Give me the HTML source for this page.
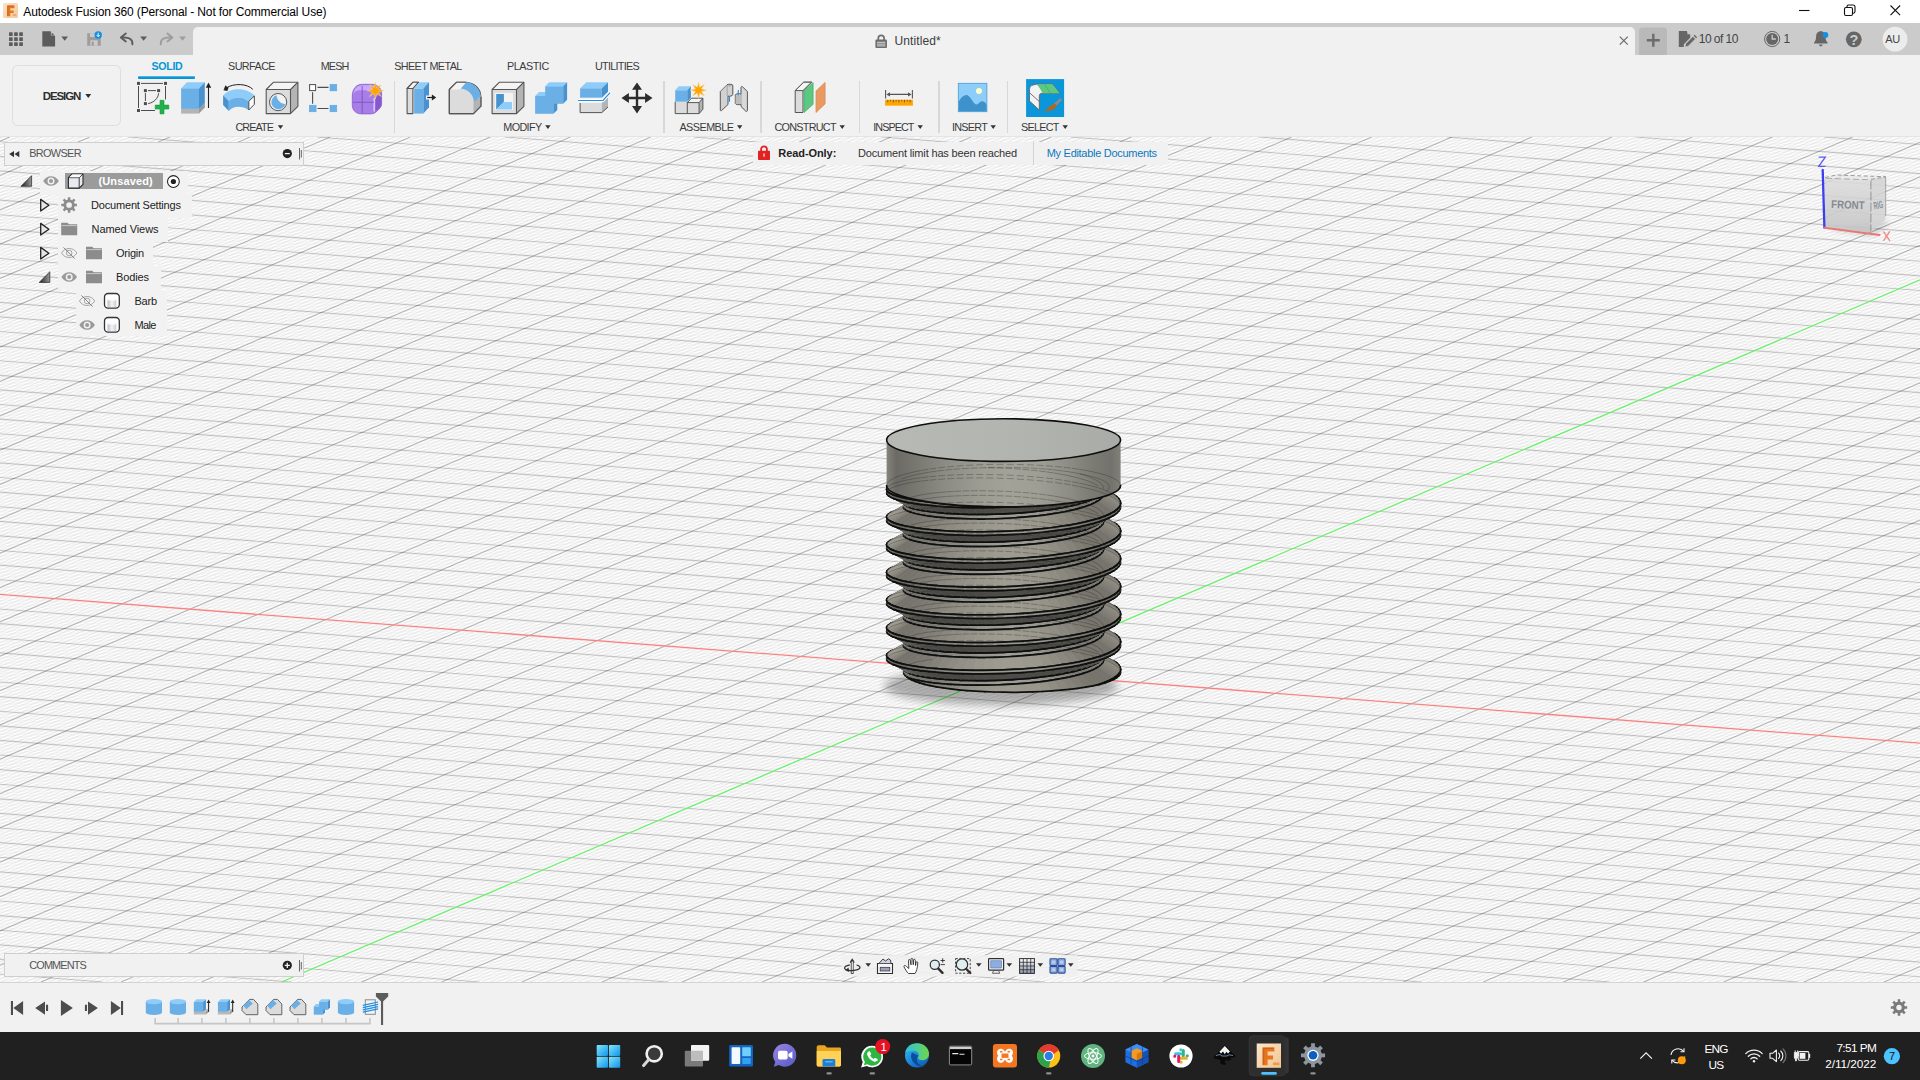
<!DOCTYPE html>
<html><head><meta charset="utf-8"><title>Autodesk Fusion 360</title>
<style>
*{box-sizing:border-box;margin:0;padding:0}
html,body{width:1920px;height:1080px;overflow:hidden;background:#f0f0f0}
body{font-family:"Liberation Sans",sans-serif;position:relative}
.abs,.t{position:absolute}
.t{white-space:nowrap}
svg{position:absolute;overflow:visible}
#titlebar{left:0;top:0;width:1920px;height:23px;background:#fff}
#appbar{left:0;top:23px;width:1920px;height:32px;background:#cbcbcb}
#doctab{left:193px;top:27px;width:1442px;height:28px;background:#f1f1f1;border-radius:5px 5px 0 0}
#toolbar{left:0;top:55px;width:1920px;height:82px;background:#f1f1f1;border-bottom:1px solid #e4e4e4}
#viewport{left:0;top:137px;width:1920px;height:845px;background:#fefefe;overflow:hidden}
#timeline{left:0;top:982px;width:1920px;height:50px;background:#f1f1f1;border-top:1px solid #d4d4d4}
#taskbar{left:0;top:1032px;width:1920px;height:48px;background:#202020}
.sep{position:absolute;width:1.600px;background:#d8d8d8;top:81px;height:51.500px}

.panel{position:absolute;background:#f1f1f1;border:1px solid #cfcfcf}
.rowbg{position:absolute;background:rgba(240,240,240,.82);height:24px}
</style></head><body>
<div id="titlebar" class="abs"><svg width="15" height="15" viewBox="0 0 15 15" style="left:3px;top:3px" ><defs><linearGradient id="flg" x1="0" y1="0" x2="1" y2="1"><stop offset="0" stop-color="#f9e3c8"/><stop offset="1" stop-color="#f3c999"/></linearGradient></defs>
<rect x="0" y="0" width="15" height="15" rx="1.5" fill="url(#flg)"/>
<path d="M4.2 2.6h7.2v2.6H7.3v2.2h3.3v2.5H7.3v3.4H4.2z" fill="#e8741e"/>
<path d="M4.2 2.6h7.2l-.9.9H5.2v9l-1 .8z" fill="#b4500f" opacity=".55"/>
<path d="M9.6 11.2h3.6v1.6H9.6z" fill="#e89a58" opacity=".8"/></svg><span class="t" style="left:23.30px;top:3.50px;font-size:12px;line-height:17px;color:#000;letter-spacing:-0.127px;">Autodesk Fusion 360 (Personal - Not for Commercial Use)</span><svg width="120" height="23" style="left:1790px;top:0" viewBox="0 0 120 23" fill="none" stroke="#111" stroke-width="1.1">
<path d="M9 10.5H19.5"/>
<rect x="54.5" y="7.5" width="8" height="8" rx="1.5"/><path d="M57 7.3V6.6a1.6 1.6 0 0 1 1.6-1.6H63a2 2 0 0 1 2 2v4.6a1.6 1.6 0 0 1-1.6 1.6H62.8"/>
<path d="M100.5 5.5l9.6 9.6M110.1 5.5l-9.6 9.6"/></svg></div>
<div id="appbar" class="abs"></div>
<div id="doctab" class="abs"></div>
<svg width="200" height="56" viewBox="0 0 200 56" style="left:0px;top:0px" ><rect x="9" y="32.3" width="3.7" height="3.7" rx=".6" fill="#5c5c5c"/><rect x="9" y="37.3" width="3.7" height="3.7" rx=".6" fill="#5c5c5c"/><rect x="9" y="42.3" width="3.7" height="3.7" rx=".6" fill="#5c5c5c"/><rect x="14.1" y="32.3" width="3.7" height="3.7" rx=".6" fill="#5c5c5c"/><rect x="14.1" y="37.3" width="3.7" height="3.7" rx=".6" fill="#5c5c5c"/><rect x="14.1" y="42.3" width="3.7" height="3.7" rx=".6" fill="#5c5c5c"/><rect x="19.2" y="32.3" width="3.7" height="3.7" rx=".6" fill="#5c5c5c"/><rect x="19.2" y="37.3" width="3.7" height="3.7" rx=".6" fill="#5c5c5c"/><rect x="19.2" y="42.3" width="3.7" height="3.7" rx=".6" fill="#5c5c5c"/><path d="M42.3 31.3h8.2l4.6 4.6v10.6H42.3z" fill="#5c5c5c"/><path d="M50.9 31.1v4.5h4.5z" fill="#cbcbcb"/><path d="M51.6 32.4v2.8h2.8z" fill="#5c5c5c"/><path d="M61.3 36.4h6.8l-3.4 4.4z" fill="#5c5c5c"/><path d="M87.2 33.2h10.6l3 3v9.5H87.2z" fill="#9d9d9d"/><rect x="90" y="33.2" width="6.2" height="3.8" fill="#cbcbcb"/><rect x="90.3" y="40.3" width="7.4" height="5.4" fill="#cbcbcb"/><rect x="91.6" y="41.6" width="2.2" height="4.1" fill="#9d9d9d"/><circle cx="98.2" cy="35" r="3.7" fill="#1390e0"/><path d="M98.2 32.8v3.6M96.6 35l1.6 1.7 1.6-1.7" stroke="#fff" stroke-width=".9" fill="none"/><path d="M132.4 44.4c.4-4.6-2.6-7.3-9.6-6.9" fill="none" stroke="#5c5c5c" stroke-width="1.9" stroke-linecap="round"/><path d="M125.8 33.6l-5 3.9 5 3.9" fill="none" stroke="#5c5c5c" stroke-width="1.9" stroke-linecap="round" stroke-linejoin="round"/><path d="M140.2 36.4h6.8l-3.4 4.4z" fill="#5c5c5c"/><path d="M160.8 44.4c-.4-4.6 2.6-7.3 9.6-6.9" fill="none" stroke="#9d9d9d" stroke-width="1.9" stroke-linecap="round"/><path d="M167.4 33.6l5 3.9-5 3.9" fill="none" stroke="#9d9d9d" stroke-width="1.9" stroke-linecap="round" stroke-linejoin="round"/><path d="M179.2 36.4h6.8l-3.4 4.4z" fill="#9d9d9d"/></svg><svg width="12.4" height="14" viewBox="0 0 12.4 14" style="left:875px;top:34px" ><path d="M3.3 6V4.3a2.9 2.9 0 0 1 5.8 0V6" fill="none" stroke="#6e6e6e" stroke-width="1.7"/>
<rect x=".4" y="5.6" width="11.6" height="8.4" rx="1" fill="#6e6e6e"/>
<path d="M2 8.3h8.4M2 10.1h8.4M2 11.9h8.4" stroke="#f1f1f1" stroke-width=".8"/></svg><span class="t" style="left:894.60px;top:32.80px;font-size:12px;line-height:17px;color:#3c3c3c;letter-spacing:0.092px;">Untitled*</span><svg width="1920" height="56" viewBox="0 0 1920 56" style="left:0px;top:0px" ><path d="M1619.8 36.6l8 8M1627.8 36.6l-8 8" stroke="#6a6a6a" stroke-width="1.2"/><path d="M1639 55V31a3.5 3.5 0 0 1 3.5-3.5h21A3.5 3.5 0 0 1 1667 31V55z" fill="#b9b9b9"/><path d="M1646.8 40.2h13M1653.3 33.7v13" stroke="#6c6c6c" stroke-width="2.4"/><path d="M1678.8 30.9h7.8l3.6 3.6v3.2l-6.4 6.6v2.6h-5z" fill="#666"/><path d="M1687.3 30.6v3.7h3.7z" fill="#cbcbcb"/><path d="M1685 46.9l.7-3.2 7.2-7.3 2.5 2.5-7.2 7.3z" fill="#666" stroke="#cbcbcb" stroke-width=".7"/><path d="M1693.6 35.7l1-1 2.5 2.5-1 1z" fill="#666"/><circle cx="1772.2" cy="39" r="7.6" fill="none" stroke="#666" stroke-width="1"/><circle cx="1772.2" cy="39" r="6" fill="#666"/><path d="M1772.2 34.8V39h3.6" stroke="#cbcbcb" stroke-width="1.3" fill="none"/><path d="M1820.8 31.2c-3.2 0-4.7 2.4-4.7 5.4 0 3.8-1.3 5-2 5.9v.9h13.4v-.9c-.7-.9-2-2.100-2-5.900 0-3-1.500-5.400-4.700-5.400z" fill="#666"/><path d="M1819 44.600a1.800 1.800 0 0 0 3.600 0z" fill="#666"/><circle cx="1825.4" cy="35" r="2.9" fill="#1390e0"/><circle cx="1853.8" cy="39.300" r="7.900" fill="#666"/><circle cx="1895" cy="39.200" r="12.400" fill="#ececec"/></svg><span class="t" style="left:1698.80px;top:30.50px;font-size:12px;line-height:17px;color:#444;letter-spacing:-0.548px;">10 of 10</span><span class="t" style="left:1783.60px;top:30.50px;font-size:12px;line-height:17px;color:#444;letter-spacing:-1.776px;">1</span><span class="t" style="left:1849.60px;top:29.60px;font-size:14.5px;line-height:20px;color:#cbcbcb;letter-spacing:-0.455px;font-weight:bold;">?</span><span class="t" style="left:1885.30px;top:31.80px;font-size:11px;line-height:15px;color:#444;letter-spacing:-0.441px;">AU</span>
<div id="toolbar" class="abs"></div>
<div class="abs" style="left:11.600px;top:65.200px;width:109.600px;height:61.200px;border:1.500px solid #dedede;border-radius:5.500px"></div><span class="t" style="left:42.70px;top:87.80px;font-size:11.5px;line-height:16px;color:#2f2f2f;letter-spacing:-1.099px;font-weight:bold;">DESIGN</span><span class="t" style="left:151.50px;top:58.80px;font-size:10.6px;line-height:15px;color:#0696d7;letter-spacing:-0.278px;font-weight:bold;">SOLID</span><span class="t" style="left:228.00px;top:58.80px;font-size:10.8px;line-height:15px;color:#3c3c3c;letter-spacing:-0.573px;">SURFACE</span><span class="t" style="left:320.80px;top:58.80px;font-size:10.8px;line-height:15px;color:#3c3c3c;letter-spacing:-0.926px;">MESH</span><span class="t" style="left:394.20px;top:58.80px;font-size:10.8px;line-height:15px;color:#3c3c3c;letter-spacing:-0.593px;">SHEET METAL</span><span class="t" style="left:507.00px;top:58.80px;font-size:10.8px;line-height:15px;color:#3c3c3c;letter-spacing:-0.467px;">PLASTIC</span><span class="t" style="left:595.00px;top:58.80px;font-size:10.8px;line-height:15px;color:#3c3c3c;letter-spacing:-0.713px;">UTILITIES</span><div class="abs" style="left:138.200px;top:76.200px;width:56.500px;height:3.200px;border-radius:1px;background:linear-gradient(#7cc6ee,#0696d7 45%)"></div><div class="sep" style="left:393.7px"></div><div class="sep" style="left:663px"></div><div class="sep" style="left:760px"></div><div class="sep" style="left:858.7px"></div><div class="sep" style="left:938px"></div><div class="sep" style="left:1006.8px"></div><span class="t" style="left:235.40px;top:119.70px;font-size:10.8px;line-height:15px;color:#3a3a3a;letter-spacing:-0.901px;">CREATE</span><span class="t" style="left:503.30px;top:119.70px;font-size:10.8px;line-height:15px;color:#3a3a3a;letter-spacing:-0.633px;">MODIFY</span><span class="t" style="left:679.40px;top:119.70px;font-size:10.8px;line-height:15px;color:#3a3a3a;letter-spacing:-0.517px;">ASSEMBLE</span><span class="t" style="left:774.40px;top:119.70px;font-size:10.8px;line-height:15px;color:#3a3a3a;letter-spacing:-0.710px;">CONSTRUCT</span><span class="t" style="left:873.30px;top:119.70px;font-size:10.8px;line-height:15px;color:#3a3a3a;letter-spacing:-0.944px;">INSPECT</span><span class="t" style="left:952.00px;top:119.70px;font-size:10.8px;line-height:15px;color:#3a3a3a;letter-spacing:-0.735px;">INSERT</span><span class="t" style="left:1021.00px;top:119.70px;font-size:10.8px;line-height:15px;color:#3a3a3a;letter-spacing:-0.711px;">SELECT</span><svg width="1920" height="137" viewBox="0 0 1920 137" style="left:0px;top:0px" ><g stroke="#4d4d4d" stroke-width="1" fill="none"><path d="M141 83.400H163M138.500 86V108M141 110.500H155M165.500 86V99.500"/><path d="M148 90.600H156M145.400 93V101M158.600 93.300C158 98.500 154 102.500 148.200 103.600"/></g><rect x="137" y="81.9" width="3" height="3" fill="#4d4d4d"/><rect x="164" y="81.9" width="3" height="3" fill="#4d4d4d"/><rect x="137" y="109" width="3" height="3" fill="#4d4d4d"/><rect x="143.9" y="89.1" width="3" height="3" fill="#4d4d4d"/><rect x="157.1" y="89.1" width="3" height="3" fill="#4d4d4d"/><rect x="143.9" y="102.1" width="3" height="3" fill="#4d4d4d"/><path d="M160 100.300h4v4.800h4.800v4h-4.800v4.800h-4v-4.800h-4.800v-4h4.800z" fill="#22b14c" stroke="#189a3e" stroke-width=".6"/><path d="M181.1 108.8H199V113.6H181.1z" fill="#b4b4b4"/><path d="M181.1 108.8l5.8 -6H204.8L199 108.8z" fill="#b4b4b4"/><path d="M199 108.8l5.8 -6V107.6L199 113.6z" fill="#9a9a9a"/><path d="M181.1 88.2H199V108.8H181.1z" fill="#6ab0e6"/><path d="M181.1 88.2l5.8 -6H204.8L199 88.2z" fill="#8ecdfa"/><path d="M199 88.2l5.8 -6V102.8L199 108.8z" fill="#4792cf"/><path d="M208.500 108V86" stroke="#222" stroke-width="1.100"/><path d="M208.500 82.600l2.700 5.200h-5.400z" fill="#222"/><path d="M223.100 95.300C228 90.500 233 89.200 238.300 89.200S249.500 90.800 254.600 95.300L248.500 101.200C245 98.600 241.500 97.600 238.300 97.600S231 98.800 228.800 101z" fill="#8ecdfa"/><path d="M223.100 95.300L228.800 101V110.900L223.100 105.100z" fill="#4792cf"/><path d="M228.800 101C231 98.800 235 97.600 238.300 97.600S245 98.600 248.500 101.200V110C245.500 107.800 241.800 106.800 238.300 106.800S231.500 108.200 228.800 110.900z" fill="#6ab0e6"/><path d="M248.800 101.300L254.300 96V104.400L248.800 110z" fill="#fff" stroke="#444" stroke-width="1"/><path d="M252.800 89.300C247 83.500 234 83 226 88" fill="none" stroke="#222" stroke-width="1"/><path d="M223.400 90.200l5.200-3.600-1.200 4.300z" fill="#222"/><path d="M223.600 90l1.800-4.700 3.200 3.200z" fill="#222"/><path d="M266.2 89.5H290.5V113.6H266.2z" fill="#dcdcdc"/><path d="M266.2 89.5l7.4 -7.3H297.9L290.5 89.5z" fill="#f4f4f4"/><path d="M290.5 89.5l7.4 -7.3V106.3L290.5 113.6z" fill="#b4b4b4"/><path d="M266.2 113.6V89.5L273.6 82.2H297.9V106.3L290.5 113.6z" fill="none" stroke="#555" stroke-width="1.1" stroke-linejoin="round"/><path d="M266.2 89.5H290.5V113.6M290.5 89.5L297.9 82.2" fill="none" stroke="#555" stroke-width="1.1" stroke-linejoin="round"/><circle cx="278.100" cy="102.100" r="8.600" fill="#f2f2f2" stroke="#555" stroke-width="1"/><path d="M276.500 95.300A7.100 7.100 0 1 0 285.300 104.200C280.500 103.600 277 100.300 276.500 95.300z" fill="#6ab0e6"/><path d="M317.500 87.400H328.500M312.600 92.300V103.700M317.500 108.500H328.500" stroke="#4d4d4d" stroke-width="1.100"/><rect x="309.600" y="84.600" width="6" height="6" fill="#fff" stroke="#4d4d4d" stroke-width="1"/><rect x="330" y="84.3" width="6.800" height="6.600" fill="#6ab0e6" stroke="#5aa4de" stroke-width=".5"/><rect x="309.3" y="105.2" width="6.800" height="6.600" fill="#6ab0e6" stroke="#5aa4de" stroke-width=".5"/><rect x="330" y="105.2" width="6.800" height="6.600" fill="#6ab0e6" stroke="#5aa4de" stroke-width=".5"/><path d="M352.300 96c0-7 4-11.700 10-11.700h9c6 0 10.300 4 10.300 9.500v9.500c0 2.500-.8 4-2.500 5.700l-2.500 2.500c-1.700 1.700-3.500 2.400-6 2.400h-9c-5.500 0-9.300-3.500-9.300-9z" fill="#a77de8" stroke="#8a5ccc" stroke-width=".8"/><path d="M353.500 94c.5-5.500 4-8.700 9-8.700h8.500c3 0 5 .8 6.500 2.300l-3.500 4c-1.500-1-3-1.400-5-1.400h-9c-3.500 0-5.500 1.500-6.500 3.800z" fill="#caa8ff"/><path d="M375.500 97.500l5.800-4.500v10.500c0 2-1 3.500-2.300 4.800l-3.500 3.500z" fill="#8459cf"/><path d="M374.200 98v13.500" stroke="#d9c4ff" stroke-width="1.600"/><path d="M362.200 86V113.500M353 102.300H374" stroke="#7d55c2" stroke-width=".9" fill="none"/><path d="M375.4 82.2L376.7 87.6L381.3 84.7L378.4 89.3L383.8 90.6L378.4 91.9L381.3 96.5L376.7 93.6L375.4 99.0L374.1 93.6L369.5 96.5L372.4 91.9L367.0 90.6L372.4 89.3L369.5 84.7L374.1 87.6z" fill="#ffa500" stroke="#f6d9a0" stroke-width=".5"/><path d="M407.100 113.600V88.500L413.100 82.200H418.500L412.900 88.500V113.600z" fill="#dcdcdc" stroke="#555" stroke-width="1.100" stroke-linejoin="round"/><path d="M407.100 88.500L413.100 82.200H418.500L412.900 88.500z" fill="#f4f4f4" stroke="#555" stroke-width="1.100" stroke-linejoin="round"/><path d="M414.1 88.5H423.4V113.6H414.1z" fill="#6ab0e6"/><path d="M414.1 88.5l5.6 -6.3H429L423.4 88.5z" fill="#8ecdfa"/><path d="M423.4 88.5l5.6 -6.3V107.3L423.4 113.6z" fill="#4792cf"/><rect x="426" y="95.500" width="5" height="4" fill="#f1f1f1"/><path d="M427.200 97.500H433" stroke="#222" stroke-width="1.200"/><path d="M436.200 97.500l-4.300-2.900v5.800z" fill="#222"/><path d="M449.300 113.600V89.500L456.700 82.200H466C474 82.600 480.500 88.500 480.900 96.500V106.200L473.500 113.600z" fill="#dcdcdc" stroke="#555" stroke-width="1.100" stroke-linejoin="round"/><path d="M449.300 89.500L456.700 82.200H466L460.500 88.700C459 89.300 457 89.500 455 89.500z" fill="#f4f4f4"/><path d="M473.500 101.500L480.900 96.500V106.200L473.500 113.600z" fill="#b4b4b4"/><path d="M460.800 88.600L466.500 82.200C474.500 83 480.300 89 480.900 96.300L474 102C473.500 95 468.500 89.500 460.800 88.600z" fill="#6ab0e6"/><path d="M449.300 113.600V89.500L456.700 82.200H466M480.900 97V106.200L473.500 113.600H449.300" fill="none" stroke="#555" stroke-width="1.100" stroke-linejoin="round"/><path d="M492.1 89.5H516.5V113.6H492.1z" fill="#dcdcdc"/><path d="M492.1 89.5l7.4 -7.3H523.9L516.5 89.5z" fill="#f4f4f4"/><path d="M516.5 89.5l7.4 -7.3V106.3L516.5 113.6z" fill="#b4b4b4"/><path d="M492.1 113.6V89.5L499.5 82.2H523.9V106.3L516.5 113.6z" fill="none" stroke="#555" stroke-width="1.1" stroke-linejoin="round"/><path d="M492.1 89.5H516.5V113.6M516.5 89.5L523.9 82.2" fill="none" stroke="#555" stroke-width="1.1" stroke-linejoin="round"/><rect x="494.800" y="92.900" width="18.200" height="17" fill="#f3f3f3"/><path d="M496.200 93.900H503.900V102.100L496.200 109.400z" fill="#4792cf"/><path d="M503.900 102.100H512V109.400H496.200z" fill="#8ecdfa"/><path d="M535.1 96H553.4V113.8H535.1z" fill="#6ab0e6"/><path d="M535.1 96l3.9 -3.9H557.3L553.4 96z" fill="#8ecdfa"/><path d="M553.4 96l3.9 -3.9V109.9L553.4 113.8z" fill="#4792cf"/><path d="M545.2 86.2H563.2V103.8H545.2z" fill="#6ab0e6"/><path d="M545.2 86.2l3.9 -4H567.1L563.2 86.2z" fill="#8ecdfa"/><path d="M563.2 86.2l3.9 -4V99.8L563.2 103.8z" fill="#4792cf"/><rect x="545" y="96" width="8.400" height="10" fill="#6ab0e6"/><path d="M580.1 103H601.8V112.6H580.1z" fill="#dcdcdc"/><path d="M580.1 103l6.2 -5.6H608L601.8 103z" fill="#f4f4f4"/><path d="M601.8 103l6.2 -5.6V107L601.8 112.6z" fill="#b4b4b4"/><path d="M580.100 103V112.600H601.800L608 107" fill="none" stroke="#555" stroke-width="1"/><path d="M580.1 88.2H601.8V97.7H580.1z" fill="#6ab0e6"/><path d="M580.1 88.2l6.2 -6H608L601.8 88.2z" fill="#8ecdfa"/><path d="M601.8 88.2l6.2 -6V91.7L601.8 97.7z" fill="#4792cf"/><path d="M578 100.500H603L609.900 92.800" fill="none" stroke="#fff" stroke-width="3"/><path d="M578 100.500H603L609.900 92.800" fill="none" stroke="#1e8fe6" stroke-width="1.200"/><path d="M627 98H647M637 88V108" stroke="#2d2d2d" stroke-width="2.400"/><path d="M637 82.400l5 7.400h-10zM637 113.400l5-7.400h-10zM621.500 98l7.400-5v10zM652.500 98l-7.400-5v10z" fill="#2d2d2d"/><path d="M675.2 101.7H687.3V113.6H675.2z" fill="#dcdcdc"/><path d="M675.2 101.7l0 0H687.3L687.3 101.7z" fill="#dcdcdc"/><path d="M687.3 101.7l0 0V113.6L687.3 113.6z" fill="#dcdcdc"/><path d="M687.3 102.6H699.1V113.6H687.3z" fill="#dcdcdc"/><path d="M687.3 102.6l3.8 -4.4H702.9L699.1 102.6z" fill="#f4f4f4"/><path d="M699.1 102.6l3.8 -4.4V109.2L699.1 113.6z" fill="#b4b4b4"/><path d="M675.200 101.700V113.600H699.100L702.900 109.200V98.200H691.500L687.300 102.600M687.300 102V113.600M687.300 102.600H699.100V113.600M699.100 102.600L702.900 98.200" fill="none" stroke="#555" stroke-width="1" stroke-linejoin="round"/><path d="M675.2 90.2H687.3V101.7H675.2z" fill="#6ab0e6"/><path d="M675.2 90.2l3.6 -4H690.9L687.3 90.2z" fill="#8ecdfa"/><path d="M687.3 90.2l3.6 -4V97.7L687.3 101.7z" fill="#4792cf"/><path d="M698.5 81.9L699.7 87.2L704.4 84.3L701.5 89.0L706.8 90.2L701.5 91.4L704.4 96.1L699.7 93.2L698.5 98.5L697.3 93.2L692.6 96.1L695.5 91.4L690.2 90.2L695.5 89.0L692.6 84.3L697.3 87.2z" fill="#ffa500" stroke="#f6d9a0" stroke-width=".5"/><path d="M720.300 91.500L727 84.800C728 84 732.500 84 732.800 85.200V94.500C732.800 96 729.500 96.500 728 96.200V104.500L721.500 110.600C720.800 111 720.300 110.800 720.300 110z" fill="#d2d2d2" stroke="#555" stroke-width="1" stroke-linejoin="round"/><path d="M727.200 85.200V96M720.600 91.600L727 85" fill="none" stroke="#999" stroke-width=".8"/><ellipse cx="729.800" cy="85.800" rx="1.800" ry=".7" fill="#aaa"/><path d="M741 87.500C741 86.500 741.800 86.200 742.500 86.800L747.400 91.500V110.500C747.400 111.500 746.500 111.800 745.800 111.200L741 106.500V104.200C739.500 105 735.500 104.800 735.300 103.400V95C735.500 93.600 739.500 93.300 741 94.200z" fill="#d8d8d8" stroke="#555" stroke-width="1" stroke-linejoin="round"/><path d="M741 94.200V104.200" stroke="#999" stroke-width=".8"/><path d="M735.600 95.500H740.800V103.800H735.600z" fill="#bcbcbc"/><path d="M729.500 96.800V101.800M738.300 90V95.500" stroke="#1e8fe6" stroke-width="1.100"/><path d="M795.200 112.500V90.600L803.700 82.200H811.500L803 90.600V112.500z" fill="#dcdcdc" stroke="#555" stroke-width="1" stroke-linejoin="round"/><path d="M795.200 90.600L803.700 82.200H811.500L803 90.600z" fill="#f4f4f4" stroke="#555" stroke-width="1" stroke-linejoin="round"/><path d="M804 90.800L813.100 82.600V104.300L804 112.500z" fill="#5cc882" stroke="#3fae68" stroke-width=".7"/><path d="M816 91L825.100 82.400V103.900L816 112.500z" fill="#e89a62" stroke="#d98850" stroke-width=".7"/><rect x="885.100" y="99.800" width="27.800" height="5.900" fill="#ffa500"/><path d="M887.8 99.800v2.6M890.58 99.800v1.6M893.36 99.800v2.6M896.14 99.800v1.6M898.92 99.800v2.6M901.7 99.800v1.6M904.48 99.800v2.6M907.26 99.800v1.6M910.04 99.800v2.6" stroke="#5a4a20" stroke-width=".8"/><path d="M885.600 90V98.400M912.400 90V98.400M888 94.400H910" stroke="#555" stroke-width="1.100"/><path d="M886.400 94.400l3.600-2.200v4.400zM911.600 94.400l-3.600-2.200v4.400z" fill="#555"/><rect x="958.300" y="83.300" width="28.600" height="28.400" fill="#8ccdfa" stroke="#4a9ad4" stroke-width=".8"/><path d="M958.700 101.500C962 96 965 94.200 967.500 95.200C970.500 96.500 973 103 976 104.500C978 105.300 979.500 101.500 982 101.300C984 101.200 985.500 103 986.500 104.500V111.300H958.700z" fill="#3e92cc"/><circle cx="979" cy="91" r="3" fill="#ffffc8"/><rect x="1026.100" y="79.100" width="38" height="37.900" fill="#0a96d8"/><path d="M1033 85L1036.500 84.200H1052.500L1059.500 93.300H1042C1040 93.300 1039.300 94.500 1039.300 96.500V110L1029.500 101V89.500C1029.500 87 1030.800 85.500 1033 85z" fill="#f2f2f2" stroke="#666" stroke-width=".9" stroke-linejoin="round"/><path d="M1036.500 84.200H1052.500L1059.500 93.300H1042.500C1041 90 1039 86.500 1036.500 84.200z" fill="#5cc882"/><path d="M1044.500 84.300L1050.500 93.200" stroke="#3fae68" stroke-width=".8"/><path d="M1029.800 93L1039.300 101.500" stroke="#666" stroke-width=".9"/><path d="M1054 103.500L1060.500 98L1062.300 99.800L1056 106z" fill="#8a8a8a"/><path d="M1054.800 103.500L1056.500 105.500C1056.500 109 1052 111.500 1044 111.300C1047 109.500 1050 105 1054.800 103.500z" fill="#a86a2a"/><path d="M85.300 94.100h5.900l-2.950 3.800z" fill="#2f2f2f"/><path d="M277.8 125.3h5.400l-2.700 3.600z" fill="#333"/><path d="M545.2 125.3h5.400l-2.700 3.600z" fill="#333"/><path d="M737 125.3h5.400l-2.700 3.600z" fill="#333"/><path d="M839.5 125.3h5.400l-2.700 3.600z" fill="#333"/><path d="M917.5 125.3h5.400l-2.700 3.600z" fill="#333"/><path d="M990.5 125.3h5.400l-2.700 3.600z" fill="#333"/><path d="M1062.5 125.3h5.400l-2.700 3.600z" fill="#333"/></svg>
<div id="viewport" class="abs">
<svg id="grid" width="1920" height="845" viewBox="0 0 1920 845" style="left:0;top:0">
<g fill="none" stroke="#000" stroke-width="1">
<path stroke-opacity=".03" stroke-width="1" shape-rendering="crispEdges" d="M0.0 844.3L8.7 845.0M0.0 842.9L27.5 845.0M0.0 841.4L46.3 845.0M0.0 839.9L65.2 845.0M0.0 838.5L84.0 845.0M0.0 835.6L121.7 845.0M0.0 834.1L140.5 845.0M0.0 832.6L159.4 845.0M0.0 831.2L178.2 845.0M0.0 829.7L197.1 845.0M0.0 828.3L215.9 845.0M0.0 826.8L234.7 845.0M0.0 825.3L253.6 845.0M0.0 823.9L272.4 845.0M0.0 821.0L310.1 845.0M0.0 819.5L328.9 845.0M0.0 818.0L347.8 845.0M0.0 816.6L366.6 845.0M0.0 815.1L385.4 845.0M0.0 813.7L404.3 845.0M0.0 812.2L423.1 845.0M0.0 810.7L442.0 845.0M0.0 809.3L460.8 845.0M0.0 806.4L498.5 845.0M0.0 804.9L517.3 845.0M0.0 803.4L536.1 845.0M0.0 802.0L555.0 845.0M0.0 800.5L573.8 845.0M0.0 799.1L592.7 845.0M0.0 797.6L611.5 845.0M0.0 796.1L630.3 845.0M0.0 794.7L649.2 845.0M0.0 791.8L686.9 845.0M0.0 790.3L705.7 845.0M0.0 788.8L724.5 845.0M0.0 787.4L743.4 845.0M0.0 785.9L762.2 845.0M0.0 784.5L781.1 845.0M0.0 783.0L799.9 845.0M0.0 781.5L818.7 845.0M0.0 780.1L837.6 845.0M0.0 777.2L875.2 845.0M0.0 775.7L894.1 845.0M0.0 774.2L912.9 845.0M0.0 772.8L931.8 845.0M0.0 771.3L950.6 845.0M0.0 769.9L969.4 845.0M0.0 768.4L988.3 845.0M0.0 766.9L1007.1 845.0M0.0 765.5L1026.0 845.0M0.0 762.6L1063.6 845.0M0.0 761.1L1082.5 845.0M0.0 759.6L1101.3 845.0M0.0 758.2L1120.2 845.0M0.0 756.7L1139.0 845.0M0.0 755.3L1157.8 845.0M0.0 753.8L1176.7 845.0M0.0 752.3L1195.5 845.0M0.0 750.9L1214.3 845.0M0.0 747.9L1252.0 845.0M0.0 746.5L1270.9 845.0M0.0 745.0L1289.7 845.0M0.0 743.6L1308.5 845.0M0.0 742.1L1327.4 845.0M0.0 740.6L1346.2 845.0M0.0 739.2L1365.1 845.0M0.0 737.7L1383.9 845.0M0.0 736.3L1402.7 845.0M0.0 733.3L1440.4 845.0M0.0 731.9L1459.3 845.0M0.0 730.4L1478.1 845.0M0.0 729.0L1496.9 845.0M0.0 727.5L1515.8 845.0M0.0 726.0L1534.6 845.0M0.0 724.6L1553.4 845.0M0.0 723.1L1572.3 845.0M0.0 721.7L1591.1 845.0M0.0 718.7L1628.8 845.0M0.0 717.3L1647.6 845.0M0.0 715.8L1666.5 845.0M0.0 714.4L1685.3 845.0M0.0 712.9L1704.2 845.0M0.0 711.4L1723.0 845.0M0.0 710.0L1741.8 845.0M0.0 708.5L1760.7 845.0M0.0 707.1L1779.5 845.0M0.0 704.1L1817.2 845.0M0.0 702.7L1836.0 845.0M0.0 701.2L1854.9 845.0M0.0 699.8L1873.7 845.0M0.0 698.3L1892.5 845.0M0.0 696.8L1911.4 845.0M0.0 695.4L1920.0 844.2M0.0 693.9L1920.0 842.7M0.0 692.5L1920.0 841.3M0.0 689.5L1920.0 838.4M0.0 688.1L1920.0 836.9M0.0 686.6L1920.0 835.4M0.0 685.2L1920.0 834.0M0.0 683.7L1920.0 832.5M0.0 682.2L1920.0 831.1M0.0 680.8L1920.0 829.6M0.0 679.3L1920.0 828.1M0.0 677.9L1920.0 826.7M0.0 674.9L1920.0 823.8M0.0 673.5L1920.0 822.3M0.0 672.0L1920.0 820.8M0.0 670.6L1920.0 819.4M0.0 669.1L1920.0 817.9M0.0 667.6L1920.0 816.5M0.0 666.2L1920.0 815.0M0.0 664.7L1920.0 813.5M0.0 663.3L1920.0 812.1M0.0 660.3L1920.0 809.2M0.0 658.9L1920.0 807.7M0.0 657.4L1920.0 806.2M0.0 656.0L1920.0 804.8M0.0 654.5L1920.0 803.3M0.0 653.0L1920.0 801.9M0.0 651.6L1920.0 800.4M0.0 650.1L1920.0 798.9M0.0 648.6L1920.0 797.5M0.0 645.7L1920.0 794.6M0.0 644.3L1920.0 793.1M0.0 642.8L1920.0 791.6M0.0 641.3L1920.0 790.2M0.0 639.9L1920.0 788.7M0.0 638.4L1920.0 787.3M0.0 637.0L1920.0 785.8M0.0 635.5L1920.0 784.3M0.0 634.0L1920.0 782.9M0.0 631.1L1920.0 780.0M0.0 629.7L1920.0 778.5M0.0 628.2L1920.0 777.0M0.0 626.7L1920.0 775.6M0.0 625.3L1920.0 774.1M0.0 623.8L1920.0 772.7M0.0 622.4L1920.0 771.2M0.0 620.9L1920.0 769.7M0.0 619.4L1920.0 768.3M0.0 616.5L1920.0 765.4M0.0 615.1L1920.0 763.9M0.0 613.6L1920.0 762.4M0.0 612.1L1920.0 761.0M0.0 610.7L1920.0 759.5M0.0 609.2L1920.0 758.1M0.0 607.8L1920.0 756.6M0.0 606.3L1920.0 755.1M0.0 604.8L1920.0 753.7M0.0 601.9L1920.0 750.7M0.0 600.5L1920.0 749.3M0.0 599.0L1920.0 747.8M0.0 597.5L1920.0 746.4M0.0 596.1L1920.0 744.9M0.0 594.6L1920.0 743.4M0.0 593.2L1920.0 742.0M0.0 591.7L1920.0 740.5M0.0 590.2L1920.0 739.1M0.0 587.3L1920.0 736.1M0.0 585.9L1920.0 734.7M0.0 584.4L1920.0 733.2M0.0 582.9L1920.0 731.8M0.0 581.5L1920.0 730.3M0.0 580.0L1920.0 728.8M0.0 578.6L1920.0 727.4M0.0 577.1L1920.0 725.9M0.0 575.6L1920.0 724.5M0.0 572.7L1920.0 721.5M0.0 571.3L1920.0 720.1M0.0 569.8L1920.0 718.6M0.0 568.3L1920.0 717.2M0.0 566.9L1920.0 715.7M0.0 565.4L1920.0 714.2M0.0 564.0L1920.0 712.8M0.0 562.5L1920.0 711.3M0.0 561.0L1920.0 709.9M0.0 558.1L1920.0 706.9M0.0 556.7L1920.0 705.5M0.0 555.2L1920.0 704.0M0.0 553.7L1920.0 702.6M0.0 552.3L1920.0 701.1M0.0 550.8L1920.0 699.6M0.0 549.3L1920.0 698.2M0.0 547.9L1920.0 696.7M0.0 546.4L1920.0 695.3M0.0 543.5L1920.0 692.3M0.0 542.0L1920.0 690.9M0.0 540.6L1920.0 689.4M0.0 539.1L1920.0 688.0M0.0 537.7L1920.0 686.5M0.0 536.2L1920.0 685.0M0.0 534.7L1920.0 683.6M0.0 533.3L1920.0 682.1M0.0 531.8L1920.0 680.7M0.0 528.9L1920.0 677.7M0.0 527.4L1920.0 676.3M0.0 526.0L1920.0 674.8M0.0 524.5L1920.0 673.4M0.0 523.1L1920.0 671.9M0.0 521.6L1920.0 670.4M0.0 520.1L1920.0 669.0M0.0 518.7L1920.0 667.5M0.0 517.2L1920.0 666.1M0.0 514.3L1920.0 663.1M0.0 512.8L1920.0 661.7M0.0 511.4L1920.0 660.2M0.0 509.9L1920.0 658.8M0.0 508.5L1920.0 657.3M0.0 507.0L1920.0 655.8M0.0 505.5L1920.0 654.4M0.0 504.1L1920.0 652.9M0.0 502.6L1920.0 651.4M0.0 499.7L1920.0 648.5M0.0 498.2L1920.0 647.1M0.0 496.8L1920.0 645.6M0.0 495.3L1920.0 644.1M0.0 493.9L1920.0 642.7M0.0 492.4L1920.0 641.2M0.0 490.9L1920.0 639.8M0.0 489.5L1920.0 638.3M0.0 488.0L1920.0 636.8M0.0 485.1L1920.0 633.9M0.0 483.6L1920.0 632.5M0.0 482.2L1920.0 631.0M0.0 480.7L1920.0 629.5M0.0 479.3L1920.0 628.1M0.0 477.8L1920.0 626.6M0.0 476.3L1920.0 625.2M0.0 474.9L1920.0 623.7M0.0 473.4L1920.0 622.2M0.0 470.5L1920.0 619.3M0.0 469.0L1920.0 617.9M0.0 467.6L1920.0 616.4M0.0 466.1L1920.0 614.9M0.0 464.7L1920.0 613.5M0.0 463.2L1920.0 612.0M0.0 461.7L1920.0 610.6M0.0 460.3L1920.0 609.1M0.0 458.8L1920.0 607.6M0.0 455.9L1920.0 604.7M0.0 454.4L1920.0 603.3M0.0 453.0L1920.0 601.8M0.0 451.5L1920.0 600.3M0.0 450.1L1920.0 598.9M0.0 448.6L1920.0 597.4M0.0 447.1L1920.0 596.0M0.0 445.7L1920.0 594.5M0.0 444.2L1920.0 593.0M0.0 441.3L1920.0 590.1M0.0 439.8L1920.0 588.7M0.0 438.4L1920.0 587.2M0.0 436.9L1920.0 585.7M0.0 435.4L1920.0 584.3M0.0 434.0L1920.0 582.8M0.0 432.5L1920.0 581.4M0.0 431.1L1920.0 579.9M0.0 429.6L1920.0 578.4M0.0 426.7L1920.0 575.5M0.0 425.2L1920.0 574.1M0.0 423.8L1920.0 572.6M0.0 422.3L1920.0 571.1M0.0 420.8L1920.0 569.7M0.0 419.4L1920.0 568.2M0.0 417.9L1920.0 566.8M0.0 416.5L1920.0 565.3M0.0 415.0L1920.0 563.8M0.0 412.1L1920.0 560.9M0.0 410.6L1920.0 559.5M0.0 409.2L1920.0 558.0M0.0 407.7L1920.0 556.5M0.0 406.2L1920.0 555.1M0.0 404.8L1920.0 553.6M0.0 403.3L1920.0 552.1M0.0 401.9L1920.0 550.7M0.0 400.4L1920.0 549.2M0.0 397.5L1920.0 546.3M0.0 396.0L1920.0 544.8M0.0 394.6L1920.0 543.4M0.0 393.1L1920.0 541.9M0.0 391.6L1920.0 540.5M0.0 390.2L1920.0 539.0M0.0 388.7L1920.0 537.5M0.0 387.3L1920.0 536.1M0.0 385.8L1920.0 534.6M0.0 382.9L1920.0 531.7M0.0 381.4L1920.0 530.2M0.0 380.0L1920.0 528.8M0.0 378.5L1920.0 527.3M0.0 377.0L1920.0 525.9M0.0 375.6L1920.0 524.4M0.0 374.1L1920.0 522.9M0.0 372.7L1920.0 521.5M0.0 371.2L1920.0 520.0M0.0 368.3L1920.0 517.1M0.0 366.8L1920.0 515.6M0.0 365.4L1920.0 514.2M0.0 363.9L1920.0 512.7M0.0 362.4L1920.0 511.3M0.0 361.0L1920.0 509.8M0.0 359.5L1920.0 508.3M0.0 358.1L1920.0 506.9M0.0 356.6L1920.0 505.4M0.0 353.7L1920.0 502.5M0.0 352.2L1920.0 501.0M0.0 350.8L1920.0 499.6M0.0 349.3L1920.0 498.1M0.0 347.8L1920.0 496.7M0.0 346.4L1920.0 495.2M0.0 344.9L1920.0 493.7M0.0 343.4L1920.0 492.3M0.0 342.0L1920.0 490.8M0.0 339.1L1920.0 487.9M0.0 337.6L1920.0 486.4M0.0 336.1L1920.0 485.0M0.0 334.7L1920.0 483.5M0.0 333.2L1920.0 482.1M0.0 331.8L1920.0 480.6M0.0 330.3L1920.0 479.1M0.0 328.8L1920.0 477.7M0.0 327.4L1920.0 476.2M0.0 324.5L1920.0 473.3M0.0 323.0L1920.0 471.8M0.0 321.5L1920.0 470.4M0.0 320.1L1920.0 468.9M0.0 318.6L1920.0 467.5M0.0 317.2L1920.0 466.0M0.0 315.7L1920.0 464.5M0.0 314.2L1920.0 463.1M0.0 312.8L1920.0 461.6M0.0 309.9L1920.0 458.7M0.0 308.4L1920.0 457.2M0.0 306.9L1920.0 455.8M0.0 305.5L1920.0 454.3M0.0 304.0L1920.0 452.9M0.0 302.6L1920.0 451.4M0.0 301.1L1920.0 449.9M0.0 299.6L1920.0 448.5M0.0 298.2L1920.0 447.0M0.0 295.3L1920.0 444.1M0.0 293.8L1920.0 442.6M0.0 292.3L1920.0 441.2M0.0 290.9L1920.0 439.7M0.0 289.4L1920.0 438.2M0.0 288.0L1920.0 436.8M0.0 286.5L1920.0 435.3M0.0 285.0L1920.0 433.9M0.0 283.6L1920.0 432.4M0.0 280.7L1920.0 429.5M0.0 279.2L1920.0 428.0M0.0 277.7L1920.0 426.6M0.0 276.3L1920.0 425.1M0.0 274.8L1920.0 423.6M0.0 273.4L1920.0 422.2M0.0 271.9L1920.0 420.7M0.0 270.4L1920.0 419.3M0.0 269.0L1920.0 417.8M0.0 266.1L1920.0 414.9M0.0 264.6L1920.0 413.4M0.0 263.1L1920.0 412.0M0.0 261.7L1920.0 410.5M0.0 260.2L1920.0 409.0M0.0 258.8L1920.0 407.6M0.0 257.3L1920.0 406.1M0.0 255.8L1920.0 404.7M0.0 254.4L1920.0 403.2M0.0 251.5L1920.0 400.3M0.0 250.0L1920.0 398.8M0.0 248.5L1920.0 397.4M0.0 247.1L1920.0 395.9M0.0 245.6L1920.0 394.4M0.0 244.2L1920.0 393.0M0.0 242.7L1920.0 391.5M0.0 241.2L1920.0 390.1M0.0 239.8L1920.0 388.6M0.0 236.8L1920.0 385.7M0.0 235.4L1920.0 384.2M0.0 233.9L1920.0 382.8M0.0 232.5L1920.0 381.3M0.0 231.0L1920.0 379.8M0.0 229.5L1920.0 378.4M0.0 228.1L1920.0 376.9M0.0 226.6L1920.0 375.5M0.0 225.2L1920.0 374.0M0.0 222.2L1920.0 371.1M0.0 220.8L1920.0 369.6M0.0 219.3L1920.0 368.2M0.0 217.9L1920.0 366.7M0.0 216.4L1920.0 365.2M0.0 214.9L1920.0 363.8M0.0 213.5L1920.0 362.3M0.0 212.0L1920.0 360.9M0.0 210.6L1920.0 359.4M0.0 207.6L1920.0 356.5M0.0 206.2L1920.0 355.0M0.0 204.7L1920.0 353.6M0.0 203.3L1920.0 352.1M0.0 201.8L1920.0 350.6M0.0 200.3L1920.0 349.2M0.0 198.9L1920.0 347.7M0.0 197.4L1920.0 346.2M0.0 196.0L1920.0 344.8M0.0 193.0L1920.0 341.9M0.0 191.6L1920.0 340.4M0.0 190.1L1920.0 338.9M0.0 188.7L1920.0 337.5M0.0 187.2L1920.0 336.0M0.0 185.7L1920.0 334.6M0.0 184.3L1920.0 333.1M0.0 182.8L1920.0 331.6M0.0 181.4L1920.0 330.2M0.0 178.4L1920.0 327.3M0.0 177.0L1920.0 325.8M0.0 175.5L1920.0 324.3M0.0 174.1L1920.0 322.9M0.0 172.6L1920.0 321.4M0.0 171.1L1920.0 320.0M0.0 169.7L1920.0 318.5M0.0 168.2L1920.0 317.0M0.0 166.8L1920.0 315.6M0.0 163.8L1920.0 312.7M0.0 162.4L1920.0 311.2M0.0 160.9L1920.0 309.7M0.0 159.5L1920.0 308.3M0.0 158.0L1920.0 306.8M0.0 156.5L1920.0 305.4M0.0 155.1L1920.0 303.9M0.0 153.6L1920.0 302.4M0.0 152.2L1920.0 301.0M0.0 149.2L1920.0 298.1M0.0 147.8L1920.0 296.6M0.0 146.3L1920.0 295.1M0.0 144.9L1920.0 293.7M0.0 143.4L1920.0 292.2M0.0 141.9L1920.0 290.8M0.0 140.5L1920.0 289.3M0.0 139.0L1920.0 287.8M0.0 137.5L1920.0 286.4M0.0 134.6L1920.0 283.5M0.0 133.2L1920.0 282.0M0.0 131.7L1920.0 280.5M0.0 130.2L1920.0 279.1M0.0 128.8L1920.0 277.6M0.0 127.3L1920.0 276.2M0.0 125.9L1920.0 274.7M0.0 124.4L1920.0 273.2M0.0 122.9L1920.0 271.8M0.0 120.0L1920.0 268.9M0.0 118.6L1920.0 267.4M0.0 117.1L1920.0 265.9M0.0 115.6L1920.0 264.5M0.0 114.2L1920.0 263.0M0.0 112.7L1920.0 261.6M0.0 111.3L1920.0 260.1M0.0 109.8L1920.0 258.6M0.0 108.3L1920.0 257.2M0.0 105.4L1920.0 254.3M0.0 104.0L1920.0 252.8M0.0 102.5L1920.0 251.3M0.0 101.0L1920.0 249.9M0.0 99.6L1920.0 248.4M0.0 98.1L1920.0 247.0M0.0 96.7L1920.0 245.5M0.0 95.2L1920.0 244.0M0.0 93.7L1920.0 242.6M0.0 90.8L1920.0 239.6M0.0 89.4L1920.0 238.2M0.0 87.9L1920.0 236.7M0.0 86.4L1920.0 235.3M0.0 85.0L1920.0 233.8M0.0 83.5L1920.0 232.3M0.0 82.1L1920.0 230.9M0.0 80.6L1920.0 229.4M0.0 79.1L1920.0 228.0M0.0 76.2L1920.0 225.0M0.0 74.8L1920.0 223.6M0.0 73.3L1920.0 222.1M0.0 71.8L1920.0 220.7M0.0 70.4L1920.0 219.2M0.0 68.9L1920.0 217.7M0.0 67.5L1920.0 216.3M0.0 66.0L1920.0 214.8M0.0 64.5L1920.0 213.4M0.0 61.6L1920.0 210.4M0.0 60.2L1920.0 209.0M0.0 58.7L1920.0 207.5M0.0 57.2L1920.0 206.1M0.0 55.8L1920.0 204.6M0.0 54.3L1920.0 203.1M0.0 52.9L1920.0 201.7M0.0 51.4L1920.0 200.2M0.0 49.9L1920.0 198.8M0.0 47.0L1920.0 195.8M0.0 45.6L1920.0 194.4M0.0 44.1L1920.0 192.9M0.0 42.6L1920.0 191.5M0.0 41.2L1920.0 190.0M0.0 39.7L1920.0 188.5M0.0 38.3L1920.0 187.1M0.0 36.8L1920.0 185.6M0.0 35.3L1920.0 184.2M0.0 32.4L1920.0 181.2M0.0 30.9L1920.0 179.8M0.0 29.5L1920.0 178.3M0.0 28.0L1920.0 176.9M0.0 26.6L1920.0 175.4M0.0 25.1L1920.0 173.9M0.0 23.6L1920.0 172.5M0.0 22.2L1920.0 171.0M0.0 20.7L1920.0 169.6M0.0 17.8L1920.0 166.6M0.0 16.3L1920.0 165.2M0.0 14.9L1920.0 163.7M0.0 13.4L1920.0 162.3M0.0 12.0L1920.0 160.8M0.0 10.5L1920.0 159.3M0.0 9.0L1920.0 157.9M0.0 7.6L1920.0 156.4M0.0 6.1L1920.0 155.0M0.0 3.2L1920.0 152.0M0.0 1.7L1920.0 150.6M0.0 0.3L1920.0 149.1M15.2 0.0L1920.0 147.7M34.0 0.0L1920.0 146.2M52.9 0.0L1920.0 144.7M71.7 0.0L1920.0 143.3M90.5 0.0L1920.0 141.8M109.4 0.0L1920.0 140.3M147.1 0.0L1920.0 137.4M165.9 0.0L1920.0 136.0M184.7 0.0L1920.0 134.5M203.6 0.0L1920.0 133.0M222.4 0.0L1920.0 131.6M241.3 0.0L1920.0 130.1M260.1 0.0L1920.0 128.7M278.9 0.0L1920.0 127.2M297.8 0.0L1920.0 125.7M335.4 0.0L1920.0 122.8M354.3 0.0L1920.0 121.4M373.1 0.0L1920.0 119.9M392.0 0.0L1920.0 118.4M410.8 0.0L1920.0 117.0M429.6 0.0L1920.0 115.5M448.5 0.0L1920.0 114.1M467.3 0.0L1920.0 112.6M486.2 0.0L1920.0 111.1M523.8 0.0L1920.0 108.2M542.7 0.0L1920.0 106.8M561.5 0.0L1920.0 105.3M580.3 0.0L1920.0 103.8M599.2 0.0L1920.0 102.4M618.0 0.0L1920.0 100.9M636.9 0.0L1920.0 99.5M655.7 0.0L1920.0 98.0M674.5 0.0L1920.0 96.5M712.2 0.0L1920.0 93.6M731.1 0.0L1920.0 92.2M749.9 0.0L1920.0 90.7M768.7 0.0L1920.0 89.2M787.6 0.0L1920.0 87.8M806.4 0.0L1920.0 86.3M825.3 0.0L1920.0 84.9M844.1 0.0L1920.0 83.4M862.9 0.0L1920.0 81.9M900.6 0.0L1920.0 79.0M919.4 0.0L1920.0 77.6M938.3 0.0L1920.0 76.1M957.1 0.0L1920.0 74.6M976.0 0.0L1920.0 73.2M994.8 0.0L1920.0 71.7M1013.6 0.0L1920.0 70.3M1032.5 0.0L1920.0 68.8M1051.3 0.0L1920.0 67.3M1089.0 0.0L1920.0 64.4M1107.8 0.0L1920.0 63.0M1126.7 0.0L1920.0 61.5M1145.5 0.0L1920.0 60.0M1164.3 0.0L1920.0 58.6M1183.2 0.0L1920.0 57.1M1202.0 0.0L1920.0 55.7M1220.9 0.0L1920.0 54.2M1239.7 0.0L1920.0 52.7M1277.4 0.0L1920.0 49.8M1296.2 0.0L1920.0 48.4M1315.1 0.0L1920.0 46.9M1333.9 0.0L1920.0 45.4M1352.7 0.0L1920.0 44.0M1371.6 0.0L1920.0 42.5M1390.4 0.0L1920.0 41.1M1409.3 0.0L1920.0 39.6M1428.1 0.0L1920.0 38.1M1465.8 0.0L1920.0 35.2M1484.6 0.0L1920.0 33.7M1503.4 0.0L1920.0 32.3M1522.3 0.0L1920.0 30.8M1541.1 0.0L1920.0 29.4M1560.0 0.0L1920.0 27.9M1578.8 0.0L1920.0 26.4M1597.6 0.0L1920.0 25.0M1616.5 0.0L1920.0 23.5M1654.2 0.0L1920.0 20.6M1673.0 0.0L1920.0 19.1M1691.8 0.0L1920.0 17.7M1710.7 0.0L1920.0 16.2M1729.5 0.0L1920.0 14.8M1748.3 0.0L1920.0 13.3M1767.2 0.0L1920.0 11.8M1786.0 0.0L1920.0 10.4M1804.9 0.0L1920.0 8.9M1842.5 0.0L1920.0 6.0M1861.4 0.0L1920.0 4.5M1880.2 0.0L1920.0 3.1M1899.1 0.0L1920.0 1.6M1917.9 0.0L1920.0 0.2"/>
<path stroke-opacity=".078" stroke-width=".9" d="M0.0 0.8L1.8 0.0M0.0 7.6L17.8 0.0M0.0 11.1L25.8 0.0M-0.0 14.5L33.8 0.0M0.0 17.9L41.8 0.0M0.0 21.4L49.9 0.0M0.0 24.8L57.9 0.0M0.0 28.2L65.9 0.0M0.0 31.7L73.9 0.0M0.0 35.1L81.9 0.0M0.0 42.0L97.9 0.0M0.0 45.4L105.9 0.0M0.0 48.8L113.9 0.0M0.0 52.3L122.0 0.0M0.0 55.7L130.0 0.0M0.0 59.1L138.0 0.0M0.0 62.6L146.0 0.0M0.0 66.0L154.0 0.0M0.0 69.4L162.0 0.0M0.0 76.3L178.0 0.0M0.0 79.7L186.1 0.0M0.0 83.2L194.1 0.0M0.0 86.6L202.1 0.0M0.0 90.0L210.1 0.0M0.0 93.5L218.1 0.0M0.0 96.9L226.1 0.0M0.0 100.3L234.1 0.0M0.0 103.8L242.1 0.0M0.0 110.6L258.2 0.0M0.0 114.1L266.2 0.0M0.0 117.5L274.2 0.0M0.0 120.9L282.2 0.0M0.0 124.4L290.2 0.0M0.0 127.8L298.2 0.0M-0.0 131.2L306.2 0.0M-0.0 134.7L314.2 0.0M-0.0 138.1L322.3 0.0M0.0 145.0L338.3 0.0M0.0 148.4L346.3 0.0M0.0 151.8L354.3 0.0M0.0 155.3L362.3 0.0M0.0 158.7L370.3 0.0M0.0 162.1L378.3 0.0M0.0 165.6L386.4 0.0M0.0 169.0L394.4 0.0M0.0 172.4L402.4 0.0M-0.0 179.3L418.4 0.0M0.0 182.7L426.4 0.0M0.0 186.2L434.4 0.0M0.0 189.6L442.4 0.0M0.0 193.0L450.5 0.0M0.0 196.5L458.5 0.0M0.0 199.9L466.5 0.0M0.0 203.3L474.5 0.0M0.0 206.8L482.5 0.0M0.0 213.6L498.5 0.0M0.0 217.1L506.5 0.0M0.0 220.5L514.6 0.0M0.0 223.9L522.6 0.0M0.0 227.4L530.6 0.0M0.0 230.8L538.6 0.0M0.0 234.2L546.6 0.0M0.0 237.7L554.6 0.0M0.0 241.1L562.6 0.0M0.0 248.0L578.6 0.0M0.0 251.4L586.7 0.0M0.0 254.8L594.7 0.0M0.0 258.3L602.7 0.0M0.0 261.7L610.7 0.0M0.0 265.1L618.7 0.0M0.0 268.6L626.7 0.0M0.0 272.0L634.7 0.0M0.0 275.4L642.7 0.0M0.0 282.3L658.8 0.0M0.0 285.7L666.8 0.0M-0.0 289.2L674.8 0.0M0.0 292.6L682.8 0.0M0.0 296.0L690.8 0.0M0.0 299.5L698.8 0.0M0.0 302.9L706.8 0.0M0.0 306.3L714.9 0.0M0.0 309.8L722.9 0.0M0.0 316.6L738.9 0.0M0.0 320.1L746.9 0.0M0.0 323.5L754.9 0.0M0.0 326.9L762.9 0.0M0.0 330.4L770.9 0.0M0.0 333.8L779.0 0.0M0.0 337.2L787.0 0.0M0.0 340.7L795.0 0.0M0.0 344.1L803.0 0.0M0.0 351.0L819.0 0.0M0.0 354.4L827.0 0.0M0.0 357.8L835.0 0.0M0.0 361.3L843.0 0.0M0.0 364.7L851.1 0.0M0.0 368.2L859.1 0.0M0.0 371.6L867.1 0.0M-0.0 375.0L875.1 0.0M0.0 378.5L883.1 0.0M0.0 385.3L899.1 0.0M-0.0 388.8L907.1 0.0M0.0 392.2L915.2 0.0M0.0 395.6L923.2 0.0M0.0 399.1L931.2 0.0M0.0 402.5L939.2 0.0M0.0 405.9L947.2 0.0M0.0 409.4L955.2 0.0M0.0 412.8L963.2 0.0M0.0 419.7L979.3 0.0M0.0 423.1L987.3 0.0M0.0 426.5L995.3 0.0M0.0 430.0L1003.3 0.0M0.0 433.4L1011.3 0.0M0.0 436.8L1019.3 0.0M0.0 440.3L1027.3 0.0M0.0 443.7L1035.3 0.0M0.0 447.1L1043.3 0.0M0.0 454.0L1059.4 0.0M0.0 457.4L1067.4 0.0M0.0 460.9L1075.4 0.0M0.0 464.3L1083.4 0.0M0.0 467.7L1091.4 0.0M0.0 471.2L1099.4 0.0M0.0 474.6L1107.4 0.0M0.0 478.0L1115.5 0.0M0.0 481.5L1123.5 0.0M0.0 488.3L1139.5 0.0M0.0 491.8L1147.5 0.0M0.0 495.2L1155.5 0.0M0.0 498.6L1163.5 0.0M0.0 502.1L1171.5 0.0M0.0 505.5L1179.6 0.0M0.0 508.9L1187.6 0.0M0.0 512.4L1195.6 0.0M0.0 515.8L1203.6 0.0M0.0 522.7L1219.6 0.0M0.0 526.1L1227.6 0.0M0.0 529.5L1235.6 0.0M0.0 533.0L1243.7 0.0M0.0 536.4L1251.7 0.0M0.0 539.8L1259.7 0.0M0.0 543.3L1267.7 0.0M0.0 546.7L1275.7 0.0M0.0 550.1L1283.7 0.0M0.0 557.0L1299.7 0.0M0.0 560.4L1307.7 0.0M0.0 563.9L1315.8 0.0M0.0 567.3L1323.8 0.0M0.0 570.7L1331.8 0.0M0.0 574.2L1339.8 0.0M-0.0 577.6L1347.8 0.0M0.0 581.0L1355.8 0.0M0.0 584.5L1363.8 0.0M0.0 591.3L1379.9 0.0M0.0 594.8L1387.9 0.0M0.0 598.2L1395.9 0.0M0.0 601.6L1403.9 0.0M0.0 605.1L1411.9 0.0M0.0 608.5L1419.9 0.0M0.0 611.9L1427.9 0.0M0.0 615.4L1435.9 0.0M0.0 618.8L1444.0 0.0M0.0 625.7L1460.0 0.0M0.0 629.1L1468.0 0.0M0.0 632.5L1476.0 0.0M0.0 636.0L1484.0 0.0M0.0 639.4L1492.0 0.0M0.0 642.8L1500.0 0.0M0.0 646.3L1508.1 0.0M0.0 649.7L1516.1 0.0M0.0 653.1L1524.1 0.0M0.0 660.0L1540.1 0.0M0.0 663.4L1548.1 0.0M0.0 666.9L1556.1 0.0M-0.0 670.3L1564.1 0.0M0.0 673.7L1572.1 0.0M0.0 677.2L1580.2 0.0M0.0 680.6L1588.2 0.0M0.0 684.0L1596.2 0.0M0.0 687.5L1604.2 0.0M0.0 694.3L1620.2 0.0M-0.0 697.8L1628.2 0.0M0.0 701.2L1636.2 0.0M0.0 704.6L1644.3 -0.0M0.0 708.1L1652.3 0.0M0.0 711.5L1660.3 0.0M-0.0 714.9L1668.3 0.0M0.0 718.4L1676.3 0.0M0.0 721.8L1684.3 0.0M0.0 728.7L1700.3 0.0M0.0 732.1L1708.4 0.0M-0.0 735.5L1716.4 0.0M0.0 739.0L1724.4 0.0M0.0 742.4L1732.4 -0.0M0.0 745.8L1740.4 -0.0M0.0 749.3L1748.4 -0.0M0.0 752.7L1756.4 0.0M0.0 756.1L1764.4 0.0M0.0 763.0L1780.5 0.0M0.0 766.4L1788.5 0.0M0.0 769.9L1796.5 0.0M0.0 773.3L1804.5 0.0M0.0 776.7L1812.5 0.0M0.0 780.2L1820.5 0.0M0.0 783.6L1828.5 0.0M0.0 787.0L1836.5 -0.0M0.0 790.5L1844.6 0.0M0.0 797.3L1860.6 0.0M0.0 800.8L1868.6 0.0M0.0 804.2L1876.6 0.0M0.0 807.6L1884.6 0.0M-0.0 811.1L1892.6 0.0M0.0 814.5L1900.6 0.0M0.0 817.9L1908.7 0.0M0.0 821.4L1916.7 0.0M0.0 824.8L1920.0 2.0M0.0 831.7L1920.0 8.9M0.0 835.1L1920.0 12.3M0.0 838.5L1920.0 15.7M0.0 842.0L1920.0 19.2M1.0 845.0L1920.0 22.6M9.0 845.0L1920.0 26.0M17.0 845.0L1920.0 29.5M25.0 845.0L1920.0 32.9M33.0 845.0L1920.0 36.3M49.0 845.0L1920.0 43.2M57.1 845.0L1920.0 46.6M65.1 845.0L1920.0 50.1M73.1 845.0L1920.0 53.5M81.1 845.0L1920.0 56.9M89.1 845.0L1920.0 60.4M97.1 845.0L1920.0 63.8M105.1 845.0L1920.0 67.2M113.1 845.0L1920.0 70.7M129.2 845.0L1920.0 77.5M137.2 845.0L1920.0 81.0M145.2 845.0L1920.0 84.4M153.2 845.0L1920.0 87.8M161.2 845.0L1920.0 91.3M169.2 845.0L1920.0 94.7M177.2 845.0L1920.0 98.1M185.2 845.0L1920.0 101.6M193.3 845.0L1920.0 105.0M209.3 845.0L1920.0 111.9M217.3 845.0L1920.0 115.3M225.3 845.0L1920.0 118.7M233.3 845.0L1920.0 122.2M241.3 845.0L1920.0 125.6M249.3 845.0L1920.0 129.0M257.4 845.0L1920.0 132.5M265.4 845.0L1920.0 135.9M273.4 845.0L1920.0 139.3M289.4 845.0L1920.0 146.2M297.4 845.0L1920.0 149.6M305.4 845.0L1920.0 153.1M313.4 845.0L1920.0 156.5M321.5 845.0L1920.0 159.9M329.5 845.0L1920.0 163.4M337.5 845.0L1920.0 166.8M345.5 845.0L1920.0 170.2M353.5 845.0L1920.0 173.7M369.5 845.0L1920.0 180.5M377.5 845.0L1920.0 184.0M385.5 845.0L1920.0 187.4M393.6 845.0L1920.0 190.9M401.6 845.0L1920.0 194.3M409.6 845.0L1920.0 197.7M417.6 845.0L1920.0 201.2M425.6 845.0L1920.0 204.6M433.6 845.0L1920.0 208.0M449.6 845.0L1920.0 214.9M457.7 845.0L1920.0 218.3M465.7 845.0L1920.0 221.8M473.7 845.0L1920.0 225.2M481.7 845.0L1920.0 228.6M489.7 845.0L1920.0 232.1M497.7 845.0L1920.0 235.5M505.7 845.0L1920.0 238.9M513.7 845.0L1920.0 242.4M529.8 845.0L1920.0 249.2M537.8 845.0L1920.0 252.7M545.8 845.0L1920.0 256.1M553.8 845.0L1920.0 259.5M561.8 845.0L1920.0 263.0M569.8 845.0L1920.0 266.4M577.8 845.0L1920.0 269.8M585.9 845.0L1920.0 273.3M593.9 845.0L1920.0 276.7M609.9 845.0L1920.0 283.6M617.9 845.0L1920.0 287.0M625.9 845.0L1920.0 290.4M633.9 845.0L1920.0 293.9M641.9 845.0L1920.0 297.3M649.9 845.0L1920.0 300.7M658.0 845.0L1920.0 304.2M666.0 845.0L1920.0 307.6M674.0 845.0L1920.0 311.0M690.0 845.0L1920.0 317.9M698.0 845.0L1920.0 321.3M706.0 845.0L1920.0 324.8M714.0 845.0L1920.0 328.2M722.1 845.0L1920.0 331.6M730.1 845.0L1920.0 335.1M738.1 845.0L1920.0 338.5M746.1 845.0L1920.0 341.9M754.1 845.0L1920.0 345.4M770.1 845.0L1920.0 352.2M778.1 845.0L1920.0 355.7M786.2 845.0L1920.0 359.1M794.2 845.0L1920.0 362.5M802.2 845.0L1920.0 366.0M810.2 845.0L1920.0 369.4M818.2 845.0L1920.0 372.8M826.2 845.0L1920.0 376.3M834.2 845.0L1920.0 379.7M850.3 845.0L1920.0 386.6M858.3 845.0L1920.0 390.0M866.3 845.0L1920.0 393.4M874.3 845.0L1920.0 396.9M882.3 845.0L1920.0 400.3M890.3 845.0L1920.0 403.7M898.3 845.0L1920.0 407.2M906.3 845.0L1920.0 410.6M914.3 845.0L1920.0 414.0M930.4 845.0L1920.0 420.9M938.4 845.0L1920.0 424.3M946.4 845.0L1920.0 427.8M954.4 845.0L1920.0 431.2M962.4 845.0L1920.0 434.6M970.4 845.0L1920.0 438.1M978.4 845.0L1920.0 441.5M986.5 845.0L1920.0 444.9M994.5 845.0L1920.0 448.4M1010.5 845.0L1920.0 455.2M1018.5 845.0L1920.0 458.7M1026.5 845.0L1920.0 462.1M1034.5 845.0L1920.0 465.5M1042.5 845.0L1920.0 469.0M1050.6 845.0L1920.0 472.4M1058.6 845.0L1920.0 475.8M1066.6 845.0L1920.0 479.3M1074.6 845.0L1920.0 482.7M1090.6 845.0L1920.0 489.6M1098.6 845.0L1920.0 493.0M1106.6 845.0L1920.0 496.4M1114.7 845.0L1920.0 499.9M1122.7 845.0L1920.0 503.3M1130.7 845.0L1920.0 506.7M1138.7 845.0L1920.0 510.2M1146.7 845.0L1920.0 513.6M1154.7 845.0L1920.0 517.0M1170.7 845.0L1920.0 523.9M1178.7 845.0L1920.0 527.3M1186.8 845.0L1920.0 530.8M1194.8 845.0L1920.0 534.2M1202.8 845.0L1920.0 537.6M1210.8 845.0L1920.0 541.1M1218.8 845.0L1920.0 544.5M1226.8 845.0L1920.0 547.9M1234.8 845.0L1920.0 551.4M1250.9 845.0L1920.0 558.2M1258.9 845.0L1920.0 561.7M1266.9 845.0L1920.0 565.1M1274.9 845.0L1920.0 568.5M1282.9 845.0L1920.0 572.0M1290.9 845.0L1920.0 575.4M1298.9 845.0L1920.0 578.8M1306.9 845.0L1920.0 582.3M1315.0 845.0L1920.0 585.7M1331.0 845.0L1920.0 592.6M1339.0 845.0L1920.0 596.0M1347.0 845.0L1920.0 599.4M1355.0 845.0L1920.0 602.9M1363.0 845.0L1920.0 606.3M1371.0 845.0L1920.0 609.7M1379.1 845.0L1920.0 613.2M1387.1 845.0L1920.0 616.6M1395.1 845.0L1920.0 620.0M1411.1 845.0L1920.0 626.9M1419.1 845.0L1920.0 630.3M1427.1 845.0L1920.0 633.8M1435.1 845.0L1920.0 637.2M1443.1 845.0L1920.0 640.6M1451.2 845.0L1920.0 644.1M1459.2 845.0L1920.0 647.5M1467.2 845.0L1920.0 650.9M1475.2 845.0L1920.0 654.4M1491.2 845.0L1920.0 661.2M1499.2 845.0L1920.0 664.7M1507.2 845.0L1920.0 668.1M1515.3 845.0L1920.0 671.5M1523.3 845.0L1920.0 675.0M1531.3 845.0L1920.0 678.4M1539.3 845.0L1920.0 681.8M1547.3 845.0L1920.0 685.3M1555.3 845.0L1920.0 688.7M1571.3 845.0L1920.0 695.6M1579.4 845.0L1920.0 699.0M1587.4 845.0L1920.0 702.5M1595.4 845.0L1920.0 705.9M1603.4 845.0L1920.0 709.3M1611.4 845.0L1920.0 712.8M1619.4 845.0L1920.0 716.2M1627.4 845.0L1920.0 719.6M1635.4 845.0L1920.0 723.1M1651.5 845.0L1920.0 729.9M1659.5 845.0L1920.0 733.4M1667.5 845.0L1920.0 736.8M1675.5 845.0L1920.0 740.2M1683.5 845.0L1920.0 743.7M1691.5 845.0L1920.0 747.1M1699.5 845.0L1920.0 750.5M1707.5 845.0L1920.0 754.0M1715.6 845.0L1920.0 757.4M1731.6 845.0L1920.0 764.3M1739.6 845.0L1920.0 767.7M1747.6 845.0L1920.0 771.1M1755.6 845.0L1920.0 774.6M1763.6 845.0L1920.0 778.0M1771.6 845.0L1920.0 781.4M1779.7 845.0L1920.0 784.9M1787.7 845.0L1920.0 788.3M1795.7 845.0L1920.0 791.7M1811.7 845.0L1920.0 798.6M1819.7 845.0L1920.0 802.0M1827.7 845.0L1920.0 805.5M1835.7 845.0L1920.0 808.9M1843.8 845.0L1920.0 812.3M1851.8 845.0L1920.0 815.8M1859.8 845.0L1920.0 819.2M1867.8 845.0L1920.0 822.6M1875.8 845.0L1920.0 826.1M1891.8 845.0L1920.0 832.9M1899.8 845.0L1920.0 836.4M1907.9 845.0L1920.0 839.8M1915.9 845.0L1920.0 843.2"/>
<path stroke-opacity=".22" stroke-width="1.15" d="M0.0 837.0L102.9 845.0M0.0 822.4L291.2 845.0M0.0 807.8L479.6 845.0M0.0 793.2L668.0 845.0M0.0 778.6L856.4 845.0M0.0 764.0L1044.8 845.0M0.0 749.4L1233.2 845.0M0.0 734.8L1421.6 845.0M0.0 720.2L1610.0 845.0M0.0 705.6L1798.3 845.0M0.0 691.0L1920.0 839.8M0.0 676.4L1920.0 825.2M0.0 661.8L1920.0 810.6M0.0 647.2L1920.0 796.0M0.0 632.6L1920.0 781.4M0.0 618.0L1920.0 766.8M0.0 603.4L1920.0 752.2M0.0 588.8L1920.0 737.6M0.0 574.2L1920.0 723.0M0.0 559.6L1920.0 708.4M0.0 545.0L1920.0 693.8M0.0 530.4L1920.0 679.2M0.0 515.8L1920.0 664.6M0.0 501.2L1920.0 650.0M0.0 486.6L1920.0 635.4M0.0 472.0L1920.0 620.8M0.0 442.7L1920.0 591.6M0.0 428.1L1920.0 577.0M0.0 413.5L1920.0 562.4M0.0 398.9L1920.0 547.8M0.0 384.3L1920.0 533.2M0.0 369.7L1920.0 518.6M0.0 355.1L1920.0 504.0M0.0 340.5L1920.0 489.4M0.0 325.9L1920.0 474.8M0.0 311.3L1920.0 460.2M0.0 296.7L1920.0 445.5M0.0 282.1L1920.0 430.9M0.0 267.5L1920.0 416.3M0.0 252.9L1920.0 401.7M0.0 238.3L1920.0 387.1M0.0 223.7L1920.0 372.5M0.0 209.1L1920.0 357.9M-0.0 194.5L1920.0 343.3M0.0 179.9L1920.0 328.7M0.0 165.3L1920.0 314.1M0.0 150.7L1920.0 299.5M0.0 136.1L1920.0 284.9M0.0 121.5L1920.0 270.3M0.0 106.9L1920.0 255.7M0.0 92.3L1920.0 241.1M0.0 77.7L1920.0 226.5M0.0 63.1L1920.0 211.9M0.0 48.5L1920.0 197.3M0.0 33.9L1920.0 182.7M0.0 19.3L1920.0 168.1M0.0 4.7L1920.0 153.5M128.2 0.0L1920.0 138.9M316.6 0.0L1920.0 124.3M505.0 0.0L1920.0 109.7M693.4 0.0L1920.0 95.1M881.8 0.0L1920.0 80.5M1070.2 0.0L1920.0 65.9M1258.5 0.0L1920.0 51.3M1446.9 0.0L1920.0 36.7M1635.3 0.0L1920.0 22.1M1823.7 0.0L1920.0 7.5"/>
<path stroke-opacity=".27" stroke-width="1.15" d="M0.0 4.2L9.8 0.0M0.0 38.5L89.9 0.0M0.0 72.9L170.0 0.0M0.0 107.2L250.2 0.0M0.0 141.5L330.3 0.0M0.0 175.9L410.4 0.0M0.0 210.2L490.5 0.0M0.0 244.5L570.6 0.0M0.0 278.9L650.8 0.0M0.0 313.2L730.9 0.0M0.0 347.5L811.0 0.0M0.0 381.9L891.1 0.0M0.0 416.2L971.2 0.0M-0.0 450.6L1051.4 0.0M0.0 484.9L1131.5 0.0M0.0 519.2L1211.6 0.0M0.0 553.6L1291.7 0.0M0.0 587.9L1371.8 0.0M0.0 622.2L1452.0 0.0M0.0 656.6L1532.1 0.0M0.0 690.9L1612.2 0.0M0.0 725.2L1692.3 0.0M0.0 759.6L1772.5 0.0M0.0 793.9L1852.6 0.0M0.0 828.2L1920.0 5.4M41.0 845.0L1920.0 39.8M121.1 845.0L1920.0 74.1M201.3 845.0L1920.0 108.4M361.5 845.0L1920.0 177.1M441.6 845.0L1920.0 211.5M521.8 845.0L1920.0 245.8M601.9 845.0L1920.0 280.1M682.0 845.0L1920.0 314.5M762.1 845.0L1920.0 348.8M842.2 845.0L1920.0 383.1M922.4 845.0L1920.0 417.5M1002.5 845.0L1920.0 451.8M1082.6 845.0L1920.0 486.1M1162.7 845.0L1920.0 520.5M1242.8 845.0L1920.0 554.8M1323.0 845.0L1920.0 589.1M1403.1 845.0L1920.0 623.5M1483.2 845.0L1920.0 657.8M1563.3 845.0L1920.0 692.2M1643.5 845.0L1920.0 726.5M1723.6 845.0L1920.0 760.8M1803.7 845.0L1920.0 795.2M1883.8 845.0L1920.0 829.5"/>
</g>
<path d="M0.0 457.4L1920.0 606.2" stroke="#f98282" stroke-width="1.3" fill="none"/>
<path d="M281.4 845.0L1920.0 142.8" stroke="#6bef6b" stroke-width="1.3" fill="none"/>
</svg>
<svg width="1920" height="982" viewBox="0 0 1920 982" style="left:0;top:-137px"><style>.q{stroke-width:.8;stroke-linejoin:round}.e{fill:none;stroke:#0e0e0d;stroke-width:1.75;stroke-linecap:round}</style><defs><filter id="shb" x="-30%" y="-80%" width="160%" height="260%"><feGaussianBlur stdDeviation="4"/></filter><linearGradient id="hsg" gradientUnits="userSpaceOnUse" x1="886.6" y1="0" x2="1120.6" y2="0"><stop offset="0.000" stop-color="#85847d"/><stop offset="0.040" stop-color="#6b6a64"/><stop offset="0.120" stop-color="#77766f"/><stop offset="0.250" stop-color="#8d8c84"/><stop offset="0.400" stop-color="#9d9c93"/><stop offset="0.520" stop-color="#a3a299"/><stop offset="0.650" stop-color="#9f9e95"/><stop offset="0.780" stop-color="#8e8d85"/><stop offset="0.880" stop-color="#7b7a73"/><stop offset="0.960" stop-color="#73726c"/><stop offset="1.000" stop-color="#807f78"/></linearGradient><linearGradient id="topg" x1="0" y1="0" x2="1" y2="0"><stop offset="0" stop-color="#b6b9b4"/><stop offset=".55" stop-color="#b2b5af"/><stop offset="1" stop-color="#a9aca6"/></linearGradient></defs><ellipse cx="1001.1" cy="686.2" rx="117" ry="19" fill="#000" opacity=".3" filter="url(#shb)"/><g id="body"><path class="q" fill="#737169" stroke="#737169" d="M1100.2 653.7L1098.3 652.3L1114.4 661.1L1116.6 662.7z"/><path class="e" d="M1100.2 653.7L1098.3 652.3M1116.6 662.7L1114.4 661.1"/><path class="q" fill="#79776f" stroke="#79776f" d="M908.9 641.3L907.0 642.1L890.6 651.1L892.8 650.1z"/><path class="e" d="M908.9 641.3L907.0 642.1M892.8 650.1L890.6 651.1"/><path class="q" fill="#737169" stroke="#737169" d="M1100.2 626.0L1098.3 624.6L1114.4 633.4L1116.6 635.0z"/><path class="e" d="M1100.2 626.0L1098.3 624.6M1116.6 635.0L1114.4 633.4"/><path class="q" fill="#79776f" stroke="#79776f" d="M908.9 613.6L907.0 614.4L890.6 623.4L892.8 622.4z"/><path class="e" d="M908.9 613.6L907.0 614.4M892.8 622.4L890.6 623.4"/><path class="q" fill="#7a7870" stroke="#7a7870" d="M1102.1 655.6L1100.2 653.7L1116.6 662.7L1118.8 664.9z"/><path class="e" d="M1102.1 655.6L1100.2 653.7M1118.8 664.9L1116.6 662.7"/><path class="q" fill="#85827a" stroke="#85827a" d="M907.0 642.1L905.1 643.3L888.4 652.6L890.6 651.1z"/><path class="e" d="M907.0 642.1L905.1 643.3M890.6 651.1L888.4 652.6"/><path class="q" fill="#737169" stroke="#737169" d="M1100.2 598.3L1098.3 596.9L1114.4 605.7L1116.6 607.3z"/><path class="e" d="M1100.2 598.3L1098.3 596.9M1116.6 607.3L1114.4 605.7"/><path class="q" fill="#79776f" stroke="#79776f" d="M908.9 585.9L907.0 586.7L890.6 595.7L892.8 594.7z"/><path class="e" d="M908.9 585.9L907.0 586.7M892.8 594.7L890.6 595.7"/><path class="q" fill="#7a7870" stroke="#7a7870" d="M1102.1 627.9L1100.2 626.0L1116.6 635.0L1118.8 637.2z"/><path class="e" d="M1102.1 627.9L1100.2 626.0M1118.8 637.2L1116.6 635.0"/><path class="q" fill="#85827a" stroke="#85827a" d="M907.0 614.4L905.1 615.6L888.4 624.9L890.6 623.4z"/><path class="e" d="M907.0 614.4L905.1 615.6M890.6 623.4L888.4 624.9"/><path class="q" fill="#737169" stroke="#737169" d="M1100.2 570.6L1098.3 569.2L1114.4 578.0L1116.6 579.6z"/><path class="e" d="M1100.2 570.6L1098.3 569.2M1116.6 579.6L1114.4 578.0"/><path class="q" fill="#838077" stroke="#838077" d="M1103.2 657.6L1102.1 655.6L1118.8 664.9L1120.2 667.1z"/><path class="e" d="M1103.2 657.6L1102.1 655.6M1120.2 667.1L1118.8 664.9"/><path class="q" fill="#79776f" stroke="#79776f" d="M908.9 558.2L907.0 559.0L890.6 568.0L892.8 567.0z"/><path class="e" d="M908.9 558.2L907.0 559.0M892.8 567.0L890.6 568.0"/><path class="q" fill="#7a7870" stroke="#7a7870" d="M1102.1 600.2L1100.2 598.3L1116.6 607.3L1118.8 609.5z"/><path class="e" d="M1102.1 600.2L1100.2 598.3M1118.8 609.5L1116.6 607.3"/><path class="q" fill="#918f85" stroke="#918f85" d="M905.1 643.3L904.0 644.5L887.0 654.0L888.4 652.6z"/><path class="e" d="M905.1 643.3L904.0 644.5M888.4 652.6L887.0 654.0"/><path class="q" fill="#85827a" stroke="#85827a" d="M907.0 586.7L905.1 587.9L888.4 597.2L890.6 595.7z"/><path class="e" d="M907.0 586.7L905.1 587.9M890.6 595.7L888.4 597.2"/><path class="q" fill="#737169" stroke="#737169" d="M1100.2 542.9L1098.3 541.5L1114.4 550.3L1116.6 551.9z"/><path class="e" d="M1100.2 542.9L1098.3 541.5M1116.6 551.9L1114.4 550.3"/><path class="q" fill="#838077" stroke="#838077" d="M1103.2 629.9L1102.1 627.9L1118.8 637.2L1120.2 639.4z"/><path class="e" d="M1103.2 629.9L1102.1 627.9M1120.2 639.4L1118.8 637.2"/><path class="q" fill="#79776f" stroke="#79776f" d="M908.9 530.5L907.0 531.3L890.6 540.3L892.8 539.3z"/><path class="e" d="M908.9 530.5L907.0 531.3M892.8 539.3L890.6 540.3"/><path class="q" fill="#7a7870" stroke="#7a7870" d="M1102.1 572.5L1100.2 570.6L1116.6 579.6L1118.8 581.8z"/><path class="e" d="M1102.1 572.5L1100.2 570.6M1118.8 581.8L1116.6 579.6"/><path class="q" fill="#918f85" stroke="#918f85" d="M905.1 615.6L904.0 616.8L887.0 626.3L888.4 624.9z"/><path class="e" d="M905.1 615.6L904.0 616.8M888.4 624.9L887.0 626.3"/><path class="q" fill="#85827a" stroke="#85827a" d="M907.0 559.0L905.1 560.2L888.4 569.5L890.6 568.0z"/><path class="e" d="M907.0 559.0L905.1 560.2M890.6 568.0L888.4 569.5"/><path class="q" fill="#737169" stroke="#737169" d="M1100.2 515.2L1098.3 513.8L1114.4 522.6L1116.6 524.2z"/><path class="e" d="M1100.2 515.2L1098.3 513.8M1116.6 524.2L1114.4 522.6"/><path class="q" fill="#8a887f" stroke="#8a887f" d="M1103.6 659.5L1103.2 657.6L1120.2 667.1L1120.6 669.4z"/><path class="e" d="M1103.6 659.5L1103.2 657.6M1120.6 669.4L1120.2 667.1"/><path class="q" fill="#838077" stroke="#838077" d="M1103.2 602.2L1102.1 600.2L1118.8 609.5L1120.2 611.7z"/><path class="e" d="M1103.2 602.2L1102.1 600.2M1120.2 611.7L1118.8 609.5"/><path class="q" fill="#79776f" stroke="#79776f" d="M908.9 502.8L907.0 503.6L890.6 512.6L892.8 511.6z"/><path class="e" d="M908.9 502.8L907.0 503.6M892.8 511.6L890.6 512.6"/><path class="q" fill="#7a7870" stroke="#7a7870" d="M1102.1 544.8L1100.2 542.9L1116.6 551.9L1118.8 554.1z"/><path class="e" d="M1102.1 544.8L1100.2 542.9M1118.8 554.1L1116.6 551.9"/><path class="q" fill="#9d998f" stroke="#9d998f" d="M904.0 644.5L903.6 645.7L886.6 655.5L887.0 654.0z"/><path class="e" d="M904.0 644.5L903.6 645.7M887.0 654.0L886.6 655.5"/><path class="q" fill="#918f85" stroke="#918f85" d="M905.1 587.9L904.0 589.1L887.0 598.6L888.4 597.2z"/><path class="e" d="M905.1 587.9L904.0 589.1M888.4 597.2L887.0 598.6"/><path class="q" fill="#85827a" stroke="#85827a" d="M907.0 531.3L905.1 532.5L888.4 541.8L890.6 540.3z"/><path class="e" d="M907.0 531.3L905.1 532.5M890.6 540.3L888.4 541.8"/><path class="q" fill="#737169" stroke="#737169" d="M1100.2 487.5L1098.3 486.1L1114.4 494.9L1116.6 496.5z"/><path class="e" d="M1100.2 487.5L1098.3 486.1M1116.6 496.5L1114.4 494.9"/><path class="q" fill="#8a887f" stroke="#8a887f" d="M1103.6 631.8L1103.2 629.9L1120.2 639.4L1120.6 641.7z"/><path class="e" d="M1103.6 631.8L1103.2 629.9M1120.6 641.7L1120.2 639.4"/><path class="q" fill="#79776f" stroke="#79776f" d="M901.2 479.3L898.7 480.5L890.6 484.9L892.8 483.9z"/><path class="e" d="M901.2 479.3L898.7 480.5M892.8 483.9L890.6 484.9"/><path class="q" fill="#838077" stroke="#838077" d="M1103.2 574.5L1102.1 572.5L1118.8 581.8L1120.2 584.0z"/><path class="e" d="M1103.2 574.5L1102.1 572.5M1120.2 584.0L1118.8 581.8"/><path class="q" fill="#7a7870" stroke="#7a7870" d="M1102.1 517.1L1100.2 515.2L1116.6 524.2L1118.8 526.4z"/><path class="e" d="M1102.1 517.1L1100.2 515.2M1118.8 526.4L1116.6 524.2"/><path class="q" fill="#9d998f" stroke="#9d998f" d="M904.0 616.8L903.6 618.0L886.6 627.8L887.0 626.3z"/><path class="e" d="M904.0 616.8L903.6 618.0M887.0 626.3L886.6 627.8"/><path class="q" fill="#848480" stroke="#848480" d="M903.6 668.8L904.0 670.0L904.0 673.8L903.6 672.2z"/><path class="e" d="M903.6 668.8L904.0 670.0M903.6 672.2L904.0 673.8"/><path class="q" fill="#797975" stroke="#797975" d="M1120.2 671.6L1120.6 669.4L1120.6 672.2L1120.2 674.1z"/><path class="e" d="M1120.2 671.6L1120.6 669.4M1120.2 674.1L1120.6 672.2"/><path class="q" fill="#918f85" stroke="#918f85" d="M905.1 560.2L904.0 561.4L887.0 570.9L888.4 569.5z"/><path class="e" d="M905.1 560.2L904.0 561.4M888.4 569.5L887.0 570.9"/><path class="q" fill="#8c8980" stroke="#8c8980" d="M1103.2 661.5L1103.6 659.5L1120.6 669.4L1120.2 671.6z"/><path class="e" d="M1103.2 661.5L1103.6 659.5M1120.2 671.6L1120.6 669.4"/><path class="q" fill="#85827a" stroke="#85827a" d="M907.0 503.6L905.1 504.8L888.4 514.1L890.6 512.6z"/><path class="e" d="M907.0 503.6L905.1 504.8M890.6 512.6L888.4 514.1"/><path class="q" fill="#83837e" stroke="#83837e" d="M1103.2 656.9L1103.6 654.9L1103.6 659.5L1103.2 661.5z"/><path class="e" d="M1103.2 656.9L1103.6 654.9M1103.2 661.5L1103.6 659.5"/><path class="q" fill="#8a887f" stroke="#8a887f" d="M1103.6 604.1L1103.2 602.2L1120.2 611.7L1120.6 614.0z"/><path class="e" d="M1103.6 604.1L1103.2 602.2M1120.6 614.0L1120.2 611.7"/><path class="q" fill="#7e7e79" stroke="#7e7e79" d="M886.6 655.5L887.0 657.0L887.0 660.4L886.6 659.0z"/><path class="e" d="M886.6 655.5L887.0 657.0M886.6 659.0L887.0 660.4"/><path class="q" fill="#838077" stroke="#838077" d="M1103.2 546.8L1102.1 544.8L1118.8 554.1L1120.2 556.3z"/><path class="e" d="M1103.2 546.8L1102.1 544.8M1120.2 556.3L1118.8 554.1"/><path class="q" fill="#9f9c91" stroke="#9f9c91" d="M903.6 645.7L904.0 646.9L887.0 657.0L886.6 655.5z"/><path class="e" d="M903.6 645.7L904.0 646.9M886.6 655.5L887.0 657.0"/><path class="q" fill="#7a7870" stroke="#7a7870" d="M1102.1 489.4L1100.2 487.5L1116.6 496.5L1118.8 498.7z"/><path class="e" d="M1102.1 489.4L1100.2 487.5M1118.8 498.7L1116.6 496.5"/><path class="q" fill="#9d998f" stroke="#9d998f" d="M904.0 589.1L903.6 590.3L886.6 600.1L887.0 598.6z"/><path class="e" d="M904.0 589.1L903.6 590.3M887.0 598.6L886.6 600.1"/><path class="q" fill="#848480" stroke="#848480" d="M903.6 641.1L904.0 642.3L904.0 646.9L903.6 645.7z"/><path class="e" d="M903.6 641.1L904.0 642.3M903.6 645.7L904.0 646.9"/><path class="q" fill="#85827a" stroke="#85827a" d="M898.7 480.5L896.0 482.1L888.4 486.4L890.6 484.9z"/><path class="e" d="M898.7 480.5L896.0 482.1M890.6 484.9L888.4 486.4"/><path class="q" fill="#797975" stroke="#797975" d="M1120.2 643.9L1120.6 641.7L1120.6 645.1L1120.2 647.4z"/><path class="e" d="M1120.2 643.9L1120.6 641.7M1120.2 647.4L1120.6 645.1"/><path class="q" fill="#918f85" stroke="#918f85" d="M905.1 532.5L904.0 533.7L887.0 543.2L888.4 541.8z"/><path class="e" d="M905.1 532.5L904.0 533.7M888.4 541.8L887.0 543.2"/><path class="q" fill="#8c8980" stroke="#8c8980" d="M1103.2 633.8L1103.6 631.8L1120.6 641.7L1120.2 643.9z"/><path class="e" d="M1103.2 633.8L1103.6 631.8M1120.2 643.9L1120.6 641.7"/><path class="q" fill="#83837e" stroke="#83837e" d="M1103.2 629.2L1103.6 627.2L1103.6 631.8L1103.2 633.8z"/><path class="e" d="M1103.2 629.2L1103.6 627.2M1103.2 633.8L1103.6 631.8"/><path class="q" fill="#8a887f" stroke="#8a887f" d="M1103.6 576.4L1103.2 574.5L1120.2 584.0L1120.6 586.3z"/><path class="e" d="M1103.6 576.4L1103.2 574.5M1120.6 586.3L1120.2 584.0"/><path class="q" fill="#7e7e79" stroke="#7e7e79" d="M886.6 627.8L887.0 629.3L887.0 632.7L886.6 631.3z"/><path class="e" d="M886.6 627.8L887.0 629.3M886.6 631.3L887.0 632.7"/><path class="q" fill="#83837f" stroke="#83837f" d="M904.0 670.0L905.1 671.2L905.1 675.4L904.0 673.8z"/><path class="e" d="M904.0 670.0L905.1 671.2M904.0 673.8L905.1 675.4"/><path class="q" fill="#838077" stroke="#838077" d="M1103.2 519.1L1102.1 517.1L1118.8 526.4L1120.2 528.6z"/><path class="e" d="M1103.2 519.1L1102.1 517.1M1120.2 528.6L1118.8 526.4"/><path class="q" fill="#9f9c91" stroke="#9f9c91" d="M903.6 618.0L904.0 619.2L887.0 629.3L886.6 627.8z"/><path class="e" d="M903.6 618.0L904.0 619.2M886.6 627.8L887.0 629.3"/><path class="q" fill="#9d998f" stroke="#9d998f" d="M904.0 561.4L903.6 562.6L886.6 572.4L887.0 570.9z"/><path class="e" d="M904.0 561.4L903.6 562.6M887.0 570.9L886.6 572.4"/><path class="q" fill="#848480" stroke="#848480" d="M903.6 613.4L904.0 614.6L904.0 619.2L903.6 618.0z"/><path class="e" d="M903.6 613.4L904.0 614.6M903.6 618.0L904.0 619.2"/><path class="q" fill="#787874" stroke="#787874" d="M1118.8 673.8L1120.2 671.6L1120.2 674.1L1118.8 675.9z"/><path class="e" d="M1118.8 673.8L1120.2 671.6M1118.8 675.9L1120.2 674.1"/><path class="q" fill="#88857c" stroke="#88857c" d="M1102.1 663.5L1103.2 661.5L1120.2 671.6L1118.8 673.8z"/><path class="e" d="M1102.1 663.5L1103.2 661.5M1118.8 673.8L1120.2 671.6"/><path class="q" fill="#797975" stroke="#797975" d="M1120.2 616.2L1120.6 614.0L1120.6 617.4L1120.2 619.7z"/><path class="e" d="M1120.2 616.2L1120.6 614.0M1120.2 619.7L1120.6 617.4"/><path class="q" fill="#82827e" stroke="#82827e" d="M1102.1 658.9L1103.2 656.9L1103.2 661.5L1102.1 663.5z"/><path class="e" d="M1102.1 658.9L1103.2 656.9M1102.1 663.5L1103.2 661.5"/><path class="q" fill="#918f85" stroke="#918f85" d="M905.1 504.8L904.0 506.0L887.0 515.5L888.4 514.1z"/><path class="e" d="M905.1 504.8L904.0 506.0M888.4 514.1L887.0 515.5"/><path class="q" fill="#8c8980" stroke="#8c8980" d="M1103.2 606.1L1103.6 604.1L1120.6 614.0L1120.2 616.2z"/><path class="e" d="M1103.2 606.1L1103.6 604.1M1120.2 616.2L1120.6 614.0"/><path class="q" fill="#83837e" stroke="#83837e" d="M1103.2 601.5L1103.6 599.5L1103.6 604.1L1103.2 606.1z"/><path class="e" d="M1103.2 601.5L1103.6 599.5M1103.2 606.1L1103.6 604.1"/><path class="q" fill="#8a887f" stroke="#8a887f" d="M1103.6 548.7L1103.2 546.8L1120.2 556.3L1120.6 558.6z"/><path class="e" d="M1103.6 548.7L1103.2 546.8M1120.6 558.6L1120.2 556.3"/><path class="q" fill="#7b7b77" stroke="#7b7b77" d="M887.0 657.0L888.4 658.4L888.4 661.9L887.0 660.4z"/><path class="e" d="M887.0 657.0L888.4 658.4M887.0 660.4L888.4 661.9"/><path class="q" fill="#97948b" stroke="#97948b" d="M904.0 646.9L905.1 648.1L888.4 658.4L887.0 657.0z"/><path class="e" d="M904.0 646.9L905.1 648.1M887.0 657.0L888.4 658.4"/><path class="q" fill="#7e7e79" stroke="#7e7e79" d="M886.6 600.1L887.0 601.6L887.0 605.0L886.6 603.6z"/><path class="e" d="M886.6 600.1L887.0 601.6M886.6 603.6L887.0 605.0"/><path class="q" fill="#83837f" stroke="#83837f" d="M904.0 642.3L905.1 643.5L905.1 648.1L904.0 646.9z"/><path class="e" d="M904.0 642.3L905.1 643.5M904.0 646.9L905.1 648.1"/><path class="q" fill="#838077" stroke="#838077" d="M1103.2 491.4L1102.1 489.4L1118.8 498.7L1120.2 500.9z"/><path class="e" d="M1103.2 491.4L1102.1 489.4M1120.2 500.9L1118.8 498.7"/><path class="q" fill="#9f9c91" stroke="#9f9c91" d="M903.6 590.3L904.0 591.5L887.0 601.6L886.6 600.1z"/><path class="e" d="M903.6 590.3L904.0 591.5M886.6 600.1L887.0 601.6"/><path class="q" fill="#918f85" stroke="#918f85" d="M896.0 482.1L894.1 483.9L887.0 487.8L888.4 486.4z"/><path class="e" d="M896.0 482.1L894.1 483.9M888.4 486.4L887.0 487.8"/><path class="q" fill="#9d998f" stroke="#9d998f" d="M904.0 533.7L903.6 534.9L886.6 544.7L887.0 543.2z"/><path class="e" d="M904.0 533.7L903.6 534.9M887.0 543.2L886.6 544.7"/><path class="q" fill="#848480" stroke="#848480" d="M903.6 585.7L904.0 586.9L904.0 591.5L903.6 590.3z"/><path class="e" d="M903.6 585.7L904.0 586.9M903.6 590.3L904.0 591.5"/><path class="q" fill="#787874" stroke="#787874" d="M1118.8 646.1L1120.2 643.9L1120.2 647.4L1118.8 649.6z"/><path class="e" d="M1118.8 646.1L1120.2 643.9M1118.8 649.6L1120.2 647.4"/><path class="q" fill="#88857c" stroke="#88857c" d="M1102.1 635.8L1103.2 633.8L1120.2 643.9L1118.8 646.1z"/><path class="e" d="M1102.1 635.8L1103.2 633.8M1118.8 646.1L1120.2 643.9"/><path class="q" fill="#797975" stroke="#797975" d="M1120.2 588.5L1120.6 586.3L1120.6 589.7L1120.2 592.0z"/><path class="e" d="M1120.2 588.5L1120.6 586.3M1120.2 592.0L1120.6 589.7"/><path class="q" fill="#82827e" stroke="#82827e" d="M1102.1 631.2L1103.2 629.2L1103.2 633.8L1102.1 635.8z"/><path class="e" d="M1102.1 631.2L1103.2 629.2M1102.1 635.8L1103.2 633.8"/><path class="q" fill="#8c8980" stroke="#8c8980" d="M1103.2 578.4L1103.6 576.4L1120.6 586.3L1120.2 588.5z"/><path class="e" d="M1103.2 578.4L1103.6 576.4M1120.2 588.5L1120.6 586.3"/><path class="q" fill="#82827d" stroke="#82827d" d="M905.1 671.2L907.0 672.3L907.0 676.9L905.1 675.4z"/><path class="e" d="M905.1 671.2L907.0 672.3M905.1 675.4L907.0 676.9"/><path class="q" fill="#83837e" stroke="#83837e" d="M1103.2 573.8L1103.6 571.8L1103.6 576.4L1103.2 578.4z"/><path class="e" d="M1103.2 573.8L1103.6 571.8M1103.2 578.4L1103.6 576.4"/><path class="q" fill="#8a887f" stroke="#8a887f" d="M1103.6 521.0L1103.2 519.1L1120.2 528.6L1120.6 530.9z"/><path class="e" d="M1103.6 521.0L1103.2 519.1M1120.6 530.9L1120.2 528.6"/><path class="q" fill="#7b7b77" stroke="#7b7b77" d="M887.0 629.3L888.4 630.7L888.4 634.2L887.0 632.7z"/><path class="e" d="M887.0 629.3L888.4 630.7M887.0 632.7L888.4 634.2"/><path class="q" fill="#97948b" stroke="#97948b" d="M904.0 619.2L905.1 620.4L888.4 630.7L887.0 629.3z"/><path class="e" d="M904.0 619.2L905.1 620.4M887.0 629.3L888.4 630.7"/><path class="q" fill="#7e7e79" stroke="#7e7e79" d="M886.6 572.4L887.0 573.9L887.0 577.3L886.6 575.9z"/><path class="e" d="M886.6 572.4L887.0 573.9M886.6 575.9L887.0 577.3"/><path class="q" fill="#83837f" stroke="#83837f" d="M904.0 614.6L905.1 615.8L905.1 620.4L904.0 619.2z"/><path class="e" d="M904.0 614.6L905.1 615.8M904.0 619.2L905.1 620.4"/><path class="q" fill="#81817d" stroke="#81817d" d="M1100.2 660.8L1102.1 658.9L1102.1 663.5L1100.2 665.4z"/><path class="e" d="M1100.2 660.8L1102.1 658.9M1100.2 665.4L1102.1 663.5"/><path class="q" fill="#9f9c91" stroke="#9f9c91" d="M903.6 562.6L904.0 563.8L887.0 573.9L886.6 572.4z"/><path class="e" d="M903.6 562.6L904.0 563.8M886.6 572.4L887.0 573.9"/><path class="q" fill="#828077" stroke="#828077" d="M1100.2 665.4L1102.1 663.5L1118.8 673.8L1116.6 676.0z"/><path class="e" d="M1100.2 665.4L1102.1 663.5M1116.6 676.0L1118.8 673.8"/><path class="q" fill="#9d998f" stroke="#9d998f" d="M904.0 506.0L903.6 507.2L886.6 517.0L887.0 515.5z"/><path class="e" d="M904.0 506.0L903.6 507.2M887.0 515.5L886.6 517.0"/><path class="q" fill="#848480" stroke="#848480" d="M903.6 558.0L904.0 559.2L904.0 563.8L903.6 562.6z"/><path class="e" d="M903.6 558.0L904.0 559.2M903.6 562.6L904.0 563.8"/><path class="q" fill="#757571" stroke="#757571" d="M1116.6 676.0L1118.8 673.8L1118.8 675.9L1116.6 677.7z"/><path class="e" d="M1116.6 676.0L1118.8 673.8M1116.6 677.7L1118.8 675.9"/><path class="q" fill="#787874" stroke="#787874" d="M1118.8 618.4L1120.2 616.2L1120.2 619.7L1118.8 621.9z"/><path class="e" d="M1118.8 618.4L1120.2 616.2M1118.8 621.9L1120.2 619.7"/><path class="q" fill="#88857c" stroke="#88857c" d="M1102.1 608.1L1103.2 606.1L1120.2 616.2L1118.8 618.4z"/><path class="e" d="M1102.1 608.1L1103.2 606.1M1118.8 618.4L1120.2 616.2"/><path class="q" fill="#797975" stroke="#797975" d="M1120.2 560.8L1120.6 558.6L1120.6 562.0L1120.2 564.3z"/><path class="e" d="M1120.2 560.8L1120.6 558.6M1120.2 564.3L1120.6 562.0"/><path class="q" fill="#82827e" stroke="#82827e" d="M1102.1 603.5L1103.2 601.5L1103.2 606.1L1102.1 608.1z"/><path class="e" d="M1102.1 603.5L1103.2 601.5M1102.1 608.1L1103.2 606.1"/><path class="q" fill="#8c8980" stroke="#8c8980" d="M1103.2 550.7L1103.6 548.7L1120.6 558.6L1120.2 560.8z"/><path class="e" d="M1103.2 550.7L1103.6 548.7M1120.2 560.8L1120.6 558.6"/><path class="q" fill="#82827d" stroke="#82827d" d="M905.1 643.5L907.0 644.6L907.0 649.3L905.1 648.1z"/><path class="e" d="M905.1 643.5L907.0 644.6M905.1 648.1L907.0 649.3"/><path class="q" fill="#8e8b82" stroke="#8e8b82" d="M905.1 648.1L907.0 649.3L890.6 659.9L888.4 658.4z"/><path class="e" d="M905.1 648.1L907.0 649.3M888.4 658.4L890.6 659.9"/><path class="q" fill="#83837e" stroke="#83837e" d="M1103.2 546.1L1103.6 544.1L1103.6 548.7L1103.2 550.7z"/><path class="e" d="M1103.2 546.1L1103.6 544.1M1103.2 550.7L1103.6 548.7"/><path class="q" fill="#8a887f" stroke="#8a887f" d="M1103.6 493.3L1103.2 491.4L1120.2 500.9L1120.6 503.2z"/><path class="e" d="M1103.6 493.3L1103.2 491.4M1120.6 503.2L1120.2 500.9"/><path class="q" fill="#777772" stroke="#777772" d="M888.4 658.4L890.6 659.9L890.6 663.3L888.4 661.9z"/><path class="e" d="M888.4 658.4L890.6 659.9M888.4 661.9L890.6 663.3"/><path class="q" fill="#7b7b77" stroke="#7b7b77" d="M887.0 601.6L888.4 603.0L888.4 606.5L887.0 605.0z"/><path class="e" d="M887.0 601.6L888.4 603.0M887.0 605.0L888.4 606.5"/><path class="q" fill="#97948b" stroke="#97948b" d="M904.0 591.5L905.1 592.7L888.4 603.0L887.0 601.6z"/><path class="e" d="M904.0 591.5L905.1 592.7M887.0 601.6L888.4 603.0"/><path class="q" fill="#7e7e79" stroke="#7e7e79" d="M886.6 544.7L887.0 546.2L887.0 549.6L886.6 548.2z"/><path class="e" d="M886.6 544.7L887.0 546.2M886.6 548.2L887.0 549.6"/><path class="q" fill="#848279" stroke="#848279" d="M907.2 677.1L908.9 677.8L908.5 678.1L907.2 677.1z"/><path class="e" d="M907.2 677.1L908.9 677.8M907.2 677.1L908.5 678.1"/><path class="q" fill="#83837f" stroke="#83837f" d="M904.0 586.9L905.1 588.1L905.1 592.7L904.0 591.5z"/><path class="e" d="M904.0 586.9L905.1 588.1M904.0 591.5L905.1 592.7"/><path class="q" fill="#7f7f7a" stroke="#7f7f7a" d="M907.0 672.3L908.9 673.2L908.9 677.8L907.0 676.9z"/><path class="e" d="M907.0 672.3L908.9 673.2M907.0 676.9L908.9 677.8"/><path class="q" fill="#81817d" stroke="#81817d" d="M1100.2 633.1L1102.1 631.2L1102.1 635.8L1100.2 637.7z"/><path class="e" d="M1100.2 633.1L1102.1 631.2M1100.2 637.7L1102.1 635.8"/><path class="q" fill="#9f9c91" stroke="#9f9c91" d="M903.6 534.9L904.0 536.1L887.0 546.2L886.6 544.7z"/><path class="e" d="M903.6 534.9L904.0 536.1M886.6 544.7L887.0 546.2"/><path class="q" fill="#9d998f" stroke="#9d998f" d="M894.1 483.9L893.0 485.6L886.6 489.3L887.0 487.8z"/><path class="e" d="M894.1 483.9L893.0 485.6M887.0 487.8L886.6 489.3"/><path class="q" fill="#828077" stroke="#828077" d="M1100.2 637.7L1102.1 635.8L1118.8 646.1L1116.6 648.3z"/><path class="e" d="M1100.2 637.7L1102.1 635.8M1116.6 648.3L1118.8 646.1"/><path class="q" fill="#757571" stroke="#757571" d="M1116.6 648.3L1118.8 646.1L1118.8 649.6L1116.6 651.8z"/><path class="e" d="M1116.6 648.3L1118.8 646.1M1116.6 651.8L1118.8 649.6"/><path class="q" fill="#848480" stroke="#848480" d="M903.6 530.3L904.0 531.5L904.0 536.1L903.6 534.9z"/><path class="e" d="M903.6 530.3L904.0 531.5M903.6 534.9L904.0 536.1"/><path class="q" fill="#787874" stroke="#787874" d="M1118.8 590.7L1120.2 588.5L1120.2 592.0L1118.8 594.2z"/><path class="e" d="M1118.8 590.7L1120.2 588.5M1118.8 594.2L1120.2 592.0"/><path class="q" fill="#88857c" stroke="#88857c" d="M1102.1 580.4L1103.2 578.4L1120.2 588.5L1118.8 590.7z"/><path class="e" d="M1102.1 580.4L1103.2 578.4M1118.8 590.7L1120.2 588.5"/><path class="q" fill="#797975" stroke="#797975" d="M1120.2 533.1L1120.6 530.9L1120.6 534.3L1120.2 536.6z"/><path class="e" d="M1120.2 533.1L1120.6 530.9M1120.2 536.6L1120.6 534.3"/><path class="q" fill="#82827e" stroke="#82827e" d="M1102.1 575.8L1103.2 573.8L1103.2 578.4L1102.1 580.4z"/><path class="e" d="M1102.1 575.8L1103.2 573.8M1102.1 580.4L1103.2 578.4"/><path class="q" fill="#7f7f7b" stroke="#7f7f7b" d="M1098.3 662.2L1100.2 660.8L1100.2 665.4L1098.3 666.8z"/><path class="e" d="M1098.3 662.2L1100.2 660.8M1098.3 666.8L1100.2 665.4"/><path class="q" fill="#8c8980" stroke="#8c8980" d="M1103.2 523.0L1103.6 521.0L1120.6 530.9L1120.2 533.1z"/><path class="e" d="M1103.2 523.0L1103.6 521.0M1120.2 533.1L1120.6 530.9"/><path class="q" fill="#82827d" stroke="#82827d" d="M905.1 615.8L907.0 616.9L907.0 621.6L905.1 620.4z"/><path class="e" d="M905.1 615.8L907.0 616.9M905.1 620.4L907.0 621.6"/><path class="q" fill="#7d7b73" stroke="#7d7b73" d="M1098.3 666.8L1100.2 665.4L1116.6 676.0L1114.4 677.6z"/><path class="e" d="M1098.3 666.8L1100.2 665.4M1114.4 677.6L1116.6 676.0"/><path class="q" fill="#8e8b82" stroke="#8e8b82" d="M905.1 620.4L907.0 621.6L890.6 632.2L888.4 630.7z"/><path class="e" d="M905.1 620.4L907.0 621.6M888.4 630.7L890.6 632.2"/><path class="q" fill="#7e7c73" stroke="#7e7c73" d="M908.9 677.8L909.6 678.1L909.1 678.5L908.5 678.1z"/><path class="e" d="M908.9 677.8L909.6 678.1M908.5 678.1L909.1 678.5"/><path class="q" fill="#83837e" stroke="#83837e" d="M1103.2 518.4L1103.6 516.4L1103.6 521.0L1103.2 523.0z"/><path class="e" d="M1103.2 518.4L1103.6 516.4M1103.2 523.0L1103.6 521.0"/><path class="q" fill="#777772" stroke="#777772" d="M888.4 630.7L890.6 632.2L890.6 635.6L888.4 634.2z"/><path class="e" d="M888.4 630.7L890.6 632.2M888.4 634.2L890.6 635.6"/><path class="q" fill="#7c7c78" stroke="#7c7c78" d="M908.9 673.2L909.6 673.5L909.6 678.1L908.9 677.8z"/><path class="e" d="M908.9 673.2L909.6 673.5M908.9 677.8L909.6 678.1"/><path class="q" fill="#7b7b77" stroke="#7b7b77" d="M887.0 573.9L888.4 575.3L888.4 578.8L887.0 577.3z"/><path class="e" d="M887.0 573.9L888.4 575.3M887.0 577.3L888.4 578.8"/><path class="q" fill="#97948b" stroke="#97948b" d="M904.0 563.8L905.1 565.0L888.4 575.3L887.0 573.9z"/><path class="e" d="M904.0 563.8L905.1 565.0M887.0 573.9L888.4 575.3"/><path class="q" fill="#72726e" stroke="#72726e" d="M1114.4 677.6L1116.6 676.0L1116.6 677.7L1114.4 679.0z"/><path class="e" d="M1114.4 677.6L1116.6 676.0M1114.4 679.0L1116.6 677.7"/><path class="q" fill="#7e7e79" stroke="#7e7e79" d="M886.6 517.0L887.0 518.5L887.0 521.9L886.6 520.5z"/><path class="e" d="M886.6 517.0L887.0 518.5M886.6 520.5L887.0 521.9"/><path class="q" fill="#83837f" stroke="#83837f" d="M904.0 559.2L905.1 560.4L905.1 565.0L904.0 563.8z"/><path class="e" d="M904.0 559.2L905.1 560.4M904.0 563.8L905.1 565.0"/><path class="q" fill="#7f7f7a" stroke="#7f7f7a" d="M907.0 644.6L908.9 645.5L908.9 650.1L907.0 649.3z"/><path class="e" d="M907.0 644.6L908.9 645.5M907.0 649.3L908.9 650.1"/><path class="q" fill="#81817d" stroke="#81817d" d="M1100.2 605.4L1102.1 603.5L1102.1 608.1L1100.2 610.0z"/><path class="e" d="M1100.2 605.4L1102.1 603.5M1100.2 610.0L1102.1 608.1"/><path class="q" fill="#9f9c91" stroke="#9f9c91" d="M903.6 507.2L904.0 508.4L887.0 518.5L886.6 517.0z"/><path class="e" d="M903.6 507.2L904.0 508.4M886.6 517.0L887.0 518.5"/><path class="q" fill="#828077" stroke="#828077" d="M1100.2 610.0L1102.1 608.1L1118.8 618.4L1116.6 620.6z"/><path class="e" d="M1100.2 610.0L1102.1 608.1M1116.6 620.6L1118.8 618.4"/><path class="q" fill="#7e7e79" stroke="#7e7e79" d="M1097.6 662.7L1098.3 662.2L1098.3 666.8L1097.6 667.3z"/><path class="e" d="M1097.6 662.7L1098.3 662.2M1097.6 667.3L1098.3 666.8"/><path class="q" fill="#848279" stroke="#848279" d="M907.0 649.3L908.9 650.1L892.8 660.9L890.6 659.9z"/><path class="e" d="M907.0 649.3L908.9 650.1M890.6 659.9L892.8 660.9"/><path class="q" fill="#757571" stroke="#757571" d="M1116.6 620.6L1118.8 618.4L1118.8 621.9L1116.6 624.1z"/><path class="e" d="M1116.6 620.6L1118.8 618.4M1116.6 624.1L1118.8 621.9"/><path class="q" fill="#848480" stroke="#848480" d="M903.6 502.6L904.0 503.8L904.0 508.4L903.6 507.2z"/><path class="e" d="M903.6 502.6L904.0 503.8M903.6 507.2L904.0 508.4"/><path class="q" fill="#787874" stroke="#787874" d="M1118.8 563.0L1120.2 560.8L1120.2 564.3L1118.8 566.5z"/><path class="e" d="M1118.8 563.0L1120.2 560.8M1118.8 566.5L1120.2 564.3"/><path class="q" fill="#88857c" stroke="#88857c" d="M1102.1 552.7L1103.2 550.7L1120.2 560.8L1118.8 563.0z"/><path class="e" d="M1102.1 552.7L1103.2 550.7M1118.8 563.0L1120.2 560.8"/><path class="q" fill="#797975" stroke="#797975" d="M1120.2 505.4L1120.6 503.2L1120.6 506.6L1120.2 508.9z"/><path class="e" d="M1120.2 505.4L1120.6 503.2M1120.2 508.9L1120.6 506.6"/><path class="q" fill="#82827e" stroke="#82827e" d="M1102.1 548.1L1103.2 546.1L1103.2 550.7L1102.1 552.7z"/><path class="e" d="M1102.1 548.1L1103.2 546.1M1102.1 552.7L1103.2 550.7"/><path class="q" fill="#7f7f7b" stroke="#7f7f7b" d="M1098.3 634.5L1100.2 633.1L1100.2 637.7L1098.3 639.1z"/><path class="e" d="M1098.3 634.5L1100.2 633.1M1098.3 639.1L1100.2 637.7"/><path class="q" fill="#71716d" stroke="#71716d" d="M890.6 659.9L892.8 660.9L892.8 664.4L890.6 663.3z"/><path class="e" d="M890.6 659.9L892.8 660.9M890.6 663.3L892.8 664.4"/><path class="q" fill="#7a7870" stroke="#7a7870" d="M1097.6 667.3L1098.3 666.8L1114.4 677.6L1113.5 678.2z"/><path class="e" d="M1097.6 667.3L1098.3 666.8M1113.5 678.2L1114.4 677.6"/><path class="q" fill="#8c8980" stroke="#8c8980" d="M1103.2 495.3L1103.6 493.3L1120.6 503.2L1120.2 505.4z"/><path class="e" d="M1103.2 495.3L1103.6 493.3M1120.2 505.4L1120.6 503.2"/><path class="q" fill="#82827d" stroke="#82827d" d="M905.1 588.1L907.0 589.2L907.0 593.9L905.1 592.7z"/><path class="e" d="M905.1 588.1L907.0 589.2M905.1 592.7L907.0 593.9"/><path class="q" fill="#6b6a64" stroke="#6b6a64" d="M892.8 664.4L893.7 664.7L909.6 673.5L908.9 673.2z"/><path class="e" d="M892.8 664.4L893.7 664.7M908.9 673.2L909.6 673.5"/><path class="q" fill="#7d7b73" stroke="#7d7b73" d="M1098.3 639.1L1100.2 637.7L1116.6 648.3L1114.4 649.9z"/><path class="e" d="M1098.3 639.1L1100.2 637.7M1114.4 649.9L1116.6 648.3"/><path class="q" fill="#8e8b82" stroke="#8e8b82" d="M905.1 592.7L907.0 593.9L890.6 604.5L888.4 603.0z"/><path class="e" d="M905.1 592.7L907.0 593.9M888.4 603.0L890.6 604.5"/><path class="q" fill="#83837e" stroke="#83837e" d="M1103.2 490.7L1103.6 488.7L1103.6 493.3L1103.2 495.3z"/><path class="e" d="M1103.2 490.7L1103.6 488.7M1103.2 495.3L1103.6 493.3"/><path class="q" fill="#76736c" stroke="#76736c" d="M909.6 678.1L913.0 679.2L911.8 680.0L909.1 678.5z"/><path class="e" d="M909.6 678.1L913.0 679.2M909.1 678.5L911.8 680.0"/><path class="q" fill="#777772" stroke="#777772" d="M888.4 603.0L890.6 604.5L890.6 607.9L888.4 606.5z"/><path class="e" d="M888.4 603.0L890.6 604.5M888.4 606.5L890.6 607.9"/><path class="q" fill="#787874" stroke="#787874" d="M909.6 673.5L913.0 674.5L913.0 679.2L909.6 678.1z"/><path class="e" d="M909.6 673.5L913.0 674.5M909.6 678.1L913.0 679.2"/><path class="q" fill="#7c7c78" stroke="#7c7c78" d="M908.9 645.5L909.6 645.8L909.6 650.4L908.9 650.1z"/><path class="e" d="M908.9 645.5L909.6 645.8M908.9 650.1L909.6 650.4"/><path class="q" fill="#70706c" stroke="#70706c" d="M1113.5 678.2L1114.4 677.6L1114.4 679.0L1113.5 679.5z"/><path class="e" d="M1113.5 678.2L1114.4 677.6M1113.5 679.5L1114.4 679.0"/><path class="q" fill="#7b7b77" stroke="#7b7b77" d="M887.0 546.2L888.4 547.6L888.4 551.1L887.0 549.6z"/><path class="e" d="M887.0 546.2L888.4 547.6M887.0 549.6L888.4 551.1"/><path class="q" fill="#72726e" stroke="#72726e" d="M1114.4 649.9L1116.6 648.3L1116.6 651.8L1114.4 653.4z"/><path class="e" d="M1114.4 649.9L1116.6 648.3M1114.4 653.4L1116.6 651.8"/><path class="q" fill="#97948b" stroke="#97948b" d="M904.0 536.1L905.1 537.3L888.4 547.6L887.0 546.2z"/><path class="e" d="M904.0 536.1L905.1 537.3M887.0 546.2L888.4 547.6"/><path class="q" fill="#7e7e79" stroke="#7e7e79" d="M886.6 489.3L887.0 490.8L887.0 494.2L886.6 492.8z"/><path class="e" d="M886.6 489.3L887.0 490.8M886.6 492.8L887.0 494.2"/><path class="q" fill="#83837f" stroke="#83837f" d="M904.0 531.5L905.1 532.7L905.1 537.3L904.0 536.1z"/><path class="e" d="M904.0 531.5L905.1 532.7M904.0 536.1L905.1 537.3"/><path class="q" fill="#9f9c91" stroke="#9f9c91" d="M893.0 485.6L892.8 487.4L887.0 490.8L886.6 489.3z"/><path class="e" d="M893.0 485.6L892.8 487.4M886.6 489.3L887.0 490.8"/><path class="q" fill="#6c6a64" stroke="#6c6a64" d="M1113.5 653.9L1114.4 653.4L1098.3 662.2L1097.6 662.7z"/><path class="e" d="M1113.5 653.9L1114.4 653.4M1097.6 662.7L1098.3 662.2"/><path class="q" fill="#7f7f7a" stroke="#7f7f7a" d="M907.0 616.9L908.9 617.8L908.9 622.4L907.0 621.6z"/><path class="e" d="M907.0 616.9L908.9 617.8M907.0 621.6L908.9 622.4"/><path class="q" fill="#81817d" stroke="#81817d" d="M1100.2 577.7L1102.1 575.8L1102.1 580.4L1100.2 582.3z"/><path class="e" d="M1100.2 577.7L1102.1 575.8M1100.2 582.3L1102.1 580.4"/><path class="q" fill="#7e7c73" stroke="#7e7c73" d="M908.9 650.1L909.6 650.4L893.7 661.3L892.8 660.9z"/><path class="e" d="M908.9 650.1L909.6 650.4M892.8 660.9L893.7 661.3"/><path class="q" fill="#828077" stroke="#828077" d="M1100.2 582.3L1102.1 580.4L1118.8 590.7L1116.6 592.9z"/><path class="e" d="M1100.2 582.3L1102.1 580.4M1116.6 592.9L1118.8 590.7"/><path class="q" fill="#7c7c77" stroke="#7c7c77" d="M1094.2 664.5L1097.6 662.7L1097.6 667.3L1094.2 669.2z"/><path class="e" d="M1094.2 664.5L1097.6 662.7M1094.2 669.2L1097.6 667.3"/><path class="q" fill="#7e7e79" stroke="#7e7e79" d="M1097.6 635.0L1098.3 634.5L1098.3 639.1L1097.6 639.6z"/><path class="e" d="M1097.6 635.0L1098.3 634.5M1097.6 639.6L1098.3 639.1"/><path class="q" fill="#848279" stroke="#848279" d="M907.0 621.6L908.9 622.4L892.8 633.2L890.6 632.2z"/><path class="e" d="M907.0 621.6L908.9 622.4M890.6 632.2L892.8 633.2"/><path class="q" fill="#757571" stroke="#757571" d="M1116.6 592.9L1118.8 590.7L1118.8 594.2L1116.6 596.4z"/><path class="e" d="M1116.6 592.9L1118.8 590.7M1116.6 596.4L1118.8 594.2"/><path class="q" fill="#787874" stroke="#787874" d="M1118.8 535.3L1120.2 533.1L1120.2 536.6L1118.8 538.8z"/><path class="e" d="M1118.8 535.3L1120.2 533.1M1118.8 538.8L1120.2 536.6"/><path class="q" fill="#88857c" stroke="#88857c" d="M1102.1 525.0L1103.2 523.0L1120.2 533.1L1118.8 535.3z"/><path class="e" d="M1102.1 525.0L1103.2 523.0M1118.8 535.3L1120.2 533.1"/><path class="q" fill="#6c6c69" stroke="#6c6c69" d="M892.8 660.9L893.7 661.3L893.7 664.7L892.8 664.4z"/><path class="e" d="M892.8 660.9L893.7 661.3M892.8 664.4L893.7 664.7"/><path class="q" fill="#82827e" stroke="#82827e" d="M1102.1 520.4L1103.2 518.4L1103.2 523.0L1102.1 525.0z"/><path class="e" d="M1102.1 520.4L1103.2 518.4M1102.1 525.0L1103.2 523.0"/><path class="q" fill="#7f7f7b" stroke="#7f7f7b" d="M1098.3 606.8L1100.2 605.4L1100.2 610.0L1098.3 611.4z"/><path class="e" d="M1098.3 606.8L1100.2 605.4M1098.3 611.4L1100.2 610.0"/><path class="q" fill="#71716d" stroke="#71716d" d="M890.6 632.2L892.8 633.2L892.8 636.7L890.6 635.6z"/><path class="e" d="M890.6 632.2L892.8 633.2M890.6 635.6L892.8 636.7"/><path class="q" fill="#7a7870" stroke="#7a7870" d="M1097.6 639.6L1098.3 639.1L1114.4 649.9L1113.5 650.5z"/><path class="e" d="M1097.6 639.6L1098.3 639.1M1113.5 650.5L1114.4 649.9"/><path class="q" fill="#76736c" stroke="#76736c" d="M1094.2 669.2L1097.6 667.3L1113.5 678.2L1109.6 680.3z"/><path class="e" d="M1094.2 669.2L1097.6 667.3M1109.6 680.3L1113.5 678.2"/><path class="q" fill="#82827d" stroke="#82827d" d="M905.1 560.4L907.0 561.5L907.0 566.2L905.1 565.0z"/><path class="e" d="M905.1 560.4L907.0 561.5M905.1 565.0L907.0 566.2"/><path class="q" fill="#6b6a64" stroke="#6b6a64" d="M892.8 636.7L893.7 637.0L909.6 645.8L908.9 645.5z"/><path class="e" d="M892.8 636.7L893.7 637.0M908.9 645.5L909.6 645.8"/><path class="q" fill="#7d7b73" stroke="#7d7b73" d="M1098.3 611.4L1100.2 610.0L1116.6 620.6L1114.4 622.2z"/><path class="e" d="M1098.3 611.4L1100.2 610.0M1114.4 622.2L1116.6 620.6"/><path class="q" fill="#8e8b82" stroke="#8e8b82" d="M905.1 565.0L907.0 566.2L890.6 576.8L888.4 575.3z"/><path class="e" d="M905.1 565.0L907.0 566.2M888.4 575.3L890.6 576.8"/><path class="q" fill="#676660" stroke="#676660" d="M893.7 664.7L897.6 666.0L913.0 674.5L909.6 673.5z"/><path class="e" d="M893.7 664.7L897.6 666.0M909.6 673.5L913.0 674.5"/><path class="q" fill="#70706c" stroke="#70706c" d="M1113.5 650.5L1114.4 649.9L1114.4 653.4L1113.5 653.9z"/><path class="e" d="M1113.5 650.5L1114.4 649.9M1113.5 653.9L1114.4 653.4"/><path class="q" fill="#777772" stroke="#777772" d="M888.4 575.3L890.6 576.8L890.6 580.2L888.4 578.8z"/><path class="e" d="M888.4 575.3L890.6 576.8M888.4 578.8L890.6 580.2"/><path class="q" fill="#787874" stroke="#787874" d="M909.6 645.8L913.0 646.8L913.0 651.5L909.6 650.4z"/><path class="e" d="M909.6 645.8L913.0 646.8M909.6 650.4L913.0 651.5"/><path class="q" fill="#7c7c78" stroke="#7c7c78" d="M908.9 617.8L909.6 618.1L909.6 622.7L908.9 622.4z"/><path class="e" d="M908.9 617.8L909.6 618.1M908.9 622.4L909.6 622.7"/><path class="q" fill="#7b7b77" stroke="#7b7b77" d="M887.0 518.5L888.4 519.9L888.4 523.4L887.0 521.9z"/><path class="e" d="M887.0 518.5L888.4 519.9M887.0 521.9L888.4 523.4"/><path class="q" fill="#72726e" stroke="#72726e" d="M1114.4 622.2L1116.6 620.6L1116.6 624.1L1114.4 625.7z"/><path class="e" d="M1114.4 622.2L1116.6 620.6M1114.4 625.7L1116.6 624.1"/><path class="q" fill="#97948b" stroke="#97948b" d="M904.0 508.4L905.1 509.6L888.4 519.9L887.0 518.5z"/><path class="e" d="M904.0 508.4L905.1 509.6M887.0 518.5L888.4 519.9"/><path class="q" fill="#83837f" stroke="#83837f" d="M904.0 503.8L905.1 505.0L905.1 509.6L904.0 508.4z"/><path class="e" d="M904.0 503.8L905.1 505.0M904.0 508.4L905.1 509.6"/><path class="q" fill="#6d6d6a" stroke="#6d6d6a" d="M1109.6 680.3L1113.5 678.2L1113.5 679.5L1109.6 681.2z"/><path class="e" d="M1109.6 680.3L1113.5 678.2M1109.6 681.2L1113.5 679.5"/><path class="q" fill="#6c6a64" stroke="#6c6a64" d="M1113.5 626.2L1114.4 625.7L1098.3 634.5L1097.6 635.0z"/><path class="e" d="M1113.5 626.2L1114.4 625.7M1097.6 635.0L1098.3 634.5"/><path class="q" fill="#7f7f7a" stroke="#7f7f7a" d="M907.0 589.2L908.9 590.1L908.9 594.7L907.0 593.9z"/><path class="e" d="M907.0 589.2L908.9 590.1M907.0 593.9L908.9 594.7"/><path class="q" fill="#81817d" stroke="#81817d" d="M1100.2 550.0L1102.1 548.1L1102.1 552.7L1100.2 554.6z"/><path class="e" d="M1100.2 550.0L1102.1 548.1M1100.2 554.6L1102.1 552.7"/><path class="q" fill="#686761" stroke="#686761" d="M1109.6 656.0L1113.5 653.9L1097.6 662.7L1094.2 664.5z"/><path class="e" d="M1109.6 656.0L1113.5 653.9M1094.2 664.5L1097.6 662.7"/><path class="q" fill="#7e7c73" stroke="#7e7c73" d="M908.9 622.4L909.6 622.7L893.7 633.6L892.8 633.2z"/><path class="e" d="M908.9 622.4L909.6 622.7M892.8 633.2L893.7 633.6"/><path class="q" fill="#828077" stroke="#828077" d="M1100.2 554.6L1102.1 552.7L1118.8 563.0L1116.6 565.2z"/><path class="e" d="M1100.2 554.6L1102.1 552.7M1116.6 565.2L1118.8 563.0"/><path class="q" fill="#76736c" stroke="#76736c" d="M909.6 650.4L913.0 651.5L897.6 662.6L893.7 661.3z"/><path class="e" d="M909.6 650.4L913.0 651.5M893.7 661.3L897.6 662.6"/><path class="q" fill="#7c7c77" stroke="#7c7c77" d="M1094.2 636.8L1097.6 635.0L1097.6 639.6L1094.2 641.5z"/><path class="e" d="M1094.2 636.8L1097.6 635.0M1094.2 641.5L1097.6 639.6"/><path class="q" fill="#7e7e79" stroke="#7e7e79" d="M1097.6 607.3L1098.3 606.8L1098.3 611.4L1097.6 611.9z"/><path class="e" d="M1097.6 607.3L1098.3 606.8M1097.6 611.9L1098.3 611.4"/><path class="q" fill="#848279" stroke="#848279" d="M907.0 593.9L908.9 594.7L892.8 605.5L890.6 604.5z"/><path class="e" d="M907.0 593.9L908.9 594.7M890.6 604.5L892.8 605.5"/><path class="q" fill="#757571" stroke="#757571" d="M1116.6 565.2L1118.8 563.0L1118.8 566.5L1116.6 568.7z"/><path class="e" d="M1116.6 565.2L1118.8 563.0M1116.6 568.7L1118.8 566.5"/><path class="q" fill="#75736b" stroke="#75736b" d="M913.0 679.2L917.0 680.2L915.3 681.5L911.8 680.0z"/><path class="e" d="M913.0 679.2L917.0 680.2M911.8 680.0L915.3 681.5"/><path class="q" fill="#787874" stroke="#787874" d="M1118.8 507.6L1120.2 505.4L1120.2 508.9L1118.8 511.1z"/><path class="e" d="M1118.8 507.6L1120.2 505.4M1118.8 511.1L1120.2 508.9"/><path class="q" fill="#777772" stroke="#777772" d="M913.0 674.5L917.0 675.6L917.0 680.2L913.0 679.2z"/><path class="e" d="M913.0 674.5L917.0 675.6M913.0 679.2L917.0 680.2"/><path class="q" fill="#88857c" stroke="#88857c" d="M1102.1 497.3L1103.2 495.3L1120.2 505.4L1118.8 507.6z"/><path class="e" d="M1102.1 497.3L1103.2 495.3M1118.8 507.6L1120.2 505.4"/><path class="q" fill="#6c6c69" stroke="#6c6c69" d="M892.8 633.2L893.7 633.6L893.7 637.0L892.8 636.7z"/><path class="e" d="M892.8 633.2L893.7 633.6M892.8 636.7L893.7 637.0"/><path class="q" fill="#82827e" stroke="#82827e" d="M1102.1 492.7L1103.2 490.7L1103.2 495.3L1102.1 497.3z"/><path class="e" d="M1102.1 492.7L1103.2 490.7M1102.1 497.3L1103.2 495.3"/><path class="q" fill="#7f7f7b" stroke="#7f7f7b" d="M1098.3 579.1L1100.2 577.7L1100.2 582.3L1098.3 583.7z"/><path class="e" d="M1098.3 579.1L1100.2 577.7M1098.3 583.7L1100.2 582.3"/><path class="q" fill="#71716d" stroke="#71716d" d="M890.6 604.5L892.8 605.5L892.8 609.0L890.6 607.9z"/><path class="e" d="M890.6 604.5L892.8 605.5M890.6 607.9L892.8 609.0"/><path class="q" fill="#7a7870" stroke="#7a7870" d="M1097.6 611.9L1098.3 611.4L1114.4 622.2L1113.5 622.8z"/><path class="e" d="M1097.6 611.9L1098.3 611.4M1113.5 622.8L1114.4 622.2"/><path class="q" fill="#76736c" stroke="#76736c" d="M1094.2 641.5L1097.6 639.6L1113.5 650.5L1109.6 652.6z"/><path class="e" d="M1094.2 641.5L1097.6 639.6M1109.6 652.6L1113.5 650.5"/><path class="q" fill="#666663" stroke="#666663" d="M893.7 661.3L897.6 662.6L897.6 666.0L893.7 664.7z"/><path class="e" d="M893.7 661.3L897.6 662.6M893.7 664.7L897.6 666.0"/><path class="q" fill="#82827d" stroke="#82827d" d="M905.1 532.7L907.0 533.8L907.0 538.5L905.1 537.3z"/><path class="e" d="M905.1 532.7L907.0 533.8M905.1 537.3L907.0 538.5"/><path class="q" fill="#6b6a64" stroke="#6b6a64" d="M892.8 609.0L893.7 609.3L909.6 618.1L908.9 617.8z"/><path class="e" d="M892.8 609.0L893.7 609.3M908.9 617.8L909.6 618.1"/><path class="q" fill="#7d7b73" stroke="#7d7b73" d="M1098.3 583.7L1100.2 582.3L1116.6 592.9L1114.4 594.5z"/><path class="e" d="M1098.3 583.7L1100.2 582.3M1114.4 594.5L1116.6 592.9"/><path class="q" fill="#7a7a76" stroke="#7a7a76" d="M1090.2 666.3L1094.2 664.5L1094.2 669.2L1090.2 671.0z"/><path class="e" d="M1090.2 666.3L1094.2 664.5M1090.2 671.0L1094.2 669.2"/><path class="q" fill="#8e8b82" stroke="#8e8b82" d="M905.1 537.3L907.0 538.5L890.6 549.1L888.4 547.6z"/><path class="e" d="M905.1 537.3L907.0 538.5M888.4 547.6L890.6 549.1"/><path class="q" fill="#676660" stroke="#676660" d="M893.7 637.0L897.6 638.3L913.0 646.8L909.6 645.8z"/><path class="e" d="M893.7 637.0L897.6 638.3M909.6 645.8L913.0 646.8"/><path class="q" fill="#70706c" stroke="#70706c" d="M1113.5 622.8L1114.4 622.2L1114.4 625.7L1113.5 626.2z"/><path class="e" d="M1113.5 622.8L1114.4 622.2M1113.5 626.2L1114.4 625.7"/><path class="q" fill="#777772" stroke="#777772" d="M888.4 547.6L890.6 549.1L890.6 552.5L888.4 551.1z"/><path class="e" d="M888.4 547.6L890.6 549.1M888.4 551.1L890.6 552.5"/><path class="q" fill="#787874" stroke="#787874" d="M909.6 618.1L913.0 619.1L913.0 623.8L909.6 622.7z"/><path class="e" d="M909.6 618.1L913.0 619.1M909.6 622.7L913.0 623.8"/><path class="q" fill="#7c7c78" stroke="#7c7c78" d="M908.9 590.1L909.6 590.4L909.6 595.0L908.9 594.7z"/><path class="e" d="M908.9 590.1L909.6 590.4M908.9 594.7L909.6 595.0"/><path class="q" fill="#7b7b77" stroke="#7b7b77" d="M887.0 490.8L888.4 492.2L888.4 495.7L887.0 494.2z"/><path class="e" d="M887.0 490.8L888.4 492.2M887.0 494.2L888.4 495.7"/><path class="q" fill="#72726e" stroke="#72726e" d="M1114.4 594.5L1116.6 592.9L1116.6 596.4L1114.4 598.0z"/><path class="e" d="M1114.4 594.5L1116.6 592.9M1114.4 598.0L1116.6 596.4"/><path class="q" fill="#97948b" stroke="#97948b" d="M892.8 487.4L893.4 489.1L888.4 492.2L887.0 490.8z"/><path class="e" d="M892.8 487.4L893.4 489.1M887.0 490.8L888.4 492.2"/><path class="q" fill="#6d6d6a" stroke="#6d6d6a" d="M1109.6 652.6L1113.5 650.5L1113.5 653.9L1109.6 656.0z"/><path class="e" d="M1109.6 652.6L1113.5 650.5M1109.6 656.0L1113.5 653.9"/><path class="q" fill="#6c6a64" stroke="#6c6a64" d="M1113.5 598.5L1114.4 598.0L1098.3 606.8L1097.6 607.3z"/><path class="e" d="M1113.5 598.5L1114.4 598.0M1097.6 607.3L1098.3 606.8"/><path class="q" fill="#7f7f7a" stroke="#7f7f7a" d="M907.0 561.5L908.9 562.4L908.9 567.0L907.0 566.2z"/><path class="e" d="M907.0 561.5L908.9 562.4M907.0 566.2L908.9 567.0"/><path class="q" fill="#81817d" stroke="#81817d" d="M1100.2 522.3L1102.1 520.4L1102.1 525.0L1100.2 526.9z"/><path class="e" d="M1100.2 522.3L1102.1 520.4M1100.2 526.9L1102.1 525.0"/><path class="q" fill="#686761" stroke="#686761" d="M1109.6 628.3L1113.5 626.2L1097.6 635.0L1094.2 636.8z"/><path class="e" d="M1109.6 628.3L1113.5 626.2M1094.2 636.8L1097.6 635.0"/><path class="q" fill="#7e7c73" stroke="#7e7c73" d="M908.9 594.7L909.6 595.0L893.7 605.9L892.8 605.5z"/><path class="e" d="M908.9 594.7L909.6 595.0M892.8 605.5L893.7 605.9"/><path class="q" fill="#828077" stroke="#828077" d="M1100.2 526.9L1102.1 525.0L1118.8 535.3L1116.6 537.5z"/><path class="e" d="M1100.2 526.9L1102.1 525.0M1116.6 537.5L1118.8 535.3"/><path class="q" fill="#76736c" stroke="#76736c" d="M909.6 622.7L913.0 623.8L897.6 634.9L893.7 633.6z"/><path class="e" d="M909.6 622.7L913.0 623.8M893.7 633.6L897.6 634.9"/><path class="q" fill="#75736b" stroke="#75736b" d="M1090.2 671.0L1094.2 669.2L1109.6 680.3L1104.9 682.3z"/><path class="e" d="M1090.2 671.0L1094.2 669.2M1104.9 682.3L1109.6 680.3"/><path class="q" fill="#7c7c77" stroke="#7c7c77" d="M1094.2 609.1L1097.6 607.3L1097.6 611.9L1094.2 613.8z"/><path class="e" d="M1094.2 609.1L1097.6 607.3M1094.2 613.8L1097.6 611.9"/><path class="q" fill="#7e7e79" stroke="#7e7e79" d="M1097.6 579.6L1098.3 579.1L1098.3 583.7L1097.6 584.2z"/><path class="e" d="M1097.6 579.6L1098.3 579.1M1097.6 584.2L1098.3 583.7"/><path class="q" fill="#848279" stroke="#848279" d="M907.0 566.2L908.9 567.0L892.8 577.8L890.6 576.8z"/><path class="e" d="M907.0 566.2L908.9 567.0M890.6 576.8L892.8 577.8"/><path class="q" fill="#757571" stroke="#757571" d="M1116.6 537.5L1118.8 535.3L1118.8 538.8L1116.6 541.0z"/><path class="e" d="M1116.6 537.5L1118.8 535.3M1116.6 541.0L1118.8 538.8"/><path class="q" fill="#777772" stroke="#777772" d="M913.0 646.8L917.0 647.9L917.0 652.5L913.0 651.5z"/><path class="e" d="M913.0 646.8L917.0 647.9M913.0 651.5L917.0 652.5"/><path class="q" fill="#61605b" stroke="#61605b" d="M897.6 666.0L902.3 667.3L917.0 675.6L913.0 674.5z"/><path class="e" d="M897.6 666.0L902.3 667.3M913.0 674.5L917.0 675.6"/><path class="q" fill="#6c6c69" stroke="#6c6c69" d="M892.8 605.5L893.7 605.9L893.7 609.3L892.8 609.0z"/><path class="e" d="M892.8 605.5L893.7 605.9M892.8 609.0L893.7 609.3"/><path class="q" fill="#7f7f7b" stroke="#7f7f7b" d="M1098.3 551.4L1100.2 550.0L1100.2 554.6L1098.3 556.0z"/><path class="e" d="M1098.3 551.4L1100.2 550.0M1098.3 556.0L1100.2 554.6"/><path class="q" fill="#71716d" stroke="#71716d" d="M890.6 576.8L892.8 577.8L892.8 581.3L890.6 580.2z"/><path class="e" d="M890.6 576.8L892.8 577.8M890.6 580.2L892.8 581.3"/><path class="q" fill="#7a7870" stroke="#7a7870" d="M1097.6 584.2L1098.3 583.7L1114.4 594.5L1113.5 595.1z"/><path class="e" d="M1097.6 584.2L1098.3 583.7M1113.5 595.1L1114.4 594.5"/><path class="q" fill="#76736c" stroke="#76736c" d="M1094.2 613.8L1097.6 611.9L1113.5 622.8L1109.6 624.9z"/><path class="e" d="M1094.2 613.8L1097.6 611.9M1109.6 624.9L1113.5 622.8"/><path class="q" fill="#666663" stroke="#666663" d="M893.7 633.6L897.6 634.9L897.6 638.3L893.7 637.0z"/><path class="e" d="M893.7 633.6L897.6 634.9M893.7 637.0L897.6 638.3"/><path class="q" fill="#82827d" stroke="#82827d" d="M905.1 505.0L907.0 506.1L907.0 510.8L905.1 509.6z"/><path class="e" d="M905.1 505.0L907.0 506.1M905.1 509.6L907.0 510.8"/><path class="q" fill="#6b6a64" stroke="#6b6a64" d="M892.8 581.3L893.7 581.6L909.6 590.4L908.9 590.1z"/><path class="e" d="M892.8 581.3L893.7 581.6M908.9 590.1L909.6 590.4"/><path class="q" fill="#7d7b73" stroke="#7d7b73" d="M1098.3 556.0L1100.2 554.6L1116.6 565.2L1114.4 566.8z"/><path class="e" d="M1098.3 556.0L1100.2 554.6M1114.4 566.8L1116.6 565.2"/><path class="q" fill="#7a7a76" stroke="#7a7a76" d="M1090.2 638.6L1094.2 636.8L1094.2 641.5L1090.2 643.3z"/><path class="e" d="M1090.2 638.6L1094.2 636.8M1090.2 643.3L1094.2 641.5"/><path class="q" fill="#8e8b82" stroke="#8e8b82" d="M905.1 509.6L907.0 510.8L890.6 521.4L888.4 519.9z"/><path class="e" d="M905.1 509.6L907.0 510.8M888.4 519.9L890.6 521.4"/><path class="q" fill="#676660" stroke="#676660" d="M893.7 609.3L897.6 610.6L913.0 619.1L909.6 618.1z"/><path class="e" d="M893.7 609.3L897.6 610.6M909.6 618.1L913.0 619.1"/><path class="q" fill="#62615b" stroke="#62615b" d="M1104.9 658.1L1109.6 656.0L1094.2 664.5L1090.2 666.3z"/><path class="e" d="M1104.9 658.1L1109.6 656.0M1090.2 666.3L1094.2 664.5"/><path class="q" fill="#6e6e6a" stroke="#6e6e6a" d="M1104.9 682.3L1109.6 680.3L1109.6 681.2L1104.9 682.9z"/><path class="e" d="M1104.9 682.3L1109.6 680.3M1104.9 682.9L1109.6 681.2"/><path class="q" fill="#70706c" stroke="#70706c" d="M1113.5 595.1L1114.4 594.5L1114.4 598.0L1113.5 598.5z"/><path class="e" d="M1113.5 595.1L1114.4 594.5M1113.5 598.5L1114.4 598.0"/><path class="q" fill="#767672" stroke="#767672" d="M917.0 675.6L921.7 676.5L921.7 681.2L917.0 680.2z"/><path class="e" d="M917.0 675.6L921.7 676.5M917.0 680.2L921.7 681.2"/><path class="q" fill="#777772" stroke="#777772" d="M888.4 519.9L890.6 521.4L890.6 524.8L888.4 523.4z"/><path class="e" d="M888.4 519.9L890.6 521.4M888.4 523.4L890.6 524.8"/><path class="q" fill="#77746d" stroke="#77746d" d="M917.0 680.2L921.7 681.2L919.6 682.9L915.3 681.5z"/><path class="e" d="M917.0 680.2L921.7 681.2M915.3 681.5L919.6 682.9"/><path class="q" fill="#787874" stroke="#787874" d="M909.6 590.4L913.0 591.4L913.0 596.1L909.6 595.0z"/><path class="e" d="M909.6 590.4L913.0 591.4M909.6 595.0L913.0 596.1"/><path class="q" fill="#7c7c78" stroke="#7c7c78" d="M908.9 562.4L909.6 562.7L909.6 567.3L908.9 567.0z"/><path class="e" d="M908.9 562.4L909.6 562.7M908.9 567.0L909.6 567.3"/><path class="q" fill="#75736b" stroke="#75736b" d="M913.0 651.5L917.0 652.5L902.3 663.9L897.6 662.6z"/><path class="e" d="M913.0 651.5L917.0 652.5M897.6 662.6L902.3 663.9"/><path class="q" fill="#72726e" stroke="#72726e" d="M1114.4 566.8L1116.6 565.2L1116.6 568.7L1114.4 570.3z"/><path class="e" d="M1114.4 566.8L1116.6 565.2M1114.4 570.3L1116.6 568.7"/><path class="q" fill="#6d6d6a" stroke="#6d6d6a" d="M1109.6 624.9L1113.5 622.8L1113.5 626.2L1109.6 628.3z"/><path class="e" d="M1109.6 624.9L1113.5 622.8M1109.6 628.3L1113.5 626.2"/><path class="q" fill="#6c6a64" stroke="#6c6a64" d="M1113.5 570.8L1114.4 570.3L1098.3 579.1L1097.6 579.6z"/><path class="e" d="M1113.5 570.8L1114.4 570.3M1097.6 579.6L1098.3 579.1"/><path class="q" fill="#7f7f7a" stroke="#7f7f7a" d="M907.0 533.8L908.9 534.7L908.9 539.3L907.0 538.5z"/><path class="e" d="M907.0 533.8L908.9 534.7M907.0 538.5L908.9 539.3"/><path class="q" fill="#81817d" stroke="#81817d" d="M1100.2 494.6L1102.1 492.7L1102.1 497.3L1100.2 499.2z"/><path class="e" d="M1100.2 494.6L1102.1 492.7M1100.2 499.2L1102.1 497.3"/><path class="q" fill="#686761" stroke="#686761" d="M1109.6 600.6L1113.5 598.5L1097.6 607.3L1094.2 609.1z"/><path class="e" d="M1109.6 600.6L1113.5 598.5M1094.2 609.1L1097.6 607.3"/><path class="q" fill="#7e7c73" stroke="#7e7c73" d="M908.9 567.0L909.6 567.3L893.7 578.2L892.8 577.8z"/><path class="e" d="M908.9 567.0L909.6 567.3M892.8 577.8L893.7 578.2"/><path class="q" fill="#7a7a76" stroke="#7a7a76" d="M1085.5 668.1L1090.2 666.3L1090.2 671.0L1085.5 672.7z"/><path class="e" d="M1085.5 668.1L1090.2 666.3M1085.5 672.7L1090.2 671.0"/><path class="q" fill="#828077" stroke="#828077" d="M1100.2 499.2L1102.1 497.3L1118.8 507.6L1116.6 509.8z"/><path class="e" d="M1100.2 499.2L1102.1 497.3M1116.6 509.8L1118.8 507.6"/><path class="q" fill="#76736c" stroke="#76736c" d="M909.6 595.0L913.0 596.1L897.6 607.2L893.7 605.9z"/><path class="e" d="M909.6 595.0L913.0 596.1M893.7 605.9L897.6 607.2"/><path class="q" fill="#75736b" stroke="#75736b" d="M1090.2 643.3L1094.2 641.5L1109.6 652.6L1104.9 654.6z"/><path class="e" d="M1090.2 643.3L1094.2 641.5M1104.9 654.6L1109.6 652.6"/><path class="q" fill="#7c7c77" stroke="#7c7c77" d="M1094.2 581.4L1097.6 579.6L1097.6 584.2L1094.2 586.1z"/><path class="e" d="M1094.2 581.4L1097.6 579.6M1094.2 586.1L1097.6 584.2"/><path class="q" fill="#7e7e79" stroke="#7e7e79" d="M1097.6 551.9L1098.3 551.4L1098.3 556.0L1097.6 556.5z"/><path class="e" d="M1097.6 551.9L1098.3 551.4M1097.6 556.5L1098.3 556.0"/><path class="q" fill="#848279" stroke="#848279" d="M907.0 538.5L908.9 539.3L892.8 550.1L890.6 549.1z"/><path class="e" d="M907.0 538.5L908.9 539.3M890.6 549.1L892.8 550.1"/><path class="q" fill="#757571" stroke="#757571" d="M1116.6 509.8L1118.8 507.6L1118.8 511.1L1116.6 513.3z"/><path class="e" d="M1116.6 509.8L1118.8 507.6M1116.6 513.3L1118.8 511.1"/><path class="q" fill="#777772" stroke="#777772" d="M913.0 619.1L917.0 620.2L917.0 624.8L913.0 623.8z"/><path class="e" d="M913.0 619.1L917.0 620.2M913.0 623.8L917.0 624.8"/><path class="q" fill="#686864" stroke="#686864" d="M897.6 662.6L902.3 663.9L902.3 667.3L897.6 666.0z"/><path class="e" d="M897.6 662.6L902.3 663.9M897.6 666.0L902.3 667.3"/><path class="q" fill="#61605b" stroke="#61605b" d="M897.6 638.3L902.3 639.6L917.0 647.9L913.0 646.8z"/><path class="e" d="M897.6 638.3L902.3 639.6M913.0 646.8L917.0 647.9"/><path class="q" fill="#6c6c69" stroke="#6c6c69" d="M892.8 577.8L893.7 578.2L893.7 581.6L892.8 581.3z"/><path class="e" d="M892.8 577.8L893.7 578.2M892.8 581.3L893.7 581.6"/><path class="q" fill="#7f7f7b" stroke="#7f7f7b" d="M1098.3 523.7L1100.2 522.3L1100.2 526.9L1098.3 528.3z"/><path class="e" d="M1098.3 523.7L1100.2 522.3M1098.3 528.3L1100.2 526.9"/><path class="q" fill="#71716d" stroke="#71716d" d="M890.6 549.1L892.8 550.1L892.8 553.6L890.6 552.5z"/><path class="e" d="M890.6 549.1L892.8 550.1M890.6 552.5L892.8 553.6"/><path class="q" fill="#7a7870" stroke="#7a7870" d="M1097.6 556.5L1098.3 556.0L1114.4 566.8L1113.5 567.4z"/><path class="e" d="M1097.6 556.5L1098.3 556.0M1113.5 567.4L1114.4 566.8"/><path class="q" fill="#76736c" stroke="#76736c" d="M1094.2 586.1L1097.6 584.2L1113.5 595.1L1109.6 597.2z"/><path class="e" d="M1094.2 586.1L1097.6 584.2M1109.6 597.2L1113.5 595.1"/><path class="q" fill="#666663" stroke="#666663" d="M893.7 605.9L897.6 607.2L897.6 610.6L893.7 609.3z"/><path class="e" d="M893.7 605.9L897.6 607.2M893.7 609.3L897.6 610.6"/><path class="q" fill="#6b6a64" stroke="#6b6a64" d="M892.8 553.6L893.7 553.9L909.6 562.7L908.9 562.4z"/><path class="e" d="M892.8 553.6L893.7 553.9M908.9 562.4L909.6 562.7"/><path class="q" fill="#7d7b73" stroke="#7d7b73" d="M1098.3 528.3L1100.2 526.9L1116.6 537.5L1114.4 539.1z"/><path class="e" d="M1098.3 528.3L1100.2 526.9M1114.4 539.1L1116.6 537.5"/><path class="q" fill="#7a7a76" stroke="#7a7a76" d="M1090.2 610.9L1094.2 609.1L1094.2 613.8L1090.2 615.6z"/><path class="e" d="M1090.2 610.9L1094.2 609.1M1090.2 615.6L1094.2 613.8"/><path class="q" fill="#6e6e6a" stroke="#6e6e6a" d="M1104.9 654.6L1109.6 652.6L1109.6 656.0L1104.9 658.1z"/><path class="e" d="M1104.9 654.6L1109.6 652.6M1104.9 658.1L1109.6 656.0"/><path class="q" fill="#676660" stroke="#676660" d="M893.7 581.6L897.6 582.9L913.0 591.4L909.6 590.4z"/><path class="e" d="M893.7 581.6L897.6 582.9M909.6 590.4L913.0 591.4"/><path class="q" fill="#62615b" stroke="#62615b" d="M1104.9 630.4L1109.6 628.3L1094.2 636.8L1090.2 638.6z"/><path class="e" d="M1104.9 630.4L1109.6 628.3M1090.2 638.6L1094.2 636.8"/><path class="q" fill="#76746c" stroke="#76746c" d="M1085.5 672.7L1090.2 671.0L1104.9 682.3L1099.4 684.3z"/><path class="e" d="M1085.5 672.7L1090.2 671.0M1099.4 684.3L1104.9 682.3"/><path class="q" fill="#70706c" stroke="#70706c" d="M1113.5 567.4L1114.4 566.8L1114.4 570.3L1113.5 570.8z"/><path class="e" d="M1113.5 567.4L1114.4 566.8M1113.5 570.8L1114.4 570.3"/><path class="q" fill="#767672" stroke="#767672" d="M917.0 647.9L921.7 648.8L921.7 653.5L917.0 652.5z"/><path class="e" d="M917.0 647.9L921.7 648.8M917.0 652.5L921.7 653.5"/><path class="q" fill="#777772" stroke="#777772" d="M888.4 492.2L890.6 493.7L890.6 497.1L888.4 495.7z"/><path class="e" d="M888.4 492.2L890.6 493.7M888.4 495.7L890.6 497.1"/><path class="q" fill="#787874" stroke="#787874" d="M909.6 562.7L913.0 563.7L913.0 568.4L909.6 567.3z"/><path class="e" d="M909.6 562.7L913.0 563.7M909.6 567.3L913.0 568.4"/><path class="q" fill="#8e8b82" stroke="#8e8b82" d="M893.4 489.1L894.8 490.9L890.6 493.7L888.4 492.2z"/><path class="e" d="M893.4 489.1L894.8 490.9M888.4 492.2L890.6 493.7"/><path class="q" fill="#7c7c78" stroke="#7c7c78" d="M908.9 534.7L909.6 535.0L909.6 539.6L908.9 539.3z"/><path class="e" d="M908.9 534.7L909.6 535.0M908.9 539.3L909.6 539.6"/><path class="q" fill="#75736b" stroke="#75736b" d="M913.0 623.8L917.0 624.8L902.3 636.2L897.6 634.9z"/><path class="e" d="M913.0 623.8L917.0 624.8M897.6 634.9L902.3 636.2"/><path class="q" fill="#72726e" stroke="#72726e" d="M1114.4 539.1L1116.6 537.5L1116.6 541.0L1114.4 542.6z"/><path class="e" d="M1114.4 539.1L1116.6 537.5M1114.4 542.6L1116.6 541.0"/><path class="q" fill="#6d6d6a" stroke="#6d6d6a" d="M1109.6 597.2L1113.5 595.1L1113.5 598.5L1109.6 600.6z"/><path class="e" d="M1109.6 597.2L1113.5 595.1M1109.6 600.6L1113.5 598.5"/><path class="q" fill="#5c5a55" stroke="#5c5a55" d="M902.3 667.3L907.8 668.5L921.7 676.5L917.0 675.6z"/><path class="e" d="M902.3 667.3L907.8 668.5M917.0 675.6L921.7 676.5"/><path class="q" fill="#6c6a64" stroke="#6c6a64" d="M1113.5 543.1L1114.4 542.6L1098.3 551.4L1097.6 551.9z"/><path class="e" d="M1113.5 543.1L1114.4 542.6M1097.6 551.9L1098.3 551.4"/><path class="q" fill="#7f7f7a" stroke="#7f7f7a" d="M907.0 506.1L908.9 507.0L908.9 511.6L907.0 510.8z"/><path class="e" d="M907.0 506.1L908.9 507.0M907.0 510.8L908.9 511.6"/><path class="q" fill="#686761" stroke="#686761" d="M1109.6 572.9L1113.5 570.8L1097.6 579.6L1094.2 581.4z"/><path class="e" d="M1109.6 572.9L1113.5 570.8M1094.2 581.4L1097.6 579.6"/><path class="q" fill="#7e7c73" stroke="#7e7c73" d="M908.9 539.3L909.6 539.6L893.7 550.5L892.8 550.1z"/><path class="e" d="M908.9 539.3L909.6 539.6M892.8 550.1L893.7 550.5"/><path class="q" fill="#7a7a76" stroke="#7a7a76" d="M1085.5 640.4L1090.2 638.6L1090.2 643.3L1085.5 645.0z"/><path class="e" d="M1085.5 640.4L1090.2 638.6M1085.5 645.0L1090.2 643.3"/><path class="q" fill="#76736c" stroke="#76736c" d="M909.6 567.3L913.0 568.4L897.6 579.5L893.7 578.2z"/><path class="e" d="M909.6 567.3L913.0 568.4M893.7 578.2L897.6 579.5"/><path class="q" fill="#75736b" stroke="#75736b" d="M1090.2 615.6L1094.2 613.8L1109.6 624.9L1104.9 626.9z"/><path class="e" d="M1090.2 615.6L1094.2 613.8M1104.9 626.9L1109.6 624.9"/><path class="q" fill="#777773" stroke="#777773" d="M921.7 676.5L927.0 677.4L927.0 682.0L921.7 681.2z"/><path class="e" d="M921.7 676.5L927.0 677.4M921.7 681.2L927.0 682.0"/><path class="q" fill="#7c7c77" stroke="#7c7c77" d="M1094.2 553.7L1097.6 551.9L1097.6 556.5L1094.2 558.4z"/><path class="e" d="M1094.2 553.7L1097.6 551.9M1094.2 558.4L1097.6 556.5"/><path class="q" fill="#7e7e79" stroke="#7e7e79" d="M1097.6 524.2L1098.3 523.7L1098.3 528.3L1097.6 528.8z"/><path class="e" d="M1097.6 524.2L1098.3 523.7M1097.6 528.8L1098.3 528.3"/><path class="q" fill="#848279" stroke="#848279" d="M907.0 510.8L908.9 511.6L892.8 522.4L890.6 521.4z"/><path class="e" d="M907.0 510.8L908.9 511.6M890.6 521.4L892.8 522.4"/><path class="q" fill="#79776f" stroke="#79776f" d="M921.7 681.2L927.0 682.0L924.5 684.3L919.6 682.9z"/><path class="e" d="M921.7 681.2L927.0 682.0M919.6 682.9L924.5 684.3"/><path class="q" fill="#5d5b56" stroke="#5d5b56" d="M1099.4 660.0L1104.9 658.1L1090.2 666.3L1085.5 668.1z"/><path class="e" d="M1099.4 660.0L1104.9 658.1M1085.5 668.1L1090.2 666.3"/><path class="q" fill="#777772" stroke="#777772" d="M913.0 591.4L917.0 592.5L917.0 597.1L913.0 596.1z"/><path class="e" d="M913.0 591.4L917.0 592.5M913.0 596.1L917.0 597.1"/><path class="q" fill="#686864" stroke="#686864" d="M897.6 634.9L902.3 636.2L902.3 639.6L897.6 638.3z"/><path class="e" d="M897.6 634.9L902.3 636.2M897.6 638.3L902.3 639.6"/><path class="q" fill="#61605b" stroke="#61605b" d="M897.6 610.6L902.3 611.9L917.0 620.2L913.0 619.1z"/><path class="e" d="M897.6 610.6L902.3 611.9M913.0 619.1L917.0 620.2"/><path class="q" fill="#6c6c69" stroke="#6c6c69" d="M892.8 550.1L893.7 550.5L893.7 553.9L892.8 553.6z"/><path class="e" d="M892.8 550.1L893.7 550.5M892.8 553.6L893.7 553.9"/><path class="q" fill="#77746d" stroke="#77746d" d="M917.0 652.5L921.7 653.5L907.8 665.0L902.3 663.9z"/><path class="e" d="M917.0 652.5L921.7 653.5M902.3 663.9L907.8 665.0"/><path class="q" fill="#7f7f7b" stroke="#7f7f7b" d="M1098.3 496.0L1100.2 494.6L1100.2 499.2L1098.3 500.6z"/><path class="e" d="M1098.3 496.0L1100.2 494.6M1098.3 500.6L1100.2 499.2"/><path class="q" fill="#70706c" stroke="#70706c" d="M1099.4 684.3L1104.9 682.3L1104.9 682.9L1099.4 684.4z"/><path class="e" d="M1099.4 684.3L1104.9 682.3M1099.4 684.4L1104.9 682.9"/><path class="q" fill="#71716d" stroke="#71716d" d="M890.6 521.4L892.8 522.4L892.8 525.9L890.6 524.8z"/><path class="e" d="M890.6 521.4L892.8 522.4M890.6 524.8L892.8 525.9"/><path class="q" fill="#7a7a76" stroke="#7a7a76" d="M1080.2 669.7L1085.5 668.1L1085.5 672.7L1080.2 674.3z"/><path class="e" d="M1080.2 669.7L1085.5 668.1M1080.2 674.3L1085.5 672.7"/><path class="q" fill="#7a7870" stroke="#7a7870" d="M1097.6 528.8L1098.3 528.3L1114.4 539.1L1113.5 539.7z"/><path class="e" d="M1097.6 528.8L1098.3 528.3M1113.5 539.7L1114.4 539.1"/><path class="q" fill="#76736c" stroke="#76736c" d="M1094.2 558.4L1097.6 556.5L1113.5 567.4L1109.6 569.5z"/><path class="e" d="M1094.2 558.4L1097.6 556.5M1109.6 569.5L1113.5 567.4"/><path class="q" fill="#666663" stroke="#666663" d="M893.7 578.2L897.6 579.5L897.6 582.9L893.7 581.6z"/><path class="e" d="M893.7 578.2L897.6 579.5M893.7 581.6L897.6 582.9"/><path class="q" fill="#6b6a64" stroke="#6b6a64" d="M892.8 525.9L893.7 526.2L909.6 535.0L908.9 534.7z"/><path class="e" d="M892.8 525.9L893.7 526.2M908.9 534.7L909.6 535.0"/><path class="q" fill="#7d7b73" stroke="#7d7b73" d="M1098.3 500.6L1100.2 499.2L1116.6 509.8L1114.4 511.4z"/><path class="e" d="M1098.3 500.6L1100.2 499.2M1114.4 511.4L1116.6 509.8"/><path class="q" fill="#7a7a76" stroke="#7a7a76" d="M1090.2 583.2L1094.2 581.4L1094.2 586.1L1090.2 587.9z"/><path class="e" d="M1090.2 583.2L1094.2 581.4M1090.2 587.9L1094.2 586.1"/><path class="q" fill="#6e6e6a" stroke="#6e6e6a" d="M1104.9 626.9L1109.6 624.9L1109.6 628.3L1104.9 630.4z"/><path class="e" d="M1104.9 626.9L1109.6 624.9M1104.9 630.4L1109.6 628.3"/><path class="q" fill="#676660" stroke="#676660" d="M893.7 553.9L897.6 555.2L913.0 563.7L909.6 562.7z"/><path class="e" d="M893.7 553.9L897.6 555.2M909.6 562.7L913.0 563.7"/><path class="q" fill="#62615b" stroke="#62615b" d="M1104.9 602.7L1109.6 600.6L1094.2 609.1L1090.2 610.9z"/><path class="e" d="M1104.9 602.7L1109.6 600.6M1090.2 610.9L1094.2 609.1"/><path class="q" fill="#76746c" stroke="#76746c" d="M1085.5 645.0L1090.2 643.3L1104.9 654.6L1099.4 656.6z"/><path class="e" d="M1085.5 645.0L1090.2 643.3M1099.4 656.6L1104.9 654.6"/><path class="q" fill="#70706c" stroke="#70706c" d="M1113.5 539.7L1114.4 539.1L1114.4 542.6L1113.5 543.1z"/><path class="e" d="M1113.5 539.7L1114.4 539.1M1113.5 543.1L1114.4 542.6"/><path class="q" fill="#767672" stroke="#767672" d="M917.0 620.2L921.7 621.1L921.7 625.8L917.0 624.8z"/><path class="e" d="M917.0 620.2L921.7 621.1M917.0 624.8L921.7 625.8"/><path class="q" fill="#787874" stroke="#787874" d="M909.6 535.0L913.0 536.0L913.0 540.7L909.6 539.6z"/><path class="e" d="M909.6 535.0L913.0 536.0M909.6 539.6L913.0 540.7"/><path class="q" fill="#7c7c78" stroke="#7c7c78" d="M908.9 507.0L909.6 507.3L909.6 511.9L908.9 511.6z"/><path class="e" d="M908.9 507.0L909.6 507.3M908.9 511.6L909.6 511.9"/><path class="q" fill="#75736b" stroke="#75736b" d="M913.0 596.1L917.0 597.1L902.3 608.5L897.6 607.2z"/><path class="e" d="M913.0 596.1L917.0 597.1M897.6 607.2L902.3 608.5"/><path class="q" fill="#72726e" stroke="#72726e" d="M1114.4 511.4L1116.6 509.8L1116.6 513.3L1114.4 514.9z"/><path class="e" d="M1114.4 511.4L1116.6 509.8M1114.4 514.9L1116.6 513.3"/><path class="q" fill="#6d6d6a" stroke="#6d6d6a" d="M1109.6 569.5L1113.5 567.4L1113.5 570.8L1109.6 572.9z"/><path class="e" d="M1109.6 569.5L1113.5 567.4M1109.6 572.9L1113.5 570.8"/><path class="q" fill="#5c5a55" stroke="#5c5a55" d="M902.3 639.6L907.8 640.8L921.7 648.8L917.0 647.9z"/><path class="e" d="M902.3 639.6L907.8 640.8M917.0 647.9L921.7 648.8"/><path class="q" fill="#6c6a64" stroke="#6c6a64" d="M1113.5 515.4L1114.4 514.9L1098.3 523.7L1097.6 524.2z"/><path class="e" d="M1113.5 515.4L1114.4 514.9M1097.6 524.2L1098.3 523.7"/><path class="q" fill="#6b6b67" stroke="#6b6b67" d="M902.3 663.9L907.8 665.0L907.8 668.5L902.3 667.3z"/><path class="e" d="M902.3 663.9L907.8 665.0M902.3 667.3L907.8 668.5"/><path class="q" fill="#686761" stroke="#686761" d="M1109.6 545.2L1113.5 543.1L1097.6 551.9L1094.2 553.7z"/><path class="e" d="M1109.6 545.2L1113.5 543.1M1094.2 553.7L1097.6 551.9"/><path class="q" fill="#7e7c73" stroke="#7e7c73" d="M908.9 511.6L909.6 511.9L893.7 522.8L892.8 522.4z"/><path class="e" d="M908.9 511.6L909.6 511.9M892.8 522.4L893.7 522.8"/><path class="q" fill="#7a7a76" stroke="#7a7a76" d="M1085.5 612.7L1090.2 610.9L1090.2 615.6L1085.5 617.3z"/><path class="e" d="M1085.5 612.7L1090.2 610.9M1085.5 617.3L1090.2 615.6"/><path class="q" fill="#76736c" stroke="#76736c" d="M909.6 539.6L913.0 540.7L897.6 551.8L893.7 550.5z"/><path class="e" d="M909.6 539.6L913.0 540.7M893.7 550.5L897.6 551.8"/><path class="q" fill="#75736b" stroke="#75736b" d="M1090.2 587.9L1094.2 586.1L1109.6 597.2L1104.9 599.2z"/><path class="e" d="M1090.2 587.9L1094.2 586.1M1104.9 599.2L1109.6 597.2"/><path class="q" fill="#777773" stroke="#777773" d="M921.7 648.8L927.0 649.7L927.0 654.3L921.7 653.5z"/><path class="e" d="M921.7 648.8L927.0 649.7M921.7 653.5L927.0 654.3"/><path class="q" fill="#7c7c77" stroke="#7c7c77" d="M1094.2 526.0L1097.6 524.2L1097.6 528.8L1094.2 530.7z"/><path class="e" d="M1094.2 526.0L1097.6 524.2M1094.2 530.7L1097.6 528.8"/><path class="q" fill="#78756d" stroke="#78756d" d="M1080.2 674.3L1085.5 672.7L1099.4 684.3L1092.9 685.9z"/><path class="e" d="M1080.2 674.3L1085.5 672.7M1092.9 685.9L1099.4 684.3"/><path class="q" fill="#7e7e79" stroke="#7e7e79" d="M1097.6 496.5L1098.3 496.0L1098.3 500.6L1097.6 501.1z"/><path class="e" d="M1097.6 496.5L1098.3 496.0M1097.6 501.1L1098.3 500.6"/><path class="q" fill="#5d5b56" stroke="#5d5b56" d="M1099.4 632.3L1104.9 630.4L1090.2 638.6L1085.5 640.4z"/><path class="e" d="M1099.4 632.3L1104.9 630.4M1085.5 640.4L1090.2 638.6"/><path class="q" fill="#777772" stroke="#777772" d="M913.0 563.7L917.0 564.8L917.0 569.4L913.0 568.4z"/><path class="e" d="M913.0 563.7L917.0 564.8M913.0 568.4L917.0 569.4"/><path class="q" fill="#686864" stroke="#686864" d="M897.6 607.2L902.3 608.5L902.3 611.9L897.6 610.6z"/><path class="e" d="M897.6 607.2L902.3 608.5M897.6 610.6L902.3 611.9"/><path class="q" fill="#61605b" stroke="#61605b" d="M897.6 582.9L902.3 584.2L917.0 592.5L913.0 591.4z"/><path class="e" d="M897.6 582.9L902.3 584.2M913.0 591.4L917.0 592.5"/><path class="q" fill="#70706c" stroke="#70706c" d="M1099.4 656.6L1104.9 654.6L1104.9 658.1L1099.4 660.0z"/><path class="e" d="M1099.4 656.6L1104.9 654.6M1099.4 660.0L1104.9 658.1"/><path class="q" fill="#6c6c69" stroke="#6c6c69" d="M892.8 522.4L893.7 522.8L893.7 526.2L892.8 525.9z"/><path class="e" d="M892.8 522.4L893.7 522.8M892.8 525.9L893.7 526.2"/><path class="q" fill="#77746d" stroke="#77746d" d="M917.0 624.8L921.7 625.8L907.8 637.3L902.3 636.2z"/><path class="e" d="M917.0 624.8L921.7 625.8M902.3 636.2L907.8 637.3"/><path class="q" fill="#565550" stroke="#565550" d="M907.8 668.5L914.0 669.6L927.0 677.4L921.7 676.5z"/><path class="e" d="M907.8 668.5L914.0 669.6M921.7 676.5L927.0 677.4"/><path class="q" fill="#848279" stroke="#848279" d="M894.8 490.9L896.5 492.2L892.8 494.7L890.6 493.7z"/><path class="e" d="M894.8 490.9L896.5 492.2M890.6 493.7L892.8 494.7"/><path class="q" fill="#71716d" stroke="#71716d" d="M890.6 493.7L892.8 494.7L892.8 498.2L890.6 497.1z"/><path class="e" d="M890.6 493.7L892.8 494.7M890.6 497.1L892.8 498.2"/><path class="q" fill="#7a7a76" stroke="#7a7a76" d="M1080.2 642.0L1085.5 640.4L1085.5 645.0L1080.2 646.6z"/><path class="e" d="M1080.2 642.0L1085.5 640.4M1080.2 646.6L1085.5 645.0"/><path class="q" fill="#787874" stroke="#787874" d="M927.0 677.4L932.9 678.2L932.9 682.8L927.0 682.0z"/><path class="e" d="M927.0 677.4L932.9 678.2M927.0 682.0L932.9 682.8"/><path class="q" fill="#7a7870" stroke="#7a7870" d="M1097.6 501.1L1098.3 500.6L1114.4 511.4L1113.5 512.0z"/><path class="e" d="M1097.6 501.1L1098.3 500.6M1113.5 512.0L1114.4 511.4"/><path class="q" fill="#76736c" stroke="#76736c" d="M1094.2 530.7L1097.6 528.8L1113.5 539.7L1109.6 541.8z"/><path class="e" d="M1094.2 530.7L1097.6 528.8M1109.6 541.8L1113.5 539.7"/><path class="q" fill="#666663" stroke="#666663" d="M893.7 550.5L897.6 551.8L897.6 555.2L893.7 553.9z"/><path class="e" d="M893.7 550.5L897.6 551.8M893.7 553.9L897.6 555.2"/><path class="q" fill="#7c7a72" stroke="#7c7a72" d="M927.0 682.0L932.9 682.8L930.1 685.6L924.5 684.3z"/><path class="e" d="M927.0 682.0L932.9 682.8M924.5 684.3L930.1 685.6"/><path class="q" fill="#6b6a64" stroke="#6b6a64" d="M892.8 498.2L893.7 498.5L909.6 507.3L908.9 507.0z"/><path class="e" d="M892.8 498.2L893.7 498.5M908.9 507.0L909.6 507.3"/><path class="q" fill="#6c6a64" stroke="#6c6a64" d="M1105.2 492.3L1105.8 491.9L1098.3 496.0L1097.6 496.5z"/><path class="e" d="M1105.2 492.3L1105.8 491.9M1097.6 496.5L1098.3 496.0"/><path class="q" fill="#7a7a76" stroke="#7a7a76" d="M1090.2 555.5L1094.2 553.7L1094.2 558.4L1090.2 560.2z"/><path class="e" d="M1090.2 555.5L1094.2 553.7M1090.2 560.2L1094.2 558.4"/><path class="q" fill="#6e6e6a" stroke="#6e6e6a" d="M1104.9 599.2L1109.6 597.2L1109.6 600.6L1104.9 602.7z"/><path class="e" d="M1104.9 599.2L1109.6 597.2M1104.9 602.7L1109.6 600.6"/><path class="q" fill="#676660" stroke="#676660" d="M893.7 526.2L897.6 527.5L913.0 536.0L909.6 535.0z"/><path class="e" d="M893.7 526.2L897.6 527.5M909.6 535.0L913.0 536.0"/><path class="q" fill="#62615b" stroke="#62615b" d="M1104.9 575.0L1109.6 572.9L1094.2 581.4L1090.2 583.2z"/><path class="e" d="M1104.9 575.0L1109.6 572.9M1090.2 583.2L1094.2 581.4"/><path class="q" fill="#575651" stroke="#575651" d="M1093.2 661.9L1099.4 660.0L1085.5 668.1L1080.2 669.7z"/><path class="e" d="M1093.2 661.9L1099.4 660.0M1080.2 669.7L1085.5 668.1"/><path class="q" fill="#76746c" stroke="#76746c" d="M1085.5 617.3L1090.2 615.6L1104.9 626.9L1099.4 628.9z"/><path class="e" d="M1085.5 617.3L1090.2 615.6M1099.4 628.9L1104.9 626.9"/><path class="q" fill="#7c7c77" stroke="#7c7c77" d="M1074.3 671.3L1080.2 669.7L1080.2 674.3L1074.3 675.9z"/><path class="e" d="M1074.3 671.3L1080.2 669.7M1074.3 675.9L1080.2 674.3"/><path class="q" fill="#70706c" stroke="#70706c" d="M1113.5 512.0L1114.4 511.4L1114.4 514.9L1113.5 515.4z"/><path class="e" d="M1113.5 512.0L1114.4 511.4M1113.5 515.4L1114.4 514.9"/><path class="q" fill="#767672" stroke="#767672" d="M917.0 592.5L921.7 593.4L921.7 598.1L917.0 597.1z"/><path class="e" d="M917.0 592.5L921.7 593.4M917.0 597.1L921.7 598.1"/><path class="q" fill="#787874" stroke="#787874" d="M909.6 507.3L913.0 508.3L913.0 513.0L909.6 511.9z"/><path class="e" d="M909.6 507.3L913.0 508.3M909.6 511.9L913.0 513.0"/><path class="q" fill="#75736b" stroke="#75736b" d="M913.0 568.4L917.0 569.4L902.3 580.8L897.6 579.5z"/><path class="e" d="M913.0 568.4L917.0 569.4M897.6 579.5L902.3 580.8"/><path class="q" fill="#79776f" stroke="#79776f" d="M921.7 653.5L927.0 654.3L914.0 666.1L907.8 665.0z"/><path class="e" d="M921.7 653.5L927.0 654.3M907.8 665.0L914.0 666.1"/><path class="q" fill="#6d6d6a" stroke="#6d6d6a" d="M1109.6 541.8L1113.5 539.7L1113.5 543.1L1109.6 545.2z"/><path class="e" d="M1109.6 541.8L1113.5 539.7M1109.6 545.2L1113.5 543.1"/><path class="q" fill="#5c5a55" stroke="#5c5a55" d="M902.3 611.9L907.8 613.1L921.7 621.1L917.0 620.2z"/><path class="e" d="M902.3 611.9L907.8 613.1M917.0 620.2L921.7 621.1"/><path class="q" fill="#73736f" stroke="#73736f" d="M1097.0 685.0L1099.4 684.3L1099.4 684.4L1097.0 685.0z"/><path class="e" d="M1097.0 685.0L1099.4 684.3M1097.0 685.0L1099.4 684.4"/><path class="q" fill="#6b6b67" stroke="#6b6b67" d="M902.3 636.2L907.8 637.3L907.8 640.8L902.3 639.6z"/><path class="e" d="M902.3 636.2L907.8 637.3M902.3 639.6L907.8 640.8"/><path class="q" fill="#686761" stroke="#686761" d="M1109.6 517.5L1113.5 515.4L1097.6 524.2L1094.2 526.0z"/><path class="e" d="M1109.6 517.5L1113.5 515.4M1094.2 526.0L1097.6 524.2"/><path class="q" fill="#7a7a76" stroke="#7a7a76" d="M1085.5 585.0L1090.2 583.2L1090.2 587.9L1085.5 589.6z"/><path class="e" d="M1085.5 585.0L1090.2 583.2M1085.5 589.6L1090.2 587.9"/><path class="q" fill="#76736c" stroke="#76736c" d="M909.6 511.9L913.0 513.0L897.6 524.1L893.7 522.8z"/><path class="e" d="M909.6 511.9L913.0 513.0M893.7 522.8L897.6 524.1"/><path class="q" fill="#75736b" stroke="#75736b" d="M1090.2 560.2L1094.2 558.4L1109.6 569.5L1104.9 571.5z"/><path class="e" d="M1090.2 560.2L1094.2 558.4M1104.9 571.5L1109.6 569.5"/><path class="q" fill="#777773" stroke="#777773" d="M921.7 621.1L927.0 622.0L927.0 626.6L921.7 625.8z"/><path class="e" d="M921.7 621.1L927.0 622.0M921.7 625.8L927.0 626.6"/><path class="q" fill="#7c7c77" stroke="#7c7c77" d="M1094.2 498.3L1097.6 496.5L1097.6 501.1L1094.2 503.0z"/><path class="e" d="M1094.2 498.3L1097.6 496.5M1094.2 503.0L1097.6 501.1"/><path class="q" fill="#78756d" stroke="#78756d" d="M1080.2 646.6L1085.5 645.0L1099.4 656.6L1093.2 658.4z"/><path class="e" d="M1080.2 646.6L1085.5 645.0M1093.2 658.4L1099.4 656.6"/><path class="q" fill="#5d5b56" stroke="#5d5b56" d="M1099.4 604.6L1104.9 602.7L1090.2 610.9L1085.5 612.7z"/><path class="e" d="M1099.4 604.6L1104.9 602.7M1085.5 612.7L1090.2 610.9"/><path class="q" fill="#777772" stroke="#777772" d="M913.0 536.0L917.0 537.1L917.0 541.7L913.0 540.7z"/><path class="e" d="M913.0 536.0L917.0 537.1M913.0 540.7L917.0 541.7"/><path class="q" fill="#686864" stroke="#686864" d="M897.6 579.5L902.3 580.8L902.3 584.2L897.6 582.9z"/><path class="e" d="M897.6 579.5L902.3 580.8M897.6 582.9L902.3 584.2"/><path class="q" fill="#61605b" stroke="#61605b" d="M897.6 555.2L902.3 556.5L917.0 564.8L913.0 563.7z"/><path class="e" d="M897.6 555.2L902.3 556.5M913.0 563.7L917.0 564.8"/><path class="q" fill="#70706c" stroke="#70706c" d="M1099.4 628.9L1104.9 626.9L1104.9 630.4L1099.4 632.3z"/><path class="e" d="M1099.4 628.9L1104.9 626.9M1099.4 632.3L1104.9 630.4"/><path class="q" fill="#7e7c73" stroke="#7e7c73" d="M896.5 492.2L897.2 492.7L893.7 495.1L892.8 494.7z"/><path class="e" d="M896.5 492.2L897.2 492.7M892.8 494.7L893.7 495.1"/><path class="q" fill="#6c6c69" stroke="#6c6c69" d="M892.8 494.7L893.7 495.1L893.7 498.5L892.8 498.2z"/><path class="e" d="M892.8 494.7L893.7 495.1M892.8 498.2L893.7 498.5"/><path class="q" fill="#77746d" stroke="#77746d" d="M917.0 597.1L921.7 598.1L907.8 609.6L902.3 608.5z"/><path class="e" d="M917.0 597.1L921.7 598.1M902.3 608.5L907.8 609.6"/><path class="q" fill="#565550" stroke="#565550" d="M907.8 640.8L914.0 641.9L927.0 649.7L921.7 648.8z"/><path class="e" d="M907.8 640.8L914.0 641.9M921.7 648.8L927.0 649.7"/><path class="q" fill="#7a7a76" stroke="#7a7a76" d="M1080.2 614.3L1085.5 612.7L1085.5 617.3L1080.2 618.9z"/><path class="e" d="M1080.2 614.3L1085.5 612.7M1080.2 618.9L1085.5 617.3"/><path class="q" fill="#787874" stroke="#787874" d="M927.0 649.7L932.9 650.5L932.9 655.1L927.0 654.3z"/><path class="e" d="M927.0 649.7L932.9 650.5M927.0 654.3L932.9 655.1"/><path class="q" fill="#7b7870" stroke="#7b7870" d="M1074.3 675.9L1080.2 674.3L1092.9 685.9L1085.6 687.1z"/><path class="e" d="M1074.3 675.9L1080.2 674.3M1085.6 687.1L1092.9 685.9"/><path class="q" fill="#76736c" stroke="#76736c" d="M1094.2 503.0L1097.6 501.1L1113.5 512.0L1109.6 514.1z"/><path class="e" d="M1094.2 503.0L1097.6 501.1M1109.6 514.1L1113.5 512.0"/><path class="q" fill="#666663" stroke="#666663" d="M893.7 522.8L897.6 524.1L897.6 527.5L893.7 526.2z"/><path class="e" d="M893.7 522.8L897.6 524.1M893.7 526.2L897.6 527.5"/><path class="q" fill="#6e6e6a" stroke="#6e6e6a" d="M907.8 665.0L914.0 666.1L914.0 669.6L907.8 668.5z"/><path class="e" d="M907.8 665.0L914.0 666.1M907.8 668.5L914.0 669.6"/><path class="q" fill="#686761" stroke="#686761" d="M1102.2 494.0L1105.2 492.3L1097.6 496.5L1094.2 498.3z"/><path class="e" d="M1102.2 494.0L1105.2 492.3M1094.2 498.3L1097.6 496.5"/><path class="q" fill="#7c7c77" stroke="#7c7c77" d="M932.9 678.2L939.3 678.9L939.3 683.5L932.9 682.8z"/><path class="e" d="M932.9 678.2L939.3 678.9M932.9 682.8L939.3 683.5"/><path class="q" fill="#7a7a76" stroke="#7a7a76" d="M1090.2 527.8L1094.2 526.0L1094.2 530.7L1090.2 532.5z"/><path class="e" d="M1090.2 527.8L1094.2 526.0M1090.2 532.5L1094.2 530.7"/><path class="q" fill="#6e6e6a" stroke="#6e6e6a" d="M1104.9 571.5L1109.6 569.5L1109.6 572.9L1104.9 575.0z"/><path class="e" d="M1104.9 571.5L1109.6 569.5M1104.9 575.0L1109.6 572.9"/><path class="q" fill="#676660" stroke="#676660" d="M893.7 498.5L897.6 499.8L913.0 508.3L909.6 507.3z"/><path class="e" d="M893.7 498.5L897.6 499.8M909.6 507.3L913.0 508.3"/><path class="q" fill="#62615b" stroke="#62615b" d="M1104.9 547.3L1109.6 545.2L1094.2 553.7L1090.2 555.5z"/><path class="e" d="M1104.9 547.3L1109.6 545.2M1090.2 555.5L1094.2 553.7"/><path class="q" fill="#575651" stroke="#575651" d="M1093.2 634.2L1099.4 632.3L1085.5 640.4L1080.2 642.0z"/><path class="e" d="M1093.2 634.2L1099.4 632.3M1080.2 642.0L1085.5 640.4"/><path class="q" fill="#76746c" stroke="#76746c" d="M1085.5 589.6L1090.2 587.9L1104.9 599.2L1099.4 601.2z"/><path class="e" d="M1085.5 589.6L1090.2 587.9M1099.4 601.2L1104.9 599.2"/><path class="q" fill="#7c7c77" stroke="#7c7c77" d="M1074.3 643.6L1080.2 642.0L1080.2 646.6L1074.3 648.2z"/><path class="e" d="M1074.3 643.6L1080.2 642.0M1074.3 648.2L1080.2 646.6"/><path class="q" fill="#767672" stroke="#767672" d="M917.0 564.8L921.7 565.7L921.7 570.4L917.0 569.4z"/><path class="e" d="M917.0 564.8L921.7 565.7M917.0 569.4L921.7 570.4"/><path class="q" fill="#75736b" stroke="#75736b" d="M913.0 540.7L917.0 541.7L902.3 553.1L897.6 551.8z"/><path class="e" d="M913.0 540.7L917.0 541.7M897.6 551.8L902.3 553.1"/><path class="q" fill="#51504b" stroke="#51504b" d="M914.0 669.6L920.9 670.6L932.9 678.2L927.0 677.4z"/><path class="e" d="M914.0 669.6L920.9 670.6M927.0 677.4L932.9 678.2"/><path class="q" fill="#807e75" stroke="#807e75" d="M932.9 682.8L939.3 683.5L936.4 686.8L930.1 685.6z"/><path class="e" d="M932.9 682.8L939.3 683.5M930.1 685.6L936.4 686.8"/><path class="q" fill="#80807b" stroke="#80807b" d="M1067.9 672.7L1074.3 671.3L1074.3 675.9L1067.9 677.3z"/><path class="e" d="M1067.9 672.7L1074.3 671.3M1067.9 677.3L1074.3 675.9"/><path class="q" fill="#79776f" stroke="#79776f" d="M921.7 625.8L927.0 626.6L914.0 638.4L907.8 637.3z"/><path class="e" d="M921.7 625.8L927.0 626.6M907.8 637.3L914.0 638.4"/><path class="q" fill="#6d6d6a" stroke="#6d6d6a" d="M1109.6 514.1L1113.5 512.0L1113.5 515.4L1109.6 517.5z"/><path class="e" d="M1109.6 514.1L1113.5 512.0M1109.6 517.5L1113.5 515.4"/><path class="q" fill="#5c5a55" stroke="#5c5a55" d="M902.3 584.2L907.8 585.4L921.7 593.4L917.0 592.5z"/><path class="e" d="M902.3 584.2L907.8 585.4M917.0 592.5L921.7 593.4"/><path class="q" fill="#73736f" stroke="#73736f" d="M1093.2 658.4L1099.4 656.6L1099.4 660.0L1093.2 661.9z"/><path class="e" d="M1093.2 658.4L1099.4 656.6M1093.2 661.9L1099.4 660.0"/><path class="q" fill="#6b6b67" stroke="#6b6b67" d="M902.3 608.5L907.8 609.6L907.8 613.1L902.3 611.9z"/><path class="e" d="M902.3 608.5L907.8 609.6M902.3 611.9L907.8 613.1"/><path class="q" fill="#52514c" stroke="#52514c" d="M1086.3 663.7L1093.2 661.9L1080.2 669.7L1074.3 671.3z"/><path class="e" d="M1086.3 663.7L1093.2 661.9M1074.3 671.3L1080.2 669.7"/><path class="q" fill="#7a7a76" stroke="#7a7a76" d="M1085.5 557.3L1090.2 555.5L1090.2 560.2L1085.5 561.9z"/><path class="e" d="M1085.5 557.3L1090.2 555.5M1085.5 561.9L1090.2 560.2"/><path class="q" fill="#75736b" stroke="#75736b" d="M1090.2 532.5L1094.2 530.7L1109.6 541.8L1104.9 543.8z"/><path class="e" d="M1090.2 532.5L1094.2 530.7M1104.9 543.8L1109.6 541.8"/><path class="q" fill="#777773" stroke="#777773" d="M921.7 593.4L927.0 594.3L927.0 598.9L921.7 598.1z"/><path class="e" d="M921.7 593.4L927.0 594.3M921.7 598.1L927.0 598.9"/><path class="q" fill="#78756d" stroke="#78756d" d="M1080.2 618.9L1085.5 617.3L1099.4 628.9L1093.2 630.7z"/><path class="e" d="M1080.2 618.9L1085.5 617.3M1093.2 630.7L1099.4 628.9"/><path class="q" fill="#5d5b56" stroke="#5d5b56" d="M1099.4 576.9L1104.9 575.0L1090.2 583.2L1085.5 585.0z"/><path class="e" d="M1099.4 576.9L1104.9 575.0M1085.5 585.0L1090.2 583.2"/><path class="q" fill="#7c7a72" stroke="#7c7a72" d="M927.0 654.3L932.9 655.1L920.9 667.1L914.0 666.1z"/><path class="e" d="M927.0 654.3L932.9 655.1M914.0 666.1L920.9 667.1"/><path class="q" fill="#777772" stroke="#777772" d="M913.0 508.3L917.0 509.4L917.0 514.0L913.0 513.0z"/><path class="e" d="M913.0 508.3L917.0 509.4M913.0 513.0L917.0 514.0"/><path class="q" fill="#686864" stroke="#686864" d="M897.6 551.8L902.3 553.1L902.3 556.5L897.6 555.2z"/><path class="e" d="M897.6 551.8L902.3 553.1M897.6 555.2L902.3 556.5"/><path class="q" fill="#61605b" stroke="#61605b" d="M897.6 527.5L902.3 528.8L917.0 537.1L913.0 536.0z"/><path class="e" d="M897.6 527.5L902.3 528.8M913.0 536.0L917.0 537.1"/><path class="q" fill="#70706c" stroke="#70706c" d="M1099.4 601.2L1104.9 599.2L1104.9 602.7L1099.4 604.6z"/><path class="e" d="M1099.4 601.2L1104.9 599.2M1099.4 604.6L1104.9 602.7"/><path class="q" fill="#77746d" stroke="#77746d" d="M917.0 569.4L921.7 570.4L907.8 581.9L902.3 580.8z"/><path class="e" d="M917.0 569.4L921.7 570.4M902.3 580.8L907.8 581.9"/><path class="q" fill="#565550" stroke="#565550" d="M907.8 613.1L914.0 614.2L927.0 622.0L921.7 621.1z"/><path class="e" d="M907.8 613.1L914.0 614.2M921.7 621.1L927.0 622.0"/><path class="q" fill="#7a7a76" stroke="#7a7a76" d="M1080.2 586.6L1085.5 585.0L1085.5 589.6L1080.2 591.2z"/><path class="e" d="M1080.2 586.6L1085.5 585.0M1080.2 591.2L1085.5 589.6"/><path class="q" fill="#787874" stroke="#787874" d="M927.0 622.0L932.9 622.8L932.9 627.4L927.0 626.6z"/><path class="e" d="M927.0 622.0L932.9 622.8M927.0 626.6L932.9 627.4"/><path class="q" fill="#76736c" stroke="#76736c" d="M897.2 492.7L900.4 494.4L897.6 496.4L893.7 495.1z"/><path class="e" d="M897.2 492.7L900.4 494.4M893.7 495.1L897.6 496.4"/><path class="q" fill="#666663" stroke="#666663" d="M893.7 495.1L897.6 496.4L897.6 499.8L893.7 498.5z"/><path class="e" d="M893.7 495.1L897.6 496.4M893.7 498.5L897.6 499.8"/><path class="q" fill="#7b7870" stroke="#7b7870" d="M1074.3 648.2L1080.2 646.6L1093.2 658.4L1086.3 660.2z"/><path class="e" d="M1074.3 648.2L1080.2 646.6M1086.3 660.2L1093.2 658.4"/><path class="q" fill="#6e6e6a" stroke="#6e6e6a" d="M907.8 637.3L914.0 638.4L914.0 641.9L907.8 640.8z"/><path class="e" d="M907.8 637.3L914.0 638.4M907.8 640.8L914.0 641.9"/><path class="q" fill="#7c7c77" stroke="#7c7c77" d="M932.9 650.5L939.3 651.2L939.3 655.8L932.9 655.1z"/><path class="e" d="M932.9 650.5L939.3 651.2M932.9 655.1L939.3 655.8"/><path class="q" fill="#7a7a76" stroke="#7a7a76" d="M1090.2 500.1L1094.2 498.3L1094.2 503.0L1090.2 504.8z"/><path class="e" d="M1090.2 500.1L1094.2 498.3M1090.2 504.8L1094.2 503.0"/><path class="q" fill="#6e6e6a" stroke="#6e6e6a" d="M1104.9 543.8L1109.6 541.8L1109.6 545.2L1104.9 547.3z"/><path class="e" d="M1104.9 543.8L1109.6 541.8M1104.9 547.3L1109.6 545.2"/><path class="q" fill="#62615b" stroke="#62615b" d="M1104.9 519.6L1109.6 517.5L1094.2 526.0L1090.2 527.8z"/><path class="e" d="M1104.9 519.6L1109.6 517.5M1090.2 527.8L1094.2 526.0"/><path class="q" fill="#575651" stroke="#575651" d="M1093.2 606.5L1099.4 604.6L1085.5 612.7L1080.2 614.3z"/><path class="e" d="M1093.2 606.5L1099.4 604.6M1080.2 614.3L1085.5 612.7"/><path class="q" fill="#76746c" stroke="#76746c" d="M1085.5 561.9L1090.2 560.2L1104.9 571.5L1099.4 573.5z"/><path class="e" d="M1085.5 561.9L1090.2 560.2M1099.4 573.5L1104.9 571.5"/><path class="q" fill="#7c7c77" stroke="#7c7c77" d="M1074.3 615.9L1080.2 614.3L1080.2 618.9L1074.3 620.5z"/><path class="e" d="M1074.3 615.9L1080.2 614.3M1074.3 620.5L1080.2 618.9"/><path class="q" fill="#80807b" stroke="#80807b" d="M939.3 678.9L946.2 679.5L946.2 684.1L939.3 683.5z"/><path class="e" d="M939.3 678.9L946.2 679.5M939.3 683.5L946.2 684.1"/><path class="q" fill="#807d75" stroke="#807d75" d="M1067.9 677.3L1074.3 675.9L1085.6 687.1L1077.7 688.3z"/><path class="e" d="M1067.9 677.3L1074.3 675.9M1077.7 688.3L1085.6 687.1"/><path class="q" fill="#767672" stroke="#767672" d="M917.0 537.1L921.7 538.0L921.7 542.7L917.0 541.7z"/><path class="e" d="M917.0 537.1L921.7 538.0M917.0 541.7L921.7 542.7"/><path class="q" fill="#75736b" stroke="#75736b" d="M913.0 513.0L917.0 514.0L902.3 525.4L897.6 524.1z"/><path class="e" d="M913.0 513.0L917.0 514.0M897.6 524.1L902.3 525.4"/><path class="q" fill="#51504b" stroke="#51504b" d="M914.0 641.9L920.9 642.9L932.9 650.5L927.0 649.7z"/><path class="e" d="M914.0 641.9L920.9 642.9M927.0 649.7L932.9 650.5"/><path class="q" fill="#80807b" stroke="#80807b" d="M1067.9 645.0L1074.3 643.6L1074.3 648.2L1067.9 649.6z"/><path class="e" d="M1067.9 645.0L1074.3 643.6M1067.9 649.6L1074.3 648.2"/><path class="q" fill="#79776f" stroke="#79776f" d="M921.7 598.1L927.0 598.9L914.0 610.7L907.8 609.6z"/><path class="e" d="M921.7 598.1L927.0 598.9M907.8 609.6L914.0 610.7"/><path class="q" fill="#5c5a55" stroke="#5c5a55" d="M902.3 556.5L907.8 557.7L921.7 565.7L917.0 564.8z"/><path class="e" d="M902.3 556.5L907.8 557.7M917.0 564.8L921.7 565.7"/><path class="q" fill="#73736f" stroke="#73736f" d="M1093.2 630.7L1099.4 628.9L1099.4 632.3L1093.2 634.2z"/><path class="e" d="M1093.2 630.7L1099.4 628.9M1093.2 634.2L1099.4 632.3"/><path class="q" fill="#858580" stroke="#858580" d="M1061.0 674.1L1067.9 672.7L1067.9 677.3L1061.0 678.7z"/><path class="e" d="M1061.0 674.1L1067.9 672.7M1061.0 678.7L1067.9 677.3"/><path class="q" fill="#85827a" stroke="#85827a" d="M939.3 683.5L946.2 684.1L943.2 687.9L936.4 686.8z"/><path class="e" d="M939.3 683.5L946.2 684.1M936.4 686.8L943.2 687.9"/><path class="q" fill="#6b6b67" stroke="#6b6b67" d="M902.3 580.8L907.8 581.9L907.8 585.4L902.3 584.2z"/><path class="e" d="M902.3 580.8L907.8 581.9M902.3 584.2L907.8 585.4"/><path class="q" fill="#52514c" stroke="#52514c" d="M1086.3 636.0L1093.2 634.2L1080.2 642.0L1074.3 643.6z"/><path class="e" d="M1086.3 636.0L1093.2 634.2M1074.3 643.6L1080.2 642.0"/><path class="q" fill="#7a7a76" stroke="#7a7a76" d="M1085.5 529.6L1090.2 527.8L1090.2 532.5L1085.5 534.2z"/><path class="e" d="M1085.5 529.6L1090.2 527.8M1085.5 534.2L1090.2 532.5"/><path class="q" fill="#4d4c48" stroke="#4d4c48" d="M920.9 670.6L928.4 671.4L939.3 678.9L932.9 678.2z"/><path class="e" d="M920.9 670.6L928.4 671.4M932.9 678.2L939.3 678.9"/><path class="q" fill="#72726e" stroke="#72726e" d="M914.0 666.1L920.9 667.1L920.9 670.6L914.0 669.6z"/><path class="e" d="M914.0 666.1L920.9 667.1M914.0 669.6L920.9 670.6"/><path class="q" fill="#75736b" stroke="#75736b" d="M1090.2 504.8L1094.2 503.0L1109.6 514.1L1104.9 516.1z"/><path class="e" d="M1090.2 504.8L1094.2 503.0M1104.9 516.1L1109.6 514.1"/><path class="q" fill="#777773" stroke="#777773" d="M921.7 565.7L927.0 566.6L927.0 571.2L921.7 570.4z"/><path class="e" d="M921.7 565.7L927.0 566.6M921.7 570.4L927.0 571.2"/><path class="q" fill="#78756d" stroke="#78756d" d="M1080.2 591.2L1085.5 589.6L1099.4 601.2L1093.2 603.0z"/><path class="e" d="M1080.2 591.2L1085.5 589.6M1093.2 603.0L1099.4 601.2"/><path class="q" fill="#5d5b56" stroke="#5d5b56" d="M1099.4 549.2L1104.9 547.3L1090.2 555.5L1085.5 557.3z"/><path class="e" d="M1099.4 549.2L1104.9 547.3M1085.5 557.3L1090.2 555.5"/><path class="q" fill="#62615b" stroke="#62615b" d="M1098.3 495.6L1102.2 494.0L1094.2 498.3L1090.2 500.1z"/><path class="e" d="M1098.3 495.6L1102.2 494.0M1090.2 500.1L1094.2 498.3"/><path class="q" fill="#7c7a72" stroke="#7c7a72" d="M927.0 626.6L932.9 627.4L920.9 639.4L914.0 638.4z"/><path class="e" d="M927.0 626.6L932.9 627.4M914.0 638.4L920.9 639.4"/><path class="q" fill="#686864" stroke="#686864" d="M897.6 524.1L902.3 525.4L902.3 528.8L897.6 527.5z"/><path class="e" d="M897.6 524.1L902.3 525.4M897.6 527.5L902.3 528.8"/><path class="q" fill="#61605b" stroke="#61605b" d="M897.6 499.8L902.3 501.1L917.0 509.4L913.0 508.3z"/><path class="e" d="M897.6 499.8L902.3 501.1M913.0 508.3L917.0 509.4"/><path class="q" fill="#4f4d49" stroke="#4f4d49" d="M1078.8 665.3L1086.3 663.7L1074.3 671.3L1067.9 672.7z"/><path class="e" d="M1078.8 665.3L1086.3 663.7M1067.9 672.7L1074.3 671.3"/><path class="q" fill="#70706c" stroke="#70706c" d="M1099.4 573.5L1104.9 571.5L1104.9 575.0L1099.4 576.9z"/><path class="e" d="M1099.4 573.5L1104.9 571.5M1099.4 576.9L1104.9 575.0"/><path class="q" fill="#77746d" stroke="#77746d" d="M917.0 541.7L921.7 542.7L907.8 554.2L902.3 553.1z"/><path class="e" d="M917.0 541.7L921.7 542.7M902.3 553.1L907.8 554.2"/><path class="q" fill="#565550" stroke="#565550" d="M907.8 585.4L914.0 586.5L927.0 594.3L921.7 593.4z"/><path class="e" d="M907.8 585.4L914.0 586.5M921.7 593.4L927.0 594.3"/><path class="q" fill="#767672" stroke="#767672" d="M1086.3 660.2L1093.2 658.4L1093.2 661.9L1086.3 663.7z"/><path class="e" d="M1086.3 660.2L1093.2 658.4M1086.3 663.7L1093.2 661.9"/><path class="q" fill="#7a7a76" stroke="#7a7a76" d="M1080.2 558.9L1085.5 557.3L1085.5 561.9L1080.2 563.5z"/><path class="e" d="M1080.2 558.9L1085.5 557.3M1080.2 563.5L1085.5 561.9"/><path class="q" fill="#787874" stroke="#787874" d="M927.0 594.3L932.9 595.1L932.9 599.7L927.0 598.9z"/><path class="e" d="M927.0 594.3L932.9 595.1M927.0 598.9L932.9 599.7"/><path class="q" fill="#7b7870" stroke="#7b7870" d="M1074.3 620.5L1080.2 618.9L1093.2 630.7L1086.3 632.5z"/><path class="e" d="M1074.3 620.5L1080.2 618.9M1086.3 632.5L1093.2 630.7"/><path class="q" fill="#807e75" stroke="#807e75" d="M932.9 655.1L939.3 655.8L928.4 668.0L920.9 667.1z"/><path class="e" d="M932.9 655.1L939.3 655.8M920.9 667.1L928.4 668.0"/><path class="q" fill="#6e6e6a" stroke="#6e6e6a" d="M907.8 609.6L914.0 610.7L914.0 614.2L907.8 613.1z"/><path class="e" d="M907.8 609.6L914.0 610.7M907.8 613.1L914.0 614.2"/><path class="q" fill="#7c7c77" stroke="#7c7c77" d="M932.9 622.8L939.3 623.5L939.3 628.1L932.9 627.4z"/><path class="e" d="M932.9 622.8L939.3 623.5M932.9 627.4L939.3 628.1"/><path class="q" fill="#6e6e6a" stroke="#6e6e6a" d="M1104.9 516.1L1109.6 514.1L1109.6 517.5L1104.9 519.6z"/><path class="e" d="M1104.9 516.1L1109.6 514.1M1104.9 519.6L1109.6 517.5"/><path class="q" fill="#575651" stroke="#575651" d="M1093.2 578.8L1099.4 576.9L1085.5 585.0L1080.2 586.6z"/><path class="e" d="M1093.2 578.8L1099.4 576.9M1080.2 586.6L1085.5 585.0"/><path class="q" fill="#858581" stroke="#858581" d="M946.2 679.5L953.6 679.9L953.6 684.6L946.2 684.1z"/><path class="e" d="M946.2 679.5L953.6 679.9M946.2 684.1L953.6 684.6"/><path class="q" fill="#76746c" stroke="#76746c" d="M1085.5 534.2L1090.2 532.5L1104.9 543.8L1099.4 545.8z"/><path class="e" d="M1085.5 534.2L1090.2 532.5M1099.4 545.8L1104.9 543.8"/><path class="q" fill="#7c7c77" stroke="#7c7c77" d="M1074.3 588.2L1080.2 586.6L1080.2 591.2L1074.3 592.8z"/><path class="e" d="M1074.3 588.2L1080.2 586.6M1074.3 592.8L1080.2 591.2"/><path class="q" fill="#80807b" stroke="#80807b" d="M939.3 651.2L946.2 651.8L946.2 656.4L939.3 655.8z"/><path class="e" d="M939.3 651.2L946.2 651.8M939.3 655.8L946.2 656.4"/><path class="q" fill="#767672" stroke="#767672" d="M917.0 509.4L921.7 510.3L921.7 515.0L917.0 514.0z"/><path class="e" d="M917.0 509.4L921.7 510.3M917.0 514.0L921.7 515.0"/><path class="q" fill="#51504b" stroke="#51504b" d="M914.0 614.2L920.9 615.2L932.9 622.8L927.0 622.0z"/><path class="e" d="M914.0 614.2L920.9 615.2M927.0 622.0L932.9 622.8"/><path class="q" fill="#807d75" stroke="#807d75" d="M1067.9 649.6L1074.3 648.2L1086.3 660.2L1078.8 661.8z"/><path class="e" d="M1067.9 649.6L1074.3 648.2M1078.8 661.8L1086.3 660.2"/><path class="q" fill="#85837a" stroke="#85837a" d="M1061.0 678.7L1067.9 677.3L1077.7 688.3L1069.3 689.3z"/><path class="e" d="M1061.0 678.7L1067.9 677.3M1069.3 689.3L1077.7 688.3"/><path class="q" fill="#80807b" stroke="#80807b" d="M1067.9 617.3L1074.3 615.9L1074.3 620.5L1067.9 621.9z"/><path class="e" d="M1067.9 617.3L1074.3 615.9M1067.9 621.9L1074.3 620.5"/><path class="q" fill="#8a8a85" stroke="#8a8a85" d="M1053.6 675.3L1061.0 674.1L1061.0 678.7L1053.6 679.9z"/><path class="e" d="M1053.6 675.3L1061.0 674.1M1053.6 679.9L1061.0 678.7"/><path class="q" fill="#79776f" stroke="#79776f" d="M921.7 570.4L927.0 571.2L914.0 583.0L907.8 581.9z"/><path class="e" d="M921.7 570.4L927.0 571.2M907.8 581.9L914.0 583.0"/><path class="q" fill="#5c5a55" stroke="#5c5a55" d="M902.3 528.8L907.8 530.0L921.7 538.0L917.0 537.1z"/><path class="e" d="M902.3 528.8L907.8 530.0M917.0 537.1L921.7 538.0"/><path class="q" fill="#73736f" stroke="#73736f" d="M1093.2 603.0L1099.4 601.2L1099.4 604.6L1093.2 606.5z"/><path class="e" d="M1093.2 603.0L1099.4 601.2M1093.2 606.5L1099.4 604.6"/><path class="q" fill="#858580" stroke="#858580" d="M1061.0 646.4L1067.9 645.0L1067.9 649.6L1061.0 651.0z"/><path class="e" d="M1061.0 646.4L1067.9 645.0M1061.0 651.0L1067.9 649.6"/><path class="q" fill="#8a877e" stroke="#8a877e" d="M946.2 684.1L953.6 684.6L950.6 688.9L943.2 687.9z"/><path class="e" d="M946.2 684.1L953.6 684.6M943.2 687.9L950.6 688.9"/><path class="q" fill="#6b6b67" stroke="#6b6b67" d="M902.3 553.1L907.8 554.2L907.8 557.7L902.3 556.5z"/><path class="e" d="M902.3 553.1L907.8 554.2M902.3 556.5L907.8 557.7"/><path class="q" fill="#52514c" stroke="#52514c" d="M1086.3 608.3L1093.2 606.5L1080.2 614.3L1074.3 615.9z"/><path class="e" d="M1086.3 608.3L1093.2 606.5M1074.3 615.9L1080.2 614.3"/><path class="q" fill="#7a7a76" stroke="#7a7a76" d="M1085.5 501.9L1090.2 500.1L1090.2 504.8L1085.5 506.5z"/><path class="e" d="M1085.5 501.9L1090.2 500.1M1085.5 506.5L1090.2 504.8"/><path class="q" fill="#4d4c48" stroke="#4d4c48" d="M920.9 642.9L928.4 643.7L939.3 651.2L932.9 650.5z"/><path class="e" d="M920.9 642.9L928.4 643.7M932.9 650.5L939.3 651.2"/><path class="q" fill="#72726e" stroke="#72726e" d="M914.0 638.4L920.9 639.4L920.9 642.9L914.0 641.9z"/><path class="e" d="M914.0 638.4L920.9 639.4M914.0 641.9L920.9 642.9"/><path class="q" fill="#777773" stroke="#777773" d="M921.7 538.0L927.0 538.9L927.0 543.5L921.7 542.7z"/><path class="e" d="M921.7 538.0L927.0 538.9M921.7 542.7L927.0 543.5"/><path class="q" fill="#78756d" stroke="#78756d" d="M1080.2 563.5L1085.5 561.9L1099.4 573.5L1093.2 575.3z"/><path class="e" d="M1080.2 563.5L1085.5 561.9M1093.2 575.3L1099.4 573.5"/><path class="q" fill="#5d5b56" stroke="#5d5b56" d="M1099.4 521.5L1104.9 519.6L1090.2 527.8L1085.5 529.6z"/><path class="e" d="M1099.4 521.5L1104.9 519.6M1085.5 529.6L1090.2 527.8"/><path class="q" fill="#4b4945" stroke="#4b4945" d="M928.4 671.4L936.5 672.2L946.2 679.5L939.3 678.9z"/><path class="e" d="M928.4 671.4L936.5 672.2M939.3 678.9L946.2 679.5"/><path class="q" fill="#75736b" stroke="#75736b" d="M900.4 494.4L904.4 496.0L902.3 497.7L897.6 496.4z"/><path class="e" d="M900.4 494.4L904.4 496.0M897.6 496.4L902.3 497.7"/><path class="q" fill="#7c7a72" stroke="#7c7a72" d="M927.0 598.9L932.9 599.7L920.9 611.7L914.0 610.7z"/><path class="e" d="M927.0 598.9L932.9 599.7M914.0 610.7L920.9 611.7"/><path class="q" fill="#686864" stroke="#686864" d="M897.6 496.4L902.3 497.7L902.3 501.1L897.6 499.8z"/><path class="e" d="M897.6 496.4L902.3 497.7M897.6 499.8L902.3 501.1"/><path class="q" fill="#4f4d49" stroke="#4f4d49" d="M1078.8 637.6L1086.3 636.0L1074.3 643.6L1067.9 645.0z"/><path class="e" d="M1078.8 637.6L1086.3 636.0M1067.9 645.0L1074.3 643.6"/><path class="q" fill="#70706c" stroke="#70706c" d="M1099.4 545.8L1104.9 543.8L1104.9 547.3L1099.4 549.2z"/><path class="e" d="M1099.4 545.8L1104.9 543.8M1099.4 549.2L1104.9 547.3"/><path class="q" fill="#77746d" stroke="#77746d" d="M917.0 514.0L921.7 515.0L907.8 526.5L902.3 525.4z"/><path class="e" d="M917.0 514.0L921.7 515.0M902.3 525.4L907.8 526.5"/><path class="q" fill="#565550" stroke="#565550" d="M907.8 557.7L914.0 558.8L927.0 566.6L921.7 565.7z"/><path class="e" d="M907.8 557.7L914.0 558.8M921.7 565.7L927.0 566.6"/><path class="q" fill="#767672" stroke="#767672" d="M1086.3 632.5L1093.2 630.7L1093.2 634.2L1086.3 636.0z"/><path class="e" d="M1086.3 632.5L1093.2 630.7M1086.3 636.0L1093.2 634.2"/><path class="q" fill="#7a7a76" stroke="#7a7a76" d="M1080.2 531.2L1085.5 529.6L1085.5 534.2L1080.2 535.8z"/><path class="e" d="M1080.2 531.2L1085.5 529.6M1080.2 535.8L1085.5 534.2"/><path class="q" fill="#787874" stroke="#787874" d="M927.0 566.6L932.9 567.4L932.9 572.0L927.0 571.2z"/><path class="e" d="M927.0 566.6L932.9 567.4M927.0 571.2L932.9 572.0"/><path class="q" fill="#4c4b47" stroke="#4c4b47" d="M1070.7 666.8L1078.8 665.3L1067.9 672.7L1061.0 674.1z"/><path class="e" d="M1070.7 666.8L1078.8 665.3M1061.0 674.1L1067.9 672.7"/><path class="q" fill="#777773" stroke="#777773" d="M920.9 667.1L928.4 668.0L928.4 671.4L920.9 670.6z"/><path class="e" d="M920.9 667.1L928.4 668.0M920.9 670.6L928.4 671.4"/><path class="q" fill="#7b7870" stroke="#7b7870" d="M1074.3 592.8L1080.2 591.2L1093.2 603.0L1086.3 604.8z"/><path class="e" d="M1074.3 592.8L1080.2 591.2M1086.3 604.8L1093.2 603.0"/><path class="q" fill="#8a8a85" stroke="#8a8a85" d="M953.6 679.9L961.3 680.3L961.3 684.9L953.6 684.6z"/><path class="e" d="M953.6 679.9L961.3 680.3M953.6 684.6L961.3 684.9"/><path class="q" fill="#807e75" stroke="#807e75" d="M932.9 627.4L939.3 628.1L928.4 640.3L920.9 639.4z"/><path class="e" d="M932.9 627.4L939.3 628.1M920.9 639.4L928.4 640.3"/><path class="q" fill="#6e6e6a" stroke="#6e6e6a" d="M907.8 581.9L914.0 583.0L914.0 586.5L907.8 585.4z"/><path class="e" d="M907.8 581.9L914.0 583.0M907.8 585.4L914.0 586.5"/><path class="q" fill="#7c7c77" stroke="#7c7c77" d="M932.9 595.1L939.3 595.8L939.3 600.4L932.9 599.7z"/><path class="e" d="M932.9 595.1L939.3 595.8M932.9 599.7L939.3 600.4"/><path class="q" fill="#575651" stroke="#575651" d="M1093.2 551.1L1099.4 549.2L1085.5 557.3L1080.2 558.9z"/><path class="e" d="M1093.2 551.1L1099.4 549.2M1080.2 558.9L1085.5 557.3"/><path class="q" fill="#858581" stroke="#858581" d="M946.2 651.8L953.6 652.2L953.6 656.9L946.2 656.4z"/><path class="e" d="M946.2 651.8L953.6 652.2M946.2 656.4L953.6 656.9"/><path class="q" fill="#8f8f8a" stroke="#8f8f8a" d="M1045.9 676.4L1053.6 675.3L1053.6 679.9L1045.9 681.1z"/><path class="e" d="M1045.9 676.4L1053.6 675.3M1045.9 681.1L1053.6 679.9"/><path class="q" fill="#76746c" stroke="#76746c" d="M1085.5 506.5L1090.2 504.8L1104.9 516.1L1099.4 518.1z"/><path class="e" d="M1085.5 506.5L1090.2 504.8M1099.4 518.1L1104.9 516.1"/><path class="q" fill="#7c7c77" stroke="#7c7c77" d="M1074.3 560.5L1080.2 558.9L1080.2 563.5L1074.3 565.1z"/><path class="e" d="M1074.3 560.5L1080.2 558.9M1074.3 565.1L1080.2 563.5"/><path class="q" fill="#80807b" stroke="#80807b" d="M939.3 623.5L946.2 624.1L946.2 628.7L939.3 628.1z"/><path class="e" d="M939.3 623.5L946.2 624.1M939.3 628.1L946.2 628.7"/><path class="q" fill="#85827a" stroke="#85827a" d="M939.3 655.8L946.2 656.4L936.5 668.7L928.4 668.0z"/><path class="e" d="M939.3 655.8L946.2 656.4M928.4 668.0L936.5 668.7"/><path class="q" fill="#5d5b56" stroke="#5d5b56" d="M1093.8 497.1L1098.3 495.6L1090.2 500.1L1085.5 501.9z"/><path class="e" d="M1093.8 497.1L1098.3 495.6M1085.5 501.9L1090.2 500.1"/><path class="q" fill="#7c7c78" stroke="#7c7c78" d="M1078.8 661.8L1086.3 660.2L1086.3 663.7L1078.8 665.3z"/><path class="e" d="M1078.8 661.8L1086.3 660.2M1078.8 665.3L1086.3 663.7"/><path class="q" fill="#8b887f" stroke="#8b887f" d="M1053.6 679.9L1061.0 678.7L1069.3 689.3L1060.6 690.2z"/><path class="e" d="M1053.6 679.9L1061.0 678.7M1060.6 690.2L1069.3 689.3"/><path class="q" fill="#51504b" stroke="#51504b" d="M914.0 586.5L920.9 587.5L932.9 595.1L927.0 594.3z"/><path class="e" d="M914.0 586.5L920.9 587.5M927.0 594.3L932.9 595.1"/><path class="q" fill="#807d75" stroke="#807d75" d="M1067.9 621.9L1074.3 620.5L1086.3 632.5L1078.8 634.1z"/><path class="e" d="M1067.9 621.9L1074.3 620.5M1078.8 634.1L1086.3 632.5"/><path class="q" fill="#80807b" stroke="#80807b" d="M1067.9 589.6L1074.3 588.2L1074.3 592.8L1067.9 594.2z"/><path class="e" d="M1067.9 589.6L1074.3 588.2M1067.9 594.2L1074.3 592.8"/><path class="q" fill="#8a8a85" stroke="#8a8a85" d="M1053.6 647.6L1061.0 646.4L1061.0 651.0L1053.6 652.2z"/><path class="e" d="M1053.6 647.6L1061.0 646.4M1053.6 652.2L1061.0 651.0"/><path class="q" fill="#79776f" stroke="#79776f" d="M921.7 542.7L927.0 543.5L914.0 555.3L907.8 554.2z"/><path class="e" d="M921.7 542.7L927.0 543.5M907.8 554.2L914.0 555.3"/><path class="q" fill="#5c5a55" stroke="#5c5a55" d="M902.3 501.1L907.8 502.3L921.7 510.3L917.0 509.4z"/><path class="e" d="M902.3 501.1L907.8 502.3M917.0 509.4L921.7 510.3"/><path class="q" fill="#73736f" stroke="#73736f" d="M1093.2 575.3L1099.4 573.5L1099.4 576.9L1093.2 578.8z"/><path class="e" d="M1093.2 575.3L1099.4 573.5M1093.2 578.8L1099.4 576.9"/><path class="q" fill="#8e8b82" stroke="#8e8b82" d="M953.6 684.6L961.3 684.9L958.5 689.8L950.6 688.9z"/><path class="e" d="M953.6 684.6L961.3 684.9M950.6 688.9L958.5 689.8"/><path class="q" fill="#858580" stroke="#858580" d="M1061.0 618.7L1067.9 617.3L1067.9 621.9L1061.0 623.3z"/><path class="e" d="M1061.0 618.7L1067.9 617.3M1061.0 623.3L1067.9 621.9"/><path class="q" fill="#85837a" stroke="#85837a" d="M1061.0 651.0L1067.9 649.6L1078.8 661.8L1070.7 663.3z"/><path class="e" d="M1061.0 651.0L1067.9 649.6M1070.7 663.3L1078.8 661.8"/><path class="q" fill="#6b6b67" stroke="#6b6b67" d="M902.3 525.4L907.8 526.5L907.8 530.0L902.3 528.8z"/><path class="e" d="M902.3 525.4L907.8 526.5M902.3 528.8L907.8 530.0"/><path class="q" fill="#52514c" stroke="#52514c" d="M1086.3 580.6L1093.2 578.8L1080.2 586.6L1074.3 588.2z"/><path class="e" d="M1086.3 580.6L1093.2 578.8M1074.3 588.2L1080.2 586.6"/><path class="q" fill="#4d4c48" stroke="#4d4c48" d="M920.9 615.2L928.4 616.0L939.3 623.5L932.9 622.8z"/><path class="e" d="M920.9 615.2L928.4 616.0M932.9 622.8L939.3 623.5"/><path class="q" fill="#72726e" stroke="#72726e" d="M914.0 610.7L920.9 611.7L920.9 615.2L914.0 614.2z"/><path class="e" d="M914.0 610.7L920.9 611.7M914.0 614.2L920.9 615.2"/><path class="q" fill="#777773" stroke="#777773" d="M921.7 510.3L927.0 511.2L927.0 515.8L921.7 515.0z"/><path class="e" d="M921.7 510.3L927.0 511.2M921.7 515.0L927.0 515.8"/><path class="q" fill="#78756d" stroke="#78756d" d="M1080.2 535.8L1085.5 534.2L1099.4 545.8L1093.2 547.6z"/><path class="e" d="M1080.2 535.8L1085.5 534.2M1093.2 547.6L1099.4 545.8"/><path class="q" fill="#8e8e89" stroke="#8e8e89" d="M961.3 680.3L969.4 680.5L969.4 685.1L961.3 684.9z"/><path class="e" d="M961.3 680.3L969.4 680.5M961.3 684.9L969.4 685.1"/><path class="q" fill="#4b4945" stroke="#4b4945" d="M928.4 643.7L936.5 644.5L946.2 651.8L939.3 651.2z"/><path class="e" d="M928.4 643.7L936.5 644.5M939.3 651.2L946.2 651.8"/><path class="q" fill="#7c7a72" stroke="#7c7a72" d="M927.0 571.2L932.9 572.0L920.9 584.0L914.0 583.0z"/><path class="e" d="M927.0 571.2L932.9 572.0M914.0 583.0L920.9 584.0"/><path class="q" fill="#494844" stroke="#494844" d="M936.5 672.2L945.1 672.8L953.6 679.9L946.2 679.5z"/><path class="e" d="M936.5 672.2L945.1 672.8M946.2 679.5L953.6 679.9"/><path class="q" fill="#4f4d49" stroke="#4f4d49" d="M1078.8 609.9L1086.3 608.3L1074.3 615.9L1067.9 617.3z"/><path class="e" d="M1078.8 609.9L1086.3 608.3M1067.9 617.3L1074.3 615.9"/><path class="q" fill="#70706c" stroke="#70706c" d="M1099.4 518.1L1104.9 516.1L1104.9 519.6L1099.4 521.5z"/><path class="e" d="M1099.4 518.1L1104.9 516.1M1099.4 521.5L1104.9 519.6"/><path class="q" fill="#94948f" stroke="#94948f" d="M1037.8 677.4L1045.9 676.4L1045.9 681.1L1037.8 682.1z"/><path class="e" d="M1037.8 677.4L1045.9 676.4M1037.8 682.1L1045.9 681.1"/><path class="q" fill="#565550" stroke="#565550" d="M907.8 530.0L914.0 531.1L927.0 538.9L921.7 538.0z"/><path class="e" d="M907.8 530.0L914.0 531.1M921.7 538.0L927.0 538.9"/><path class="q" fill="#767672" stroke="#767672" d="M1086.3 604.8L1093.2 603.0L1093.2 606.5L1086.3 608.3z"/><path class="e" d="M1086.3 604.8L1093.2 603.0M1086.3 608.3L1093.2 606.5"/><path class="q" fill="#7a7a76" stroke="#7a7a76" d="M1080.2 503.5L1085.5 501.9L1085.5 506.5L1080.2 508.1z"/><path class="e" d="M1080.2 503.5L1085.5 501.9M1080.2 508.1L1085.5 506.5"/><path class="q" fill="#787874" stroke="#787874" d="M927.0 538.9L932.9 539.7L932.9 544.3L927.0 543.5z"/><path class="e" d="M927.0 538.9L932.9 539.7M927.0 543.5L932.9 544.3"/><path class="q" fill="#4c4b47" stroke="#4c4b47" d="M1070.7 639.1L1078.8 637.6L1067.9 645.0L1061.0 646.4z"/><path class="e" d="M1070.7 639.1L1078.8 637.6M1061.0 646.4L1067.9 645.0"/><path class="q" fill="#4b4a46" stroke="#4b4a46" d="M1062.1 668.2L1070.7 666.8L1061.0 674.1L1053.6 675.3z"/><path class="e" d="M1062.1 668.2L1070.7 666.8M1053.6 675.3L1061.0 674.1"/><path class="q" fill="#777773" stroke="#777773" d="M920.9 639.4L928.4 640.3L928.4 643.7L920.9 642.9z"/><path class="e" d="M920.9 639.4L928.4 640.3M920.9 642.9L928.4 643.7"/><path class="q" fill="#7b7870" stroke="#7b7870" d="M1074.3 565.1L1080.2 563.5L1093.2 575.3L1086.3 577.1z"/><path class="e" d="M1074.3 565.1L1080.2 563.5M1086.3 577.1L1093.2 575.3"/><path class="q" fill="#8a8a85" stroke="#8a8a85" d="M953.6 652.2L961.3 652.6L961.3 657.2L953.6 656.9z"/><path class="e" d="M953.6 652.2L961.3 652.6M953.6 656.9L961.3 657.2"/><path class="q" fill="#807e75" stroke="#807e75" d="M932.9 599.7L939.3 600.4L928.4 612.6L920.9 611.7z"/><path class="e" d="M932.9 599.7L939.3 600.4M920.9 611.7L928.4 612.6"/><path class="q" fill="#908d83" stroke="#908d83" d="M1045.9 681.1L1053.6 679.9L1060.6 690.2L1051.5 690.9z"/><path class="e" d="M1045.9 681.1L1053.6 679.9M1051.5 690.9L1060.6 690.2"/><path class="q" fill="#6e6e6a" stroke="#6e6e6a" d="M907.8 554.2L914.0 555.3L914.0 558.8L907.8 557.7z"/><path class="e" d="M907.8 554.2L914.0 555.3M907.8 557.7L914.0 558.8"/><path class="q" fill="#7c7c77" stroke="#7c7c77" d="M932.9 567.4L939.3 568.1L939.3 572.7L932.9 572.0z"/><path class="e" d="M932.9 567.4L939.3 568.1M932.9 572.0L939.3 572.7"/><path class="q" fill="#575651" stroke="#575651" d="M1093.2 523.4L1099.4 521.5L1085.5 529.6L1080.2 531.2z"/><path class="e" d="M1093.2 523.4L1099.4 521.5M1080.2 531.2L1085.5 529.6"/><path class="q" fill="#858581" stroke="#858581" d="M946.2 624.1L953.6 624.5L953.6 629.2L946.2 628.7z"/><path class="e" d="M946.2 624.1L953.6 624.5M946.2 628.7L953.6 629.2"/><path class="q" fill="#8f8f8a" stroke="#8f8f8a" d="M1045.9 648.7L1053.6 647.6L1053.6 652.2L1045.9 653.4z"/><path class="e" d="M1045.9 648.7L1053.6 647.6M1045.9 653.4L1053.6 652.2"/><path class="q" fill="#7c7c77" stroke="#7c7c77" d="M1074.3 532.8L1080.2 531.2L1080.2 535.8L1074.3 537.4z"/><path class="e" d="M1074.3 532.8L1080.2 531.2M1074.3 537.4L1080.2 535.8"/><path class="q" fill="#928f85" stroke="#928f85" d="M961.3 684.9L969.4 685.1L966.9 690.6L958.5 689.8z"/><path class="e" d="M961.3 684.9L969.4 685.1M958.5 689.8L966.9 690.6"/><path class="q" fill="#80807b" stroke="#80807b" d="M939.3 595.8L946.2 596.4L946.2 601.0L939.3 600.4z"/><path class="e" d="M939.3 595.8L946.2 596.4M939.3 600.4L946.2 601.0"/><path class="q" fill="#85827a" stroke="#85827a" d="M939.3 628.1L946.2 628.7L936.5 641.0L928.4 640.3z"/><path class="e" d="M939.3 628.1L946.2 628.7M928.4 640.3L936.5 641.0"/><path class="q" fill="#7c7c78" stroke="#7c7c78" d="M1078.8 634.1L1086.3 632.5L1086.3 636.0L1078.8 637.6z"/><path class="e" d="M1078.8 634.1L1086.3 632.5M1078.8 637.6L1086.3 636.0"/><path class="q" fill="#51504b" stroke="#51504b" d="M914.0 558.8L920.9 559.8L932.9 567.4L927.0 566.6z"/><path class="e" d="M914.0 558.8L920.9 559.8M927.0 566.6L932.9 567.4"/><path class="q" fill="#7d7d78" stroke="#7d7d78" d="M928.4 668.0L936.5 668.7L936.5 672.2L928.4 671.4z"/><path class="e" d="M928.4 668.0L936.5 668.7M928.4 671.4L936.5 672.2"/><path class="q" fill="#8a877e" stroke="#8a877e" d="M946.2 656.4L953.6 656.9L945.1 669.4L936.5 668.7z"/><path class="e" d="M946.2 656.4L953.6 656.9M936.5 668.7L945.1 669.4"/><path class="q" fill="#807d75" stroke="#807d75" d="M1067.9 594.2L1074.3 592.8L1086.3 604.8L1078.8 606.4z"/><path class="e" d="M1067.9 594.2L1074.3 592.8M1078.8 606.4L1086.3 604.8"/><path class="q" fill="#92928d" stroke="#92928d" d="M969.4 680.5L977.7 680.6L977.7 685.2L969.4 685.1z"/><path class="e" d="M969.4 680.5L977.7 680.6M969.4 685.1L977.7 685.2"/><path class="q" fill="#80807b" stroke="#80807b" d="M1067.9 561.9L1074.3 560.5L1074.3 565.1L1067.9 566.5z"/><path class="e" d="M1067.9 561.9L1074.3 560.5M1067.9 566.5L1074.3 565.1"/><path class="q" fill="#8a8a85" stroke="#8a8a85" d="M1053.6 619.9L1061.0 618.7L1061.0 623.3L1053.6 624.5z"/><path class="e" d="M1053.6 619.9L1061.0 618.7M1053.6 624.5L1061.0 623.3"/><path class="q" fill="#79776f" stroke="#79776f" d="M921.7 515.0L927.0 515.8L914.0 527.6L907.8 526.5z"/><path class="e" d="M921.7 515.0L927.0 515.8M907.8 526.5L914.0 527.6"/><path class="q" fill="#73736f" stroke="#73736f" d="M1093.2 547.6L1099.4 545.8L1099.4 549.2L1093.2 551.1z"/><path class="e" d="M1093.2 547.6L1099.4 545.8M1093.2 551.1L1099.4 549.2"/><path class="q" fill="#858580" stroke="#858580" d="M1061.0 591.0L1067.9 589.6L1067.9 594.2L1061.0 595.6z"/><path class="e" d="M1061.0 591.0L1067.9 589.6M1061.0 595.6L1067.9 594.2"/><path class="q" fill="#9a9a94" stroke="#9a9a94" d="M1029.5 678.3L1037.8 677.4L1037.8 682.1L1029.5 682.9z"/><path class="e" d="M1029.5 678.3L1037.8 677.4M1029.5 682.9L1037.8 682.1"/><path class="q" fill="#85837a" stroke="#85837a" d="M1061.0 623.3L1067.9 621.9L1078.8 634.1L1070.7 635.6z"/><path class="e" d="M1061.0 623.3L1067.9 621.9M1070.7 635.6L1078.8 634.1"/><path class="q" fill="#8b887f" stroke="#8b887f" d="M1053.6 652.2L1061.0 651.0L1070.7 663.3L1062.1 664.7z"/><path class="e" d="M1053.6 652.2L1061.0 651.0M1062.1 664.7L1070.7 663.3"/><path class="q" fill="#77746d" stroke="#77746d" d="M904.4 496.0L909.2 497.6L907.8 498.8L902.3 497.7z"/><path class="e" d="M904.4 496.0L909.2 497.6M902.3 497.7L907.8 498.8"/><path class="q" fill="#6b6b67" stroke="#6b6b67" d="M902.3 497.7L907.8 498.8L907.8 502.3L902.3 501.1z"/><path class="e" d="M902.3 497.7L907.8 498.8M902.3 501.1L907.8 502.3"/><path class="q" fill="#82827d" stroke="#82827d" d="M1070.7 663.3L1078.8 661.8L1078.8 665.3L1070.7 666.8z"/><path class="e" d="M1070.7 663.3L1078.8 661.8M1070.7 666.8L1078.8 665.3"/><path class="q" fill="#52514c" stroke="#52514c" d="M1086.3 552.9L1093.2 551.1L1080.2 558.9L1074.3 560.5z"/><path class="e" d="M1086.3 552.9L1093.2 551.1M1074.3 560.5L1080.2 558.9"/><path class="q" fill="#4d4c48" stroke="#4d4c48" d="M920.9 587.5L928.4 588.3L939.3 595.8L932.9 595.1z"/><path class="e" d="M920.9 587.5L928.4 588.3M932.9 595.1L939.3 595.8"/><path class="q" fill="#72726e" stroke="#72726e" d="M914.0 583.0L920.9 584.0L920.9 587.5L914.0 586.5z"/><path class="e" d="M914.0 583.0L920.9 584.0M914.0 586.5L920.9 587.5"/><path class="q" fill="#78756d" stroke="#78756d" d="M1080.2 508.1L1085.5 506.5L1099.4 518.1L1093.2 519.9z"/><path class="e" d="M1080.2 508.1L1085.5 506.5M1093.2 519.9L1099.4 518.1"/><path class="q" fill="#575651" stroke="#575651" d="M1088.4 498.6L1093.8 497.1L1085.5 501.9L1080.2 503.5z"/><path class="e" d="M1088.4 498.6L1093.8 497.1M1080.2 503.5L1085.5 501.9"/><path class="q" fill="#494844" stroke="#494844" d="M945.1 672.8L954.2 673.3L961.3 680.3L953.6 679.9z"/><path class="e" d="M945.1 672.8L954.2 673.3M953.6 679.9L961.3 680.3"/><path class="q" fill="#8e8e89" stroke="#8e8e89" d="M961.3 652.6L969.4 652.8L969.4 657.4L961.3 657.2z"/><path class="e" d="M961.3 652.6L969.4 652.8M961.3 657.2L969.4 657.4"/><path class="q" fill="#4b4945" stroke="#4b4945" d="M928.4 616.0L936.5 616.8L946.2 624.1L939.3 623.5z"/><path class="e" d="M928.4 616.0L936.5 616.8M939.3 623.5L946.2 624.1"/><path class="q" fill="#7c7a72" stroke="#7c7a72" d="M927.0 543.5L932.9 544.3L920.9 556.3L914.0 555.3z"/><path class="e" d="M927.0 543.5L932.9 544.3M914.0 555.3L920.9 556.3"/><path class="q" fill="#979792" stroke="#979792" d="M977.7 680.6L986.2 680.6L986.2 685.2L977.7 685.2z"/><path class="e" d="M977.7 680.6L986.2 680.6M977.7 685.2L986.2 685.2"/><path class="q" fill="#959288" stroke="#959288" d="M1037.8 682.1L1045.9 681.1L1051.5 690.9L1042.1 691.5z"/><path class="e" d="M1037.8 682.1L1045.9 681.1M1042.1 691.5L1051.5 690.9"/><path class="q" fill="#494844" stroke="#494844" d="M936.5 644.5L945.1 645.1L953.6 652.2L946.2 651.8z"/><path class="e" d="M936.5 644.5L945.1 645.1M946.2 651.8L953.6 652.2"/><path class="q" fill="#4f4d49" stroke="#4f4d49" d="M1078.8 582.2L1086.3 580.6L1074.3 588.2L1067.9 589.6z"/><path class="e" d="M1078.8 582.2L1086.3 580.6M1067.9 589.6L1074.3 588.2"/><path class="q" fill="#9b9b96" stroke="#9b9b96" d="M1021.0 679.0L1029.5 678.3L1029.5 682.9L1021.0 683.6z"/><path class="e" d="M1021.0 679.0L1029.5 678.3M1021.0 683.6L1029.5 682.9"/><path class="q" fill="#959289" stroke="#959289" d="M969.4 685.1L977.7 685.2L975.7 691.2L966.9 690.6z"/><path class="e" d="M969.4 685.1L977.7 685.2M966.9 690.6L975.7 691.2"/><path class="q" fill="#94948f" stroke="#94948f" d="M1037.8 649.7L1045.9 648.7L1045.9 653.4L1037.8 654.4z"/><path class="e" d="M1037.8 649.7L1045.9 648.7M1037.8 654.4L1045.9 653.4"/><path class="q" fill="#565550" stroke="#565550" d="M907.8 502.3L914.0 503.4L927.0 511.2L921.7 510.3z"/><path class="e" d="M907.8 502.3L914.0 503.4M921.7 510.3L927.0 511.2"/><path class="q" fill="#4b4a45" stroke="#4b4a45" d="M1053.0 669.4L1062.1 668.2L1053.6 675.3L1045.9 676.4z"/><path class="e" d="M1053.0 669.4L1062.1 668.2M1045.9 676.4L1053.6 675.3"/><path class="q" fill="#767672" stroke="#767672" d="M1086.3 577.1L1093.2 575.3L1093.2 578.8L1086.3 580.6z"/><path class="e" d="M1086.3 577.1L1093.2 575.3M1086.3 580.6L1093.2 578.8"/><path class="q" fill="#787874" stroke="#787874" d="M927.0 511.2L932.9 512.0L932.9 516.6L927.0 515.8z"/><path class="e" d="M927.0 511.2L932.9 512.0M927.0 515.8L932.9 516.6"/><path class="q" fill="#4c4b47" stroke="#4c4b47" d="M1070.7 611.4L1078.8 609.9L1067.9 617.3L1061.0 618.7z"/><path class="e" d="M1070.7 611.4L1078.8 609.9M1061.0 618.7L1067.9 617.3"/><path class="q" fill="#4b4a46" stroke="#4b4a46" d="M1062.1 640.5L1070.7 639.1L1061.0 646.4L1053.6 647.6z"/><path class="e" d="M1062.1 640.5L1070.7 639.1M1053.6 647.6L1061.0 646.4"/><path class="q" fill="#777773" stroke="#777773" d="M920.9 611.7L928.4 612.6L928.4 616.0L920.9 615.2z"/><path class="e" d="M920.9 611.7L928.4 612.6M920.9 615.2L928.4 616.0"/><path class="q" fill="#7b7870" stroke="#7b7870" d="M1074.3 537.4L1080.2 535.8L1093.2 547.6L1086.3 549.4z"/><path class="e" d="M1074.3 537.4L1080.2 535.8M1086.3 549.4L1093.2 547.6"/><path class="q" fill="#8a8a85" stroke="#8a8a85" d="M953.6 624.5L961.3 624.9L961.3 629.5L953.6 629.2z"/><path class="e" d="M953.6 624.5L961.3 624.9M953.6 629.2L961.3 629.5"/><path class="q" fill="#807e75" stroke="#807e75" d="M932.9 572.0L939.3 572.7L928.4 584.9L920.9 584.0z"/><path class="e" d="M932.9 572.0L939.3 572.7M920.9 584.0L928.4 584.9"/><path class="q" fill="#999994" stroke="#999994" d="M986.2 680.6L994.9 680.4L994.9 685.0L986.2 685.2z"/><path class="e" d="M986.2 680.6L994.9 680.4M986.2 685.2L994.9 685.0"/><path class="q" fill="#6e6e6a" stroke="#6e6e6a" d="M907.8 526.5L914.0 527.6L914.0 531.1L907.8 530.0z"/><path class="e" d="M907.8 526.5L914.0 527.6M907.8 530.0L914.0 531.1"/><path class="q" fill="#7c7c77" stroke="#7c7c77" d="M932.9 539.7L939.3 540.4L939.3 545.0L932.9 544.3z"/><path class="e" d="M932.9 539.7L939.3 540.4M932.9 544.3L939.3 545.0"/><path class="q" fill="#9c9c97" stroke="#9c9c97" d="M1012.3 679.6L1021.0 679.0L1021.0 683.6L1012.3 684.2z"/><path class="e" d="M1012.3 679.6L1021.0 679.0M1012.3 684.2L1021.0 683.6"/><path class="q" fill="#858581" stroke="#858581" d="M946.2 596.4L953.6 596.8L953.6 601.5L946.2 601.0z"/><path class="e" d="M946.2 596.4L953.6 596.8M946.2 601.0L953.6 601.5"/><path class="q" fill="#8f8f8a" stroke="#8f8f8a" d="M1045.9 621.0L1053.6 619.9L1053.6 624.5L1045.9 625.7z"/><path class="e" d="M1045.9 621.0L1053.6 619.9M1045.9 625.7L1053.6 624.5"/><path class="q" fill="#7c7c77" stroke="#7c7c77" d="M1074.3 505.1L1080.2 503.5L1080.2 508.1L1074.3 509.7z"/><path class="e" d="M1074.3 505.1L1080.2 503.5M1074.3 509.7L1080.2 508.1"/><path class="q" fill="#80807b" stroke="#80807b" d="M939.3 568.1L946.2 568.7L946.2 573.3L939.3 572.7z"/><path class="e" d="M939.3 568.1L946.2 568.7M939.3 572.7L946.2 573.3"/><path class="q" fill="#8e8b82" stroke="#8e8b82" d="M953.6 656.9L961.3 657.2L954.2 669.8L945.1 669.4z"/><path class="e" d="M953.6 656.9L961.3 657.2M945.1 669.4L954.2 669.8"/><path class="q" fill="#85827a" stroke="#85827a" d="M939.3 600.4L946.2 601.0L936.5 613.3L928.4 612.6z"/><path class="e" d="M939.3 600.4L946.2 601.0M928.4 612.6L936.5 613.3"/><path class="q" fill="#9c9c96" stroke="#9c9c96" d="M994.9 680.4L1003.6 680.1L1003.6 684.7L994.9 685.0z"/><path class="e" d="M994.9 680.4L1003.6 680.1M994.9 685.0L1003.6 684.7"/><path class="q" fill="#7c7c78" stroke="#7c7c78" d="M1078.8 606.4L1086.3 604.8L1086.3 608.3L1078.8 609.9z"/><path class="e" d="M1078.8 606.4L1086.3 604.8M1078.8 609.9L1086.3 608.3"/><path class="q" fill="#9e9e98" stroke="#9e9e98" d="M1003.6 680.1L1012.3 679.6L1012.3 684.2L1003.6 684.7z"/><path class="e" d="M1003.6 680.1L1012.3 679.6M1003.6 684.7L1012.3 684.2"/><path class="q" fill="#51504b" stroke="#51504b" d="M914.0 531.1L920.9 532.1L932.9 539.7L927.0 538.9z"/><path class="e" d="M914.0 531.1L920.9 532.1M927.0 538.9L932.9 539.7"/><path class="q" fill="#7d7d78" stroke="#7d7d78" d="M928.4 640.3L936.5 641.0L936.5 644.5L928.4 643.7z"/><path class="e" d="M928.4 640.3L936.5 641.0M928.4 643.7L936.5 644.5"/><path class="q" fill="#8a877e" stroke="#8a877e" d="M946.2 628.7L953.6 629.2L945.1 641.7L936.5 641.0z"/><path class="e" d="M946.2 628.7L953.6 629.2M936.5 641.0L945.1 641.7"/><path class="q" fill="#807d75" stroke="#807d75" d="M1067.9 566.5L1074.3 565.1L1086.3 577.1L1078.8 578.7z"/><path class="e" d="M1067.9 566.5L1074.3 565.1M1078.8 578.7L1086.3 577.1"/><path class="q" fill="#92928d" stroke="#92928d" d="M969.4 652.8L977.7 652.9L977.7 657.5L969.4 657.4z"/><path class="e" d="M969.4 652.8L977.7 652.9M969.4 657.4L977.7 657.5"/><path class="q" fill="#9a978d" stroke="#9a978d" d="M1029.5 682.9L1037.8 682.1L1042.1 691.5L1032.6 691.9z"/><path class="e" d="M1029.5 682.9L1037.8 682.1M1032.6 691.9L1042.1 691.5"/><path class="q" fill="#80807b" stroke="#80807b" d="M1067.9 534.2L1074.3 532.8L1074.3 537.4L1067.9 538.8z"/><path class="e" d="M1067.9 534.2L1074.3 532.8M1067.9 538.8L1074.3 537.4"/><path class="q" fill="#8a8a85" stroke="#8a8a85" d="M1053.6 592.2L1061.0 591.0L1061.0 595.6L1053.6 596.8z"/><path class="e" d="M1053.6 592.2L1061.0 591.0M1053.6 596.8L1061.0 595.6"/><path class="q" fill="#908d83" stroke="#908d83" d="M1045.9 653.4L1053.6 652.2L1062.1 664.7L1053.0 666.0z"/><path class="e" d="M1045.9 653.4L1053.6 652.2M1053.0 666.0L1062.1 664.7"/><path class="q" fill="#99968c" stroke="#99968c" d="M977.7 685.2L986.2 685.2L984.7 691.7L975.7 691.2z"/><path class="e" d="M977.7 685.2L986.2 685.2M975.7 691.2L984.7 691.7"/><path class="q" fill="#73736f" stroke="#73736f" d="M1093.2 519.9L1099.4 518.1L1099.4 521.5L1093.2 523.4z"/><path class="e" d="M1093.2 519.9L1099.4 518.1M1093.2 523.4L1099.4 521.5"/><path class="q" fill="#858580" stroke="#858580" d="M1061.0 563.3L1067.9 561.9L1067.9 566.5L1061.0 567.9z"/><path class="e" d="M1061.0 563.3L1067.9 561.9M1061.0 567.9L1067.9 566.5"/><path class="q" fill="#82827e" stroke="#82827e" d="M936.5 668.7L945.1 669.4L945.1 672.8L936.5 672.2z"/><path class="e" d="M936.5 668.7L945.1 669.4M936.5 672.2L945.1 672.8"/><path class="q" fill="#9a9a94" stroke="#9a9a94" d="M1029.5 650.6L1037.8 649.7L1037.8 654.4L1029.5 655.2z"/><path class="e" d="M1029.5 650.6L1037.8 649.7M1029.5 655.2L1037.8 654.4"/><path class="q" fill="#85837a" stroke="#85837a" d="M1061.0 595.6L1067.9 594.2L1078.8 606.4L1070.7 607.9z"/><path class="e" d="M1061.0 595.6L1067.9 594.2M1070.7 607.9L1078.8 606.4"/><path class="q" fill="#8b887f" stroke="#8b887f" d="M1053.6 624.5L1061.0 623.3L1070.7 635.6L1062.1 637.0z"/><path class="e" d="M1053.6 624.5L1061.0 623.3M1062.1 637.0L1070.7 635.6"/><path class="q" fill="#82827d" stroke="#82827d" d="M1070.7 635.6L1078.8 634.1L1078.8 637.6L1070.7 639.1z"/><path class="e" d="M1070.7 635.6L1078.8 634.1M1070.7 639.1L1078.8 637.6"/><path class="q" fill="#494743" stroke="#494743" d="M954.2 673.3L963.6 673.6L969.4 680.5L961.3 680.3z"/><path class="e" d="M954.2 673.3L963.6 673.6M961.3 680.3L969.4 680.5"/><path class="q" fill="#52514c" stroke="#52514c" d="M1086.3 525.2L1093.2 523.4L1080.2 531.2L1074.3 532.8z"/><path class="e" d="M1086.3 525.2L1093.2 523.4M1074.3 532.8L1080.2 531.2"/><path class="q" fill="#4d4c48" stroke="#4d4c48" d="M920.9 559.8L928.4 560.6L939.3 568.1L932.9 567.4z"/><path class="e" d="M920.9 559.8L928.4 560.6M932.9 567.4L939.3 568.1"/><path class="q" fill="#888883" stroke="#888883" d="M1062.1 664.7L1070.7 663.3L1070.7 666.8L1062.1 668.2z"/><path class="e" d="M1062.1 664.7L1070.7 663.3M1062.1 668.2L1070.7 666.8"/><path class="q" fill="#72726e" stroke="#72726e" d="M914.0 555.3L920.9 556.3L920.9 559.8L914.0 558.8z"/><path class="e" d="M914.0 555.3L920.9 556.3M914.0 558.8L920.9 559.8"/><path class="q" fill="#4b4a46" stroke="#4b4a46" d="M1043.6 670.5L1053.0 669.4L1045.9 676.4L1037.8 677.4z"/><path class="e" d="M1043.6 670.5L1053.0 669.4M1037.8 677.4L1045.9 676.4"/><path class="q" fill="#9b988e" stroke="#9b988e" d="M1021.0 683.6L1029.5 682.9L1032.6 691.9L1022.9 692.2z"/><path class="e" d="M1021.0 683.6L1029.5 682.9M1022.9 692.2L1032.6 691.9"/><path class="q" fill="#494844" stroke="#494844" d="M945.1 645.1L954.2 645.6L961.3 652.6L953.6 652.2z"/><path class="e" d="M945.1 645.1L954.2 645.6M953.6 652.2L961.3 652.6"/><path class="q" fill="#8e8e89" stroke="#8e8e89" d="M961.3 624.9L969.4 625.1L969.4 629.7L961.3 629.5z"/><path class="e" d="M961.3 624.9L969.4 625.1M961.3 629.5L969.4 629.7"/><path class="q" fill="#9b988e" stroke="#9b988e" d="M986.2 685.2L994.9 685.0L994.1 692.0L984.7 691.7z"/><path class="e" d="M986.2 685.2L994.9 685.0M984.7 691.7L994.1 692.0"/><path class="q" fill="#4b4945" stroke="#4b4945" d="M928.4 588.3L936.5 589.1L946.2 596.4L939.3 595.8z"/><path class="e" d="M928.4 588.3L936.5 589.1M939.3 595.8L946.2 596.4"/><path class="q" fill="#7c7a72" stroke="#7c7a72" d="M927.0 515.8L932.9 516.6L920.9 528.6L914.0 527.6z"/><path class="e" d="M927.0 515.8L932.9 516.6M914.0 527.6L920.9 528.6"/><path class="q" fill="#979792" stroke="#979792" d="M977.7 652.9L986.2 652.9L986.2 657.5L977.7 657.5z"/><path class="e" d="M977.7 652.9L986.2 652.9M977.7 657.5L986.2 657.5"/><path class="q" fill="#494844" stroke="#494844" d="M936.5 616.8L945.1 617.4L953.6 624.5L946.2 624.1z"/><path class="e" d="M936.5 616.8L945.1 617.4M946.2 624.1L953.6 624.5"/><path class="q" fill="#4f4d49" stroke="#4f4d49" d="M1078.8 554.5L1086.3 552.9L1074.3 560.5L1067.9 561.9z"/><path class="e" d="M1078.8 554.5L1086.3 552.9M1067.9 561.9L1074.3 560.5"/><path class="q" fill="#9b9b96" stroke="#9b9b96" d="M1021.0 651.3L1029.5 650.6L1029.5 655.2L1021.0 655.9z"/><path class="e" d="M1021.0 651.3L1029.5 650.6M1021.0 655.9L1029.5 655.2"/><path class="q" fill="#94948f" stroke="#94948f" d="M1037.8 622.0L1045.9 621.0L1045.9 625.7L1037.8 626.7z"/><path class="e" d="M1037.8 622.0L1045.9 621.0M1037.8 626.7L1045.9 625.7"/><path class="q" fill="#4b4a45" stroke="#4b4a45" d="M1053.0 641.7L1062.1 640.5L1053.6 647.6L1045.9 648.7z"/><path class="e" d="M1053.0 641.7L1062.1 640.5M1045.9 648.7L1053.6 647.6"/><path class="q" fill="#767672" stroke="#767672" d="M1086.3 549.4L1093.2 547.6L1093.2 551.1L1086.3 552.9z"/><path class="e" d="M1086.3 549.4L1093.2 547.6M1086.3 552.9L1093.2 551.1"/><path class="q" fill="#9d9a8f" stroke="#9d9a8f" d="M1012.3 684.2L1021.0 683.6L1022.9 692.2L1013.2 692.3z"/><path class="e" d="M1012.3 684.2L1021.0 683.6M1013.2 692.3L1022.9 692.2"/><path class="q" fill="#4c4b47" stroke="#4c4b47" d="M1070.7 583.7L1078.8 582.2L1067.9 589.6L1061.0 591.0z"/><path class="e" d="M1070.7 583.7L1078.8 582.2M1061.0 591.0L1067.9 589.6"/><path class="q" fill="#9d9a8f" stroke="#9d9a8f" d="M994.9 685.0L1003.6 684.7L1003.6 692.2L994.1 692.0z"/><path class="e" d="M994.9 685.0L1003.6 684.7M994.1 692.0L1003.6 692.2"/><path class="q" fill="#928f85" stroke="#928f85" d="M961.3 657.2L969.4 657.4L963.6 670.2L954.2 669.8z"/><path class="e" d="M961.3 657.2L969.4 657.4M954.2 669.8L963.6 670.2"/><path class="q" fill="#4b4a46" stroke="#4b4a46" d="M1062.1 612.8L1070.7 611.4L1061.0 618.7L1053.6 619.9z"/><path class="e" d="M1062.1 612.8L1070.7 611.4M1053.6 619.9L1061.0 618.7"/><path class="q" fill="#777773" stroke="#777773" d="M920.9 584.0L928.4 584.9L928.4 588.3L920.9 587.5z"/><path class="e" d="M920.9 584.0L928.4 584.9M920.9 587.5L928.4 588.3"/><path class="q" fill="#7b7870" stroke="#7b7870" d="M1074.3 509.7L1080.2 508.1L1093.2 519.9L1086.3 521.7z"/><path class="e" d="M1074.3 509.7L1080.2 508.1M1086.3 521.7L1093.2 519.9"/><path class="q" fill="#8a8a85" stroke="#8a8a85" d="M953.6 596.8L961.3 597.2L961.3 601.8L953.6 601.5z"/><path class="e" d="M953.6 596.8L961.3 597.2M953.6 601.5L961.3 601.8"/><path class="q" fill="#9e9b91" stroke="#9e9b91" d="M1003.6 684.7L1012.3 684.2L1013.2 692.3L1003.6 692.2z"/><path class="e" d="M1003.6 684.7L1012.3 684.2M1003.6 692.2L1013.2 692.3"/><path class="q" fill="#807e75" stroke="#807e75" d="M932.9 544.3L939.3 545.0L928.4 557.2L920.9 556.3z"/><path class="e" d="M932.9 544.3L939.3 545.0M920.9 556.3L928.4 557.2"/><path class="q" fill="#999994" stroke="#999994" d="M986.2 652.9L994.9 652.7L994.9 657.3L986.2 657.5z"/><path class="e" d="M986.2 652.9L994.9 652.7M986.2 657.5L994.9 657.3"/><path class="q" fill="#52514c" stroke="#52514c" d="M1082.4 500.0L1088.4 498.6L1080.2 503.5L1074.3 505.1z"/><path class="e" d="M1082.4 500.0L1088.4 498.6M1074.3 505.1L1080.2 503.5"/><path class="q" fill="#79776f" stroke="#79776f" d="M909.2 497.6L914.8 499.2L914.0 499.9L907.8 498.8z"/><path class="e" d="M909.2 497.6L914.8 499.2M907.8 498.8L914.0 499.9"/><path class="q" fill="#6e6e6a" stroke="#6e6e6a" d="M907.8 498.8L914.0 499.9L914.0 503.4L907.8 502.3z"/><path class="e" d="M907.8 498.8L914.0 499.9M907.8 502.3L914.0 503.4"/><path class="q" fill="#959288" stroke="#959288" d="M1037.8 654.4L1045.9 653.4L1053.0 666.0L1043.6 667.1z"/><path class="e" d="M1037.8 654.4L1045.9 653.4M1043.6 667.1L1053.0 666.0"/><path class="q" fill="#7c7c77" stroke="#7c7c77" d="M932.9 512.0L939.3 512.7L939.3 517.3L932.9 516.6z"/><path class="e" d="M932.9 512.0L939.3 512.7M932.9 516.6L939.3 517.3"/><path class="q" fill="#9c9c97" stroke="#9c9c97" d="M1012.3 651.9L1021.0 651.3L1021.0 655.9L1012.3 656.5z"/><path class="e" d="M1012.3 651.9L1021.0 651.3M1012.3 656.5L1021.0 655.9"/><path class="q" fill="#494844" stroke="#494844" d="M963.6 673.6L973.3 673.8L977.7 680.6L969.4 680.5z"/><path class="e" d="M963.6 673.6L973.3 673.8M969.4 680.5L977.7 680.6"/><path class="q" fill="#858581" stroke="#858581" d="M946.2 568.7L953.6 569.1L953.6 573.8L946.2 573.3z"/><path class="e" d="M946.2 568.7L953.6 569.1M946.2 573.3L953.6 573.8"/><path class="q" fill="#8f8f8a" stroke="#8f8f8a" d="M1045.9 593.3L1053.6 592.2L1053.6 596.8L1045.9 598.0z"/><path class="e" d="M1045.9 593.3L1053.6 592.2M1045.9 598.0L1053.6 596.8"/><path class="q" fill="#80807b" stroke="#80807b" d="M939.3 540.4L946.2 541.0L946.2 545.6L939.3 545.0z"/><path class="e" d="M939.3 540.4L946.2 541.0M939.3 545.0L946.2 545.6"/><path class="q" fill="#8e8b82" stroke="#8e8b82" d="M953.6 629.2L961.3 629.5L954.2 642.1L945.1 641.7z"/><path class="e" d="M953.6 629.2L961.3 629.5M945.1 641.7L954.2 642.1"/><path class="q" fill="#85827a" stroke="#85827a" d="M939.3 572.7L946.2 573.3L936.5 585.6L928.4 584.9z"/><path class="e" d="M939.3 572.7L946.2 573.3M928.4 584.9L936.5 585.6"/><path class="q" fill="#9c9c96" stroke="#9c9c96" d="M994.9 652.7L1003.6 652.4L1003.6 657.0L994.9 657.3z"/><path class="e" d="M994.9 652.7L1003.6 652.4M994.9 657.3L1003.6 657.0"/><path class="q" fill="#4c4b47" stroke="#4c4b47" d="M1033.9 671.5L1043.6 670.5L1037.8 677.4L1029.5 678.3z"/><path class="e" d="M1033.9 671.5L1043.6 670.5M1029.5 678.3L1037.8 677.4"/><path class="q" fill="#7c7c78" stroke="#7c7c78" d="M1078.8 578.7L1086.3 577.1L1086.3 580.6L1078.8 582.2z"/><path class="e" d="M1078.8 578.7L1086.3 577.1M1078.8 582.2L1086.3 580.6"/><path class="q" fill="#9e9e98" stroke="#9e9e98" d="M1003.6 652.4L1012.3 651.9L1012.3 656.5L1003.6 657.0z"/><path class="e" d="M1003.6 652.4L1012.3 651.9M1003.6 657.0L1012.3 656.5"/><path class="q" fill="#51504b" stroke="#51504b" d="M914.0 503.4L920.9 504.4L932.9 512.0L927.0 511.2z"/><path class="e" d="M914.0 503.4L920.9 504.4M927.0 511.2L932.9 512.0"/><path class="q" fill="#7d7d78" stroke="#7d7d78" d="M928.4 612.6L936.5 613.3L936.5 616.8L928.4 616.0z"/><path class="e" d="M928.4 612.6L936.5 613.3M928.4 616.0L936.5 616.8"/><path class="q" fill="#8a877e" stroke="#8a877e" d="M946.2 601.0L953.6 601.5L945.1 614.0L936.5 613.3z"/><path class="e" d="M946.2 601.0L953.6 601.5M936.5 613.3L945.1 614.0"/><path class="q" fill="#807d75" stroke="#807d75" d="M1067.9 538.8L1074.3 537.4L1086.3 549.4L1078.8 551.0z"/><path class="e" d="M1067.9 538.8L1074.3 537.4M1078.8 551.0L1086.3 549.4"/><path class="q" fill="#92928d" stroke="#92928d" d="M969.4 625.1L977.7 625.2L977.7 629.8L969.4 629.7z"/><path class="e" d="M969.4 625.1L977.7 625.2M969.4 629.7L977.7 629.8"/><path class="q" fill="#80807b" stroke="#80807b" d="M1067.9 506.5L1074.3 505.1L1074.3 509.7L1067.9 511.1z"/><path class="e" d="M1067.9 506.5L1074.3 505.1M1067.9 511.1L1074.3 509.7"/><path class="q" fill="#8a8a85" stroke="#8a8a85" d="M1053.6 564.5L1061.0 563.3L1061.0 567.9L1053.6 569.1z"/><path class="e" d="M1053.6 564.5L1061.0 563.3M1053.6 569.1L1061.0 567.9"/><path class="q" fill="#908d83" stroke="#908d83" d="M1045.9 625.7L1053.6 624.5L1062.1 637.0L1053.0 638.3z"/><path class="e" d="M1045.9 625.7L1053.6 624.5M1053.0 638.3L1062.1 637.0"/><path class="q" fill="#858580" stroke="#858580" d="M1061.0 535.6L1067.9 534.2L1067.9 538.8L1061.0 540.2z"/><path class="e" d="M1061.0 535.6L1067.9 534.2M1061.0 540.2L1067.9 538.8"/><path class="q" fill="#878783" stroke="#878783" d="M945.1 669.4L954.2 669.8L954.2 673.3L945.1 672.8z"/><path class="e" d="M945.1 669.4L954.2 669.8M945.1 672.8L954.2 673.3"/><path class="q" fill="#82827e" stroke="#82827e" d="M936.5 641.0L945.1 641.7L945.1 645.1L936.5 644.5z"/><path class="e" d="M936.5 641.0L945.1 641.7M936.5 644.5L945.1 645.1"/><path class="q" fill="#9a9a94" stroke="#9a9a94" d="M1029.5 622.9L1037.8 622.0L1037.8 626.7L1029.5 627.5z"/><path class="e" d="M1029.5 622.9L1037.8 622.0M1029.5 627.5L1037.8 626.7"/><path class="q" fill="#85837a" stroke="#85837a" d="M1061.0 567.9L1067.9 566.5L1078.8 578.7L1070.7 580.2z"/><path class="e" d="M1061.0 567.9L1067.9 566.5M1070.7 580.2L1078.8 578.7"/><path class="q" fill="#8b887f" stroke="#8b887f" d="M1053.6 596.8L1061.0 595.6L1070.7 607.9L1062.1 609.3z"/><path class="e" d="M1053.6 596.8L1061.0 595.6M1062.1 609.3L1070.7 607.9"/><path class="q" fill="#82827d" stroke="#82827d" d="M1070.7 607.9L1078.8 606.4L1078.8 609.9L1070.7 611.4z"/><path class="e" d="M1070.7 607.9L1078.8 606.4M1070.7 611.4L1078.8 609.9"/><path class="q" fill="#494743" stroke="#494743" d="M954.2 645.6L963.6 645.9L969.4 652.8L961.3 652.6z"/><path class="e" d="M954.2 645.6L963.6 645.9M961.3 652.6L969.4 652.8"/><path class="q" fill="#8d8d88" stroke="#8d8d88" d="M1053.0 666.0L1062.1 664.7L1062.1 668.2L1053.0 669.4z"/><path class="e" d="M1053.0 666.0L1062.1 664.7M1053.0 669.4L1062.1 668.2"/><path class="q" fill="#4d4c48" stroke="#4d4c48" d="M920.9 532.1L928.4 532.9L939.3 540.4L932.9 539.7z"/><path class="e" d="M920.9 532.1L928.4 532.9M932.9 539.7L939.3 540.4"/><path class="q" fill="#888883" stroke="#888883" d="M1062.1 637.0L1070.7 635.6L1070.7 639.1L1062.1 640.5z"/><path class="e" d="M1062.1 637.0L1070.7 635.6M1062.1 640.5L1070.7 639.1"/><path class="q" fill="#72726e" stroke="#72726e" d="M914.0 527.6L920.9 528.6L920.9 532.1L914.0 531.1z"/><path class="e" d="M914.0 527.6L920.9 528.6M914.0 531.1L920.9 532.1"/><path class="q" fill="#959289" stroke="#959289" d="M969.4 657.4L977.7 657.5L973.3 670.3L963.6 670.2z"/><path class="e" d="M969.4 657.4L977.7 657.5M963.6 670.2L973.3 670.3"/><path class="q" fill="#4b4a46" stroke="#4b4a46" d="M973.3 673.8L983.3 673.8L986.2 680.6L977.7 680.6z"/><path class="e" d="M973.3 673.8L983.3 673.8M977.7 680.6L986.2 680.6"/><path class="q" fill="#4b4a46" stroke="#4b4a46" d="M1043.6 642.8L1053.0 641.7L1045.9 648.7L1037.8 649.7z"/><path class="e" d="M1043.6 642.8L1053.0 641.7M1037.8 649.7L1045.9 648.7"/><path class="q" fill="#4d4b47" stroke="#4d4b47" d="M1023.9 672.3L1033.9 671.5L1029.5 678.3L1021.0 679.0z"/><path class="e" d="M1023.9 672.3L1033.9 671.5M1021.0 679.0L1029.5 678.3"/><path class="q" fill="#9a978d" stroke="#9a978d" d="M1029.5 655.2L1037.8 654.4L1043.6 667.1L1033.9 668.0z"/><path class="e" d="M1029.5 655.2L1037.8 654.4M1033.9 668.0L1043.6 667.1"/><path class="q" fill="#494844" stroke="#494844" d="M945.1 617.4L954.2 617.9L961.3 624.9L953.6 624.5z"/><path class="e" d="M945.1 617.4L954.2 617.9M953.6 624.5L961.3 624.9"/><path class="q" fill="#8e8e89" stroke="#8e8e89" d="M961.3 597.2L969.4 597.4L969.4 602.0L961.3 601.8z"/><path class="e" d="M961.3 597.2L969.4 597.4M961.3 601.8L969.4 602.0"/><path class="q" fill="#4b4945" stroke="#4b4945" d="M928.4 560.6L936.5 561.4L946.2 568.7L939.3 568.1z"/><path class="e" d="M928.4 560.6L936.5 561.4M939.3 568.1L946.2 568.7"/><path class="q" fill="#979792" stroke="#979792" d="M977.7 625.2L986.2 625.2L986.2 629.8L977.7 629.8z"/><path class="e" d="M977.7 625.2L986.2 625.2M977.7 629.8L986.2 629.8"/><path class="q" fill="#494844" stroke="#494844" d="M936.5 589.1L945.1 589.7L953.6 596.8L946.2 596.4z"/><path class="e" d="M936.5 589.1L945.1 589.7M946.2 596.4L953.6 596.8"/><path class="q" fill="#4f4d49" stroke="#4f4d49" d="M1078.8 526.8L1086.3 525.2L1074.3 532.8L1067.9 534.2z"/><path class="e" d="M1078.8 526.8L1086.3 525.2M1067.9 534.2L1074.3 532.8"/><path class="q" fill="#9b9b96" stroke="#9b9b96" d="M1021.0 623.6L1029.5 622.9L1029.5 627.5L1021.0 628.2z"/><path class="e" d="M1021.0 623.6L1029.5 622.9M1021.0 628.2L1029.5 627.5"/><path class="q" fill="#94948f" stroke="#94948f" d="M1037.8 594.3L1045.9 593.3L1045.9 598.0L1037.8 599.0z"/><path class="e" d="M1037.8 594.3L1045.9 593.3M1037.8 599.0L1045.9 598.0"/><path class="q" fill="#4b4a45" stroke="#4b4a45" d="M1053.0 614.0L1062.1 612.8L1053.6 619.9L1045.9 621.0z"/><path class="e" d="M1053.0 614.0L1062.1 612.8M1045.9 621.0L1053.6 619.9"/><path class="q" fill="#767672" stroke="#767672" d="M1086.3 521.7L1093.2 519.9L1093.2 523.4L1086.3 525.2z"/><path class="e" d="M1086.3 521.7L1093.2 519.9M1086.3 525.2L1093.2 523.4"/><path class="q" fill="#4c4b46" stroke="#4c4b46" d="M983.3 673.8L993.4 673.7L994.9 680.4L986.2 680.6z"/><path class="e" d="M983.3 673.8L993.4 673.7M986.2 680.6L994.9 680.4"/><path class="q" fill="#4c4b47" stroke="#4c4b47" d="M1070.7 556.0L1078.8 554.5L1067.9 561.9L1061.0 563.3z"/><path class="e" d="M1070.7 556.0L1078.8 554.5M1061.0 563.3L1067.9 561.9"/><path class="q" fill="#928f85" stroke="#928f85" d="M961.3 629.5L969.4 629.7L963.6 642.5L954.2 642.1z"/><path class="e" d="M961.3 629.5L969.4 629.7M954.2 642.1L963.6 642.5"/><path class="q" fill="#4b4a46" stroke="#4b4a46" d="M1062.1 585.1L1070.7 583.7L1061.0 591.0L1053.6 592.2z"/><path class="e" d="M1062.1 585.1L1070.7 583.7M1053.6 592.2L1061.0 591.0"/><path class="q" fill="#4d4c48" stroke="#4d4c48" d="M1013.8 672.9L1023.9 672.3L1021.0 679.0L1012.3 679.6z"/><path class="e" d="M1013.8 672.9L1023.9 672.3M1012.3 679.6L1021.0 679.0"/><path class="q" fill="#777773" stroke="#777773" d="M920.9 556.3L928.4 557.2L928.4 560.6L920.9 559.8z"/><path class="e" d="M920.9 556.3L928.4 557.2M920.9 559.8L928.4 560.6"/><path class="q" fill="#8a8a85" stroke="#8a8a85" d="M953.6 569.1L961.3 569.5L961.3 574.1L953.6 573.8z"/><path class="e" d="M953.6 569.1L961.3 569.5M953.6 573.8L961.3 574.1"/><path class="q" fill="#807e75" stroke="#807e75" d="M932.9 516.6L939.3 517.3L928.4 529.5L920.9 528.6z"/><path class="e" d="M932.9 516.6L939.3 517.3M920.9 528.6L928.4 529.5"/><path class="q" fill="#999994" stroke="#999994" d="M986.2 625.2L994.9 625.0L994.9 629.6L986.2 629.8z"/><path class="e" d="M986.2 625.2L994.9 625.0M986.2 629.8L994.9 629.6"/><path class="q" fill="#99968c" stroke="#99968c" d="M977.7 657.5L986.2 657.5L983.3 670.3L973.3 670.3z"/><path class="e" d="M977.7 657.5L986.2 657.5M973.3 670.3L983.3 670.3"/><path class="q" fill="#959288" stroke="#959288" d="M1037.8 626.7L1045.9 625.7L1053.0 638.3L1043.6 639.4z"/><path class="e" d="M1037.8 626.7L1045.9 625.7M1043.6 639.4L1053.0 638.3"/><path class="q" fill="#9c9c97" stroke="#9c9c97" d="M1012.3 624.2L1021.0 623.6L1021.0 628.2L1012.3 628.8z"/><path class="e" d="M1012.3 624.2L1021.0 623.6M1012.3 628.8L1021.0 628.2"/><path class="q" fill="#4d4c47" stroke="#4d4c47" d="M993.4 673.7L1003.6 673.4L1003.6 680.1L994.9 680.4z"/><path class="e" d="M993.4 673.7L1003.6 673.4M994.9 680.4L1003.6 680.1"/><path class="q" fill="#4e4c48" stroke="#4e4c48" d="M1003.6 673.4L1013.8 672.9L1012.3 679.6L1003.6 680.1z"/><path class="e" d="M1003.6 673.4L1013.8 672.9M1003.6 680.1L1012.3 679.6"/><path class="q" fill="#494844" stroke="#494844" d="M963.6 645.9L973.3 646.1L977.7 652.9L969.4 652.8z"/><path class="e" d="M963.6 645.9L973.3 646.1M969.4 652.8L977.7 652.9"/><path class="q" fill="#9b988e" stroke="#9b988e" d="M1021.0 655.9L1029.5 655.2L1033.9 668.0L1023.9 668.8z"/><path class="e" d="M1021.0 655.9L1029.5 655.2M1023.9 668.8L1033.9 668.0"/><path class="q" fill="#858581" stroke="#858581" d="M946.2 541.0L953.6 541.4L953.6 546.1L946.2 545.6z"/><path class="e" d="M946.2 541.0L953.6 541.4M946.2 545.6L953.6 546.1"/><path class="q" fill="#8f8f8a" stroke="#8f8f8a" d="M1045.9 565.6L1053.6 564.5L1053.6 569.1L1045.9 570.3z"/><path class="e" d="M1045.9 565.6L1053.6 564.5M1045.9 570.3L1053.6 569.1"/><path class="q" fill="#80807b" stroke="#80807b" d="M939.3 512.7L946.2 513.3L946.2 517.9L939.3 517.3z"/><path class="e" d="M939.3 512.7L946.2 513.3M939.3 517.3L946.2 517.9"/><path class="q" fill="#8e8b82" stroke="#8e8b82" d="M953.6 601.5L961.3 601.8L954.2 614.4L945.1 614.0z"/><path class="e" d="M953.6 601.5L961.3 601.8M945.1 614.0L954.2 614.4"/><path class="q" fill="#85827a" stroke="#85827a" d="M939.3 545.0L946.2 545.6L936.5 557.9L928.4 557.2z"/><path class="e" d="M939.3 545.0L946.2 545.6M928.4 557.2L936.5 557.9"/><path class="q" fill="#9c9c96" stroke="#9c9c96" d="M994.9 625.0L1003.6 624.7L1003.6 629.3L994.9 629.6z"/><path class="e" d="M994.9 625.0L1003.6 624.7M994.9 629.6L1003.6 629.3"/><path class="q" fill="#4c4b47" stroke="#4c4b47" d="M1033.9 643.8L1043.6 642.8L1037.8 649.7L1029.5 650.6z"/><path class="e" d="M1033.9 643.8L1043.6 642.8M1029.5 650.6L1037.8 649.7"/><path class="q" fill="#7c7c78" stroke="#7c7c78" d="M1078.8 551.0L1086.3 549.4L1086.3 552.9L1078.8 554.5z"/><path class="e" d="M1078.8 551.0L1086.3 549.4M1078.8 554.5L1086.3 552.9"/><path class="q" fill="#8b8b86" stroke="#8b8b86" d="M954.2 669.8L963.6 670.2L963.6 673.6L954.2 673.3z"/><path class="e" d="M954.2 669.8L963.6 670.2M954.2 673.3L963.6 673.6"/><path class="q" fill="#9e9e98" stroke="#9e9e98" d="M1003.6 624.7L1012.3 624.2L1012.3 628.8L1003.6 629.3z"/><path class="e" d="M1003.6 624.7L1012.3 624.2M1003.6 629.3L1012.3 628.8"/><path class="q" fill="#7d7d78" stroke="#7d7d78" d="M928.4 584.9L936.5 585.6L936.5 589.1L928.4 588.3z"/><path class="e" d="M928.4 584.9L936.5 585.6M928.4 588.3L936.5 589.1"/><path class="q" fill="#8a877e" stroke="#8a877e" d="M946.2 573.3L953.6 573.8L945.1 586.3L936.5 585.6z"/><path class="e" d="M946.2 573.3L953.6 573.8M936.5 585.6L945.1 586.3"/><path class="q" fill="#807d75" stroke="#807d75" d="M1067.9 511.1L1074.3 509.7L1086.3 521.7L1078.8 523.3z"/><path class="e" d="M1067.9 511.1L1074.3 509.7M1078.8 523.3L1086.3 521.7"/><path class="q" fill="#92928d" stroke="#92928d" d="M969.4 597.4L977.7 597.5L977.7 602.1L969.4 602.0z"/><path class="e" d="M969.4 597.4L977.7 597.5M969.4 602.0L977.7 602.1"/><path class="q" fill="#8a8a85" stroke="#8a8a85" d="M1053.6 536.8L1061.0 535.6L1061.0 540.2L1053.6 541.4z"/><path class="e" d="M1053.6 536.8L1061.0 535.6M1053.6 541.4L1061.0 540.2"/><path class="q" fill="#908d83" stroke="#908d83" d="M1045.9 598.0L1053.6 596.8L1062.1 609.3L1053.0 610.6z"/><path class="e" d="M1045.9 598.0L1053.6 596.8M1053.0 610.6L1062.1 609.3"/><path class="q" fill="#91918c" stroke="#91918c" d="M1043.6 667.1L1053.0 666.0L1053.0 669.4L1043.6 670.5z"/><path class="e" d="M1043.6 667.1L1053.0 666.0M1043.6 670.5L1053.0 669.4"/><path class="q" fill="#4f4d49" stroke="#4f4d49" d="M1075.6 501.2L1082.4 500.0L1074.3 505.1L1067.9 506.5z"/><path class="e" d="M1075.6 501.2L1082.4 500.0M1067.9 506.5L1074.3 505.1"/><path class="q" fill="#858580" stroke="#858580" d="M1061.0 507.9L1067.9 506.5L1067.9 511.1L1061.0 512.5z"/><path class="e" d="M1061.0 507.9L1067.9 506.5M1061.0 512.5L1067.9 511.1"/><path class="q" fill="#878783" stroke="#878783" d="M945.1 641.7L954.2 642.1L954.2 645.6L945.1 645.1z"/><path class="e" d="M945.1 641.7L954.2 642.1M945.1 645.1L954.2 645.6"/><path class="q" fill="#82827e" stroke="#82827e" d="M936.5 613.3L945.1 614.0L945.1 617.4L936.5 616.8z"/><path class="e" d="M936.5 613.3L945.1 614.0M936.5 616.8L945.1 617.4"/><path class="q" fill="#9a9a94" stroke="#9a9a94" d="M1029.5 595.2L1037.8 594.3L1037.8 599.0L1029.5 599.8z"/><path class="e" d="M1029.5 595.2L1037.8 594.3M1029.5 599.8L1037.8 599.0"/><path class="q" fill="#9b988e" stroke="#9b988e" d="M986.2 657.5L994.9 657.3L993.4 670.2L983.3 670.3z"/><path class="e" d="M986.2 657.5L994.9 657.3M983.3 670.3L993.4 670.2"/><path class="q" fill="#85837a" stroke="#85837a" d="M1061.0 540.2L1067.9 538.8L1078.8 551.0L1070.7 552.5z"/><path class="e" d="M1061.0 540.2L1067.9 538.8M1070.7 552.5L1078.8 551.0"/><path class="q" fill="#8b887f" stroke="#8b887f" d="M1053.6 569.1L1061.0 567.9L1070.7 580.2L1062.1 581.6z"/><path class="e" d="M1053.6 569.1L1061.0 567.9M1062.1 581.6L1070.7 580.2"/><path class="q" fill="#9d9a8f" stroke="#9d9a8f" d="M1012.3 656.5L1021.0 655.9L1023.9 668.8L1013.8 669.4z"/><path class="e" d="M1012.3 656.5L1021.0 655.9M1013.8 669.4L1023.9 668.8"/><path class="q" fill="#82827d" stroke="#82827d" d="M1070.7 580.2L1078.8 578.7L1078.8 582.2L1070.7 583.7z"/><path class="e" d="M1070.7 580.2L1078.8 578.7M1070.7 583.7L1078.8 582.2"/><path class="q" fill="#494743" stroke="#494743" d="M954.2 617.9L963.6 618.2L969.4 625.1L961.3 624.9z"/><path class="e" d="M954.2 617.9L963.6 618.2M961.3 624.9L969.4 625.1"/><path class="q" fill="#8d8d88" stroke="#8d8d88" d="M1053.0 638.3L1062.1 637.0L1062.1 640.5L1053.0 641.7z"/><path class="e" d="M1053.0 638.3L1062.1 637.0M1053.0 641.7L1062.1 640.5"/><path class="q" fill="#4d4c48" stroke="#4d4c48" d="M920.9 504.4L928.4 505.2L939.3 512.7L932.9 512.0z"/><path class="e" d="M920.9 504.4L928.4 505.2M932.9 512.0L939.3 512.7"/><path class="q" fill="#888883" stroke="#888883" d="M1062.1 609.3L1070.7 607.9L1070.7 611.4L1062.1 612.8z"/><path class="e" d="M1062.1 609.3L1070.7 607.9M1062.1 612.8L1070.7 611.4"/><path class="q" fill="#9d9a8f" stroke="#9d9a8f" d="M994.9 657.3L1003.6 657.0L1003.6 669.9L993.4 670.2z"/><path class="e" d="M994.9 657.3L1003.6 657.0M993.4 670.2L1003.6 669.9"/><path class="q" fill="#9e9b91" stroke="#9e9b91" d="M1003.6 657.0L1012.3 656.5L1013.8 669.4L1003.6 669.9z"/><path class="e" d="M1003.6 657.0L1012.3 656.5M1003.6 669.9L1013.8 669.4"/><path class="q" fill="#72726e" stroke="#72726e" d="M914.0 499.9L920.9 500.9L920.9 504.4L914.0 503.4z"/><path class="e" d="M914.0 499.9L920.9 500.9M914.0 503.4L920.9 504.4"/><path class="q" fill="#959289" stroke="#959289" d="M969.4 629.7L977.7 629.8L973.3 642.6L963.6 642.5z"/><path class="e" d="M969.4 629.7L977.7 629.8M963.6 642.5L973.3 642.6"/><path class="q" fill="#4b4a46" stroke="#4b4a46" d="M973.3 646.1L983.3 646.1L986.2 652.9L977.7 652.9z"/><path class="e" d="M973.3 646.1L983.3 646.1M977.7 652.9L986.2 652.9"/><path class="q" fill="#4b4a46" stroke="#4b4a46" d="M1043.6 615.1L1053.0 614.0L1045.9 621.0L1037.8 622.0z"/><path class="e" d="M1043.6 615.1L1053.0 614.0M1037.8 622.0L1045.9 621.0"/><path class="q" fill="#7c7a72" stroke="#7c7a72" d="M914.8 499.2L921.2 500.6L920.9 500.9L914.0 499.9z"/><path class="e" d="M914.8 499.2L921.2 500.6M914.0 499.9L920.9 500.9"/><path class="q" fill="#4d4b47" stroke="#4d4b47" d="M1023.9 644.6L1033.9 643.8L1029.5 650.6L1021.0 651.3z"/><path class="e" d="M1023.9 644.6L1033.9 643.8M1021.0 651.3L1029.5 650.6"/><path class="q" fill="#9a978d" stroke="#9a978d" d="M1029.5 627.5L1037.8 626.7L1043.6 639.4L1033.9 640.3z"/><path class="e" d="M1029.5 627.5L1037.8 626.7M1033.9 640.3L1043.6 639.4"/><path class="q" fill="#494844" stroke="#494844" d="M945.1 589.7L954.2 590.2L961.3 597.2L953.6 596.8z"/><path class="e" d="M945.1 589.7L954.2 590.2M953.6 596.8L961.3 597.2"/><path class="q" fill="#8e8e89" stroke="#8e8e89" d="M961.3 569.5L969.4 569.7L969.4 574.3L961.3 574.1z"/><path class="e" d="M961.3 569.5L969.4 569.7M961.3 574.1L969.4 574.3"/><path class="q" fill="#4b4945" stroke="#4b4945" d="M928.4 532.9L936.5 533.7L946.2 541.0L939.3 540.4z"/><path class="e" d="M928.4 532.9L936.5 533.7M939.3 540.4L946.2 541.0"/><path class="q" fill="#979792" stroke="#979792" d="M977.7 597.5L986.2 597.5L986.2 602.1L977.7 602.1z"/><path class="e" d="M977.7 597.5L986.2 597.5M977.7 602.1L986.2 602.1"/><path class="q" fill="#494844" stroke="#494844" d="M936.5 561.4L945.1 562.0L953.6 569.1L946.2 568.7z"/><path class="e" d="M936.5 561.4L945.1 562.0M946.2 568.7L953.6 569.1"/><path class="q" fill="#9b9b96" stroke="#9b9b96" d="M1021.0 595.9L1029.5 595.2L1029.5 599.8L1021.0 600.5z"/><path class="e" d="M1021.0 595.9L1029.5 595.2M1021.0 600.5L1029.5 599.8"/><path class="q" fill="#94948f" stroke="#94948f" d="M1037.8 566.6L1045.9 565.6L1045.9 570.3L1037.8 571.3z"/><path class="e" d="M1037.8 566.6L1045.9 565.6M1037.8 571.3L1045.9 570.3"/><path class="q" fill="#4b4a45" stroke="#4b4a45" d="M1053.0 586.3L1062.1 585.1L1053.6 592.2L1045.9 593.3z"/><path class="e" d="M1053.0 586.3L1062.1 585.1M1045.9 593.3L1053.6 592.2"/><path class="q" fill="#90908b" stroke="#90908b" d="M963.6 670.2L973.3 670.3L973.3 673.8L963.6 673.6z"/><path class="e" d="M963.6 670.2L973.3 670.3M963.6 673.6L973.3 673.8"/><path class="q" fill="#4c4b46" stroke="#4c4b46" d="M983.3 646.1L993.4 646.0L994.9 652.7L986.2 652.9z"/><path class="e" d="M983.3 646.1L993.4 646.0M986.2 652.9L994.9 652.7"/><path class="q" fill="#4c4b47" stroke="#4c4b47" d="M1070.7 528.3L1078.8 526.8L1067.9 534.2L1061.0 535.6z"/><path class="e" d="M1070.7 528.3L1078.8 526.8M1061.0 535.6L1067.9 534.2"/><path class="q" fill="#928f85" stroke="#928f85" d="M961.3 601.8L969.4 602.0L963.6 614.8L954.2 614.4z"/><path class="e" d="M961.3 601.8L969.4 602.0M954.2 614.4L963.6 614.8"/><path class="q" fill="#4b4a46" stroke="#4b4a46" d="M1062.1 557.4L1070.7 556.0L1061.0 563.3L1053.6 564.5z"/><path class="e" d="M1062.1 557.4L1070.7 556.0M1053.6 564.5L1061.0 563.3"/><path class="q" fill="#4d4c48" stroke="#4d4c48" d="M1013.8 645.2L1023.9 644.6L1021.0 651.3L1012.3 651.9z"/><path class="e" d="M1013.8 645.2L1023.9 644.6M1012.3 651.9L1021.0 651.3"/><path class="q" fill="#777773" stroke="#777773" d="M920.9 528.6L928.4 529.5L928.4 532.9L920.9 532.1z"/><path class="e" d="M920.9 528.6L928.4 529.5M920.9 532.1L928.4 532.9"/><path class="q" fill="#8a8a85" stroke="#8a8a85" d="M953.6 541.4L961.3 541.8L961.3 546.4L953.6 546.1z"/><path class="e" d="M953.6 541.4L961.3 541.8M953.6 546.1L961.3 546.4"/><path class="q" fill="#979791" stroke="#979791" d="M1033.9 668.0L1043.6 667.1L1043.6 670.5L1033.9 671.5z"/><path class="e" d="M1033.9 668.0L1043.6 667.1M1033.9 671.5L1043.6 670.5"/><path class="q" fill="#999994" stroke="#999994" d="M986.2 597.5L994.9 597.3L994.9 601.9L986.2 602.1z"/><path class="e" d="M986.2 597.5L994.9 597.3M986.2 602.1L994.9 601.9"/><path class="q" fill="#99968c" stroke="#99968c" d="M977.7 629.8L986.2 629.8L983.3 642.6L973.3 642.6z"/><path class="e" d="M977.7 629.8L986.2 629.8M973.3 642.6L983.3 642.6"/><path class="q" fill="#959288" stroke="#959288" d="M1037.8 599.0L1045.9 598.0L1053.0 610.6L1043.6 611.7z"/><path class="e" d="M1037.8 599.0L1045.9 598.0M1043.6 611.7L1053.0 610.6"/><path class="q" fill="#9c9c97" stroke="#9c9c97" d="M1012.3 596.5L1021.0 595.9L1021.0 600.5L1012.3 601.1z"/><path class="e" d="M1012.3 596.5L1021.0 595.9M1012.3 601.1L1021.0 600.5"/><path class="q" fill="#4d4c47" stroke="#4d4c47" d="M993.4 646.0L1003.6 645.7L1003.6 652.4L994.9 652.7z"/><path class="e" d="M993.4 646.0L1003.6 645.7M994.9 652.7L1003.6 652.4"/><path class="q" fill="#4e4c48" stroke="#4e4c48" d="M1003.6 645.7L1013.8 645.2L1012.3 651.9L1003.6 652.4z"/><path class="e" d="M1003.6 645.7L1013.8 645.2M1003.6 652.4L1012.3 651.9"/><path class="q" fill="#494844" stroke="#494844" d="M963.6 618.2L973.3 618.4L977.7 625.2L969.4 625.1z"/><path class="e" d="M963.6 618.2L973.3 618.4M969.4 625.1L977.7 625.2"/><path class="q" fill="#9b988e" stroke="#9b988e" d="M1021.0 628.2L1029.5 627.5L1033.9 640.3L1023.9 641.1z"/><path class="e" d="M1021.0 628.2L1029.5 627.5M1023.9 641.1L1033.9 640.3"/><path class="q" fill="#858581" stroke="#858581" d="M946.2 513.3L953.6 513.7L953.6 518.4L946.2 517.9z"/><path class="e" d="M946.2 513.3L953.6 513.7M946.2 517.9L953.6 518.4"/><path class="q" fill="#8f8f8a" stroke="#8f8f8a" d="M1045.9 537.9L1053.6 536.8L1053.6 541.4L1045.9 542.6z"/><path class="e" d="M1045.9 537.9L1053.6 536.8M1045.9 542.6L1053.6 541.4"/><path class="q" fill="#8e8b82" stroke="#8e8b82" d="M953.6 573.8L961.3 574.1L954.2 586.7L945.1 586.3z"/><path class="e" d="M953.6 573.8L961.3 574.1M945.1 586.3L954.2 586.7"/><path class="q" fill="#85827a" stroke="#85827a" d="M939.3 517.3L946.2 517.9L936.5 530.2L928.4 529.5z"/><path class="e" d="M939.3 517.3L946.2 517.9M928.4 529.5L936.5 530.2"/><path class="q" fill="#9c9c96" stroke="#9c9c96" d="M994.9 597.3L1003.6 597.0L1003.6 601.6L994.9 601.9z"/><path class="e" d="M994.9 597.3L1003.6 597.0M994.9 601.9L1003.6 601.6"/><path class="q" fill="#4c4b47" stroke="#4c4b47" d="M1033.9 616.1L1043.6 615.1L1037.8 622.0L1029.5 622.9z"/><path class="e" d="M1033.9 616.1L1043.6 615.1M1029.5 622.9L1037.8 622.0"/><path class="q" fill="#7c7c78" stroke="#7c7c78" d="M1078.8 523.3L1086.3 521.7L1086.3 525.2L1078.8 526.8z"/><path class="e" d="M1078.8 523.3L1086.3 521.7M1078.8 526.8L1086.3 525.2"/><path class="q" fill="#8b8b86" stroke="#8b8b86" d="M954.2 642.1L963.6 642.5L963.6 645.9L954.2 645.6z"/><path class="e" d="M954.2 642.1L963.6 642.5M954.2 645.6L963.6 645.9"/><path class="q" fill="#9e9e98" stroke="#9e9e98" d="M1003.6 597.0L1012.3 596.5L1012.3 601.1L1003.6 601.6z"/><path class="e" d="M1003.6 597.0L1012.3 596.5M1003.6 601.6L1012.3 601.1"/><path class="q" fill="#7d7d78" stroke="#7d7d78" d="M928.4 557.2L936.5 557.9L936.5 561.4L928.4 560.6z"/><path class="e" d="M928.4 557.2L936.5 557.9M928.4 560.6L936.5 561.4"/><path class="q" fill="#8a877e" stroke="#8a877e" d="M946.2 545.6L953.6 546.1L945.1 558.6L936.5 557.9z"/><path class="e" d="M946.2 545.6L953.6 546.1M936.5 557.9L945.1 558.6"/><path class="q" fill="#92928d" stroke="#92928d" d="M969.4 569.7L977.7 569.8L977.7 574.4L969.4 574.3z"/><path class="e" d="M969.4 569.7L977.7 569.8M969.4 574.3L977.7 574.4"/><path class="q" fill="#8a8a85" stroke="#8a8a85" d="M1053.6 509.1L1061.0 507.9L1061.0 512.5L1053.6 513.7z"/><path class="e" d="M1053.6 509.1L1061.0 507.9M1053.6 513.7L1061.0 512.5"/><path class="q" fill="#908d83" stroke="#908d83" d="M1045.9 570.3L1053.6 569.1L1062.1 581.6L1053.0 582.9z"/><path class="e" d="M1045.9 570.3L1053.6 569.1M1053.0 582.9L1062.1 581.6"/><path class="q" fill="#91918c" stroke="#91918c" d="M1043.6 639.4L1053.0 638.3L1053.0 641.7L1043.6 642.8z"/><path class="e" d="M1043.6 639.4L1053.0 638.3M1043.6 642.8L1053.0 641.7"/><path class="q" fill="#878783" stroke="#878783" d="M945.1 614.0L954.2 614.4L954.2 617.9L945.1 617.4z"/><path class="e" d="M945.1 614.0L954.2 614.4M945.1 617.4L954.2 617.9"/><path class="q" fill="#82827e" stroke="#82827e" d="M936.5 585.6L945.1 586.3L945.1 589.7L936.5 589.1z"/><path class="e" d="M936.5 585.6L945.1 586.3M936.5 589.1L945.1 589.7"/><path class="q" fill="#9a9a94" stroke="#9a9a94" d="M1029.5 567.5L1037.8 566.6L1037.8 571.3L1029.5 572.1z"/><path class="e" d="M1029.5 567.5L1037.8 566.6M1029.5 572.1L1037.8 571.3"/><path class="q" fill="#9b988e" stroke="#9b988e" d="M986.2 629.8L994.9 629.6L993.4 642.5L983.3 642.6z"/><path class="e" d="M986.2 629.8L994.9 629.6M983.3 642.6L993.4 642.5"/><path class="q" fill="#85837a" stroke="#85837a" d="M1061.0 512.5L1067.9 511.1L1078.8 523.3L1070.7 524.8z"/><path class="e" d="M1061.0 512.5L1067.9 511.1M1070.7 524.8L1078.8 523.3"/><path class="q" fill="#94948f" stroke="#94948f" d="M973.3 670.3L983.3 670.3L983.3 673.8L973.3 673.8z"/><path class="e" d="M973.3 670.3L983.3 670.3M973.3 673.8L983.3 673.8"/><path class="q" fill="#8b887f" stroke="#8b887f" d="M1053.6 541.4L1061.0 540.2L1070.7 552.5L1062.1 553.9z"/><path class="e" d="M1053.6 541.4L1061.0 540.2M1062.1 553.9L1070.7 552.5"/><path class="q" fill="#9d9a8f" stroke="#9d9a8f" d="M1012.3 628.8L1021.0 628.2L1023.9 641.1L1013.8 641.7z"/><path class="e" d="M1012.3 628.8L1021.0 628.2M1013.8 641.7L1023.9 641.1"/><path class="q" fill="#82827d" stroke="#82827d" d="M1070.7 552.5L1078.8 551.0L1078.8 554.5L1070.7 556.0z"/><path class="e" d="M1070.7 552.5L1078.8 551.0M1070.7 556.0L1078.8 554.5"/><path class="q" fill="#494743" stroke="#494743" d="M954.2 590.2L963.6 590.5L969.4 597.4L961.3 597.2z"/><path class="e" d="M954.2 590.2L963.6 590.5M961.3 597.2L969.4 597.4"/><path class="q" fill="#989892" stroke="#989892" d="M1023.9 668.8L1033.9 668.0L1033.9 671.5L1023.9 672.3z"/><path class="e" d="M1023.9 668.8L1033.9 668.0M1023.9 672.3L1033.9 671.5"/><path class="q" fill="#8d8d88" stroke="#8d8d88" d="M1053.0 610.6L1062.1 609.3L1062.1 612.8L1053.0 614.0z"/><path class="e" d="M1053.0 610.6L1062.1 609.3M1053.0 614.0L1062.1 612.8"/><path class="q" fill="#4c4b47" stroke="#4c4b47" d="M1068.3 502.4L1075.6 501.2L1067.9 506.5L1061.0 507.9z"/><path class="e" d="M1068.3 502.4L1075.6 501.2M1061.0 507.9L1067.9 506.5"/><path class="q" fill="#888883" stroke="#888883" d="M1062.1 581.6L1070.7 580.2L1070.7 583.7L1062.1 585.1z"/><path class="e" d="M1062.1 581.6L1070.7 580.2M1062.1 585.1L1070.7 583.7"/><path class="q" fill="#9d9a8f" stroke="#9d9a8f" d="M994.9 629.6L1003.6 629.3L1003.6 642.2L993.4 642.5z"/><path class="e" d="M994.9 629.6L1003.6 629.3M993.4 642.5L1003.6 642.2"/><path class="q" fill="#9e9b91" stroke="#9e9b91" d="M1003.6 629.3L1012.3 628.8L1013.8 641.7L1003.6 642.2z"/><path class="e" d="M1003.6 629.3L1012.3 628.8M1003.6 642.2L1013.8 641.7"/><path class="q" fill="#959289" stroke="#959289" d="M969.4 602.0L977.7 602.1L973.3 614.9L963.6 614.8z"/><path class="e" d="M969.4 602.0L977.7 602.1M963.6 614.8L973.3 614.9"/><path class="q" fill="#4b4a46" stroke="#4b4a46" d="M973.3 618.4L983.3 618.4L986.2 625.2L977.7 625.2z"/><path class="e" d="M973.3 618.4L983.3 618.4M977.7 625.2L986.2 625.2"/><path class="q" fill="#4b4a46" stroke="#4b4a46" d="M1043.6 587.4L1053.0 586.3L1045.9 593.3L1037.8 594.3z"/><path class="e" d="M1043.6 587.4L1053.0 586.3M1037.8 594.3L1045.9 593.3"/><path class="q" fill="#4d4b47" stroke="#4d4b47" d="M1023.9 616.9L1033.9 616.1L1029.5 622.9L1021.0 623.6z"/><path class="e" d="M1023.9 616.9L1033.9 616.1M1021.0 623.6L1029.5 622.9"/><path class="q" fill="#9a978d" stroke="#9a978d" d="M1029.5 599.8L1037.8 599.0L1043.6 611.7L1033.9 612.6z"/><path class="e" d="M1029.5 599.8L1037.8 599.0M1033.9 612.6L1043.6 611.7"/><path class="q" fill="#494844" stroke="#494844" d="M945.1 562.0L954.2 562.5L961.3 569.5L953.6 569.1z"/><path class="e" d="M945.1 562.0L954.2 562.5M953.6 569.1L961.3 569.5"/><path class="q" fill="#8e8e89" stroke="#8e8e89" d="M961.3 541.8L969.4 542.0L969.4 546.6L961.3 546.4z"/><path class="e" d="M961.3 541.8L969.4 542.0M961.3 546.4L969.4 546.6"/><path class="q" fill="#4b4945" stroke="#4b4945" d="M928.4 505.2L936.5 506.0L946.2 513.3L939.3 512.7z"/><path class="e" d="M928.4 505.2L936.5 506.0M939.3 512.7L946.2 513.3"/><path class="q" fill="#979792" stroke="#979792" d="M977.7 569.8L986.2 569.8L986.2 574.4L977.7 574.4z"/><path class="e" d="M977.7 569.8L986.2 569.8M977.7 574.4L986.2 574.4"/><path class="q" fill="#969691" stroke="#969691" d="M983.3 670.3L993.4 670.2L993.4 673.7L983.3 673.8z"/><path class="e" d="M983.3 670.3L993.4 670.2M983.3 673.8L993.4 673.7"/><path class="q" fill="#494844" stroke="#494844" d="M936.5 533.7L945.1 534.3L953.6 541.4L946.2 541.0z"/><path class="e" d="M936.5 533.7L945.1 534.3M946.2 541.0L953.6 541.4"/><path class="q" fill="#9b9b96" stroke="#9b9b96" d="M1021.0 568.2L1029.5 567.5L1029.5 572.1L1021.0 572.8z"/><path class="e" d="M1021.0 568.2L1029.5 567.5M1021.0 572.8L1029.5 572.1"/><path class="q" fill="#999994" stroke="#999994" d="M1013.8 669.4L1023.9 668.8L1023.9 672.3L1013.8 672.9z"/><path class="e" d="M1013.8 669.4L1023.9 668.8M1013.8 672.9L1023.9 672.3"/><path class="q" fill="#94948f" stroke="#94948f" d="M1037.8 538.9L1045.9 537.9L1045.9 542.6L1037.8 543.6z"/><path class="e" d="M1037.8 538.9L1045.9 537.9M1037.8 543.6L1045.9 542.6"/><path class="q" fill="#4b4a45" stroke="#4b4a45" d="M1053.0 558.6L1062.1 557.4L1053.6 564.5L1045.9 565.6z"/><path class="e" d="M1053.0 558.6L1062.1 557.4M1045.9 565.6L1053.6 564.5"/><path class="q" fill="#90908b" stroke="#90908b" d="M963.6 642.5L973.3 642.6L973.3 646.1L963.6 645.9z"/><path class="e" d="M963.6 642.5L973.3 642.6M963.6 645.9L973.3 646.1"/><path class="q" fill="#4c4b46" stroke="#4c4b46" d="M983.3 618.4L993.4 618.3L994.9 625.0L986.2 625.2z"/><path class="e" d="M983.3 618.4L993.4 618.3M986.2 625.2L994.9 625.0"/><path class="q" fill="#928f85" stroke="#928f85" d="M961.3 574.1L969.4 574.3L963.6 587.1L954.2 586.7z"/><path class="e" d="M961.3 574.1L969.4 574.3M954.2 586.7L963.6 587.1"/><path class="q" fill="#4b4a46" stroke="#4b4a46" d="M1062.1 529.7L1070.7 528.3L1061.0 535.6L1053.6 536.8z"/><path class="e" d="M1062.1 529.7L1070.7 528.3M1053.6 536.8L1061.0 535.6"/><path class="q" fill="#989893" stroke="#989893" d="M993.4 670.2L1003.6 669.9L1003.6 673.4L993.4 673.7z"/><path class="e" d="M993.4 670.2L1003.6 669.9M993.4 673.7L1003.6 673.4"/><path class="q" fill="#4d4c48" stroke="#4d4c48" d="M1013.8 617.5L1023.9 616.9L1021.0 623.6L1012.3 624.2z"/><path class="e" d="M1013.8 617.5L1023.9 616.9M1012.3 624.2L1021.0 623.6"/><path class="q" fill="#9a9a95" stroke="#9a9a95" d="M1003.6 669.9L1013.8 669.4L1013.8 672.9L1003.6 673.4z"/><path class="e" d="M1003.6 669.9L1013.8 669.4M1003.6 673.4L1013.8 672.9"/><path class="q" fill="#777773" stroke="#777773" d="M920.9 500.9L928.4 501.9L928.4 505.2L920.9 504.4z"/><path class="e" d="M920.9 500.9L928.4 501.9M920.9 504.4L928.4 505.2"/><path class="q" fill="#8a8a85" stroke="#8a8a85" d="M953.6 513.7L961.3 514.1L961.3 518.7L953.6 518.4z"/><path class="e" d="M953.6 513.7L961.3 514.1M953.6 518.4L961.3 518.7"/><path class="q" fill="#979791" stroke="#979791" d="M1033.9 640.3L1043.6 639.4L1043.6 642.8L1033.9 643.8z"/><path class="e" d="M1033.9 640.3L1043.6 639.4M1033.9 643.8L1043.6 642.8"/><path class="q" fill="#807e75" stroke="#807e75" d="M921.2 500.6L925.4 501.5L925.4 501.5L920.9 500.9z"/><path class="e" d="M921.2 500.6L925.4 501.5M920.9 500.9L925.4 501.5"/><path class="q" fill="#999994" stroke="#999994" d="M986.2 569.8L994.9 569.6L994.9 574.2L986.2 574.4z"/><path class="e" d="M986.2 569.8L994.9 569.6M986.2 574.4L994.9 574.2"/><path class="q" fill="#99968c" stroke="#99968c" d="M977.7 602.1L986.2 602.1L983.3 614.9L973.3 614.9z"/><path class="e" d="M977.7 602.1L986.2 602.1M973.3 614.9L983.3 614.9"/><path class="q" fill="#959288" stroke="#959288" d="M1037.8 571.3L1045.9 570.3L1053.0 582.9L1043.6 584.0z"/><path class="e" d="M1037.8 571.3L1045.9 570.3M1043.6 584.0L1053.0 582.9"/><path class="q" fill="#9c9c97" stroke="#9c9c97" d="M1012.3 568.8L1021.0 568.2L1021.0 572.8L1012.3 573.4z"/><path class="e" d="M1012.3 568.8L1021.0 568.2M1012.3 573.4L1021.0 572.8"/><path class="q" fill="#4d4c47" stroke="#4d4c47" d="M993.4 618.3L1003.6 618.0L1003.6 624.7L994.9 625.0z"/><path class="e" d="M993.4 618.3L1003.6 618.0M994.9 625.0L1003.6 624.7"/><path class="q" fill="#4e4c48" stroke="#4e4c48" d="M1003.6 618.0L1013.8 617.5L1012.3 624.2L1003.6 624.7z"/><path class="e" d="M1003.6 618.0L1013.8 617.5M1003.6 624.7L1012.3 624.2"/><path class="q" fill="#494844" stroke="#494844" d="M963.6 590.5L973.3 590.7L977.7 597.5L969.4 597.4z"/><path class="e" d="M963.6 590.5L973.3 590.7M969.4 597.4L977.7 597.5"/><path class="q" fill="#9b988e" stroke="#9b988e" d="M1021.0 600.5L1029.5 599.8L1033.9 612.6L1023.9 613.4z"/><path class="e" d="M1021.0 600.5L1029.5 599.8M1023.9 613.4L1033.9 612.6"/><path class="q" fill="#8f8f8a" stroke="#8f8f8a" d="M1045.9 510.2L1053.6 509.1L1053.6 513.7L1045.9 514.9z"/><path class="e" d="M1045.9 510.2L1053.6 509.1M1045.9 514.9L1053.6 513.7"/><path class="q" fill="#8e8b82" stroke="#8e8b82" d="M953.6 546.1L961.3 546.4L954.2 559.0L945.1 558.6z"/><path class="e" d="M953.6 546.1L961.3 546.4M945.1 558.6L954.2 559.0"/><path class="q" fill="#9c9c96" stroke="#9c9c96" d="M994.9 569.6L1003.6 569.3L1003.6 573.9L994.9 574.2z"/><path class="e" d="M994.9 569.6L1003.6 569.3M994.9 574.2L1003.6 573.9"/><path class="q" fill="#4c4b47" stroke="#4c4b47" d="M1033.9 588.4L1043.6 587.4L1037.8 594.3L1029.5 595.2z"/><path class="e" d="M1033.9 588.4L1043.6 587.4M1029.5 595.2L1037.8 594.3"/><path class="q" fill="#8b8b86" stroke="#8b8b86" d="M954.2 614.4L963.6 614.8L963.6 618.2L954.2 617.9z"/><path class="e" d="M954.2 614.4L963.6 614.8M954.2 617.9L963.6 618.2"/><path class="q" fill="#9e9e98" stroke="#9e9e98" d="M1003.6 569.3L1012.3 568.8L1012.3 573.4L1003.6 573.9z"/><path class="e" d="M1003.6 569.3L1012.3 568.8M1003.6 573.9L1012.3 573.4"/><path class="q" fill="#7d7d78" stroke="#7d7d78" d="M928.4 529.5L936.5 530.2L936.5 533.7L928.4 532.9z"/><path class="e" d="M928.4 529.5L936.5 530.2M928.4 532.9L936.5 533.7"/><path class="q" fill="#8a877e" stroke="#8a877e" d="M946.2 517.9L953.6 518.4L945.1 530.9L936.5 530.2z"/><path class="e" d="M946.2 517.9L953.6 518.4M936.5 530.2L945.1 530.9"/><path class="q" fill="#92928d" stroke="#92928d" d="M969.4 542.0L977.7 542.1L977.7 546.7L969.4 546.6z"/><path class="e" d="M969.4 542.0L977.7 542.1M969.4 546.6L977.7 546.7"/><path class="q" fill="#908d83" stroke="#908d83" d="M1045.9 542.6L1053.6 541.4L1062.1 553.9L1053.0 555.2z"/><path class="e" d="M1045.9 542.6L1053.6 541.4M1053.0 555.2L1062.1 553.9"/><path class="q" fill="#91918c" stroke="#91918c" d="M1043.6 611.7L1053.0 610.6L1053.0 614.0L1043.6 615.1z"/><path class="e" d="M1043.6 611.7L1053.0 610.6M1043.6 615.1L1053.0 614.0"/><path class="q" fill="#878783" stroke="#878783" d="M945.1 586.3L954.2 586.7L954.2 590.2L945.1 589.7z"/><path class="e" d="M945.1 586.3L954.2 586.7M945.1 589.7L954.2 590.2"/><path class="q" fill="#82827e" stroke="#82827e" d="M936.5 557.9L945.1 558.6L945.1 562.0L936.5 561.4z"/><path class="e" d="M936.5 557.9L945.1 558.6M936.5 561.4L945.1 562.0"/><path class="q" fill="#9a9a94" stroke="#9a9a94" d="M1029.5 539.8L1037.8 538.9L1037.8 543.6L1029.5 544.4z"/><path class="e" d="M1029.5 539.8L1037.8 538.9M1029.5 544.4L1037.8 543.6"/><path class="q" fill="#9b988e" stroke="#9b988e" d="M986.2 602.1L994.9 601.9L993.4 614.8L983.3 614.9z"/><path class="e" d="M986.2 602.1L994.9 601.9M983.3 614.9L993.4 614.8"/><path class="q" fill="#94948f" stroke="#94948f" d="M973.3 642.6L983.3 642.6L983.3 646.1L973.3 646.1z"/><path class="e" d="M973.3 642.6L983.3 642.6M973.3 646.1L983.3 646.1"/><path class="q" fill="#8b887f" stroke="#8b887f" d="M1053.6 513.7L1061.0 512.5L1070.7 524.8L1062.1 526.2z"/><path class="e" d="M1053.6 513.7L1061.0 512.5M1062.1 526.2L1070.7 524.8"/><path class="q" fill="#9d9a8f" stroke="#9d9a8f" d="M1012.3 601.1L1021.0 600.5L1023.9 613.4L1013.8 614.0z"/><path class="e" d="M1012.3 601.1L1021.0 600.5M1013.8 614.0L1023.9 613.4"/><path class="q" fill="#82827d" stroke="#82827d" d="M1070.7 524.8L1078.8 523.3L1078.8 526.8L1070.7 528.3z"/><path class="e" d="M1070.7 524.8L1078.8 523.3M1070.7 528.3L1078.8 526.8"/><path class="q" fill="#494743" stroke="#494743" d="M954.2 562.5L963.6 562.8L969.4 569.7L961.3 569.5z"/><path class="e" d="M954.2 562.5L963.6 562.8M961.3 569.5L969.4 569.7"/><path class="q" fill="#989892" stroke="#989892" d="M1023.9 641.1L1033.9 640.3L1033.9 643.8L1023.9 644.6z"/><path class="e" d="M1023.9 641.1L1033.9 640.3M1023.9 644.6L1033.9 643.8"/><path class="q" fill="#8d8d88" stroke="#8d8d88" d="M1053.0 582.9L1062.1 581.6L1062.1 585.1L1053.0 586.3z"/><path class="e" d="M1053.0 582.9L1062.1 581.6M1053.0 586.3L1062.1 585.1"/><path class="q" fill="#888883" stroke="#888883" d="M1062.1 553.9L1070.7 552.5L1070.7 556.0L1062.1 557.4z"/><path class="e" d="M1062.1 553.9L1070.7 552.5M1062.1 557.4L1070.7 556.0"/><path class="q" fill="#9d9a8f" stroke="#9d9a8f" d="M994.9 601.9L1003.6 601.6L1003.6 614.5L993.4 614.8z"/><path class="e" d="M994.9 601.9L1003.6 601.6M993.4 614.8L1003.6 614.5"/><path class="q" fill="#9e9b91" stroke="#9e9b91" d="M1003.6 601.6L1012.3 601.1L1013.8 614.0L1003.6 614.5z"/><path class="e" d="M1003.6 601.6L1012.3 601.1M1003.6 614.5L1013.8 614.0"/><path class="q" fill="#959289" stroke="#959289" d="M969.4 574.3L977.7 574.4L973.3 587.2L963.6 587.1z"/><path class="e" d="M969.4 574.3L977.7 574.4M963.6 587.1L973.3 587.2"/><path class="q" fill="#4b4a46" stroke="#4b4a46" d="M973.3 590.7L983.3 590.7L986.2 597.5L977.7 597.5z"/><path class="e" d="M973.3 590.7L983.3 590.7M977.7 597.5L986.2 597.5"/><path class="q" fill="#4b4a46" stroke="#4b4a46" d="M1060.3 503.5L1068.3 502.4L1061.0 507.9L1053.6 509.1z"/><path class="e" d="M1060.3 503.5L1068.3 502.4M1053.6 509.1L1061.0 507.9"/><path class="q" fill="#4b4a46" stroke="#4b4a46" d="M1043.6 559.7L1053.0 558.6L1045.9 565.6L1037.8 566.6z"/><path class="e" d="M1043.6 559.7L1053.0 558.6M1037.8 566.6L1045.9 565.6"/><path class="q" fill="#4d4b47" stroke="#4d4b47" d="M1023.9 589.2L1033.9 588.4L1029.5 595.2L1021.0 595.9z"/><path class="e" d="M1023.9 589.2L1033.9 588.4M1021.0 595.9L1029.5 595.2"/><path class="q" fill="#9a978d" stroke="#9a978d" d="M1029.5 572.1L1037.8 571.3L1043.6 584.0L1033.9 584.9z"/><path class="e" d="M1029.5 572.1L1037.8 571.3M1033.9 584.9L1043.6 584.0"/><path class="q" fill="#494844" stroke="#494844" d="M945.1 534.3L954.2 534.8L961.3 541.8L953.6 541.4z"/><path class="e" d="M945.1 534.3L954.2 534.8M953.6 541.4L961.3 541.8"/><path class="q" fill="#8e8e89" stroke="#8e8e89" d="M961.3 514.1L969.4 514.3L969.4 518.9L961.3 518.7z"/><path class="e" d="M961.3 514.1L969.4 514.3M961.3 518.7L969.4 518.9"/><path class="q" fill="#979792" stroke="#979792" d="M977.7 542.1L986.2 542.1L986.2 546.7L977.7 546.7z"/><path class="e" d="M977.7 542.1L986.2 542.1M977.7 546.7L986.2 546.7"/><path class="q" fill="#969691" stroke="#969691" d="M983.3 642.6L993.4 642.5L993.4 646.0L983.3 646.1z"/><path class="e" d="M983.3 642.6L993.4 642.5M983.3 646.1L993.4 646.0"/><path class="q" fill="#494844" stroke="#494844" d="M936.5 506.0L945.1 506.6L953.6 513.7L946.2 513.3z"/><path class="e" d="M936.5 506.0L945.1 506.6M946.2 513.3L953.6 513.7"/><path class="q" fill="#9b9b96" stroke="#9b9b96" d="M1021.0 540.5L1029.5 539.8L1029.5 544.4L1021.0 545.1z"/><path class="e" d="M1021.0 540.5L1029.5 539.8M1021.0 545.1L1029.5 544.4"/><path class="q" fill="#999994" stroke="#999994" d="M1013.8 641.7L1023.9 641.1L1023.9 644.6L1013.8 645.2z"/><path class="e" d="M1013.8 641.7L1023.9 641.1M1013.8 645.2L1023.9 644.6"/><path class="q" fill="#94948f" stroke="#94948f" d="M1037.8 511.2L1045.9 510.2L1045.9 514.9L1037.8 515.9z"/><path class="e" d="M1037.8 511.2L1045.9 510.2M1037.8 515.9L1045.9 514.9"/><path class="q" fill="#4b4a45" stroke="#4b4a45" d="M1053.0 530.9L1062.1 529.7L1053.6 536.8L1045.9 537.9z"/><path class="e" d="M1053.0 530.9L1062.1 529.7M1045.9 537.9L1053.6 536.8"/><path class="q" fill="#90908b" stroke="#90908b" d="M963.6 614.8L973.3 614.9L973.3 618.4L963.6 618.2z"/><path class="e" d="M963.6 614.8L973.3 614.9M963.6 618.2L973.3 618.4"/><path class="q" fill="#4c4b46" stroke="#4c4b46" d="M983.3 590.7L993.4 590.6L994.9 597.3L986.2 597.5z"/><path class="e" d="M983.3 590.7L993.4 590.6M986.2 597.5L994.9 597.3"/><path class="q" fill="#928f85" stroke="#928f85" d="M961.3 546.4L969.4 546.6L963.6 559.4L954.2 559.0z"/><path class="e" d="M961.3 546.4L969.4 546.6M954.2 559.0L963.6 559.4"/><path class="q" fill="#989893" stroke="#989893" d="M993.4 642.5L1003.6 642.2L1003.6 645.7L993.4 646.0z"/><path class="e" d="M993.4 642.5L1003.6 642.2M993.4 646.0L1003.6 645.7"/><path class="q" fill="#4d4c48" stroke="#4d4c48" d="M1013.8 589.8L1023.9 589.2L1021.0 595.9L1012.3 596.5z"/><path class="e" d="M1013.8 589.8L1023.9 589.2M1012.3 596.5L1021.0 595.9"/><path class="q" fill="#9a9a95" stroke="#9a9a95" d="M1003.6 642.2L1013.8 641.7L1013.8 645.2L1003.6 645.7z"/><path class="e" d="M1003.6 642.2L1013.8 641.7M1003.6 645.7L1013.8 645.2"/><path class="q" fill="#979791" stroke="#979791" d="M1033.9 612.6L1043.6 611.7L1043.6 615.1L1033.9 616.1z"/><path class="e" d="M1033.9 612.6L1043.6 611.7M1033.9 616.1L1043.6 615.1"/><path class="q" fill="#999994" stroke="#999994" d="M986.2 542.1L994.9 541.9L994.9 546.5L986.2 546.7z"/><path class="e" d="M986.2 542.1L994.9 541.9M986.2 546.7L994.9 546.5"/><path class="q" fill="#99968c" stroke="#99968c" d="M977.7 574.4L986.2 574.4L983.3 587.2L973.3 587.2z"/><path class="e" d="M977.7 574.4L986.2 574.4M973.3 587.2L983.3 587.2"/><path class="q" fill="#959288" stroke="#959288" d="M1037.8 543.6L1045.9 542.6L1053.0 555.2L1043.6 556.3z"/><path class="e" d="M1037.8 543.6L1045.9 542.6M1043.6 556.3L1053.0 555.2"/><path class="q" fill="#9c9c97" stroke="#9c9c97" d="M1012.3 541.1L1021.0 540.5L1021.0 545.1L1012.3 545.7z"/><path class="e" d="M1012.3 541.1L1021.0 540.5M1012.3 545.7L1021.0 545.1"/><path class="q" fill="#4d4c47" stroke="#4d4c47" d="M993.4 590.6L1003.6 590.3L1003.6 597.0L994.9 597.3z"/><path class="e" d="M993.4 590.6L1003.6 590.3M994.9 597.3L1003.6 597.0"/><path class="q" fill="#4e4c48" stroke="#4e4c48" d="M1003.6 590.3L1013.8 589.8L1012.3 596.5L1003.6 597.0z"/><path class="e" d="M1003.6 590.3L1013.8 589.8M1003.6 597.0L1012.3 596.5"/><path class="q" fill="#494844" stroke="#494844" d="M963.6 562.8L973.3 563.0L977.7 569.8L969.4 569.7z"/><path class="e" d="M963.6 562.8L973.3 563.0M969.4 569.7L977.7 569.8"/><path class="q" fill="#9b988e" stroke="#9b988e" d="M1021.0 572.8L1029.5 572.1L1033.9 584.9L1023.9 585.7z"/><path class="e" d="M1021.0 572.8L1029.5 572.1M1023.9 585.7L1033.9 584.9"/><path class="q" fill="#8e8b82" stroke="#8e8b82" d="M953.6 518.4L961.3 518.7L954.2 531.3L945.1 530.9z"/><path class="e" d="M953.6 518.4L961.3 518.7M945.1 530.9L954.2 531.3"/><path class="q" fill="#9c9c96" stroke="#9c9c96" d="M994.9 541.9L1003.6 541.6L1003.6 546.2L994.9 546.5z"/><path class="e" d="M994.9 541.9L1003.6 541.6M994.9 546.5L1003.6 546.2"/><path class="q" fill="#4c4b47" stroke="#4c4b47" d="M1033.9 560.7L1043.6 559.7L1037.8 566.6L1029.5 567.5z"/><path class="e" d="M1033.9 560.7L1043.6 559.7M1029.5 567.5L1037.8 566.6"/><path class="q" fill="#8b8b86" stroke="#8b8b86" d="M954.2 586.7L963.6 587.1L963.6 590.5L954.2 590.2z"/><path class="e" d="M954.2 586.7L963.6 587.1M954.2 590.2L963.6 590.5"/><path class="q" fill="#9e9e98" stroke="#9e9e98" d="M1003.6 541.6L1012.3 541.1L1012.3 545.7L1003.6 546.2z"/><path class="e" d="M1003.6 541.6L1012.3 541.1M1003.6 546.2L1012.3 545.7"/><path class="q" fill="#7d7d78" stroke="#7d7d78" d="M928.4 501.9L936.5 503.1L936.5 506.0L928.4 505.2z"/><path class="e" d="M928.4 501.9L936.5 503.1M928.4 505.2L936.5 506.0"/><path class="q" fill="#92928d" stroke="#92928d" d="M969.4 514.3L977.7 514.4L977.7 519.0L969.4 518.9z"/><path class="e" d="M969.4 514.3L977.7 514.4M969.4 518.9L977.7 519.0"/><path class="q" fill="#908d83" stroke="#908d83" d="M1045.9 514.9L1053.6 513.7L1062.1 526.2L1053.0 527.5z"/><path class="e" d="M1045.9 514.9L1053.6 513.7M1053.0 527.5L1062.1 526.2"/><path class="q" fill="#91918c" stroke="#91918c" d="M1043.6 584.0L1053.0 582.9L1053.0 586.3L1043.6 587.4z"/><path class="e" d="M1043.6 584.0L1053.0 582.9M1043.6 587.4L1053.0 586.3"/><path class="q" fill="#878783" stroke="#878783" d="M945.1 558.6L954.2 559.0L954.2 562.5L945.1 562.0z"/><path class="e" d="M945.1 558.6L954.2 559.0M945.1 562.0L954.2 562.5"/><path class="q" fill="#82827e" stroke="#82827e" d="M936.5 530.2L945.1 530.9L945.1 534.3L936.5 533.7z"/><path class="e" d="M936.5 530.2L945.1 530.9M936.5 533.7L945.1 534.3"/><path class="q" fill="#9a9a94" stroke="#9a9a94" d="M1029.5 512.1L1037.8 511.2L1037.8 515.9L1029.5 516.7z"/><path class="e" d="M1029.5 512.1L1037.8 511.2M1029.5 516.7L1037.8 515.9"/><path class="q" fill="#9b988e" stroke="#9b988e" d="M986.2 574.4L994.9 574.2L993.4 587.1L983.3 587.2z"/><path class="e" d="M986.2 574.4L994.9 574.2M983.3 587.2L993.4 587.1"/><path class="q" fill="#94948f" stroke="#94948f" d="M973.3 614.9L983.3 614.9L983.3 618.4L973.3 618.4z"/><path class="e" d="M973.3 614.9L983.3 614.9M973.3 618.4L983.3 618.4"/><path class="q" fill="#9d9a8f" stroke="#9d9a8f" d="M1012.3 573.4L1021.0 572.8L1023.9 585.7L1013.8 586.3z"/><path class="e" d="M1012.3 573.4L1021.0 572.8M1013.8 586.3L1023.9 585.7"/><path class="q" fill="#494743" stroke="#494743" d="M954.2 534.8L963.6 535.1L969.4 542.0L961.3 541.8z"/><path class="e" d="M954.2 534.8L963.6 535.1M961.3 541.8L969.4 542.0"/><path class="q" fill="#989892" stroke="#989892" d="M1023.9 613.4L1033.9 612.6L1033.9 616.1L1023.9 616.9z"/><path class="e" d="M1023.9 613.4L1033.9 612.6M1023.9 616.9L1033.9 616.1"/><path class="q" fill="#8d8d88" stroke="#8d8d88" d="M1053.0 555.2L1062.1 553.9L1062.1 557.4L1053.0 558.6z"/><path class="e" d="M1053.0 555.2L1062.1 553.9M1053.0 558.6L1062.1 557.4"/><path class="q" fill="#4b4a45" stroke="#4b4a45" d="M1051.8 504.4L1060.3 503.5L1053.6 509.1L1045.9 510.2z"/><path class="e" d="M1051.8 504.4L1060.3 503.5M1045.9 510.2L1053.6 509.1"/><path class="q" fill="#888883" stroke="#888883" d="M1062.1 526.2L1070.7 524.8L1070.7 528.3L1062.1 529.7z"/><path class="e" d="M1062.1 526.2L1070.7 524.8M1062.1 529.7L1070.7 528.3"/><path class="q" fill="#9d9a8f" stroke="#9d9a8f" d="M994.9 574.2L1003.6 573.9L1003.6 586.8L993.4 587.1z"/><path class="e" d="M994.9 574.2L1003.6 573.9M993.4 587.1L1003.6 586.8"/><path class="q" fill="#9e9b91" stroke="#9e9b91" d="M1003.6 573.9L1012.3 573.4L1013.8 586.3L1003.6 586.8z"/><path class="e" d="M1003.6 573.9L1012.3 573.4M1003.6 586.8L1013.8 586.3"/><path class="q" fill="#959289" stroke="#959289" d="M969.4 546.6L977.7 546.7L973.3 559.5L963.6 559.4z"/><path class="e" d="M969.4 546.6L977.7 546.7M963.6 559.4L973.3 559.5"/><path class="q" fill="#4b4a46" stroke="#4b4a46" d="M973.3 563.0L983.3 563.0L986.2 569.8L977.7 569.8z"/><path class="e" d="M973.3 563.0L983.3 563.0M977.7 569.8L986.2 569.8"/><path class="q" fill="#4b4a46" stroke="#4b4a46" d="M1043.6 532.0L1053.0 530.9L1045.9 537.9L1037.8 538.9z"/><path class="e" d="M1043.6 532.0L1053.0 530.9M1037.8 538.9L1045.9 537.9"/><path class="q" fill="#4d4b47" stroke="#4d4b47" d="M1023.9 561.5L1033.9 560.7L1029.5 567.5L1021.0 568.2z"/><path class="e" d="M1023.9 561.5L1033.9 560.7M1021.0 568.2L1029.5 567.5"/><path class="q" fill="#9a978d" stroke="#9a978d" d="M1029.5 544.4L1037.8 543.6L1043.6 556.3L1033.9 557.2z"/><path class="e" d="M1029.5 544.4L1037.8 543.6M1033.9 557.2L1043.6 556.3"/><path class="q" fill="#494844" stroke="#494844" d="M945.1 506.6L954.2 507.1L961.3 514.1L953.6 513.7z"/><path class="e" d="M945.1 506.6L954.2 507.1M953.6 513.7L961.3 514.1"/><path class="q" fill="#979792" stroke="#979792" d="M977.7 514.4L986.2 514.4L986.2 519.0L977.7 519.0z"/><path class="e" d="M977.7 514.4L986.2 514.4M977.7 519.0L986.2 519.0"/><path class="q" fill="#969691" stroke="#969691" d="M983.3 614.9L993.4 614.8L993.4 618.3L983.3 618.4z"/><path class="e" d="M983.3 614.9L993.4 614.8M983.3 618.4L993.4 618.3"/><path class="q" fill="#9b9b96" stroke="#9b9b96" d="M1021.0 512.8L1029.5 512.1L1029.5 516.7L1021.0 517.4z"/><path class="e" d="M1021.0 512.8L1029.5 512.1M1021.0 517.4L1029.5 516.7"/><path class="q" fill="#999994" stroke="#999994" d="M1013.8 614.0L1023.9 613.4L1023.9 616.9L1013.8 617.5z"/><path class="e" d="M1013.8 614.0L1023.9 613.4M1013.8 617.5L1023.9 616.9"/><path class="q" fill="#90908b" stroke="#90908b" d="M963.6 587.1L973.3 587.2L973.3 590.7L963.6 590.5z"/><path class="e" d="M963.6 587.1L973.3 587.2M963.6 590.5L973.3 590.7"/><path class="q" fill="#4c4b46" stroke="#4c4b46" d="M983.3 563.0L993.4 562.9L994.9 569.6L986.2 569.8z"/><path class="e" d="M983.3 563.0L993.4 562.9M986.2 569.8L994.9 569.6"/><path class="q" fill="#928f85" stroke="#928f85" d="M961.3 518.7L969.4 518.9L963.6 531.7L954.2 531.3z"/><path class="e" d="M961.3 518.7L969.4 518.9M954.2 531.3L963.6 531.7"/><path class="q" fill="#989893" stroke="#989893" d="M993.4 614.8L1003.6 614.5L1003.6 618.0L993.4 618.3z"/><path class="e" d="M993.4 614.8L1003.6 614.5M993.4 618.3L1003.6 618.0"/><path class="q" fill="#4d4c48" stroke="#4d4c48" d="M1013.8 562.1L1023.9 561.5L1021.0 568.2L1012.3 568.8z"/><path class="e" d="M1013.8 562.1L1023.9 561.5M1012.3 568.8L1021.0 568.2"/><path class="q" fill="#9a9a95" stroke="#9a9a95" d="M1003.6 614.5L1013.8 614.0L1013.8 617.5L1003.6 618.0z"/><path class="e" d="M1003.6 614.5L1013.8 614.0M1003.6 618.0L1013.8 617.5"/><path class="q" fill="#979791" stroke="#979791" d="M1033.9 584.9L1043.6 584.0L1043.6 587.4L1033.9 588.4z"/><path class="e" d="M1033.9 584.9L1043.6 584.0M1033.9 588.4L1043.6 587.4"/><path class="q" fill="#999994" stroke="#999994" d="M986.2 514.4L994.9 514.2L994.9 518.8L986.2 519.0z"/><path class="e" d="M986.2 514.4L994.9 514.2M986.2 519.0L994.9 518.8"/><path class="q" fill="#99968c" stroke="#99968c" d="M977.7 546.7L986.2 546.7L983.3 559.5L973.3 559.5z"/><path class="e" d="M977.7 546.7L986.2 546.7M973.3 559.5L983.3 559.5"/><path class="q" fill="#959288" stroke="#959288" d="M1037.8 515.9L1045.9 514.9L1053.0 527.5L1043.6 528.6z"/><path class="e" d="M1037.8 515.9L1045.9 514.9M1043.6 528.6L1053.0 527.5"/><path class="q" fill="#9c9c97" stroke="#9c9c97" d="M1012.3 513.4L1021.0 512.8L1021.0 517.4L1012.3 518.0z"/><path class="e" d="M1012.3 513.4L1021.0 512.8M1012.3 518.0L1021.0 517.4"/><path class="q" fill="#4d4c47" stroke="#4d4c47" d="M993.4 562.9L1003.6 562.6L1003.6 569.3L994.9 569.6z"/><path class="e" d="M993.4 562.9L1003.6 562.6M994.9 569.6L1003.6 569.3"/><path class="q" fill="#4e4c48" stroke="#4e4c48" d="M1003.6 562.6L1013.8 562.1L1012.3 568.8L1003.6 569.3z"/><path class="e" d="M1003.6 562.6L1013.8 562.1M1003.6 569.3L1012.3 568.8"/><path class="q" fill="#494844" stroke="#494844" d="M963.6 535.1L973.3 535.3L977.7 542.1L969.4 542.0z"/><path class="e" d="M963.6 535.1L973.3 535.3M969.4 542.0L977.7 542.1"/><path class="q" fill="#9b988e" stroke="#9b988e" d="M1021.0 545.1L1029.5 544.4L1033.9 557.2L1023.9 558.0z"/><path class="e" d="M1021.0 545.1L1029.5 544.4M1023.9 558.0L1033.9 557.2"/><path class="q" fill="#9c9c96" stroke="#9c9c96" d="M994.9 514.2L1003.6 513.9L1003.6 518.5L994.9 518.8z"/><path class="e" d="M994.9 514.2L1003.6 513.9M994.9 518.8L1003.6 518.5"/><path class="q" fill="#4c4b47" stroke="#4c4b47" d="M1033.9 533.0L1043.6 532.0L1037.8 538.9L1029.5 539.8z"/><path class="e" d="M1033.9 533.0L1043.6 532.0M1029.5 539.8L1037.8 538.9"/><path class="q" fill="#8b8b86" stroke="#8b8b86" d="M954.2 559.0L963.6 559.4L963.6 562.8L954.2 562.5z"/><path class="e" d="M954.2 559.0L963.6 559.4M954.2 562.5L963.6 562.8"/><path class="q" fill="#9e9e98" stroke="#9e9e98" d="M1003.6 513.9L1012.3 513.4L1012.3 518.0L1003.6 518.5z"/><path class="e" d="M1003.6 513.9L1012.3 513.4M1003.6 518.5L1012.3 518.0"/><path class="q" fill="#91918c" stroke="#91918c" d="M1043.6 556.3L1053.0 555.2L1053.0 558.6L1043.6 559.7z"/><path class="e" d="M1043.6 556.3L1053.0 555.2M1043.6 559.7L1053.0 558.6"/><path class="q" fill="#4b4a46" stroke="#4b4a46" d="M1042.8 505.3L1051.8 504.4L1045.9 510.2L1037.8 511.2z"/><path class="e" d="M1042.8 505.3L1051.8 504.4M1037.8 511.2L1045.9 510.2"/><path class="q" fill="#82827e" stroke="#82827e" d="M936.5 503.1L945.1 504.1L945.1 506.6L936.5 506.0z"/><path class="e" d="M936.5 503.1L945.1 504.1M936.5 506.0L945.1 506.6"/><path class="q" fill="#878783" stroke="#878783" d="M945.1 530.9L954.2 531.3L954.2 534.8L945.1 534.3z"/><path class="e" d="M945.1 530.9L954.2 531.3M945.1 534.3L954.2 534.8"/><path class="q" fill="#9b988e" stroke="#9b988e" d="M986.2 546.7L994.9 546.5L993.4 559.4L983.3 559.5z"/><path class="e" d="M986.2 546.7L994.9 546.5M983.3 559.5L993.4 559.4"/><path class="q" fill="#94948f" stroke="#94948f" d="M973.3 587.2L983.3 587.2L983.3 590.7L973.3 590.7z"/><path class="e" d="M973.3 587.2L983.3 587.2M973.3 590.7L983.3 590.7"/><path class="q" fill="#9d9a8f" stroke="#9d9a8f" d="M1012.3 545.7L1021.0 545.1L1023.9 558.0L1013.8 558.6z"/><path class="e" d="M1012.3 545.7L1021.0 545.1M1013.8 558.6L1023.9 558.0"/><path class="q" fill="#494743" stroke="#494743" d="M954.2 507.1L963.6 507.4L969.4 514.3L961.3 514.1z"/><path class="e" d="M954.2 507.1L963.6 507.4M961.3 514.1L969.4 514.3"/><path class="q" fill="#989892" stroke="#989892" d="M1023.9 585.7L1033.9 584.9L1033.9 588.4L1023.9 589.2z"/><path class="e" d="M1023.9 585.7L1033.9 584.9M1023.9 589.2L1033.9 588.4"/><path class="q" fill="#8d8d88" stroke="#8d8d88" d="M1053.0 527.5L1062.1 526.2L1062.1 529.7L1053.0 530.9z"/><path class="e" d="M1053.0 527.5L1062.1 526.2M1053.0 530.9L1062.1 529.7"/><path class="q" fill="#9d9a8f" stroke="#9d9a8f" d="M994.9 546.5L1003.6 546.2L1003.6 559.1L993.4 559.4z"/><path class="e" d="M994.9 546.5L1003.6 546.2M993.4 559.4L1003.6 559.1"/><path class="q" fill="#9e9b91" stroke="#9e9b91" d="M1003.6 546.2L1012.3 545.7L1013.8 558.6L1003.6 559.1z"/><path class="e" d="M1003.6 546.2L1012.3 545.7M1003.6 559.1L1013.8 558.6"/><path class="q" fill="#959289" stroke="#959289" d="M969.4 518.9L977.7 519.0L973.3 531.8L963.6 531.7z"/><path class="e" d="M969.4 518.9L977.7 519.0M963.6 531.7L973.3 531.8"/><path class="q" fill="#4b4a46" stroke="#4b4a46" d="M973.3 535.3L983.3 535.3L986.2 542.1L977.7 542.1z"/><path class="e" d="M973.3 535.3L983.3 535.3M977.7 542.1L986.2 542.1"/><path class="q" fill="#4d4b47" stroke="#4d4b47" d="M1023.9 533.8L1033.9 533.0L1029.5 539.8L1021.0 540.5z"/><path class="e" d="M1023.9 533.8L1033.9 533.0M1021.0 540.5L1029.5 539.8"/><path class="q" fill="#9a978d" stroke="#9a978d" d="M1029.5 516.7L1037.8 515.9L1043.6 528.6L1033.9 529.5z"/><path class="e" d="M1029.5 516.7L1037.8 515.9M1033.9 529.5L1043.6 528.6"/><path class="q" fill="#969691" stroke="#969691" d="M983.3 587.2L993.4 587.1L993.4 590.6L983.3 590.7z"/><path class="e" d="M983.3 587.2L993.4 587.1M983.3 590.7L993.4 590.6"/><path class="q" fill="#999994" stroke="#999994" d="M1013.8 586.3L1023.9 585.7L1023.9 589.2L1013.8 589.8z"/><path class="e" d="M1013.8 586.3L1023.9 585.7M1013.8 589.8L1023.9 589.2"/><path class="q" fill="#90908b" stroke="#90908b" d="M963.6 559.4L973.3 559.5L973.3 563.0L963.6 562.8z"/><path class="e" d="M963.6 559.4L973.3 559.5M963.6 562.8L973.3 563.0"/><path class="q" fill="#4c4b46" stroke="#4c4b46" d="M983.3 535.3L993.4 535.2L994.9 541.9L986.2 542.1z"/><path class="e" d="M983.3 535.3L993.4 535.2M986.2 542.1L994.9 541.9"/><path class="q" fill="#989893" stroke="#989893" d="M993.4 587.1L1003.6 586.8L1003.6 590.3L993.4 590.6z"/><path class="e" d="M993.4 587.1L1003.6 586.8M993.4 590.6L1003.6 590.3"/><path class="q" fill="#4d4c48" stroke="#4d4c48" d="M1013.8 534.4L1023.9 533.8L1021.0 540.5L1012.3 541.1z"/><path class="e" d="M1013.8 534.4L1023.9 533.8M1012.3 541.1L1021.0 540.5"/><path class="q" fill="#9a9a95" stroke="#9a9a95" d="M1003.6 586.8L1013.8 586.3L1013.8 589.8L1003.6 590.3z"/><path class="e" d="M1003.6 586.8L1013.8 586.3M1003.6 590.3L1013.8 589.8"/><path class="q" fill="#979791" stroke="#979791" d="M1033.9 557.2L1043.6 556.3L1043.6 559.7L1033.9 560.7z"/><path class="e" d="M1033.9 557.2L1043.6 556.3M1033.9 560.7L1043.6 559.7"/><path class="q" fill="#4c4b47" stroke="#4c4b47" d="M1033.5 505.9L1042.8 505.3L1037.8 511.2L1029.5 512.1z"/><path class="e" d="M1033.5 505.9L1042.8 505.3M1029.5 512.1L1037.8 511.2"/><path class="q" fill="#99968c" stroke="#99968c" d="M977.7 519.0L986.2 519.0L983.3 531.8L973.3 531.8z"/><path class="e" d="M977.7 519.0L986.2 519.0M973.3 531.8L983.3 531.8"/><path class="q" fill="#4d4c47" stroke="#4d4c47" d="M993.4 535.2L1003.6 534.9L1003.6 541.6L994.9 541.9z"/><path class="e" d="M993.4 535.2L1003.6 534.9M994.9 541.9L1003.6 541.6"/><path class="q" fill="#4e4c48" stroke="#4e4c48" d="M1003.6 534.9L1013.8 534.4L1012.3 541.1L1003.6 541.6z"/><path class="e" d="M1003.6 534.9L1013.8 534.4M1003.6 541.6L1012.3 541.1"/><path class="q" fill="#494844" stroke="#494844" d="M963.6 507.4L973.3 507.6L977.7 514.4L969.4 514.3z"/><path class="e" d="M963.6 507.4L973.3 507.6M969.4 514.3L977.7 514.4"/><path class="q" fill="#9b988e" stroke="#9b988e" d="M1021.0 517.4L1029.5 516.7L1033.9 529.5L1023.9 530.3z"/><path class="e" d="M1021.0 517.4L1029.5 516.7M1023.9 530.3L1033.9 529.5"/><path class="q" fill="#8b8b86" stroke="#8b8b86" d="M954.2 531.3L963.6 531.7L963.6 535.1L954.2 534.8z"/><path class="e" d="M954.2 531.3L963.6 531.7M954.2 534.8L963.6 535.1"/><path class="q" fill="#91918c" stroke="#91918c" d="M1043.6 528.6L1053.0 527.5L1053.0 530.9L1043.6 532.0z"/><path class="e" d="M1043.6 528.6L1053.0 527.5M1043.6 532.0L1053.0 530.9"/><path class="q" fill="#878783" stroke="#878783" d="M945.1 504.1L954.2 504.9L954.2 507.1L945.1 506.6z"/><path class="e" d="M945.1 504.1L954.2 504.9M945.1 506.6L954.2 507.1"/><path class="q" fill="#9b988e" stroke="#9b988e" d="M986.2 519.0L994.9 518.8L993.4 531.7L983.3 531.8z"/><path class="e" d="M986.2 519.0L994.9 518.8M983.3 531.8L993.4 531.7"/><path class="q" fill="#94948f" stroke="#94948f" d="M973.3 559.5L983.3 559.5L983.3 563.0L973.3 563.0z"/><path class="e" d="M973.3 559.5L983.3 559.5M973.3 563.0L983.3 563.0"/><path class="q" fill="#9d9a8f" stroke="#9d9a8f" d="M1012.3 518.0L1021.0 517.4L1023.9 530.3L1013.8 530.9z"/><path class="e" d="M1012.3 518.0L1021.0 517.4M1013.8 530.9L1023.9 530.3"/><path class="q" fill="#989892" stroke="#989892" d="M1023.9 558.0L1033.9 557.2L1033.9 560.7L1023.9 561.5z"/><path class="e" d="M1023.9 558.0L1033.9 557.2M1023.9 561.5L1033.9 560.7"/><path class="q" fill="#4d4b47" stroke="#4d4b47" d="M1023.8 506.4L1033.5 505.9L1029.5 512.1L1021.0 512.8z"/><path class="e" d="M1023.8 506.4L1033.5 505.9M1021.0 512.8L1029.5 512.1"/><path class="q" fill="#9d9a8f" stroke="#9d9a8f" d="M994.9 518.8L1003.6 518.5L1003.6 531.4L993.4 531.7z"/><path class="e" d="M994.9 518.8L1003.6 518.5M993.4 531.7L1003.6 531.4"/><path class="q" fill="#9e9b91" stroke="#9e9b91" d="M1003.6 518.5L1012.3 518.0L1013.8 530.9L1003.6 531.4z"/><path class="e" d="M1003.6 518.5L1012.3 518.0M1003.6 531.4L1013.8 530.9"/><path class="q" fill="#4b4a46" stroke="#4b4a46" d="M973.3 507.6L983.3 507.6L986.2 514.4L977.7 514.4z"/><path class="e" d="M973.3 507.6L983.3 507.6M977.7 514.4L986.2 514.4"/><path class="q" fill="#969691" stroke="#969691" d="M983.3 559.5L993.4 559.4L993.4 562.9L983.3 563.0z"/><path class="e" d="M983.3 559.5L993.4 559.4M983.3 563.0L993.4 562.9"/><path class="q" fill="#999994" stroke="#999994" d="M1013.8 558.6L1023.9 558.0L1023.9 561.5L1013.8 562.1z"/><path class="e" d="M1013.8 558.6L1023.9 558.0M1013.8 562.1L1023.9 561.5"/><path class="q" fill="#4d4c48" stroke="#4d4c48" d="M1013.8 506.8L1023.8 506.4L1021.0 512.8L1012.3 513.4z"/><path class="e" d="M1013.8 506.8L1023.8 506.4M1012.3 513.4L1021.0 512.8"/><path class="q" fill="#90908b" stroke="#90908b" d="M963.6 531.7L973.3 531.8L973.3 535.3L963.6 535.1z"/><path class="e" d="M963.6 531.7L973.3 531.8M963.6 535.1L973.3 535.3"/><path class="q" fill="#4c4b46" stroke="#4c4b46" d="M983.3 507.6L993.4 507.5L994.9 514.2L986.2 514.4z"/><path class="e" d="M983.3 507.6L993.4 507.5M986.2 514.4L994.9 514.2"/><path class="q" fill="#989893" stroke="#989893" d="M993.4 559.4L1003.6 559.1L1003.6 562.6L993.4 562.9z"/><path class="e" d="M993.4 559.4L1003.6 559.1M993.4 562.9L1003.6 562.6"/><path class="q" fill="#9a9a95" stroke="#9a9a95" d="M1003.6 559.1L1013.8 558.6L1013.8 562.1L1003.6 562.6z"/><path class="e" d="M1003.6 559.1L1013.8 558.6M1003.6 562.6L1013.8 562.1"/><path class="q" fill="#979791" stroke="#979791" d="M1033.9 529.5L1043.6 528.6L1043.6 532.0L1033.9 533.0z"/><path class="e" d="M1033.9 529.5L1043.6 528.6M1033.9 533.0L1043.6 532.0"/><path class="q" fill="#4d4c47" stroke="#4d4c47" d="M993.4 507.5L1003.6 507.2L1003.6 513.9L994.9 514.2z"/><path class="e" d="M993.4 507.5L1003.6 507.2M994.9 514.2L1003.6 513.9"/><path class="q" fill="#4e4c48" stroke="#4e4c48" d="M1003.6 507.2L1013.8 506.8L1012.3 513.4L1003.6 513.9z"/><path class="e" d="M1003.6 507.2L1013.8 506.8M1003.6 513.9L1012.3 513.4"/><path class="q" fill="#8b8b86" stroke="#8b8b86" d="M954.2 504.9L963.6 505.6L963.6 507.4L954.2 507.1z"/><path class="e" d="M954.2 504.9L963.6 505.6M954.2 507.1L963.6 507.4"/><path class="q" fill="#94948f" stroke="#94948f" d="M973.3 531.8L983.3 531.8L983.3 535.3L973.3 535.3z"/><path class="e" d="M973.3 531.8L983.3 531.8M973.3 535.3L983.3 535.3"/><path class="q" fill="#989892" stroke="#989892" d="M1023.9 530.3L1033.9 529.5L1033.9 533.0L1023.9 533.8z"/><path class="e" d="M1023.9 530.3L1033.9 529.5M1023.9 533.8L1033.9 533.0"/><path class="q" fill="#969691" stroke="#969691" d="M983.3 531.8L993.4 531.7L993.4 535.2L983.3 535.3z"/><path class="e" d="M983.3 531.8L993.4 531.7M983.3 535.3L993.4 535.2"/><path class="q" fill="#999994" stroke="#999994" d="M1013.8 530.9L1023.9 530.3L1023.9 533.8L1013.8 534.4z"/><path class="e" d="M1013.8 530.9L1023.9 530.3M1013.8 534.4L1023.9 533.8"/><path class="q" fill="#90908b" stroke="#90908b" d="M963.6 505.6L973.3 506.2L973.3 507.6L963.6 507.4z"/><path class="e" d="M963.6 505.6L973.3 506.2M963.6 507.4L973.3 507.6"/><path class="q" fill="#989893" stroke="#989893" d="M993.4 531.7L1003.6 531.4L1003.6 534.9L993.4 535.2z"/><path class="e" d="M993.4 531.7L1003.6 531.4M993.4 535.2L1003.6 534.9"/><path class="q" fill="#9a9a95" stroke="#9a9a95" d="M1003.6 531.4L1013.8 530.9L1013.8 534.4L1003.6 534.9z"/><path class="e" d="M1003.6 531.4L1013.8 530.9M1003.6 534.9L1013.8 534.4"/><path class="q" fill="#94948f" stroke="#94948f" d="M973.3 506.2L983.3 506.6L983.3 507.6L973.3 507.6z"/><path class="e" d="M973.3 506.2L983.3 506.6M973.3 507.6L983.3 507.6"/><path class="q" fill="#969691" stroke="#969691" d="M983.3 506.6L993.4 506.8L993.4 507.5L983.3 507.6z"/><path class="e" d="M983.3 506.6L993.4 506.8M983.3 507.6L993.4 507.5"/><path class="q" fill="#989893" stroke="#989893" d="M993.4 506.8L1003.6 506.9L1003.6 507.2L993.4 507.5z"/><path class="e" d="M993.4 506.8L1003.6 506.9M993.4 507.5L1003.6 507.2"/><path class="q" fill="#9a9a95" stroke="#9a9a95" d="M1003.6 506.9L1009.8 506.9L1009.8 506.9L1003.6 507.2z"/><path class="e" d="M1003.6 506.9L1009.8 506.9M1003.6 507.2L1009.8 506.9"/><path fill="url(#hsg)" d="M886.6 440.1A117.0 21.32 0 0 0 1120.6 440.1V485.6A117.0 21.32 0 0 1 886.6 485.6z"/><path class="e" d="M886.6 485.6A117.0 21.32 0 0 0 1120.6 485.6"/><ellipse cx="1003.6" cy="440.1" rx="117.0" ry="21.32" fill="url(#topg)" stroke="#0e0e0d" stroke-width="1.6"/></g><path d="M1120.6 669.4L1120.2 667.1M1120.2 667.1L1118.8 664.9M1118.8 664.9L1116.6 662.7M1116.6 662.7L1114.4 661.1M1114.4 661.1L1113.5 660.5M1113.5 660.5L1109.6 658.4M1109.6 658.4L1104.9 656.4M1104.9 656.4L1099.4 654.4M1099.4 654.4L1093.2 652.6M1093.2 652.6L1086.3 650.8M1086.3 650.8L1078.8 649.2M1078.8 649.2L1070.7 647.7M1070.7 647.7L1062.1 646.3M1062.1 646.3L1053.0 645.0M1053.0 645.0L1043.6 643.9M1043.6 643.9L1033.9 643.0M1033.9 643.0L1023.9 642.2M1023.9 642.2L1013.8 641.6M1013.8 641.6L1003.6 641.1M1119.5 669.3L1118.8 668.3M1118.8 668.3L1116.6 666.1M1116.6 666.1L1114.4 664.5M1114.4 664.5L1113.5 664.0M1113.5 664.0L1109.6 661.9M1109.6 661.9L1104.9 659.8M1104.9 659.8L1099.4 657.9M1099.4 657.9L1093.2 656.0M1093.2 656.0L1086.3 654.3M1086.3 654.3L1078.8 652.6M1078.8 652.6L1070.7 651.1M1070.7 651.1L1062.1 649.7M1062.1 649.7L1053.0 648.5M1053.0 648.5L1043.6 647.4M1043.6 647.4L1033.9 646.4M1033.9 646.4L1023.9 645.7M1023.9 645.7L1013.8 645.0M1013.8 645.0L1003.6 644.6M1003.6 641.1L993.4 640.8M993.4 640.8L983.3 640.7M983.3 640.7L973.3 640.7M973.3 640.7L963.6 640.8M963.6 640.8L954.2 641.2M954.2 641.2L945.1 641.6M945.1 641.6L936.5 642.3M936.5 642.3L928.4 643.0M928.4 643.0L920.9 643.9M920.9 643.9L914.0 644.9M914.0 644.9L907.8 646.0M907.8 646.0L902.3 647.1M902.3 647.1L897.6 648.4M897.6 648.4L893.7 649.7M893.7 649.7L892.8 650.1M892.8 650.1L890.6 651.1M890.6 651.1L888.4 652.6M888.4 652.6L887.0 654.0M887.0 654.0L886.6 655.5M1120.6 641.7L1120.2 639.4M1120.2 639.4L1118.8 637.2M1118.8 637.2L1116.6 635.0M1116.6 635.0L1114.4 633.4M1114.4 633.4L1113.5 632.8M1113.5 632.8L1109.6 630.7M1109.6 630.7L1104.9 628.7M1104.9 628.7L1099.4 626.7M1099.4 626.7L1093.2 624.9M1093.2 624.9L1086.3 623.1M1086.3 623.1L1078.8 621.5M1078.8 621.5L1070.7 620.0M1070.7 620.0L1062.1 618.6M1062.1 618.6L1053.0 617.3M1053.0 617.3L1043.6 616.2M1043.6 616.2L1033.9 615.3M1033.9 615.3L1023.9 614.5M1023.9 614.5L1013.8 613.9M1013.8 613.9L1003.6 613.4M1003.6 644.6L993.4 644.3M993.4 644.3L983.3 644.1M983.3 644.1L973.3 644.1M973.3 644.1L963.6 644.3M963.6 644.3L954.2 644.6M954.2 644.6L945.1 645.1M945.1 645.1L936.5 645.7M936.5 645.7L928.4 646.5M928.4 646.5L920.9 647.3M920.9 647.3L914.0 648.3M914.0 648.3L907.8 649.4M907.8 649.4L902.3 650.6M902.3 650.6L897.6 651.9M897.6 651.9L893.7 653.2M893.7 653.2L892.8 653.6M892.8 653.6L890.6 654.6M890.6 654.6L888.4 656.0M888.4 656.0L887.0 657.5M887.0 657.5L886.6 659.0M886.6 659.0L887.0 660.4M887.0 660.4L888.4 661.9M888.4 661.9L890.6 663.3M890.6 663.3L892.8 664.4M1114.4 653.4L1116.6 651.8M1116.6 651.8L1118.8 649.6M1118.8 649.6L1120.2 647.4M1120.2 647.4L1120.6 645.1M1120.6 645.1L1120.2 642.9M1120.2 642.9L1118.8 640.6M1118.8 640.6L1116.6 638.4M1116.6 638.4L1114.4 636.8M1114.4 636.8L1113.5 636.3M1113.5 636.3L1109.6 634.2M1109.6 634.2L1104.9 632.1M1104.9 632.1L1099.4 630.2M1099.4 630.2L1093.2 628.3M1093.2 628.3L1086.3 626.6M1086.3 626.6L1078.8 624.9M1078.8 624.9L1070.7 623.4M1070.7 623.4L1062.1 622.0M1062.1 622.0L1053.0 620.8M1053.0 620.8L1043.6 619.7M1043.6 619.7L1033.9 618.7M1033.9 618.7L1023.9 618.0M1023.9 618.0L1013.8 617.3M1013.8 617.3L1003.6 616.9M932.4 659.4L927.0 660.1M927.0 660.1L921.7 661.0M921.7 661.0L917.0 662.0M917.0 662.0L913.0 663.0M913.0 663.0L909.6 664.1M909.6 664.1L908.9 664.4M908.9 664.4L907.0 665.2M907.0 665.2L905.1 666.4M905.1 666.4L904.0 667.6M904.0 667.6L903.6 668.8M1103.6 654.9L1103.2 652.9M1103.2 652.9L1102.1 651.0M1102.1 651.0L1100.2 649.0M1100.2 649.0L1098.3 647.6M1098.3 647.6L1097.6 647.1M1097.6 647.1L1094.2 645.3M1094.2 645.3L1090.2 643.5M1090.2 643.5L1085.5 641.8M1085.5 641.8L1080.2 640.1M1080.2 640.1L1074.3 638.6M1074.3 638.6L1067.9 637.1M1067.9 637.1L1061.0 635.8M1061.0 635.8L1053.6 634.5M1053.6 634.5L1045.9 633.4M1045.9 633.4L1037.8 632.4M1037.8 632.4L1029.5 631.5M1029.5 631.5L1021.0 630.8M1021.0 630.8L1012.3 630.2M1012.3 630.2L1003.6 629.8M1098.3 652.3L1097.6 651.8M1097.6 651.8L1094.2 649.9M1094.2 649.9L1090.2 648.1M1090.2 648.1L1085.5 646.4M1085.5 646.4L1080.2 644.7M1080.2 644.7L1074.3 643.2M1074.3 643.2L1067.9 641.7M1067.9 641.7L1061.0 640.4M1061.0 640.4L1053.6 639.1M1053.6 639.1L1045.9 638.0M1045.9 638.0L1037.8 637.0M1037.8 637.0L1029.5 636.2M1029.5 636.2L1021.0 635.4M1021.0 635.4L1012.3 634.8M1012.3 634.8L1003.6 634.4M1003.6 613.4L993.4 613.1M993.4 613.1L983.3 613.0M983.3 613.0L973.3 613.0M973.3 613.0L963.6 613.1M963.6 613.1L954.2 613.5M954.2 613.5L945.1 613.9M945.1 613.9L936.5 614.6M936.5 614.6L928.4 615.3M928.4 615.3L920.9 616.2M920.9 616.2L914.0 617.2M914.0 617.2L907.8 618.3M907.8 618.3L902.3 619.4M902.3 619.4L897.6 620.7M897.6 620.7L893.7 622.0M893.7 622.0L892.8 622.4M892.8 622.4L890.6 623.4M890.6 623.4L888.4 624.9M888.4 624.9L887.0 626.3M887.0 626.3L886.6 627.8M1120.6 614.0L1120.2 611.7M1120.2 611.7L1118.8 609.5M1118.8 609.5L1116.6 607.3M1116.6 607.3L1114.4 605.7M1114.4 605.7L1113.5 605.1M1113.5 605.1L1109.6 603.0M1109.6 603.0L1104.9 601.0M1104.9 601.0L1099.4 599.0M1099.4 599.0L1093.2 597.2M1093.2 597.2L1086.3 595.4M1086.3 595.4L1078.8 593.8M1078.8 593.8L1070.7 592.3M1070.7 592.3L1062.1 590.9M1062.1 590.9L1053.0 589.6M1053.0 589.6L1043.6 588.5M1043.6 588.5L1033.9 587.6M1033.9 587.6L1023.9 586.8M1023.9 586.8L1013.8 586.2M1013.8 586.2L1003.6 585.7M1003.6 616.9L993.4 616.6M993.4 616.6L983.3 616.4M983.3 616.4L973.3 616.4M973.3 616.4L963.6 616.6M963.6 616.6L954.2 616.9M954.2 616.9L945.1 617.4M945.1 617.4L936.5 618.0M936.5 618.0L928.4 618.8M928.4 618.8L920.9 619.6M920.9 619.6L914.0 620.6M914.0 620.6L907.8 621.7M907.8 621.7L902.3 622.9M902.3 622.9L897.6 624.2M897.6 624.2L893.7 625.5M893.7 625.5L892.8 625.9M892.8 625.9L890.6 626.9M890.6 626.9L888.4 628.3M888.4 628.3L887.0 629.8M887.0 629.8L886.6 631.3M886.6 631.3L887.0 632.7M887.0 632.7L888.4 634.2M888.4 634.2L890.6 635.6M890.6 635.6L892.8 636.7M1114.4 625.7L1116.6 624.1M1116.6 624.1L1118.8 621.9M1118.8 621.9L1120.2 619.7M1120.2 619.7L1120.6 617.4M1120.6 617.4L1120.2 615.2M1120.2 615.2L1118.8 612.9M1118.8 612.9L1116.6 610.7M1116.6 610.7L1114.4 609.1M1114.4 609.1L1113.5 608.6M1113.5 608.6L1109.6 606.5M1109.6 606.5L1104.9 604.4M1104.9 604.4L1099.4 602.5M1099.4 602.5L1093.2 600.6M1093.2 600.6L1086.3 598.9M1086.3 598.9L1078.8 597.2M1078.8 597.2L1070.7 595.7M1070.7 595.7L1062.1 594.3M1062.1 594.3L1053.0 593.1M1053.0 593.1L1043.6 592.0M1043.6 592.0L1033.9 591.0M1033.9 591.0L1023.9 590.3M1023.9 590.3L1013.8 589.6M1013.8 589.6L1003.6 589.2M1003.6 629.8L994.9 629.5M994.9 629.5L986.2 629.3M986.2 629.3L977.7 629.2M977.7 629.2L969.4 629.3M969.4 629.3L961.3 629.6M961.3 629.6L953.6 629.9M953.6 629.9L946.2 630.4M946.2 630.4L939.3 631.0M939.3 631.0L932.9 631.6M932.9 631.6L927.0 632.4M927.0 632.4L921.7 633.3M921.7 633.3L917.0 634.3M917.0 634.3L913.0 635.3M913.0 635.3L909.6 636.4M909.6 636.4L908.9 636.7M908.9 636.7L907.0 637.5M907.0 637.5L905.1 638.7M905.1 638.7L904.0 639.9M904.0 639.9L903.6 641.1M1103.6 627.2L1103.2 625.2M1103.2 625.2L1102.1 623.3M1102.1 623.3L1100.2 621.3M1100.2 621.3L1098.3 619.9M1098.3 619.9L1097.6 619.4M1097.6 619.4L1094.2 617.6M1094.2 617.6L1090.2 615.8M1090.2 615.8L1085.5 614.1M1085.5 614.1L1080.2 612.4M1080.2 612.4L1074.3 610.9M1074.3 610.9L1067.9 609.4M1067.9 609.4L1061.0 608.1M1061.0 608.1L1053.6 606.8M1053.6 606.8L1045.9 605.7M1045.9 605.7L1037.8 604.7M1037.8 604.7L1029.5 603.8M1029.5 603.8L1021.0 603.1M1021.0 603.1L1012.3 602.5M1012.3 602.5L1003.6 602.1M1003.6 634.4L994.9 634.1M994.9 634.1L986.2 633.9M986.2 633.9L977.7 633.9M977.7 633.9L969.4 633.9M969.4 633.9L961.3 634.2M961.3 634.2L953.6 634.5M953.6 634.5L946.2 635.0M946.2 635.0L939.3 635.6M939.3 635.6L932.9 636.3M932.9 636.3L927.0 637.1M927.0 637.1L921.7 637.9M921.7 637.9L917.0 638.9M917.0 638.9L913.0 639.9M913.0 639.9L909.6 641.0M909.6 641.0L908.9 641.3M1098.3 624.6L1097.6 624.1M1097.6 624.1L1094.2 622.2M1094.2 622.2L1090.2 620.4M1090.2 620.4L1085.5 618.7M1085.5 618.7L1080.2 617.0M1080.2 617.0L1074.3 615.5M1074.3 615.5L1067.9 614.0M1067.9 614.0L1061.0 612.7M1061.0 612.7L1053.6 611.4M1053.6 611.4L1045.9 610.3M1045.9 610.3L1037.8 609.3M1037.8 609.3L1029.5 608.5M1029.5 608.5L1021.0 607.7M1021.0 607.7L1012.3 607.1M1012.3 607.1L1003.6 606.7M1003.6 585.7L993.4 585.4M993.4 585.4L983.3 585.3M983.3 585.3L973.3 585.3M973.3 585.3L963.6 585.4M963.6 585.4L954.2 585.8M954.2 585.8L945.1 586.2M945.1 586.2L936.5 586.9M936.5 586.9L928.4 587.6M928.4 587.6L920.9 588.5M920.9 588.5L914.0 589.5M914.0 589.5L907.8 590.6M907.8 590.6L902.3 591.7M902.3 591.7L897.6 593.0M897.6 593.0L893.7 594.3M893.7 594.3L892.8 594.7M892.8 594.7L890.6 595.7M890.6 595.7L888.4 597.2M888.4 597.2L887.0 598.6M887.0 598.6L886.6 600.1M1120.6 586.3L1120.2 584.0M1120.2 584.0L1118.8 581.8M1118.8 581.8L1116.6 579.6M1116.6 579.6L1114.4 578.0M1114.4 578.0L1113.5 577.4M1113.5 577.4L1109.6 575.3M1109.6 575.3L1104.9 573.3M1104.9 573.3L1099.4 571.3M1099.4 571.3L1093.2 569.5M1093.2 569.5L1086.3 567.7M1086.3 567.7L1078.8 566.1M1078.8 566.1L1070.7 564.6M1070.7 564.6L1062.1 563.2M1062.1 563.2L1053.0 561.9M1053.0 561.9L1043.6 560.8M1043.6 560.8L1033.9 559.9M1033.9 559.9L1023.9 559.1M1023.9 559.1L1013.8 558.5M1013.8 558.5L1003.6 558.0M1003.6 589.2L993.4 588.9M993.4 588.9L983.3 588.7M983.3 588.7L973.3 588.7M973.3 588.7L963.6 588.9M963.6 588.9L954.2 589.2M954.2 589.2L945.1 589.7M945.1 589.7L936.5 590.3M936.5 590.3L928.4 591.1M928.4 591.1L920.9 591.9M920.9 591.9L914.0 592.9M914.0 592.9L907.8 594.0M907.8 594.0L902.3 595.2M902.3 595.2L897.6 596.5M897.6 596.5L893.7 597.8M893.7 597.8L892.8 598.2M892.8 598.2L890.6 599.2M890.6 599.2L888.4 600.6M888.4 600.6L887.0 602.1M887.0 602.1L886.6 603.6M886.6 603.6L887.0 605.0M887.0 605.0L888.4 606.5M888.4 606.5L890.6 607.9M890.6 607.9L892.8 609.0M1114.4 598.0L1116.6 596.4M1116.6 596.4L1118.8 594.2M1118.8 594.2L1120.2 592.0M1120.2 592.0L1120.6 589.7M1120.6 589.7L1120.2 587.5M1120.2 587.5L1118.8 585.2M1118.8 585.2L1116.6 583.0M1116.6 583.0L1114.4 581.4M1114.4 581.4L1113.5 580.9M1113.5 580.9L1109.6 578.8M1109.6 578.8L1104.9 576.7M1104.9 576.7L1099.4 574.8M1099.4 574.8L1093.2 572.9M1093.2 572.9L1086.3 571.2M1086.3 571.2L1078.8 569.5M1078.8 569.5L1070.7 568.0M1070.7 568.0L1062.1 566.6M1062.1 566.6L1053.0 565.4M1053.0 565.4L1043.6 564.3M1043.6 564.3L1033.9 563.3M1033.9 563.3L1023.9 562.6M1023.9 562.6L1013.8 561.9M1013.8 561.9L1003.6 561.5M1003.6 602.1L994.9 601.8M994.9 601.8L986.2 601.6M986.2 601.6L977.7 601.5M977.7 601.5L969.4 601.6M969.4 601.6L961.3 601.9M961.3 601.9L953.6 602.2M953.6 602.2L946.2 602.7M946.2 602.7L939.3 603.3M939.3 603.3L932.9 603.9M932.9 603.9L927.0 604.7M927.0 604.7L921.7 605.6M921.7 605.6L917.0 606.6M917.0 606.6L913.0 607.6M913.0 607.6L909.6 608.7M909.6 608.7L908.9 609.0M908.9 609.0L907.0 609.8M907.0 609.8L905.1 611.0M905.1 611.0L904.0 612.2M904.0 612.2L903.6 613.4M1103.6 599.5L1103.2 597.5M1103.2 597.5L1102.1 595.6M1102.1 595.6L1100.2 593.6M1100.2 593.6L1098.3 592.2M1098.3 592.2L1097.6 591.7M1097.6 591.7L1094.2 589.9M1094.2 589.9L1090.2 588.1M1090.2 588.1L1085.5 586.4M1085.5 586.4L1080.2 584.7M1080.2 584.7L1074.3 583.2M1074.3 583.2L1067.9 581.7M1067.9 581.7L1061.0 580.4M1061.0 580.4L1053.6 579.1M1053.6 579.1L1045.9 578.0M1045.9 578.0L1037.8 577.0M1037.8 577.0L1029.5 576.1M1029.5 576.1L1021.0 575.4M1021.0 575.4L1012.3 574.8M1012.3 574.8L1003.6 574.4M1003.6 606.7L994.9 606.4M994.9 606.4L986.2 606.2M986.2 606.2L977.7 606.2M977.7 606.2L969.4 606.2M969.4 606.2L961.3 606.5M961.3 606.5L953.6 606.8M953.6 606.8L946.2 607.3M946.2 607.3L939.3 607.9M939.3 607.9L932.9 608.6M932.9 608.6L927.0 609.4M927.0 609.4L921.7 610.2M921.7 610.2L917.0 611.2M917.0 611.2L913.0 612.2M913.0 612.2L909.6 613.3M909.6 613.3L908.9 613.6M1098.3 596.9L1097.6 596.4M1097.6 596.4L1094.2 594.5M1094.2 594.5L1090.2 592.7M1090.2 592.7L1085.5 591.0M1085.5 591.0L1080.2 589.3M1080.2 589.3L1074.3 587.8M1074.3 587.8L1067.9 586.3M1067.9 586.3L1061.0 585.0M1061.0 585.0L1053.6 583.7M1053.6 583.7L1045.9 582.6M1045.9 582.6L1037.8 581.6M1037.8 581.6L1029.5 580.8M1029.5 580.8L1021.0 580.0M1021.0 580.0L1012.3 579.4M1012.3 579.4L1003.6 579.0M1003.6 558.0L993.4 557.7M993.4 557.7L983.3 557.6M983.3 557.6L973.3 557.6M973.3 557.6L963.6 557.7M963.6 557.7L954.2 558.1M954.2 558.1L945.1 558.5M945.1 558.5L936.5 559.2M936.5 559.2L928.4 559.9M928.4 559.9L920.9 560.8M920.9 560.8L914.0 561.8M914.0 561.8L907.8 562.9M907.8 562.9L902.3 564.0M902.3 564.0L897.6 565.3M897.6 565.3L893.7 566.6M893.7 566.6L892.8 567.0M892.8 567.0L890.6 568.0M890.6 568.0L888.4 569.5M888.4 569.5L887.0 570.9M887.0 570.9L886.6 572.4M1120.6 558.6L1120.2 556.3M1120.2 556.3L1118.8 554.1M1118.8 554.1L1116.6 551.9M1116.6 551.9L1114.4 550.3M1114.4 550.3L1113.5 549.7M1113.5 549.7L1109.6 547.6M1109.6 547.6L1104.9 545.6M1104.9 545.6L1099.4 543.6M1099.4 543.6L1093.2 541.8M1093.2 541.8L1086.3 540.0M1086.3 540.0L1078.8 538.4M1078.8 538.4L1070.7 536.9M1070.7 536.9L1062.1 535.5M1062.1 535.5L1053.0 534.2M1053.0 534.2L1043.6 533.1M1043.6 533.1L1033.9 532.2M1033.9 532.2L1023.9 531.4M1023.9 531.4L1013.8 530.8M1013.8 530.8L1003.6 530.3M1003.6 561.5L993.4 561.2M993.4 561.2L983.3 561.0M983.3 561.0L973.3 561.0M973.3 561.0L963.6 561.2M963.6 561.2L954.2 561.5M954.2 561.5L945.1 562.0M945.1 562.0L936.5 562.6M936.5 562.6L928.4 563.4M928.4 563.4L920.9 564.2M920.9 564.2L914.0 565.2M914.0 565.2L907.8 566.3M907.8 566.3L902.3 567.5M902.3 567.5L897.6 568.8M897.6 568.8L893.7 570.1M893.7 570.1L892.8 570.5M892.8 570.5L890.6 571.5M890.6 571.5L888.4 572.9M888.4 572.9L887.0 574.4M887.0 574.4L886.6 575.9M886.6 575.9L887.0 577.3M887.0 577.3L888.4 578.8M888.4 578.8L890.6 580.2M890.6 580.2L892.8 581.3M1114.4 570.3L1116.6 568.7M1116.6 568.7L1118.8 566.5M1118.8 566.5L1120.2 564.3M1120.2 564.3L1120.6 562.0M1120.6 562.0L1120.2 559.8M1120.2 559.8L1118.8 557.5M1118.8 557.5L1116.6 555.3M1116.6 555.3L1114.4 553.7M1114.4 553.7L1113.5 553.2M1113.5 553.2L1109.6 551.1M1109.6 551.1L1104.9 549.0M1104.9 549.0L1099.4 547.1M1099.4 547.1L1093.2 545.2M1093.2 545.2L1086.3 543.5M1086.3 543.5L1078.8 541.8M1078.8 541.8L1070.7 540.3M1070.7 540.3L1062.1 538.9M1062.1 538.9L1053.0 537.7M1053.0 537.7L1043.6 536.6M1043.6 536.6L1033.9 535.6M1033.9 535.6L1023.9 534.9M1023.9 534.9L1013.8 534.2M1013.8 534.2L1003.6 533.8M1003.6 574.4L994.9 574.1M994.9 574.1L986.2 573.9M986.2 573.9L977.7 573.8M977.7 573.8L969.4 573.9M969.4 573.9L961.3 574.2M961.3 574.2L953.6 574.5M953.6 574.5L946.2 575.0M946.2 575.0L939.3 575.6M939.3 575.6L932.9 576.2M932.9 576.2L927.0 577.0M927.0 577.0L921.7 577.9M921.7 577.9L917.0 578.9M917.0 578.9L913.0 579.9M913.0 579.9L909.6 581.0M909.6 581.0L908.9 581.3M908.9 581.3L907.0 582.1M907.0 582.1L905.1 583.3M905.1 583.3L904.0 584.5M904.0 584.5L903.6 585.7M1103.6 571.8L1103.2 569.8M1103.2 569.8L1102.1 567.9M1102.1 567.9L1100.2 565.9M1100.2 565.9L1098.3 564.5M1098.3 564.5L1097.6 564.0M1097.6 564.0L1094.2 562.2M1094.2 562.2L1090.2 560.4M1090.2 560.4L1085.5 558.7M1085.5 558.7L1080.2 557.0M1080.2 557.0L1074.3 555.5M1074.3 555.5L1067.9 554.0M1067.9 554.0L1061.0 552.7M1061.0 552.7L1053.6 551.4M1053.6 551.4L1045.9 550.3M1045.9 550.3L1037.8 549.3M1037.8 549.3L1029.5 548.4M1029.5 548.4L1021.0 547.7M1021.0 547.7L1012.3 547.1M1012.3 547.1L1003.6 546.7M1003.6 579.0L994.9 578.7M994.9 578.7L986.2 578.5M986.2 578.5L977.7 578.5M977.7 578.5L969.4 578.5M969.4 578.5L961.3 578.8M961.3 578.8L953.6 579.1M953.6 579.1L946.2 579.6M946.2 579.6L939.3 580.2M939.3 580.2L932.9 580.9M932.9 580.9L927.0 581.7M927.0 581.7L921.7 582.5M921.7 582.5L917.0 583.5M917.0 583.5L913.0 584.5M913.0 584.5L909.6 585.6M909.6 585.6L908.9 585.9M1098.3 569.2L1097.6 568.7M1097.6 568.7L1094.2 566.8M1094.2 566.8L1090.2 565.0M1090.2 565.0L1085.5 563.3M1085.5 563.3L1080.2 561.6M1080.2 561.6L1074.3 560.1M1074.3 560.1L1067.9 558.6M1067.9 558.6L1061.0 557.3M1061.0 557.3L1053.6 556.0M1053.6 556.0L1045.9 554.9M1045.9 554.9L1037.8 553.9M1037.8 553.9L1029.5 553.1M1029.5 553.1L1021.0 552.3M1021.0 552.3L1012.3 551.7M1012.3 551.7L1003.6 551.3M1003.6 530.3L993.4 530.0M993.4 530.0L983.3 529.9M983.3 529.9L973.3 529.9M973.3 529.9L963.6 530.0M963.6 530.0L954.2 530.4M954.2 530.4L945.1 530.8M945.1 530.8L936.5 531.5M936.5 531.5L928.4 532.2M928.4 532.2L920.9 533.1M920.9 533.1L914.0 534.1M914.0 534.1L907.8 535.2M907.8 535.2L902.3 536.3M902.3 536.3L897.6 537.6M897.6 537.6L893.7 538.9M893.7 538.9L892.8 539.3M892.8 539.3L890.6 540.3M890.6 540.3L888.4 541.8M888.4 541.8L887.0 543.2M887.0 543.2L886.6 544.7M1120.6 530.9L1120.2 528.6M1120.2 528.6L1118.8 526.4M1118.8 526.4L1116.6 524.2M1116.6 524.2L1114.4 522.6M1114.4 522.6L1113.5 522.0M1113.5 522.0L1109.6 519.9M1109.6 519.9L1104.9 517.9M1104.9 517.9L1099.4 515.9M1099.4 515.9L1093.2 514.1M1093.2 514.1L1086.3 512.3M1086.3 512.3L1078.8 510.7M1078.8 510.7L1070.7 509.2M1070.7 509.2L1062.1 507.8M1062.1 507.8L1053.0 506.5M1053.0 506.5L1043.6 505.4M1043.6 505.4L1033.9 504.5M1033.9 504.5L1023.9 503.7M1023.9 503.7L1013.8 503.1M1013.8 503.1L1003.6 502.6M1003.6 533.8L993.4 533.5M993.4 533.5L983.3 533.3M983.3 533.3L973.3 533.3M973.3 533.3L963.6 533.5M963.6 533.5L954.2 533.8M954.2 533.8L945.1 534.3M945.1 534.3L936.5 534.9M936.5 534.9L928.4 535.7M928.4 535.7L920.9 536.5M920.9 536.5L914.0 537.5M914.0 537.5L907.8 538.6M907.8 538.6L902.3 539.8M902.3 539.8L897.6 541.1M897.6 541.1L893.7 542.4M893.7 542.4L892.8 542.8M892.8 542.8L890.6 543.8M890.6 543.8L888.4 545.2M888.4 545.2L887.0 546.7M887.0 546.7L886.6 548.2M886.6 548.2L887.0 549.6M887.0 549.6L888.4 551.1M888.4 551.1L890.6 552.5M890.6 552.5L892.8 553.6M1114.4 542.6L1116.6 541.0M1116.6 541.0L1118.8 538.8M1118.8 538.8L1120.2 536.6M1120.2 536.6L1120.6 534.3M1120.6 534.3L1120.2 532.1M1120.2 532.1L1118.8 529.8M1118.8 529.8L1116.6 527.6M1116.6 527.6L1114.4 526.0M1114.4 526.0L1113.5 525.5M1113.5 525.5L1109.6 523.4M1109.6 523.4L1104.9 521.3M1104.9 521.3L1099.4 519.4M1099.4 519.4L1093.2 517.5M1093.2 517.5L1086.3 515.8M1086.3 515.8L1078.8 514.1M1078.8 514.1L1070.7 512.6M1070.7 512.6L1062.1 511.2M1062.1 511.2L1053.0 510.0M1053.0 510.0L1043.6 508.9M1043.6 508.9L1033.9 507.9M1033.9 507.9L1023.9 507.2M1023.9 507.2L1013.8 506.5M1013.8 506.5L1003.6 506.1M1003.6 546.7L994.9 546.4M994.9 546.4L986.2 546.2M986.2 546.2L977.7 546.1M977.7 546.1L969.4 546.2M969.4 546.2L961.3 546.5M961.3 546.5L953.6 546.8M953.6 546.8L946.2 547.3M946.2 547.3L939.3 547.9M939.3 547.9L932.9 548.5M932.9 548.5L927.0 549.3M927.0 549.3L921.7 550.2M921.7 550.2L917.0 551.2M917.0 551.2L913.0 552.2M913.0 552.2L909.6 553.3M909.6 553.3L908.9 553.6M908.9 553.6L907.0 554.4M907.0 554.4L905.1 555.6M905.1 555.6L904.0 556.8M904.0 556.8L903.6 558.0M1103.6 544.1L1103.2 542.1M1103.2 542.1L1102.1 540.2M1102.1 540.2L1100.2 538.2M1100.2 538.2L1098.3 536.8M1098.3 536.8L1097.6 536.3M1097.6 536.3L1094.2 534.5M1094.2 534.5L1090.2 532.7M1090.2 532.7L1085.5 531.0M1085.5 531.0L1080.2 529.3M1080.2 529.3L1074.3 527.8M1074.3 527.8L1067.9 526.3M1067.9 526.3L1061.0 525.0M1061.0 525.0L1053.6 523.7M1053.6 523.7L1045.9 522.6M1045.9 522.6L1037.8 521.6M1037.8 521.6L1029.5 520.7M1029.5 520.7L1021.0 520.0M1021.0 520.0L1012.3 519.4M1012.3 519.4L1003.6 519.0M1003.6 551.3L994.9 551.0M994.9 551.0L986.2 550.8M986.2 550.8L977.7 550.8M977.7 550.8L969.4 550.8M969.4 550.8L961.3 551.1M961.3 551.1L953.6 551.4M953.6 551.4L946.2 551.9M946.2 551.9L939.3 552.5M939.3 552.5L932.9 553.2M932.9 553.2L927.0 554.0M927.0 554.0L921.7 554.8M921.7 554.8L917.0 555.8M917.0 555.8L913.0 556.8M913.0 556.8L909.6 557.9M909.6 557.9L908.9 558.2M1098.3 541.5L1097.6 541.0M1097.6 541.0L1094.2 539.1M1094.2 539.1L1090.2 537.3M1090.2 537.3L1085.5 535.6M1085.5 535.6L1080.2 533.9M1080.2 533.9L1074.3 532.4M1074.3 532.4L1067.9 530.9M1067.9 530.9L1061.0 529.6M1061.0 529.6L1053.6 528.3M1053.6 528.3L1045.9 527.2M1045.9 527.2L1037.8 526.2M1037.8 526.2L1029.5 525.4M1029.5 525.4L1021.0 524.6M1021.0 524.6L1012.3 524.0M1012.3 524.0L1003.6 523.6M1003.6 502.6L993.4 502.3M993.4 502.3L983.3 502.2M983.3 502.2L973.3 502.2M973.3 502.2L963.6 502.3M963.6 502.3L954.2 502.7M954.2 502.7L945.1 503.1M945.1 503.1L936.5 503.8M936.5 503.8L928.4 504.5M928.4 504.5L920.9 505.4M920.9 505.4L914.0 506.4M914.0 506.4L907.8 507.5M907.8 507.5L902.3 508.6M902.3 508.6L897.6 509.9M897.6 509.9L893.7 511.2M893.7 511.2L892.8 511.6M892.8 511.6L890.6 512.6M890.6 512.6L888.4 514.1M888.4 514.1L887.0 515.5M887.0 515.5L886.6 517.0M1120.6 503.2L1120.2 500.9M1120.2 500.9L1118.8 498.7M1118.8 498.7L1116.6 496.5M1116.6 496.5L1114.4 494.9M1114.4 494.9L1113.5 494.3M1113.5 494.3L1109.6 492.2M1109.6 492.2L1104.9 490.2M1104.9 490.2L1099.4 488.2M1099.4 488.2L1093.2 486.4M1093.2 486.4L1086.3 484.6M1086.3 484.6L1078.8 483.0M1078.8 483.0L1070.7 481.5M1070.7 481.5L1062.1 480.1M1062.1 480.1L1053.0 478.8M1053.0 478.8L1043.6 477.7M1043.6 477.7L1033.9 476.8M1033.9 476.8L1023.9 476.0M1023.9 476.0L1013.8 475.4M1013.8 475.4L1003.6 474.9M1003.6 506.1L993.4 505.8M993.4 505.8L983.3 505.6M983.3 505.6L973.3 505.6M973.3 505.6L963.6 505.8M963.6 505.8L954.2 506.1M954.2 506.1L945.1 506.6M945.1 506.6L936.5 507.2M936.5 507.2L928.4 508.0M928.4 508.0L920.9 508.8M920.9 508.8L914.0 509.8M914.0 509.8L907.8 510.9M907.8 510.9L902.3 512.1M902.3 512.1L897.6 513.4M897.6 513.4L893.7 514.7M893.7 514.7L892.8 515.1M892.8 515.1L890.6 516.1M890.6 516.1L888.4 517.5M888.4 517.5L887.0 519.0M887.0 519.0L886.6 520.5M886.6 520.5L887.0 521.9M887.0 521.9L888.4 523.4M888.4 523.4L890.6 524.8M890.6 524.8L892.8 525.9M1114.4 514.9L1116.6 513.3M1116.6 513.3L1118.8 511.1M1118.8 511.1L1120.2 508.9M1120.2 508.9L1120.6 506.6M1120.6 506.6L1120.2 504.4M1120.2 504.4L1118.8 502.1M1118.8 502.1L1116.6 499.9M1116.6 499.9L1114.4 498.3M1114.4 498.3L1113.5 497.8M1113.5 497.8L1109.6 495.7M1109.6 495.7L1104.9 493.6M1104.9 493.6L1099.4 491.7M1099.4 491.7L1093.2 489.8M1093.2 489.8L1086.3 488.1M1086.3 488.1L1078.8 486.4M1078.8 486.4L1070.7 484.9M1070.7 484.9L1062.1 483.5M1062.1 483.5L1053.0 482.3M1053.0 482.3L1043.6 481.2M1043.6 481.2L1033.9 480.2M1033.9 480.2L1023.9 479.5M1023.9 479.5L1013.8 478.8M1013.8 478.8L1003.6 478.4M1003.6 519.0L994.9 518.7M994.9 518.7L986.2 518.5M986.2 518.5L977.7 518.4M977.7 518.4L969.4 518.5M969.4 518.5L961.3 518.8M961.3 518.8L953.6 519.1M953.6 519.1L946.2 519.6M946.2 519.6L939.3 520.2M939.3 520.2L932.9 520.8M932.9 520.8L927.0 521.6M927.0 521.6L921.7 522.5M921.7 522.5L917.0 523.5M917.0 523.5L913.0 524.5M913.0 524.5L909.6 525.6M909.6 525.6L908.9 525.9M908.9 525.9L907.0 526.7M907.0 526.7L905.1 527.9M905.1 527.9L904.0 529.1M904.0 529.1L903.6 530.3M1103.6 516.4L1103.2 514.4M1103.2 514.4L1102.1 512.5M1102.1 512.5L1100.2 510.5M1100.2 510.5L1098.3 509.1M1098.3 509.1L1097.6 508.6M1097.6 508.6L1094.2 506.8M1094.2 506.8L1090.2 505.0M1090.2 505.0L1085.5 503.3M1085.5 503.3L1080.2 501.6M1080.2 501.6L1074.3 500.1M1074.3 500.1L1067.9 498.6M1067.9 498.6L1061.0 497.3M1061.0 497.3L1053.6 496.0M1053.6 496.0L1045.9 494.9M1045.9 494.9L1037.8 493.9M1037.8 493.9L1029.5 493.0M1029.5 493.0L1021.0 492.3M1021.0 492.3L1012.3 491.7M1012.3 491.7L1003.6 491.3M1003.6 523.6L994.9 523.3M994.9 523.3L986.2 523.1M986.2 523.1L977.7 523.1M977.7 523.1L969.4 523.1M969.4 523.1L961.3 523.4M961.3 523.4L953.6 523.7M953.6 523.7L946.2 524.2M946.2 524.2L939.3 524.8M939.3 524.8L932.9 525.5M932.9 525.5L927.0 526.3M927.0 526.3L921.7 527.1M921.7 527.1L917.0 528.1M917.0 528.1L913.0 529.1M913.0 529.1L909.6 530.2M909.6 530.2L908.9 530.5M1098.3 513.8L1097.6 513.3M1097.6 513.3L1094.2 511.4M1094.2 511.4L1090.2 509.6M1090.2 509.6L1085.5 507.9M1085.5 507.9L1080.2 506.2M1080.2 506.2L1074.3 504.7M1074.3 504.7L1067.9 503.2M1067.9 503.2L1061.0 501.9M1061.0 501.9L1053.6 500.6M1053.6 500.6L1045.9 499.5M1045.9 499.5L1037.8 498.5M1037.8 498.5L1029.5 497.7M1029.5 497.7L1021.0 496.9M1021.0 496.9L1012.3 496.3M1012.3 496.3L1003.6 495.9M1003.6 474.9L993.4 474.6M993.4 474.6L983.3 474.5M983.3 474.5L973.3 474.5M973.3 474.5L963.6 474.6M963.6 474.6L954.2 475.0M954.2 475.0L945.1 475.4M945.1 475.4L936.5 476.1M936.5 476.1L928.4 476.8M928.4 476.8L920.9 477.7M920.9 477.7L914.0 478.7M914.0 478.7L907.8 479.8M907.8 479.8L902.3 480.9M902.3 480.9L897.6 482.2M897.6 482.2L893.7 483.5M893.7 483.5L892.8 483.9M892.8 483.9L890.6 484.9M890.6 484.9L888.4 486.4M888.4 486.4L887.0 487.8M887.0 487.8L886.6 489.3M1003.6 478.4L993.4 478.1M993.4 478.1L983.3 477.9M983.3 477.9L973.3 477.9M973.3 477.9L963.6 478.1M963.6 478.1L954.2 478.4M954.2 478.4L945.1 478.9M945.1 478.9L936.5 479.5M936.5 479.5L928.4 480.3M928.4 480.3L920.9 481.1M920.9 481.1L914.0 482.1M914.0 482.1L907.8 483.2M907.8 483.2L902.3 484.4M902.3 484.4L897.6 485.7M897.6 485.7L893.7 487.0M893.7 487.0L892.8 487.4M892.8 487.4L890.6 488.4M890.6 488.4L888.4 489.8M888.4 489.8L887.0 491.3M887.0 491.3L886.6 492.8M886.6 492.8L887.0 494.2M887.0 494.2L888.4 495.7M888.4 495.7L890.6 497.1M890.6 497.1L892.8 498.2M1105.8 491.9L1107.3 490.7M1107.3 490.7L1108.7 489.0M1108.7 489.0L1109.3 487.3M1109.3 487.3L1109.0 485.6M1109.0 485.6L1107.9 483.9M1107.9 483.9L1106.1 482.3M1106.1 482.3L1103.5 480.7M1103.5 480.7L1101.1 479.6M1101.1 479.6L1100.1 479.2M1100.1 479.2L1096.1 477.7M1096.1 477.7L1091.4 476.4M1091.4 476.4L1086.1 475.1M1086.1 475.1L1080.3 473.9M1080.3 473.9L1079.6 473.8M1003.6 491.3L994.9 491.0M994.9 491.0L986.2 490.8M986.2 490.8L977.7 490.7M977.7 490.7L969.4 490.8M969.4 490.8L961.3 491.1M961.3 491.1L953.6 491.4M953.6 491.4L946.2 491.9M946.2 491.9L939.3 492.5M939.3 492.5L932.9 493.1M932.9 493.1L927.0 493.9M927.0 493.9L921.7 494.8M921.7 494.8L917.0 495.8M917.0 495.8L913.0 496.8M913.0 496.8L909.6 497.9M909.6 497.9L908.9 498.2M908.9 498.2L907.0 499.0M907.0 499.0L905.1 500.2M905.1 500.2L904.0 501.4M904.0 501.4L903.6 502.6M1103.6 488.7L1103.2 486.7M1103.2 486.7L1102.1 484.8M1102.1 484.8L1100.2 482.8M1100.2 482.8L1098.3 481.4M1098.3 481.4L1097.6 480.9M1097.6 480.9L1094.2 479.1M1094.2 479.1L1090.2 477.3M1090.2 477.3L1085.5 475.6M1085.5 475.6L1080.2 473.9M1080.2 473.9L1074.3 472.7M1074.3 472.7L1067.9 471.6M1067.9 471.6L1061.0 470.7M1061.0 470.7L1053.6 469.8M1053.6 469.8L1045.9 469.1M1045.9 469.1L1037.8 468.5M1037.8 468.5L1029.5 468.0M1029.5 468.0L1021.0 467.7M1021.0 467.7L1012.3 467.4M1012.3 467.4L1003.6 467.4M1003.6 495.9L994.9 495.6M994.9 495.6L986.2 495.4M986.2 495.4L977.7 495.4M977.7 495.4L969.4 495.4M969.4 495.4L961.3 495.7M961.3 495.7L953.6 496.0M953.6 496.0L946.2 496.5M946.2 496.5L939.3 497.1M939.3 497.1L932.9 497.8M932.9 497.8L927.0 498.6M927.0 498.6L921.7 499.4M921.7 499.4L917.0 500.4M917.0 500.4L913.0 501.4M913.0 501.4L909.6 502.5M909.6 502.5L908.9 502.8M1098.3 486.1L1097.6 485.6M1097.6 485.6L1094.2 483.7M1094.2 483.7L1090.2 481.9M1090.2 481.9L1085.5 480.2M1085.5 480.2L1080.2 478.5M1080.2 478.5L1074.3 477.0M1074.3 477.0L1067.9 475.5M1067.9 475.5L1061.0 474.2M1061.0 474.2L1053.6 472.9M1053.6 472.9L1045.9 471.8M1045.9 471.8L1037.8 470.8M1037.8 470.8L1029.5 470.0M1029.5 470.0L1021.0 469.2M1021.0 469.2L1012.3 468.6M1012.3 468.6L1003.6 468.2M1003.6 467.4L994.9 467.4M994.9 467.4L986.2 467.7M986.2 467.7L985.2 467.7M1003.6 468.2L994.9 467.9M994.9 467.9L986.2 467.7M986.2 467.7L977.6 467.9M977.6 467.9L969.0 468.3M969.0 468.3L960.5 468.8M960.5 468.8L952.3 469.4M952.3 469.4L944.4 470.2M944.4 470.2L936.8 471.1M936.8 471.1L929.6 472.1M929.6 472.1L923.0 473.3M923.0 473.3L916.8 474.5M916.8 474.5L911.3 475.9M911.3 475.9L906.4 477.3M906.4 477.3L902.2 478.9M902.2 478.9L901.2 479.3M1003.6 464.3L993.4 464.4M993.4 464.4L983.3 464.6M983.3 464.6L973.3 465.0M973.3 465.0L963.6 465.6M963.6 465.6L954.2 466.3M954.2 466.3L945.1 467.1M945.1 467.1L936.5 468.1M936.5 468.1L928.4 469.3M928.4 469.3L920.9 470.5M920.9 470.5L914.0 471.9M914.0 471.9L907.8 473.4M907.8 473.4L902.3 474.9M902.3 474.9L897.6 476.6M897.6 476.6L893.7 478.3M893.7 478.3L892.8 478.8M892.8 478.8L890.6 480.1M890.6 480.1L888.4 481.9M888.4 481.9L887.0 483.7M887.0 483.7L886.6 485.6M1120.6 485.6L1120.2 483.7M1120.2 483.7L1118.8 481.9M1118.8 481.9L1116.6 480.1M1116.6 480.1L1114.4 478.8M1114.4 478.8L1113.5 478.3M1113.5 478.3L1109.6 476.6M1109.6 476.6L1104.9 474.9M1104.9 474.9L1099.4 473.4M1099.4 473.4L1093.2 471.9M1093.2 471.9L1086.3 470.5M1086.3 470.5L1078.8 469.3M1078.8 469.3L1070.7 468.1M1070.7 468.1L1062.1 467.1M1062.1 467.1L1053.0 466.3M1053.0 466.3L1043.6 465.6M1043.6 465.6L1033.9 465.0M1033.9 465.0L1023.9 464.6M1023.9 464.6L1013.8 464.4M1013.8 464.4L1003.6 464.3" fill="none" stroke="#26261f" stroke-width=".75" stroke-opacity=".42" stroke-dasharray="7 3.500"/></svg>
<div class="panel" style="left:4px;top:5px;width:300px;height:24px"></div><span class="t" style="left:29.20px;top:8.80px;font-size:10.9px;line-height:15px;color:#555;letter-spacing:-0.646px;">BROWSER</span><div class="abs" style="left:40.1px;top:34.3px;width:147.9px;height:24px;background:#f2f2f2"></div><div class="abs" style="left:58.2px;top:57px;width:133.6px;height:24px;background:#f2f2f2"></div><div class="abs" style="left:58.2px;top:81px;width:109.6px;height:24px;background:#f2f2f2"></div><div class="abs" style="left:58.2px;top:105px;width:94.8px;height:24px;background:#f2f2f2"></div><div class="abs" style="left:58.2px;top:128.7px;width:102.8px;height:24px;background:#f2f2f2"></div><div class="abs" style="left:76px;top:153px;width:90.7px;height:24px;background:#f2f2f2"></div><div class="abs" style="left:76px;top:176.5px;width:90.7px;height:22.3px;background:#f2f2f2"></div><div class="abs" style="left:65.100px;top:36.1px;width:97.700px;height:15.700px;background:#9b9b9b"></div><svg width="320" height="345" viewBox="0 0 320 345" style="left:0px;top:-137px" ><path d="M14 150.900v6.300l-4.800-3.150zM19.300 150.900v6.300l-4.800-3.150z" fill="#333"/><circle cx="287.300" cy="153.600" r="4.600" fill="#222"/><path d="M284.800 153.600h5" stroke="#f1f1f1" stroke-width="1.300"/><path d="M299.500 148v11.500M301.300 150v7.500" stroke="#555" stroke-width=".9"/><defs><linearGradient id="tg1" x1="0" y1="0" x2="1" y2="0"><stop offset="0" stop-color="#222"/><stop offset="1" stop-color="#9a9a9a"/></linearGradient></defs><path d="M21 186.3h10.600v-10.600z" fill="url(#tg1)" stroke="#222" stroke-width=".7" stroke-linejoin="round"/><path d="M43.2 181C46.5 174.7 55.5 174.7 58.8 181C55.5 187.3 46.5 187.3 43.2 181z" fill="#9a9a9a"/><circle cx="51" cy="181" r="3.500" fill="#f1f1f1"/><circle cx="51" cy="181" r="2" fill="#9a9a9a"/><path d="M68.4 188.1V177.7L72 174H83V184.3L79.2 188.1z" fill="#e9eaf0" stroke="#2a2a2a" stroke-width="1.100" stroke-linejoin="round"/><path d="M68.4 177.7H79.2V188.1M79.2 177.7L83 174" fill="none" stroke="#2a2a2a" stroke-width=".9"/><path d="M69.2 177.2L72.3 174.5H81.9L78.9 177.2z" fill="#fbfbfd"/><circle cx="173.400" cy="181.500" r="5.900" fill="#fff" stroke="#222" stroke-width="1.050"/><circle cx="173.400" cy="181.500" r="2.600" fill="#222"/><path d="M40.7 199.4v11.600l8.200-5.800z" fill="#e6e6ea" stroke="#222" stroke-width="1.300" stroke-linejoin="round"/><path d="M74.66 203.80L76.90 203.76L76.90 206.24L74.66 206.20L73.88 208.09L75.49 209.64L73.74 211.39L72.19 209.78L70.30 210.56L70.34 212.80L67.86 212.80L67.90 210.56L66.01 209.78L64.46 211.39L62.71 209.64L64.32 208.09L63.54 206.20L61.30 206.24L61.30 203.76L63.54 203.80L64.32 201.91L62.71 200.36L64.46 198.61L66.01 200.22L67.90 199.44L67.86 197.20L70.34 197.20L70.30 199.44L72.19 200.22L73.74 198.61L75.49 200.36L73.88 201.91z" fill="#8c8c8c"/><circle cx="69.1" cy="205" r="2.844" fill="#f1f1f1"/><path d="M40.7 223.4v11.600l8.200-5.800z" fill="#e6e6ea" stroke="#222" stroke-width="1.300" stroke-linejoin="round"/><path d="M61.2 222.8h6.200l1.600 1.500h8.200v11h-16z" fill="#8c8c8c"/><path d="M61.7 225.6h15" stroke="#f1f1f1" stroke-width=".6"/><path d="M40.7 247.4v11.600l8.200-5.800z" fill="#e6e6ea" stroke="#222" stroke-width="1.300" stroke-linejoin="round"/><path d="M61.6 253C64.7 247 73.7 247 76.8 253C73.7 259 64.7 259 61.6 253z" fill="none" stroke="#9d9d9d" stroke-width=".9"/><circle cx="69.2" cy="253" r="2.800" fill="none" stroke="#9d9d9d" stroke-width=".9"/><path d="M63.5 247.4L74.7 258.6" stroke="#777" stroke-width=".9"/><path d="M86 246.8h6.200l1.600 1.500h8.200v11h-16z" fill="#8c8c8c"/><path d="M86.5 249.6h15" stroke="#f1f1f1" stroke-width=".6"/><defs><linearGradient id="tg2" x1="0" y1="0" x2="1" y2="0"><stop offset="0" stop-color="#222"/><stop offset="1" stop-color="#9a9a9a"/></linearGradient></defs><path d="M39.2 282.4h10.600v-10.600z" fill="url(#tg2)" stroke="#222" stroke-width=".7" stroke-linejoin="round"/><path d="M61.4 277C64.7 270.7 73.7 270.7 77 277C73.7 283.3 64.7 283.3 61.4 277z" fill="#9a9a9a"/><circle cx="69.2" cy="277" r="3.500" fill="#f1f1f1"/><circle cx="69.2" cy="277" r="2" fill="#9a9a9a"/><path d="M86 270.8h6.200l1.600 1.500h8.200v11h-16z" fill="#8c8c8c"/><path d="M86.5 273.6h15" stroke="#f1f1f1" stroke-width=".6"/><path d="M79.5 301C82.6 295 91.6 295 94.7 301C91.6 307 82.6 307 79.5 301z" fill="none" stroke="#9d9d9d" stroke-width=".9"/><circle cx="87.1" cy="301" r="2.800" fill="none" stroke="#9d9d9d" stroke-width=".9"/><path d="M81.4 295.4L92.6 306.6" stroke="#777" stroke-width=".9"/><defs><linearGradient id="bg1" x1="0" y1="0" x2="1" y2="0"><stop offset="0" stop-color="#b9bdc8"/><stop offset=".5" stop-color="#f4f5f8"/><stop offset="1" stop-color="#c9ccd4"/></linearGradient></defs><rect x="104.5" y="293.5" width="14.800" height="14.600" rx="3.600" fill="#fff" stroke="#333" stroke-width="1.300"/><path d="M107.5 299.5h8.800v7.600h-8.800z" fill="url(#bg1)"/><ellipse cx="111.9" cy="299.5" rx="4.400" ry="1.200" fill="#fafafa"/><path d="M79.3 325C82.6 318.7 91.6 318.7 94.9 325C91.6 331.3 82.6 331.3 79.3 325z" fill="#9a9a9a"/><circle cx="87.1" cy="325" r="3.500" fill="#f1f1f1"/><circle cx="87.1" cy="325" r="2" fill="#9a9a9a"/><defs><linearGradient id="bg2" x1="0" y1="0" x2="1" y2="0"><stop offset="0" stop-color="#b9bdc8"/><stop offset=".5" stop-color="#f4f5f8"/><stop offset="1" stop-color="#c9ccd4"/></linearGradient></defs><rect x="104.5" y="317.5" width="14.800" height="14.600" rx="3.600" fill="#fff" stroke="#333" stroke-width="1.300"/><path d="M107.5 323.5h8.800v7.600h-8.800z" fill="url(#bg2)"/><ellipse cx="111.9" cy="323.5" rx="4.400" ry="1.200" fill="#fafafa"/></svg><span class="t" style="left:98.40px;top:36.50px;font-size:11px;line-height:15px;color:#fff;letter-spacing:0.147px;font-weight:bold;">(Unsaved)</span><span class="t" style="left:91.10px;top:61.20px;font-size:11px;line-height:15px;color:#222;letter-spacing:-0.196px;">Document Settings</span><span class="t" style="left:91.50px;top:85.20px;font-size:11px;line-height:15px;color:#222;letter-spacing:-0.060px;">Named Views</span><span class="t" style="left:116.10px;top:109.20px;font-size:11px;line-height:15px;color:#222;letter-spacing:-0.282px;">Origin</span><span class="t" style="left:116.10px;top:133.20px;font-size:11px;line-height:15px;color:#222;letter-spacing:-0.164px;">Bodies</span><span class="t" style="left:134.40px;top:157.20px;font-size:11px;line-height:15px;color:#222;letter-spacing:-0.209px;">Barb</span><span class="t" style="left:134.40px;top:181.20px;font-size:11px;line-height:15px;color:#222;letter-spacing:-0.586px;">Male</span><div class="abs" style="left:753px;top:5px;width:415px;height:22.500px;background:#f1f1f1"></div><div class="abs" style="left:1033px;top:5px;width:1px;height:22.500px;background:#d2d2d2"></div><svg width="1200" height="170" viewBox="0 0 1200 170" style="left:0px;top:-137px" ><path d="M761.100 151.500v-2.300a2.900 2.900 0 0 1 5.800 0v2.300" fill="none" stroke="#e02222" stroke-width="1.800"/><rect x="758" y="150.800" width="12" height="9.200" rx=".8" fill="#e02222"/><rect x="763.400" y="153.200" width="1.300" height="3.600" rx=".5" fill="#fff" opacity=".85"/></svg><span class="t" style="left:778.25px;top:8.80px;font-size:11px;line-height:15px;color:#222;letter-spacing:-0.067px;font-weight:bold;">Read-Only:</span><span class="t" style="left:858.00px;top:8.80px;font-size:11px;line-height:15px;color:#333;letter-spacing:-0.157px;">Document limit has been reached</span><span class="t" style="left:1046.75px;top:8.80px;font-size:11px;line-height:15px;color:#0b78c0;letter-spacing:-0.293px;">My Editable Documents</span><div class="panel" style="left:4px;top:816.3px;width:300px;height:24px"></div><span class="t" style="left:29.30px;top:820.70px;font-size:10.9px;line-height:15px;color:#555;letter-spacing:-0.860px;">COMMENTS</span><svg width="320" height="982" viewBox="0 0 320 982" style="left:0px;top:-137px" ><circle cx="287.300" cy="965.300" r="4.600" fill="#222"/><path d="M284.700 965.300h5.200M287.300 962.700v5.200" stroke="#f1f1f1" stroke-width="1.300"/><path d="M299.500 960v11.500M301.300 962v7.500" stroke="#555" stroke-width=".9"/></svg><svg width="1920" height="300" viewBox="0 0 1920 300" style="left:0px;top:-137px" ><defs><linearGradient id="vcf" x1="0" y1="0" x2="0" y2="1"><stop offset="0" stop-color="#dcdcdc" stop-opacity=".85"/><stop offset="1" stop-color="#c4c4c4" stop-opacity=".9"/></linearGradient><filter id="vcb" x="-20%" y="-50%" width="140%" height="200%"><feGaussianBlur stdDeviation="2.500"/></filter></defs><path d="M1828 230L1874 237L1890 222L1880 219z" fill="#000" opacity=".12" filter="url(#vcb)"/><path d="M1824.600 177.800L1835.600 175L1885.700 176.900L1870.900 179.400z" fill="#e9e9e9" fill-opacity=".85"/><path d="M1870.900 179.400L1885.700 176.900V216C1885.700 219 1884.500 220.500 1882.500 222.200L1870.900 232.400z" fill="#d2d2d2" fill-opacity=".85"/><path d="M1824.600 177.800L1870.900 179.400V232.400L1824.600 227.800z" fill="url(#vcf)"/><path d="M1825 177.600L1836 175L1885.500 176.700M1870.900 179.400L1885.700 176.900" fill="none" stroke="#777" stroke-width=".7" stroke-dasharray="4 2.500"/><path d="M1870.900 180.500V231.500" stroke="#777" stroke-width=".7" stroke-dasharray="9 2"/><path d="M1885.700 177V216" stroke="#8a8a8a" stroke-width=".7"/><path d="M1826 178.300L1870.900 179.800" stroke="#888" stroke-width=".6" stroke-dasharray="6 3"/><path d="M1822.700 169.900L1824.400 227.800" stroke="#3d3df0" stroke-width="2.300" stroke-linecap="round"/><path d="M1824.400 227.800L1879.500 235" stroke="#e87878" stroke-width="2" stroke-linecap="round"/><path d="M1818.700 157.200h6.600l-6.600 9.200h6.800" fill="none" stroke="#5a5af5" stroke-width="1.300"/><path d="M1883.400 231.300l6.400 9.600M1889.800 231.300l-6.400 9.600" stroke="#f08a8a" stroke-width="1.400"/><text x="1831" y="208" font-family="Liberation Sans,sans-serif" font-size="11.300" font-weight="bold" fill="#858a92" textLength="33.400" lengthAdjust="spacingAndGlyphs" transform="rotate(2.200 1831 209)">FRONT</text><text font-family="Liberation Sans,sans-serif" font-size="10.500" font-weight="bold" fill="#8a8f98" transform="translate(1874.300 209.500) rotate(-10) scale(.5 1)">RIG</text></svg><svg width="1920" height="982" viewBox="0 0 1920 982" style="left:0px;top:-137px" ><rect x="841.400" y="955.200" width="236.100" height="21.300" fill="#f0f0f0" fill-opacity=".93"/><path d="M852.200 973.600V960.500M850.200 962.600l2-3.300 2 3.300" fill="none" stroke="#2f2f2f" stroke-width="1.100"/><rect x="851.200" y="961" width="2" height="12.600" fill="#fff" stroke="#2f2f2f" stroke-width=".8"/><path d="M849.800 964.800C846 965.600 844.300 967 844.600 968.300C845.200 970.300 851 971 855.500 970.200C859 969.500 860.500 968 859.800 966.700C859.400 966 858.200 965.400 856.500 965" fill="none" stroke="#2f2f2f" stroke-width="1.200"/><path d="M848.500 967.500l-3.300 2.700 4 1.700z" fill="#2f2f2f"/><path d="M877.500 973.500V963.500H892.500V973.500z" fill="#f6f6f8" stroke="#2f2f2f" stroke-width="1.100"/><rect x="880.200" y="967.300" width="9.600" height="3.700" fill="#9aa3b8" stroke="#2f2f2f" stroke-width=".7"/><path d="M879 963.300L883 959L885.500 961L888.500 958.800L890.500 960L891 963.300" fill="#cfd4e0" stroke="#2f2f2f" stroke-width=".9"/><path d="M906.500 966.500C905 964.800 903.600 965.500 904 966.800C905 969 907 972.300 908.500 973.500H915C916.500 971.500 917.500 968 917.800 962.800C917.900 961.500 916.200 961.300 916 962.600L915.600 965.500L915.300 960.200C915.200 958.900 913.600 958.900 913.500 960.200L913.300 964.800L912.800 959.300C912.700 958 911 958 911 959.300V964.800L910.200 960.300C910 959 908.400 959.200 908.500 960.500L908.800 968.500z" fill="#fff" stroke="#2f2f2f" stroke-width=".9" stroke-linejoin="round"/><circle cx="934.800" cy="964.800" r="4.600" fill="#dfeef0" stroke="#2f2f2f" stroke-width="1.200"/><path d="M938.300 968.600L942.500 972.800" stroke="#2f2f2f" stroke-width="2.400" stroke-linecap="round"/><path d="M940.500 960.500h4.400M942.700 958.300v4.400M940.500 964.600h4.400" stroke="#2f2f2f" stroke-width=".9"/><rect x="955.600" y="958.600" width="14.600" height="14.600" fill="none" stroke="#2f2f2f" stroke-width=".9" stroke-dasharray="2.200 1.600"/><circle cx="962" cy="964.500" r="5.700" fill="#dfeef0" stroke="#2f2f2f" stroke-width="1.200"/><path d="M966.300 969L970.300 973" stroke="#2f2f2f" stroke-width="2.400" stroke-linecap="round"/><rect x="988.600" y="958.600" width="15" height="11.600" rx=".8" fill="#f4f4f4" stroke="#2f2f2f" stroke-width="1.200"/><rect x="990.800" y="960.800" width="10.600" height="7.200" fill="#8eaee0" stroke="#4a6fb0" stroke-width=".6"/><path d="M993.500 970.500L992.500 973.300H999.700L998.700 970.500z" fill="#e8e8e8" stroke="#2f2f2f" stroke-width=".7"/><defs><linearGradient id="ngr" x1="0" y1="0" x2="0" y2="1"><stop offset="0" stop-color="#fff"/><stop offset="1" stop-color="#8a94ad"/></linearGradient></defs><rect x="1019.600" y="958.600" width="14.800" height="14.800" fill="url(#ngr)" stroke="#2f2f2f" stroke-width="1"/><path d="M1023.3 958.600v14.800M1019.600 962.3h14.800M1027 958.600v14.800M1019.600 966h14.800M1030.7 958.600v14.800M1019.600 969.7h14.800" stroke="#2f2f2f" stroke-width=".8" fill="none"/><rect x="1050" y="958.8" width="7.100" height="6.700" rx=".8" fill="#8eaee0" stroke="#2f4f96" stroke-width="1.100"/><rect x="1051.8" y="960.7" width="3.500" height="2.900" fill="#b8cdf0"/><rect x="1058" y="958.8" width="7.100" height="6.700" rx=".8" fill="#8eaee0" stroke="#2f4f96" stroke-width="1.100"/><rect x="1059.8" y="960.7" width="3.500" height="2.900" fill="#b8cdf0"/><rect x="1050" y="966.4" width="7.100" height="6.700" rx=".8" fill="#8eaee0" stroke="#2f4f96" stroke-width="1.100"/><rect x="1051.8" y="968.3" width="3.500" height="2.900" fill="#b8cdf0"/><rect x="1058" y="966.4" width="7.100" height="6.700" rx=".8" fill="#8eaee0" stroke="#2f4f96" stroke-width="1.100"/><rect x="1059.8" y="968.3" width="3.500" height="2.900" fill="#b8cdf0"/><path d="M865.4 963.200h5.600l-2.800 3.600z" fill="#2f2f2f"/><path d="M976 963.200h5.600l-2.800 3.600z" fill="#2f2f2f"/><path d="M1006.5 963.200h5.600l-2.800 3.600z" fill="#2f2f2f"/><path d="M1037.5 963.200h5.600l-2.800 3.600z" fill="#2f2f2f"/><path d="M1068 963.200h5.600l-2.800 3.600z" fill="#2f2f2f"/></svg>
</div>
<div id="timeline" class="abs"></div>
<svg width="1920" height="1032" viewBox="0 0 1920 1032" style="left:0px;top:0px" ><path d="M10.900 1001.100h2.100v13.900h-2.100zM23.100 1001.100v13.900l-9.800-6.950zM45 1001.500v13.200l-9.800-6.600zM46 1004.800h2.100v6.200h-2.100zM60.900 1000.100v15.900l12-7.950zM84.900 1004.800h2.100v6.200h-2.100zM88 1001.500v13.200l9.900-6.600zM110.900 1001.100v13.900l9.900-6.950zM121 1001.100h2.100v13.900h-2.100z" fill="#4d4d50"/><path d="M145.8 1001.6V1012.4A8.1 2.6 0 0 0 162 1012.4V1001.6z" fill="#6ab0e6"/><ellipse cx="153.9" cy="1001.6" rx="8.1" ry="2.6" fill="#8ecdfa"/><path d="M169.8 1001.6V1012.4A8.1 2.6 0 0 0 186 1012.4V1001.6z" fill="#6ab0e6"/><ellipse cx="177.9" cy="1001.6" rx="8.1" ry="2.6" fill="#8ecdfa"/><path d="M193.8 1011.8H205.9V1014.5H193.8z" fill="#b8b8b8"/><path d="M193.8 1011.8l3 -2.8H208.9L205.9 1011.8z" fill="#b8b8b8"/><path d="M205.9 1011.8l3 -2.8V1011.7L205.9 1014.5z" fill="#9a9a9a"/><path d="M193.8 1002H203.1V1011.8H193.8z" fill="#6ab0e6"/><path d="M193.8 1002l2.8 -2.8H205.9L203.1 1002z" fill="#8ecdfa"/><path d="M203.1 1002l2.8 -2.8V1009L203.1 1011.8z" fill="#4792cf"/><path d="M208.6 1011.800V1001.500" stroke="#222" stroke-width="1"/><path d="M208.6 999.500l1.900 3.400h-3.800z" fill="#222"/><path d="M217.9 1011.8H230V1014.5H217.9z" fill="#b8b8b8"/><path d="M217.9 1011.8l3 -2.8H233L230 1011.8z" fill="#b8b8b8"/><path d="M230 1011.8l3 -2.8V1011.7L230 1014.5z" fill="#9a9a9a"/><path d="M217.9 1002H227.2V1011.8H217.9z" fill="#6ab0e6"/><path d="M217.9 1002l2.8 -2.8H230L227.2 1002z" fill="#8ecdfa"/><path d="M227.2 1002l2.8 -2.8V1009L227.2 1011.8z" fill="#4792cf"/><path d="M232.7 1011.800V1001.500" stroke="#222" stroke-width="1"/><path d="M232.7 999.500l1.900 3.400h-3.800z" fill="#222"/><path d="M242 1007L249.5 999.4H253.5L257.8 1004V1014.7H246L242 1010.5z" fill="#dcdcdc" stroke="#555" stroke-width=".9" stroke-linejoin="round"/><path d="M243.2 1005.5L249.2 1000L252.8 1003.5L246.4 1009.2z" fill="#6ab0e6"/><path d="M266 1007L273.5 999.4H277.5L281.8 1004V1014.7H270L266 1010.5z" fill="#dcdcdc" stroke="#555" stroke-width=".9" stroke-linejoin="round"/><path d="M267.2 1005.5L273.2 1000L276.8 1003.5L270.4 1009.2z" fill="#6ab0e6"/><path d="M290 1007L297.5 999.4H301.5L305.8 1004V1014.7H294L290 1010.5z" fill="#dcdcdc" stroke="#555" stroke-width=".9" stroke-linejoin="round"/><path d="M291.2 1005.5L297.2 1000L300.8 1003.5L294.4 1009.2z" fill="#6ab0e6"/><path d="M313.8 1006.3H322.8V1014.7H313.8z" fill="#6ab0e6"/><path d="M313.8 1006.3l2.2 -2.2H325L322.8 1006.3z" fill="#8ecdfa"/><path d="M322.8 1006.3l2.2 -2.2V1012.5L322.8 1014.7z" fill="#4792cf"/><path d="M319.1 1001.4H327.8V1009.8H319.1z" fill="#6ab0e6"/><path d="M319.1 1001.4l2.2 -2.2H330L327.8 1001.4z" fill="#8ecdfa"/><path d="M327.8 1001.4l2.2 -2.2V1007.6L327.8 1009.8z" fill="#4792cf"/><rect x="319" y="1006.300" width="3.900" height="5" fill="#6ab0e6"/><path d="M337.9 1001.6V1012.4A8.1 2.6 0 0 0 354.1 1012.4V1001.6z" fill="#6ab0e6"/><ellipse cx="346" cy="1001.6" rx="8.1" ry="2.6" fill="#8ecdfa"/><rect x="365.3" y="999.800" width="10" height="14.500" fill="#f4f4f4" stroke="#8a8a8a" stroke-width="1"/><path d="M362.8 1005.3L378.1 1002" stroke="#1e8fe6" stroke-width="1.200"/><path d="M362.8 1007.6L378.1 1004.3" stroke="#1e8fe6" stroke-width="1.200"/><path d="M362.8 1009.9L378.1 1006.6" stroke="#1e8fe6" stroke-width="1.200"/><path d="M362.8 1012.2L378.1 1008.9" stroke="#1e8fe6" stroke-width="1.200"/><path d="M154.400 1023.600H370.600" stroke="#c6c6c6" stroke-width="1.700"/><path d="M155.2 1018v6M178.1 1018v6M201.9 1018v6M225.9 1018v6M249.8 1018v6M273.9 1018v6M297.9 1018v6M321.9 1018v6M346 1018v6M369.9 1018v6" stroke="#c6c6c6" stroke-width="1.600"/><path d="M375.900 992.900h12.300v3.600l-5.200 5h-1.900l-5.200-5z" fill="#5c5c5c"/><rect x="381" y="998" width="2.100" height="27" fill="#5c5c5c"/><path d="M1904.77 1006.26L1907.20 1006.20L1907.20 1008.80L1904.77 1008.74L1903.96 1010.70L1905.71 1012.38L1903.88 1014.21L1902.20 1012.46L1900.24 1013.27L1900.30 1015.70L1897.70 1015.70L1897.76 1013.27L1895.80 1012.46L1894.12 1014.21L1892.29 1012.38L1894.04 1010.70L1893.23 1008.74L1890.80 1008.80L1890.80 1006.20L1893.23 1006.26L1894.04 1004.30L1892.29 1002.62L1894.12 1000.79L1895.80 1002.54L1897.76 1001.73L1897.70 999.30L1900.30 999.30L1900.24 1001.73L1902.20 1002.54L1903.88 1000.79L1905.71 1002.62L1903.96 1004.30z" fill="#7a7a7a"/><circle cx="1899" cy="1007.5" r="2.7" fill="#f1f1f1"/></svg>
<div id="taskbar" class="abs"></div>
<svg width="1920" height="1080" viewBox="0 0 1920 1080" style="left:0px;top:0px" ><defs><linearGradient id="wg" x1="0" y1="0" x2="1" y2="1"><stop offset="0" stop-color="#7fe6ff"/><stop offset="1" stop-color="#1392e6"/></linearGradient></defs><rect x="596.7" y="1044.9" width="11.300" height="11" rx=".8" fill="url(#wg)"/><rect x="608.9" y="1044.9" width="11.300" height="11" rx=".8" fill="url(#wg)"/><rect x="596.7" y="1056.8" width="11.300" height="11" rx=".8" fill="url(#wg)"/><rect x="608.9" y="1056.8" width="11.300" height="11" rx=".8" fill="url(#wg)"/><circle cx="654.200" cy="1053.800" r="7.600" fill="#3a3a3a" stroke="#f0f0f0" stroke-width="2.600"/><path d="M648.600 1059.800L643.600 1065.600" stroke="#d8d8d8" stroke-width="3" stroke-linecap="round"/><rect x="684.800" y="1050.700" width="18.200" height="15.700" rx="1" fill="#7a7a7a"/><rect x="691" y="1044.900" width="18.200" height="15.800" rx="1" fill="#f4f4f4"/><rect x="691" y="1050.700" width="12" height="10" fill="#bdbdbd"/><rect x="729.200" y="1045" width="23.800" height="21.400" rx="1.500" fill="#1565c0"/><rect x="731.600" y="1047.300" width="8.600" height="16.800" rx=".8" fill="#f4f8ff"/><rect x="742.200" y="1047.300" width="8.600" height="9" rx=".8" fill="#6fd0ff"/><rect x="742.200" y="1058" width="8.600" height="6.100" rx=".8" fill="#2ea3f2"/><defs><linearGradient id="cg" x1="0" y1="0" x2="1" y2="1"><stop offset="0" stop-color="#9a86e6"/><stop offset="1" stop-color="#5558c4"/></linearGradient></defs><path d="M784.800 1043.800a11.500 11.500 0 1 1-6 21.300l-5 1.700 1.500-4.800a11.500 11.500 0 0 1 9.500-18.200z" fill="url(#cg)"/><rect x="778" y="1050.800" width="9.600" height="8.600" rx="1.600" fill="#fff"/><path d="M788.400 1054l4-2.600v7.400l-4-2.600z" fill="#fff"/><path d="M816.700 1047.500c0-1.300.8-2.200 2-2.200h6l2.300 2.300h12.500c1 0 1.500.6 1.500 1.500v16c0 .8-.6 1.300-1.400 1.300h-21.500c-.8 0-1.400-.5-1.400-1.300z" fill="#e8a520"/><path d="M816.700 1051h24.300v14c0 .9-.6 1.400-1.400 1.400h-21.500c-.8 0-1.400-.5-1.400-1.400z" fill="#ffd257"/><path d="M822.500 1060.500c0-1 .6-1.500 1.500-1.500h9.800c.9 0 1.500.5 1.500 1.500v5.900h-12.800z" fill="#1f7fd4"/><rect x="825" y="1061" width="7.800" height="1.600" rx=".8" fill="#5cb2f5"/><path d="M872.300 1045.800a10.800 10.800 0 1 1-5.500 20.100l-5.700 1.500 1.600-5.500a10.800 10.800 0 0 1 9.600-16.100z" fill="#fff"/><path d="M872.300 1047.500a9.100 9.100 0 1 1-4.800 16.800l-3.600.9 1-3.400a9.100 9.100 0 0 1 7.400-14.300z" fill="#2bb741"/><path d="M868.600 1051.600c.5-.5 1.200-.4 1.500.1l1 1.900c.2.400.1.900-.2 1.200l-.7.700c.7 1.500 1.900 2.700 3.400 3.400l.7-.7c.3-.3.800-.4 1.200-.2l1.900 1c.5.300.6 1 .1 1.500-1 1.100-2.400 1.400-3.800.9-3-1.100-5.300-3.400-6.400-6.400-.5-1.400-.2-2.400 1.300-3.400z" fill="#fff"/><circle cx="882.700" cy="1046.600" r="7.500" fill="#e81123"/><defs><linearGradient id="eg" x1="0" y1="0" x2="1" y2="1"><stop offset="0" stop-color="#35c1f1"/><stop offset=".6" stop-color="#1b77d3"/><stop offset="1" stop-color="#0c59a4"/></linearGradient><linearGradient id="eg2" x1="0" y1="0" x2="1" y2="0"><stop offset="0" stop-color="#2fbfe0"/><stop offset="1" stop-color="#6cd84a"/></linearGradient></defs><circle cx="917" cy="1055.400" r="12" fill="url(#eg)"/><path d="M905.300 1052.500c1-6 6-9.200 11.700-9.200 7 0 12 5 12 10.500 0 4-3 6.500-6.500 6.500-3 0-4.500-1.300-4.500-2.600 0-.8.800-1.200.8-2.500 0-2.400-2.300-4.500-5.800-4.500-3.500 0-6.500 1.300-7.700 1.800z" fill="url(#eg2)"/><path d="M912 1052.500c-2 3-1 9 4.500 12.500 3 1.800 7 1.800 9.500.5-2.500 1-6 .3-8-2.500-1.700-2.400-1.500-5.500.2-7.200z" fill="#0a4f9e"/><rect x="949.400" y="1046.200" width="22.300" height="18.700" rx="1" fill="#050505" stroke="#8f8f8f" stroke-width="1"/><rect x="950" y="1046.800" width="21.100" height="2.300" fill="#cfcfcf"/><path d="M952.300 1053.600h6M959.500 1054.200h5" stroke="#e8e8e8" stroke-width="1.100"/><rect x="992.900" y="1044" width="24.100" height="23.400" rx="3" fill="#f37623"/><path d="M998 1050c1.800-2 4.600-1.500 5.800.2l1.200 1.600 1.200-1.600c1.200-1.700 4-2.200 5.800-.2 1.500 1.700 1.300 4-.3 5.700 1.600 1.700 1.800 4 .3 5.700-1.800 2-4.600 1.500-5.800-.2l-1.200-1.600-1.200 1.600c-1.200 1.700-4 2.200-5.800.2-1.500-1.700-1.300-4 .3-5.700-1.600-1.700-1.800-4-.3-5.700z" fill="#fff"/><path d="M1001.500 1053.500h7v4.400h-7z" fill="#f37623"/><path d="M1000 1051.800h2.500M1007.500 1051.800h2.500M1000 1059.600h2.500M1007.500 1059.600h2.500" stroke="#f37623" stroke-width="1.500"/><circle cx="1048.75" cy="1056" r="11.500" fill="#fbc116"/><path d="M1048.75 1056L1038.79 1050.25A11.500 11.500 0 0 1 1058.71 1050.25L1053.75 1054z" fill="#e33b2e"/><path d="M1038.79 1050.25A11.500 11.500 0 0 1 1058.71 1050.25z" fill="#e33b2e"/><path d="M1048.75 1056L1038.79 1050.25A11.500 11.500 0 0 0 1048.75 1067.5L1050.75 1060z" fill="#2ba24c"/><circle cx="1048.75" cy="1056" r="5.300" fill="#fff"/><circle cx="1048.75" cy="1056" r="4.200" fill="#2f7de1"/><circle cx="1093" cy="1056" r="12" fill="#5fb57d"/><g fill="none" stroke="#fff" stroke-width="1"><ellipse cx="1093" cy="1056" rx="8.500" ry="3.300" transform="rotate(60 1093 1056)"/><ellipse cx="1093" cy="1056" rx="8.500" ry="3.300" transform="rotate(-60 1093 1056)"/><ellipse cx="1093" cy="1056" rx="8.500" ry="3.300"/></g><circle cx="1093" cy="1056" r="1.400" fill="#fff"/><path d="M1136.800 1044l11.500 5.600v12.600l-11.500 5.600-11.400-5.600v-12.600z" fill="#1f6fe0"/><path d="M1136.800 1055.200l11.500-5.600v12.600l-11.500 5.600z" fill="#1552b8"/><path d="M1136.800 1044l11.500 5.600-11.500 5.600-11.400-5.600z" fill="#3f8df5"/><path d="M1136.800 1048.200l5.800 2.800v6.400l-5.800 2.800-5.700-2.800v-6.400z" fill="#f59a23"/><path d="M1136.800 1053.800l5.800-2.800v6.400l-5.800 2.800z" fill="#d47a10"/><path d="M1125.400 1055.900l11.400 5.600 11.500-5.600M1131.100 1046.800v17.500M1142.500 1046.800v17.500" stroke="#0d3f94" stroke-width=".7" fill="none"/><circle cx="1181" cy="1056" r="11.600" fill="#fff"/><path d="M1175.600 1052.200h5.200a1.500 1.500 0 0 1 0 3h-5.200a1.500 1.500 0 0 1 0-3zM1180.800 1048.200a1.500 1.500 0 0 1 1.500 1.500v1.500h-1.500a1.500 1.500 0 0 1 0-3z" fill="#36c5f0"/><path d="M1184.800 1050.600v5.200a1.500 1.500 0 0 1-3 0v-5.200a1.500 1.500 0 0 1 3 0zM1188.800 1055.800a1.500 1.500 0 0 1-1.500 1.500h-1.500v-1.500a1.500 1.500 0 0 1 3 0z" fill="#2eb67d"/><path d="M1186.400 1059.800h-5.200a1.500 1.500 0 0 1 0-3h5.200a1.500 1.500 0 0 1 0 3zM1181.200 1063.800a1.500 1.500 0 0 1-1.500-1.500v-1.500h1.500a1.500 1.500 0 0 1 0 3z" fill="#ecb22e"/><path d="M1177.200 1061.400v-5.200a1.500 1.500 0 0 1 3 0v5.200a1.500 1.500 0 0 1-3 0zM1173.200 1056.200a1.500 1.500 0 0 1 1.500-1.500h1.500v1.500a1.500 1.500 0 0 1-3 0z" fill="#e01e5a"/><path d="M1224.800 1044.800l10.600 10.800c.8.900.3 1.800-.6 2l-4 .8 1 1.600-3.800 1.200-1.800-1-1.600 1.800 2 1.400-1.800 2-2.600-.6-3-1.800 1.200-2-2.400-1.400-3.600-.600c-1.200-.300-1.400-1.300-.600-2.200z" fill="#0a0a0a" stroke="#2a2a2a" stroke-width=".5"/><path d="M1224.800 1046l5.200 5.400-2 2-1.700-1.600-1.500 2.400-1.800-2.600-2 1.800-1.600-1.600z" fill="#f4f4f4"/><path d="M1216 1055.500l4-1 2 1.500h5l2-1.200 4 .700" stroke="#7fa0c8" stroke-width=".8" fill="none"/><rect x="1249.200" y="1035.800" width="36" height="40" rx="4" fill="#2e2e2e" stroke="#3a3a3a" stroke-width=".8"/><path d="M1285.400 1037.500h1.400a2 2 0 0 1 2 2v32a2 2 0 0 1-2 2h-1.400z" fill="#343434"/><defs><linearGradient id="fl2" x1="0" y1="0" x2="1" y2="1"><stop offset="0" stop-color="#fbe6cc"/><stop offset="1" stop-color="#f3c48f"/></linearGradient></defs><rect x="1256.700" y="1043.500" width="24.300" height="24.300" fill="url(#fl2)"/><path d="M1262.600 1047.400h11.800v4.200h-6.800v3.800h5.400v4.100h-5.400v5.700h-5z" fill="#e8741e"/><path d="M1262.600 1047.400h11.800l-1.500 1.500h-8.700v15l-1.600 1.300z" fill="#b4500f" opacity=".5"/><rect x="1273" y="1062.500" width="6.400" height="2.600" fill="#e89a58"/><rect x="1261.200" y="1072" width="15.700" height="2.700" rx="1.350" fill="#4cc2ff"/><path d="M1321.80 1053.41L1325.05 1053.39L1325.05 1057.21L1321.80 1057.19L1320.56 1060.18L1322.87 1062.47L1320.17 1065.17L1317.88 1062.86L1314.89 1064.10L1314.91 1067.35L1311.09 1067.35L1311.11 1064.10L1308.12 1062.86L1305.83 1065.17L1303.13 1062.47L1305.44 1060.18L1304.20 1057.19L1300.95 1057.21L1300.95 1053.39L1304.20 1053.41L1305.44 1050.42L1303.13 1048.13L1305.83 1045.43L1308.12 1047.74L1311.11 1046.50L1311.09 1043.25L1314.91 1043.25L1314.89 1046.50L1317.88 1047.74L1320.17 1045.43L1322.87 1048.13L1320.56 1050.42z" fill="#8d97a1"/><circle cx="1313" cy="1055.3" r="4.392" fill="#1f1f1f"/><circle cx="1313" cy="1055.300" r="5.600" fill="#fff"/><circle cx="1313" cy="1055.300" r="4.300" fill="#0a5fc2"/><rect x="826.4" y="1072.300" width="5.400" height="2.300" rx="1.150" fill="#8e8e8e"/><rect x="869.6" y="1072.300" width="5.400" height="2.300" rx="1.150" fill="#8e8e8e"/><rect x="1046.05" y="1072.300" width="5.400" height="2.300" rx="1.150" fill="#8e8e8e"/><rect x="1310.3" y="1072.300" width="5.400" height="2.300" rx="1.150" fill="#8e8e8e"/><path d="M1640.300 1058.600l5.800-5.800 5.800 5.800" fill="none" stroke="#f2f2f2" stroke-width="1.200"/><path d="M1671 1055a7.200 7.200 0 0 1 12.800-3.400M1684.800 1056.500a7.200 7.200 0 0 1-12.800 3.600" fill="none" stroke="#f2f2f2" stroke-width="1.100"/><path d="M1680.400 1051.800h3.600v-3.600M1675.400 1060h-3.600v3.600" fill="none" stroke="#f2f2f2" stroke-width="1.100"/><circle cx="1681.800" cy="1060.200" r="4" fill="#ff9a0a"/><path d="M1745.800 1053.600a11.600 11.600 0 0 1 16.400 0M1748.300 1056.300a8 8 0 0 1 11.400 0M1750.800 1058.900a4.400 4.400 0 0 1 6.400 0" fill="none" stroke="#f2f2f2" stroke-width="1.300" stroke-linecap="round"/><circle cx="1754" cy="1061.200" r="1.200" fill="#f2f2f2"/><path d="M1770 1053.300h2.600l3.800-3.300v11.600l-3.800-3.300h-2.600z" fill="none" stroke="#f2f2f2" stroke-width="1.100" stroke-linejoin="round"/><path d="M1778.600 1053.200a3.600 3.600 0 0 1 0 5.200M1780.800 1051a6.600 6.600 0 0 1 0 9.600" fill="none" stroke="#f2f2f2" stroke-width="1.100" stroke-linecap="round"/><path d="M1783 1048.900a9.600 9.600 0 0 1 0 13.800" fill="none" stroke="#777" stroke-width="1.100" stroke-linecap="round"/><rect x="1798.200" y="1051.600" width="10.600" height="8.600" rx="1.200" fill="none" stroke="#f2f2f2" stroke-width="1.100"/><path d="M1809.500 1054v3.800" stroke="#f2f2f2" stroke-width="1.400"/><rect x="1799.600" y="1053" width="5.800" height="5.800" fill="#f2f2f2"/><path d="M1794.400 1052.400h4v3.600h-1v2.200h-1v2.600h-1v-2.600h-1zM1795.200 1050.400v2M1797.600 1050.400v2" fill="#f2f2f2" stroke="#f2f2f2" stroke-width=".9"/><circle cx="1891.900" cy="1056.200" r="8.100" fill="#4cc2ff"/></svg><span class="t" style="left:880.40px;top:1038.80px;font-size:11.5px;line-height:16px;color:#fff;letter-spacing:-1.795px;">1</span><span class="t" style="left:1704.40px;top:1040.70px;font-size:11.8px;line-height:17px;color:#fff;letter-spacing:-0.823px;">ENG</span><span class="t" style="left:1708.60px;top:1056.50px;font-size:11.8px;line-height:17px;color:#fff;letter-spacing:-0.945px;">US</span><span class="t" style="left:1836.40px;top:1039.80px;font-size:11.8px;line-height:17px;color:#fff;letter-spacing:-0.585px;">7:51 PM</span><span class="t" style="left:1825.20px;top:1056.00px;font-size:11.8px;line-height:17px;color:#fff;letter-spacing:-0.064px;">2/11/2022</span><span class="t" style="left:1889.00px;top:1048.80px;font-size:11px;line-height:15px;color:#111;letter-spacing:-0.317px;">7</span>
</body></html>
